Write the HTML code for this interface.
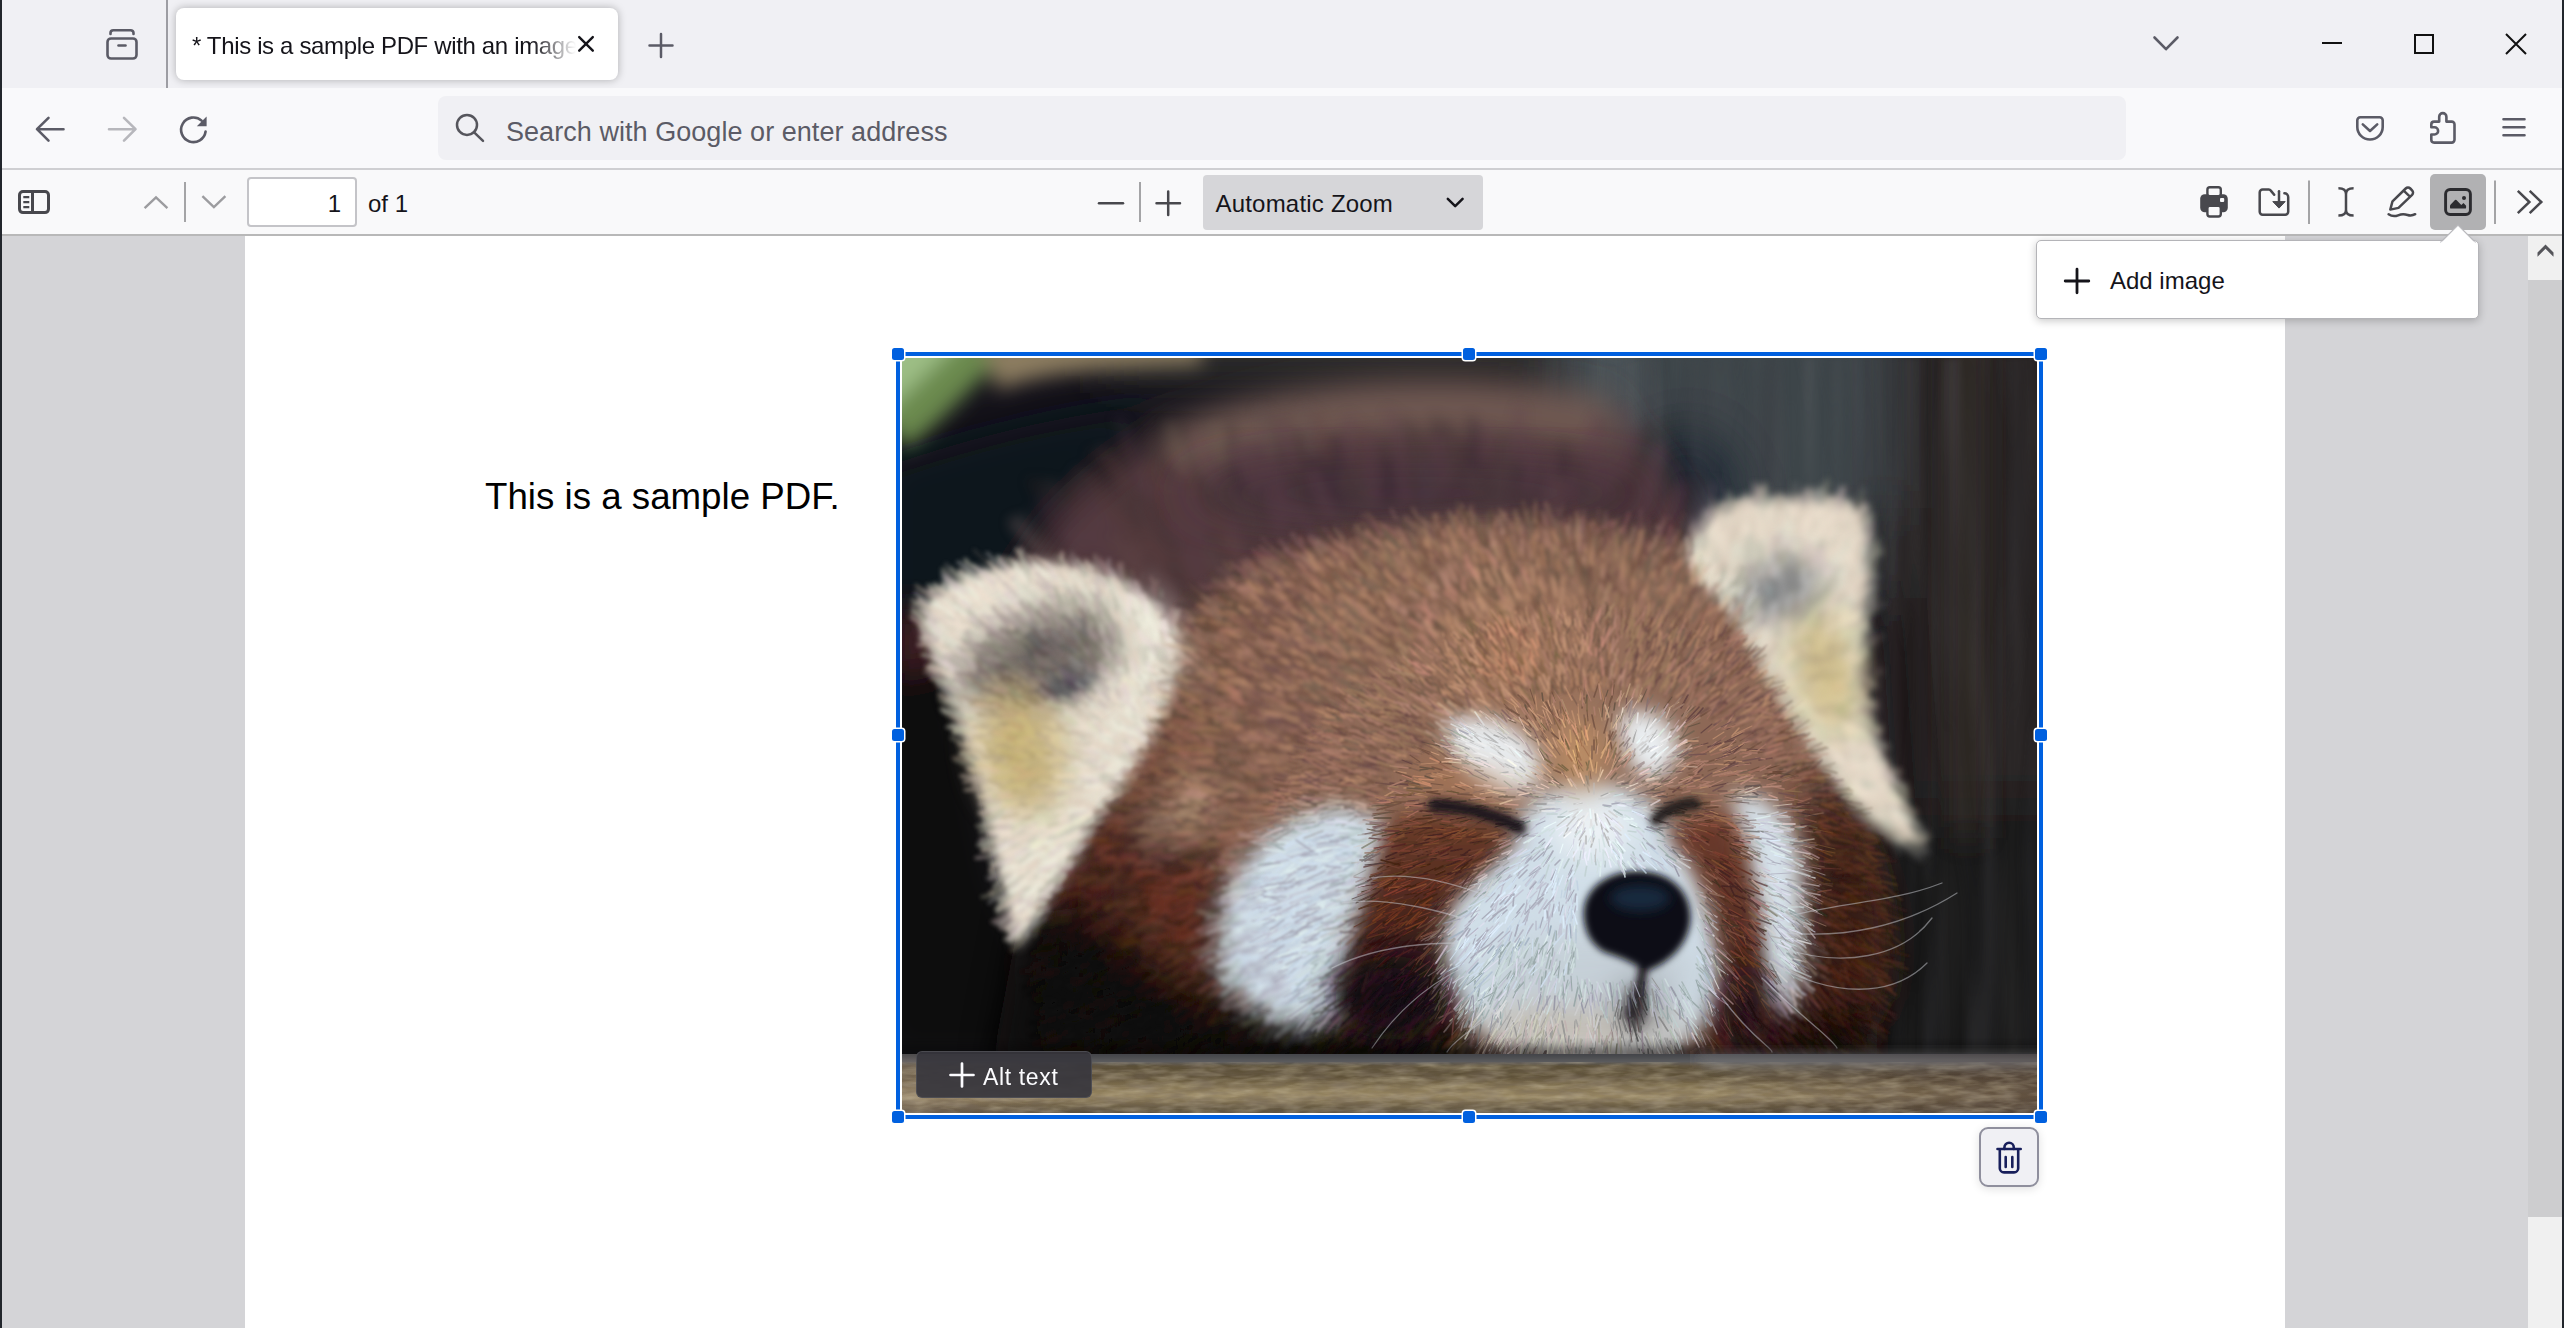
<!DOCTYPE html>
<html lang="en">
<head>
<meta charset="utf-8">
<title>* This is a sample PDF with an image</title>
<style>
*{box-sizing:border-box;margin:0;padding:0}
html,body{width:2564px;height:1328px;overflow:hidden;background:#d4d4d7}
body{font-family:"Liberation Sans",sans-serif;color:#15141a;position:relative}
.abs{position:absolute}
svg{position:absolute;overflow:visible}
.ico{fill:none;stroke:#5b5b66;stroke-width:2.6;stroke-linecap:round;stroke-linejoin:round}
.pico{fill:none;stroke:#4a4a4f;stroke-width:3;stroke-linecap:round;stroke-linejoin:round}
#tabbar{left:0;top:0;width:2564px;height:88px;background:#f0f0f4}
#navbar{left:0;top:88px;width:2564px;height:80px;background:#f9f9fb}
#navsep{left:0;top:168px;width:2564px;height:2px;background:#cfcfd2}
#pdfbar{left:0;top:170px;width:2564px;height:64px;background:#f9f9fa}
#pdfsep{left:0;top:234px;width:2564px;height:2px;background:#b8b8b8}
#viewer{left:0;top:236px;width:2564px;height:1092px;background:#d4d4d7}
#page{left:245px;top:236px;width:2040px;height:1092px;background:#fff}
#edgeL{left:0;top:0;width:2px;height:1328px;background:#22262c}
#edgeR{left:2562px;top:0;width:2px;height:1328px;background:#22262c}
#tab{left:176px;top:8px;width:442px;height:72px;background:#fff;border-radius:8px;box-shadow:0 0 8px rgba(0,0,0,.28)}
#tabtxt{left:192px;top:28px;width:386px;height:36px;font-size:24px;line-height:36px;white-space:nowrap;overflow:hidden;letter-spacing:-0.35px;color:#15141a;
 -webkit-mask-image:linear-gradient(90deg,#000 340px,transparent 384px);mask-image:linear-gradient(90deg,#000 340px,transparent 384px)}
#tabsep{left:166px;top:0;width:2px;height:88px;background:#9d9da3}
#urlbar{left:438px;top:96px;width:1688px;height:64px;background:#f0f0f4;border-radius:8px}
#urltxt{left:506px;top:111.5px;letter-spacing:.05px;font-size:27px;line-height:40px;color:#5b5b66;white-space:nowrap}
#pageno{left:247px;top:177px;width:110px;height:50px;background:#fff;border:2px solid #c4c4c8;border-radius:4px;font-size:24px;line-height:50px;text-align:right;padding-right:14px}
#ofn{left:368px;top:184px;font-size:24px;line-height:40px;white-space:nowrap}
#zoomsel{left:1203px;top:175px;width:280px;height:55px;background:#d6d6d9;border-radius:4px}
#zoomtxt{left:1215.5px;top:184px;letter-spacing:.2px;font-size:24px;line-height:40px;white-space:nowrap}
.vsep{width:2px;background:#b0b0b4}
#imgbtn{left:2430px;top:174px;width:56px;height:56px;background:#b1b1b3;border-radius:5px}
#pdftext{left:485px;top:475px;font-size:36.700px;line-height:44px;color:#000;white-space:nowrap}
#selbox{left:896px;top:352px;width:1147px;height:767px;border:4px solid #0060df;box-shadow:0 0 0 1.500px #fff, inset 0 0 0 2px #fff}
.hd{width:12px;height:12px;background:#0060df;border-radius:2.500px;box-shadow:0 0 0 1.500px #fff}
#altbtn{left:916px;top:1051px;width:176px;height:47px;background:rgba(56,55,61,.93);border-radius:6px;border:1px solid rgba(90,90,96,.6)}
#altbtn span{position:absolute;left:66px;top:6px;font-size:23px;line-height:38px;color:#fbfbfe;white-space:nowrap;letter-spacing:.65px}
#delbtn{left:1979px;top:1127px;width:60px;height:60px;background:#f0f0f4;border:2.500px solid #8f8f9d;border-radius:9px;box-shadow:0 2px 10px rgba(0,0,0,.12)}
#popup{left:2036px;top:240px;width:443px;height:79px;background:#fff;border:1.500px solid #b4b4b8;border-radius:5px;box-shadow:0 2px 8px rgba(0,0,0,.22)}
#poptxt{left:2110px;top:262px;font-size:24px;line-height:38px;white-space:nowrap;color:#15141a}
</style>
</head>
<body>
<div class="abs" id="tabbar"></div>
<div class="abs" id="navbar"></div>
<div class="abs" id="navsep"></div>
<div class="abs" id="pdfbar"></div>
<div class="abs" id="pdfsep"></div>
<div class="abs" id="viewer"></div>
<div class="abs" id="page"></div>

<!-- TAB BAR -->
<div class="abs" id="tabsep"></div>
<div class="abs" id="tab"></div>
<div class="abs" id="tabtxt">* This is a sample PDF with an image</div>

<!-- NAV BAR -->
<div class="abs" id="urlbar"></div>
<div class="abs" id="urltxt">Search with Google or enter address</div>

<!-- PDF TOOLBAR -->
<div class="abs" id="pageno">1</div>
<div class="abs" id="ofn">of 1</div>
<div class="abs" id="zoomsel"></div>
<div class="abs" id="zoomtxt">Automatic Zoom</div>
<div class="abs" id="imgbtn"></div>

<svg id="chromeicons" style="left:0;top:0" width="2564" height="236" viewBox="0 0 2564 236">
<!-- firefox view -->
<g class="ico" stroke-width="3">
<path d="M110.5 34v-1a2.800 2.800 0 0 1 2.800-2.800h17.400a2.800 2.800 0 0 1 2.800 2.800v1"/>
<rect x="107.5" y="38.5" width="29" height="20" rx="3.5"/>
<path d="M118.5 45.5h7"/>
</g>
<!-- tab close -->
<path d="M579.200 37.100l13.600 13.600M592.800 37.100l-13.600 13.600" stroke="#15141a" stroke-width="2.400" fill="none" stroke-linecap="round"/>
<!-- new tab -->
<path d="M649.5 45.5h23M661 34v23" stroke="#5b5b66" stroke-width="2.5" fill="none" stroke-linecap="round"/>
<!-- tabs chevron -->
<path class="ico" d="M2154.5 37.5l11.5 11.7 11.5-11.7" stroke-width="2.5"/>
<!-- window controls -->
<path d="M2322 43h20" stroke="#111" stroke-width="2" fill="none"/>
<rect x="2415" y="35" width="18" height="18" stroke="#111" stroke-width="2" fill="none"/>
<path d="M2506 34l20 20M2526 34l-20 20" stroke="#111" stroke-width="2" fill="none"/>
<!-- back -->
<path class="ico" d="M63.5 129.2H37.5M48.5 117.8L37 129.2l11.5 11.4" stroke-width="2.6"/>
<!-- forward -->
<path class="ico" d="M109 129.2h26M124 117.8l11.500 11.400-11.500 11.400" style="stroke:#b7b7bc" stroke-width="2.600"/>
<!-- reload -->
<path class="ico" d="M205.6 131.5A12.3 12.3 0 1 1 201.6 120.6" stroke-width="2.6"/>
<path d="M206.6 116.4v9.8h-9.8z" fill="#5b5b66"/>
<!-- search -->
<g fill="none" stroke="#55555c" stroke-width="2.5" stroke-linecap="round">
<circle cx="467" cy="124.9" r="10"/>
<path d="M474.4 132.6l8.6 8.3"/>
</g>
<!-- pocket -->
<path class="ico" d="M2360.3 117.2h19.4a3 3 0 0 1 3 3v6.7a12.7 12.7 0 0 1-25.4 0v-6.7a3 3 0 0 1 3-3z" stroke-width="2.5"/>
<path class="ico" d="M2362.8 124.4l7.2 6.6 7.2-6.6" stroke-width="2.5"/>
<!-- extensions -->
<path class="ico" stroke-width="2.5" d="M2439.2 121.6v-4.9a3.6 3.6 0 0 1 7.2 0v4.9h5.3a2.8 2.8 0 0 1 2.8 2.8v15.4a2.8 2.8 0 0 1-2.8 2.8h-17.6a2.800 2.800 0 0 1-2.800-2.800v-5.300h3.200a3.600 3.600 0 0 0 0-7.200h-3.200v-2.900a2.800 2.800 0 0 1 2.800-2.800z"/>
<!-- menu -->
<path class="ico" d="M2503.500 119.200h21M2503.500 127.200h21M2503.500 135.200h21" stroke-width="2.500"/>
<!-- PDF toolbar: sidebar toggle -->
<g fill="none" stroke="#48484d">
<rect x="19.500" y="191.600" width="29" height="21" rx="3.500" stroke-width="3"/>
<path d="M32.500 191.600v21" stroke-width="3"/>
<path d="M23.300 197.200h6M23.300 202.200h6M23.300 207.200h6" stroke-width="2.200"/>
</g>
<!-- prev/next -->
<path d="M144.600 208.200l11.400-10.800 11.400 10.800" fill="none" stroke="#9c9c9f" stroke-width="2.400"/>
<rect x="184" y="182" width="2" height="40" fill="#a4a4a6"/>
<path d="M202.400 196.200l11.500 10.900 11.500-10.900" fill="none" stroke="#9c9c9f" stroke-width="2.400"/>
<!-- zoom out/in -->
<path d="M1099 203.300h24" stroke="#48484d" stroke-width="2.500" fill="none" stroke-linecap="round"/>
<rect x="1139" y="182" width="2" height="40" fill="#a4a4a6"/>
<path d="M1156.500 203.300h23.500M1168.200 191.500v23.500" stroke="#48484d" stroke-width="2.500" fill="none" stroke-linecap="round"/>
<path d="M1447.800 198.800l7.400 7.400 7.400-7.400" stroke="#15141a" stroke-width="2.500" fill="none" stroke-linecap="round" stroke-linejoin="round"/>
<!-- print -->
<g>
<rect x="2200.200" y="194.200" width="27.600" height="18" rx="4.500" fill="#48484d"/>
<rect x="2207.400" y="187.200" width="13.400" height="9" rx="2.500" fill="#f9f9fa" stroke="#48484d" stroke-width="2.400"/>
<rect x="2207.400" y="205.700" width="13.400" height="10.800" rx="2.500" fill="#f9f9fa" stroke="#48484d" stroke-width="2.400"/>
<rect x="2220" y="198.100" width="4.200" height="4" rx="1" fill="#f9f9fa"/>
</g>
<!-- download -->
<g fill="none" stroke="#48484d" stroke-width="2.500" stroke-linecap="round" stroke-linejoin="round">
<path d="M2274.200 194.800l-3.400-4.200a2.500 2.500 0 0 0-2-1h-6.200a2.900 2.900 0 0 0-2.900 2.900v19.300a2.900 2.900 0 0 0 2.900 2.900h22.700a2.900 2.900 0 0 0 2.900-2.900v-14.800a3.800 3.800 0 0 0-3.800-3.800"/>
<path d="M2279 191.200v11"/>
</g>
<path d="M2272.800 201.600h12.400l-6.200 6.500z" fill="#48484d" stroke="#48484d" stroke-width="1" stroke-linejoin="round"/>
<rect x="2308" y="180.500" width="2" height="43.500" fill="#a4a4a6"/>
<!-- text cursor -->
<path d="M2338.400 188.300c4.500 0 7.600 1.600 7.600 5.600v16c0 4-3.100 5.600-7.600 5.600M2353.600 188.300c-4.500 0-7.600 1.600-7.600 5.600M2346 209.900c0 4 3.100 5.600 7.600 5.600" fill="none" stroke="#48484d" stroke-width="2.500"/>
<!-- pen -->
<g fill="none" stroke="#48484d" stroke-width="2.500" stroke-linejoin="round" stroke-linecap="round">
<path d="M2390.300 209.600l2.200-8.300 13.200-12.800a3.300 3.300 0 0 1 4.600 0l1.800 1.800a3.300 3.300 0 0 1 0 4.600l-13.600 13z"/>
<path d="M2404.200 191.200l4.700 4.500"/>
<path d="M2388.600 214.300c3.500 2.400 6.200 2.300 9.500 1 3.400-1.400 6-1.500 9.500-.3 3 1 5.300.5 7.600-.8"/>
</g>
<!-- image btn icon -->
<g>
<rect x="2445.600" y="189.500" width="24.800" height="25" rx="4.500" fill="none" stroke="#2b2b2f" stroke-width="2.900"/>
<circle cx="2464" cy="198" r="2" fill="#2b2b2f"/>
<path d="M2451.200 208.600h13.700a1.200 1.200 0 0 0 1.200-1.200v-1.600l-2.600-2.700-2.200 2-4.900-5a1 1 0 0 0-1.400 0l-4.300 4.500a2.500 2.500 0 0 0-.7 1.700v1.100a1.200 1.200 0 0 0 1.200 1.200z" fill="#2b2b2f"/>
</g>
<rect x="2494" y="180.500" width="2" height="43.500" fill="#a4a4a6"/>
<path d="M2517.800 190.800l11.600 11.200-11.600 11.200M2529.700 190.800l11.600 11.200-11.600 11.200" fill="none" stroke="#48484d" stroke-width="2.500"/>
</svg>

<!--ICONS-END-->
<div class="abs" id="pdftext">This is a sample PDF.</div>
<!--PANDA-START--><svg id="panda" style="left:902px;top:358px;overflow:hidden" width="1135" height="755" viewBox="0 0 1135 755">
<defs>
<filter id="b1" x="-5%" y="-5%" width="110%" height="110%"><feGaussianBlur stdDeviation="0.6"/></filter><filter id="b1b" x="-5%" y="-5%" width="110%" height="110%"><feGaussianBlur stdDeviation="1.2"/></filter><filter id="b2" x="-60%" y="-60%" width="220%" height="220%"><feGaussianBlur stdDeviation="2"/></filter>
<filter id="b3" x="-60%" y="-60%" width="220%" height="220%"><feGaussianBlur stdDeviation="3.500"/></filter>
<filter id="b6" x="-60%" y="-60%" width="220%" height="220%"><feGaussianBlur stdDeviation="6"/></filter>
<filter id="b10" x="-60%" y="-60%" width="220%" height="220%"><feGaussianBlur stdDeviation="10"/></filter>
<filter id="b16" x="-60%" y="-60%" width="220%" height="220%"><feGaussianBlur stdDeviation="16"/></filter>
<filter id="b25" x="-60%" y="-60%" width="220%" height="220%"><feGaussianBlur stdDeviation="25"/></filter>
<radialGradient id="headg" gradientUnits="userSpaceOnUse" cx="610" cy="300" r="420">
<stop offset="0" stop-color="#a87c60"/><stop offset="0.3" stop-color="#8f6b59"/><stop offset="0.65" stop-color="#8b6655"/><stop offset="0.85" stop-color="#735040"/><stop offset="1" stop-color="#5c3a2d"/>
</radialGradient>
<linearGradient id="plankg" x1="0" y1="0" x2="0" y2="1">
<stop offset="0" stop-color="#62646a"/><stop offset="0.13" stop-color="#646466"/><stop offset="0.2" stop-color="#5c5038"/><stop offset="0.38" stop-color="#5e5138"/><stop offset="0.55" stop-color="#847452"/><stop offset="0.7" stop-color="#978662"/><stop offset="0.85" stop-color="#6e6046"/><stop offset="1" stop-color="#544a38"/>
</linearGradient>
<linearGradient id="plankr" x1="0" y1="0" x2="1" y2="0"><stop offset="0" stop-color="#a08a80" stop-opacity=".25"/><stop offset="0.15" stop-color="#a08a80" stop-opacity="0"/><stop offset="0.7" stop-color="#3c2c28" stop-opacity="0"/><stop offset="1" stop-color="#3c2c28" stop-opacity=".6"/></linearGradient>
<filter id="nz" x="0" y="0" width="100%" height="100%"><feTurbulence type="fractalNoise" baseFrequency="0.035 0.16" numOctaves="3" seed="4"/><feColorMatrix values="0 0 0 0 0.64  0 0 0 0 0.56  0 0 0 0 0.40  1.600 0 0 0 -0.550"/></filter>
<filter id="nz2" x="0" y="0" width="100%" height="100%"><feTurbulence type="fractalNoise" baseFrequency="0.035 0.16" numOctaves="3" seed="9"/><feColorMatrix values="0 0 0 0 0.18  0 0 0 0 0.14  0 0 0 0 0.11  1.600 0 0 0 -0.550"/></filter>
<filter id="nzv" x="0" y="0" width="100%" height="100%"><feTurbulence type="fractalNoise" baseFrequency="0.05 0.004" numOctaves="2" seed="3"/><feColorMatrix values="0 0 0 0 0.05  0 0 0 0 0.05  0 0 0 0 0.06  0 0 0 1.800 -0.700"/><feGaussianBlur stdDeviation="3"/></filter>
<filter id="nzw" x="0" y="0" width="100%" height="100%"><feTurbulence type="fractalNoise" baseFrequency="0.05 0.004" numOctaves="2" seed="8"/><feColorMatrix values="0 0 0 0 0.42  0 0 0 0 0.40  0 0 0 0 0.40  0 0 0 1.500 -0.650"/><feGaussianBlur stdDeviation="3"/></filter>
<linearGradient id="tml" gradientUnits="userSpaceOnUse" x1="0" y1="455" x2="0" y2="665"><stop offset="0" stop-color="#6c3e2b"/><stop offset="0.38" stop-color="#532b20"/><stop offset="0.62" stop-color="#3a1f1b"/><stop offset="0.8" stop-color="#241416"/><stop offset="1" stop-color="#150e12"/></linearGradient><linearGradient id="tmr" gradientUnits="userSpaceOnUse" x1="0" y1="455" x2="0" y2="690"><stop offset="0" stop-color="#6e3d2d"/><stop offset="0.45" stop-color="#562d22"/><stop offset="0.75" stop-color="#38201c"/><stop offset="1" stop-color="#1c1012"/></linearGradient>
</defs>
<rect width="1135" height="755" fill="#14121a"/>
<!-- background -->
<g filter="url(#b25)">
<rect x="640" y="-60" width="370" height="300" fill="#3d444a"/>
<rect x="990" y="-60" width="220" height="600" fill="#282422"/>
<path d="M965 150H1000L1030 520H985z" fill="#1b1817"/>
<rect x="940" y="440" width="260" height="300" fill="#191516"/>
<ellipse cx="785" cy="140" rx="62" ry="75" fill="#17232f"/>
<rect x="200" y="-40" width="460" height="58" fill="#33302f"/>
</g>
<g filter="url(#b16)">
<rect x="690" y="-20" width="40" height="150" fill="#4f585d"/>
<rect x="1050" y="-20" width="30" height="500" fill="#302b28"/>
</g>
<rect x="640" y="0" width="495" height="700" filter="url(#nzv)" opacity=".4"/><rect x="640" y="0" width="495" height="700" filter="url(#nzw)" opacity=".16"/>
<g filter="url(#b10)">
<path d="M-30-30H72L-30 82z" fill="#9dbe85"/>
<path d="M5 95L120-20H62L-20 58z" fill="#6a894d"/>
<path d="M95 32C140 14 200 10 300 6L300-20H80z" fill="#8c7d60"/>
</g>
<!-- body hump -->
<g filter="url(#b16)">
<path d="M60 330C100 220 170 130 270 72C370 20 560 5 680 35C750 70 790 150 830 250L300 320z" fill="#4f373b"/>
<path d="M285 88C380 48 540 34 690 62" fill="none" stroke="#715a53" stroke-width="50" stroke-linecap="round"/>
<path d="M-20 110C40 90 130 60 265 45C200 100 120 200 70 310L-20 330z" fill="#10121c"/>
</g>
<g filter="url(#b25)"><ellipse cx="520" cy="135" rx="240" ry="30" fill="#45323a"/></g>
<!-- dark lower-left -->
<g filter="url(#b16)">
<path d="M-20 250L45 255L60 350L95 520L130 600L330 700H-20z" fill="#07070d"/>
<path d="M-10 250L34 252L42 305L-10 318z" fill="#3d1f20"/>
</g>
<!-- head -->
<g filter="url(#b10)">
<path d="M262 292C300 224 400 176 560 163C700 161 800 184 850 242C890 300 900 380 950 450C985 500 990 600 960 700H150C130 620 150 560 180 500C215 430 240 360 262 290z" fill="url(#headg)"/>
</g>
<!-- lower-left fur, shadows -->
<g filter="url(#b16)">
<path d="M135 590C160 520 200 470 262 452C300 470 326 520 326 600C326 650 300 690 300 700H120z" fill="#3f241f"/>
<path d="M120 640C200 600 250 640 330 650C400 665 480 668 570 676V705H100z" fill="#130e11"/><path d="M120 600C150 560 190 520 230 500C230 560 250 620 300 660L140 690z" fill="#2a1714"/>
<path d="M905 420C955 440 992 520 988 600C984 660 962 700 962 700H870C895 620 915 520 905 420z" fill="#341a18"/>
<path d="M830 668C880 660 930 650 975 640V705H810z" fill="#140f11"/>
</g>
<g filter="url(#b16)">
<path d="M118 556L200 548L265 590L330 645L440 672L575 682V705H90z" fill="#100b0d"/>
<path d="M190 450L260 470L335 545L315 640L250 600L195 552z" fill="#4a2a20" opacity=".75"/>
<ellipse cx="285" cy="455" rx="45" ry="28" transform="rotate(-35 285 455)" fill="#a98a74" opacity=".7"/>
</g>
<!-- left ear -->
<g filter="url(#b6)">
<path d="M20 254C34 224 88 204 142 204C212 208 262 238 277 285C280 330 250 400 204 455C172 500 152 548 114 590C100 530 86 450 60 372C44 322 22 292 20 254z" fill="#e6dfd0"/>
</g>
<g filter="url(#b16)">
<ellipse cx="140" cy="305" rx="80" ry="44" transform="rotate(-20 140 305)" fill="#746c66"/>
<ellipse cx="122" cy="395" rx="42" ry="62" transform="rotate(-12 122 395)" fill="#c8b27e"/>
<path d="M238 250C265 262 274 290 268 325" fill="none" stroke="#f4f0e3" stroke-width="20"/>
</g>
<g filter="url(#b6)"><ellipse cx="168" cy="328" rx="26" ry="10" transform="rotate(-15 168 328)" fill="#505056"/><ellipse cx="140" cy="292" rx="16" ry="7" transform="rotate(-25 140 292)" fill="#5b5958"/></g>
<!-- right ear -->
<g filter="url(#b6)">
<path d="M785 200C790 168 814 148 847 143H928C956 144 968 160 966 190C966 250 958 300 962 345C972 395 1006 440 1016 488C985 486 946 446 914 400C886 358 862 318 836 268C815 238 790 225 783 195z" fill="#e5ddcb"/>
</g>
<g filter="url(#b16)">
<ellipse cx="876" cy="234" rx="42" ry="26" transform="rotate(-12 876 234)" fill="#7d8085"/>
<ellipse cx="922" cy="315" rx="28" ry="60" transform="rotate(-12 922 315)" fill="#d2c08c"/>
</g>
<!-- white patches -->
<g filter="url(#b10)">
<path d="M320 568C328 508 370 462 432 448C472 450 498 468 488 508C468 560 452 620 442 660C402 672 350 654 328 624C318 604 318 586 320 568z" fill="#cfdce5"/>
<path d="M545 365C575 350 620 365 640 400C645 425 625 440 600 435C570 425 548 400 545 365z" fill="#e9eef1"/>
<path d="M715 360C735 345 770 355 775 385C775 410 760 425 742 420C725 405 715 385 715 360z" fill="#e9eef1"/>
<path d="M640 438C670 418 720 420 752 450C790 490 812 560 818 615C815 660 790 692 740 696C680 700 610 696 575 668C540 630 530 590 545 550C570 505 610 465 640 438z" fill="#d0dee8"/>
<path d="M828 438C852 428 884 450 895 490C904 540 902 600 888 648C872 655 852 650 848 630C855 570 850 500 828 438z" fill="#d6e1e9"/>
</g>
<g filter="url(#b16)"><ellipse cx="680" cy="668" rx="105" ry="24" fill="#c2baae"/><ellipse cx="690" cy="615" rx="110" ry="40" fill="#c3ccd3" opacity=".8"/><ellipse cx="738" cy="648" rx="26" ry="30" fill="#7c7e85" opacity=".6"/><ellipse cx="690" cy="470" rx="40" ry="30" fill="#eef3f6"/></g>
<!-- dark marks -->
<g filter="url(#b10)">
<path d="M487 462C520 448 570 452 618 472C616 490 580 515 548 545C530 590 532 630 548 660C510 672 455 665 438 640C445 590 465 525 487 462z" fill="url(#tml)"/>
<path d="M764 476C785 460 810 452 826 458C850 510 862 580 864 640C850 690 842 690 836 690C826 650 824 600 818 560C808 520 790 500 764 476z" fill="url(#tmr)"/>
</g>
<g filter="url(#b16)"><ellipse cx="490" cy="640" rx="58" ry="42" fill="#170f13"/><ellipse cx="845" cy="655" rx="24" ry="42" fill="#231214" opacity=".9"/><ellipse cx="560" cy="425" rx="60" ry="14" transform="rotate(12 560 425)" fill="#b47c54" opacity=".7"/></g>
<!-- forehead light -->
<g filter="url(#b16)"><ellipse cx="678" cy="398" rx="26" ry="38" fill="#c7976a" opacity=".85"/></g>
<!-- nose -->
<g filter="url(#b3)">
<path d="M682 562C678 532 705 512 738 513C772 514 792 538 788 566C784 590 765 606 742 614C735 606 720 600 702 594C689 586 684 576 682 562z" fill="#0a0e16"/>
<path d="M741 610C739 630 736 645 728 660" stroke="#1d181b" stroke-width="9" fill="none"/>
</g>
<g filter="url(#b6)"><ellipse cx="738" cy="540" rx="30" ry="13" fill="#1b3149" opacity=".8"/><ellipse cx="733" cy="650" rx="11" ry="20" fill="#2a2428" opacity=".85"/></g>
<g filter="url(#b1)" fill="none" stroke-linecap="round" opacity=".8">
<path stroke="#302010" stroke-width="1.6" d="M482 574l-10 5M501 576l-12 8M830 630l5 8M473 578l-7 7M516 567l-15 11M515 612l-11 6M490 562l-10 3"/>
<path stroke="#c0c0c0" stroke-width="1.6" d="M563 369l-15-10M848 482l10 5M743 394l3-6M711 470l8 7M760 664l3 15M753 687l5 9M648 449l-12 6M894 576l11 7M598 664l-6 16M563 392l-13-9M715 673l2 10M574 660l-5 9M890 547l11 3M586 406l-13-4M770 494l12 5M570 380l-15-8M470 482l-11 1M693 461l2 6M738 392l6-6M895 562l14 5M864 532l18 9M716 673l-3 14M576 378l-14-7M888 613l17 8M755 662l3 19M797 546l8 8M804 562l12 10M706 479l5 12M660 441l-11 2M590 655l-3 10M641 634l1 17M896 581l8 9M680 445l-8 1M628 649l-1 15M603 652l1 17M467 503l-17 2M874 465l12 4M885 553l12 13M893 535l13 12M673 459l-8 9M686 643l-7 16M690 638l-1 17M868 603l10 5M875 459l18 0"/>
<path stroke="#c0c0d0" stroke-width="1.6" d="M624 613l-6 10M601 583l-8 9M651 599l-2 9M565 589l-13 16M587 589l-7 9M877 488l19 3M671 606l-1 10M622 613l-2 13M709 469l8 7M669 619l-1 12M756 505l6 7M650 554l-3 7M601 631l-8 11M654 602l-1 13M750 644l1 14M576 550l-12 9M596 542l-3 11M652 531l-1 12M606 619l-9 11M663 556l1 12M597 646l-5 8M652 548l-5 16M585 570l-4 16M886 525l11 4M602 523l-4 15M576 638l-14 16M645 617l-6 14M600 635l-8 14M564 571l-13 10M648 546l-3 14M750 626l15 12M859 465l10 1M621 532l-9 8M645 542l-8 13M644 525l-7 5M576 602l-12 13M860 485l11 3M659 566l0 11M647 616l-1 12M685 621l0 14M637 465l-8 7M571 561l-8 7M683 470l-5 10M628 522l-4 6M641 524l-6 7M633 523l-5 7M637 620l0 15M669 534l-5 11M631 529l-5 8M621 606l-11 16M599 539l-9 12M767 501l9 9M655 602l-7 14M879 575l13 10"/>
<path stroke="#c09070" stroke-width="1.6" d="M784 358l4-7M678 342l1-9M670 342l-7-13M798 430l10-2M826 393l16-7M673 364l-3-11M492 433l-16 9M808 394l14-9M539 419l-10-1M504 415l-12-2M839 392l18 0M703 390l5-6M787 425l14-5M559 428l-9 1M704 383l1-9M664 362l-6-10M830 378l7-8M663 382l-3-13M836 417l12 0M830 380l12-7M813 406l16 1M540 418l-9-2M618 347l-11-12M818 392l12-5M513 429l-11 1"/>
<path stroke="#909090" stroke-width="1.1" d="M609 659l-7 16M661 666l2 12M896 549l9 4M673 663l-1 19M807 597l10 15M892 605l15 9M625 662l-5 22M626 666l-3 12M661 439l-5-1M654 438l-13-3M842 442l16 1M894 513l14 8M643 667l-2 9M695 656l-3 9M601 680l-6 9M855 493l10 4M885 477l8 4M640 670l-5 21M894 543l12 8M693 683l-2 22M629 657l-1 14M673 692l1 19M889 601l18 10M713 654l-2 13M844 454l9 1M897 558l14 5M753 647l8 13M715 668l1 19M785 665l15 17M889 589l15 12M891 530l18 8M890 566l12 16M754 680l13 18M765 680l4 14M878 463l9 1M784 667l2 13M553 374l-10-4M649 670l-1 10M750 620l8 12M464 512l-12 6M764 683l1 11M804 576l14 8M725 438l13-2M582 659l-11 16M602 678l-3 22M772 678l0 10"/>
<path stroke="#503020" stroke-width="1.6" d="M543 480l-13 2M559 483l-14 5M832 519l10 0M548 507l-11 4M828 629l15 15M908 470l20 1M538 498l-10 6M818 470l17 0M484 512l-16 7M808 466l16 6M505 480l-13 4M584 471l-11 0M530 460l-16 1M512 463l-9 0M819 478l18 1M793 463l15-1M586 482l-14 4M811 502l13 3M526 498l-15 5M527 491l-14 1M826 501l12 4M490 502l-14 9M829 485l17 5M524 570l-10 10M816 508l11 7M800 478l7 4M474 544l-17 7M509 493l-11 4M581 499l-10 5M475 535l-20 9M540 461l-13 4M520 513l-16 7M800 491l9 2M547 506l-9 3M828 486l11 4M810 502l9 5M522 486l-10 3M818 539l13 7M815 476l11 7M786 469l7 1"/>
<path stroke="#a0b0b0" stroke-width="1.6" d="M588 630l-7 11M636 580l-3 8M599 519l-7 8M653 574l-3 12M631 601l-3 8M749 470l6 4M601 638l-9 13M630 599l-4 11M648 595l-4 15M795 610l15 13M759 651l8 14M667 459l-11 0M607 628l-2 10M628 586l-6 14M707 487l6 7M582 535l-8 4M567 643l-11 18M863 526l16 11M765 502l10 7M572 619l-6 8M715 626l3 18M594 629l-8 14M587 652l-9 18M794 606l15 14M728 467l8 3M712 452l8 5M597 608l-4 10M615 608l-6 12M757 642l-1 9M780 624l9 17M800 644l13 11M611 593l-7 10M610 596l-4 12M583 648l-8 17M664 584l-1 8M720 622l6 14M567 618l-9 14M802 597l8 8M705 649l0 11"/>
<path stroke="#807060" stroke-width="1.6" d="M722 426l6-3M711 382l3-5M769 416l7-7M539 571l-13 11M746 345l5-8M740 424l8-4M752 429l9-9M727 419l5-10M768 461l15 3M661 428l-9-6M780 373l3-7M717 389l5-5"/>
<path stroke="#b0c0c0" stroke-width="1.6" d="M708 625l8 17M683 622l-1 8M754 641l6 18M617 599l-5 14M878 600l10 10M667 501l-5 9M576 636l-3 16M704 623l4 14M668 624l-10 15M665 633l-2 15M885 601l9 5M884 614l16 9M779 632l2 9M673 599l-3 11M646 488l-6 4M578 538l-11 13M637 586l-2 13M887 600l16 14M797 616l5 10M603 646l-4 19M796 632l13 15M772 633l6 13M673 600l-6 16M704 640l1 18M643 628l-4 18M731 494l4 13M889 513l12 3M596 653l-2 10M650 488l-5 3M661 626l-6 12M870 583l20 8M716 486l5 9M651 585l-8 11M854 483l8 6M621 637l-4 15M639 612l-5 14M749 638l1 13M604 644l-11 17"/>
<path stroke="#909090" stroke-width="1.6" d="M750 631l3 14M722 374l7-11M699 658l-3 12M893 588l19 12M570 653l-6 16M556 619l-4 15M841 464l12 5M700 678l0 10M567 644l-13 9M715 659l4 13M723 628l1 19M660 663l4 21M742 692l6 19M801 561l8 9M889 529l15 2M658 677l0 16M719 683l0 17M694 694l3 17M734 680l2 14M803 591l6 12M890 578l12 6M643 664l2 20M648 672l-1 9M749 469l12 8M650 666l0 15M650 677l-1 21M785 665l8 18M644 446l-12 0M763 487l12 9M611 663l4 16M653 693l-3 12M763 681l7 18M754 674l1 10M713 655l-2 16M575 650l-6 21M667 678l-1 10"/>
<path stroke="#402010" stroke-width="1.1" d="M526 516l-19 6M838 576l13 9M501 504l-16 5M510 556l-15 6M527 543l-10 11M524 559l-11 4M534 510l-12 5M833 598l7 12M496 515l-20 5M515 535l-12 2M831 538l7 8M527 559l-10 6M833 592l12 10M833 658l8 21M840 577l8 7M528 529l-17 11M503 557l-12 12M499 552l-18 13M489 588l-13 8M517 506l-16 5M517 540l-6 8"/>
<path stroke="#a0b0b0" stroke-width="1.1" d="M598 648l-6 13M672 598l-5 15M580 647l-4 16M761 638l9 14M609 613l-12 13M713 437l9-1M683 624l4 13M712 631l-2 15M795 622l10 14M884 499l19 2M801 607l4 12M592 526l-8 5M606 635l-7 14M613 586l-5 13M703 503l0 6M670 592l0 9M671 588l-3 15M779 651l3 9M777 648l2 10M641 590l-1 15M800 606l7 11M655 617l-2 12M693 497l1 10M619 607l-2 11M635 580l-5 11M798 647l6 17M702 448l6 1M568 640l-6 14M766 655l4 9M756 488l10 9"/>
<path stroke="#606060" stroke-width="1.6" d="M569 530l-12 11M567 663l2 12M739 668l1 16M727 641l1 12M624 464l-12-1M737 691l7 18M577 522l-11 6M691 693l0 16M737 659l1 15M771 687l7 10M606 688l-11 19M727 665l2 19"/>
<path stroke="#807060" stroke-width="1.1" d="M604 363l-5-8M729 413l5-3M831 456l14 6M635 384l-11-7M476 461l-15 1M785 504l15 5M832 461l13 2M616 452l-10 0M726 424l8-6M597 359l-9-5M753 423l15 0M778 370l10-3M565 414l-15-6M866 443l13-1"/>
<path stroke="#a0a0a0" stroke-width="1.6" d="M635 655l-3 19M680 682l-6 17M625 676l-6 19M553 581l-7 7M803 660l6 8M794 536l8 6M757 675l-4 20M596 661l-8 10M609 672l0 19M879 579l18 11M870 537l10 2M893 512l15 6M657 655l-1 12M552 580l-10 12M720 693l3 15M763 680l8 13M751 671l6 18M745 675l1 14M731 384l3-12M623 413l-5-4M574 659l-3 22M644 676l-3 11M674 662l3 10M856 456l15 0M635 453l-7-1M602 381l-10-4M750 414l12-8M888 486l13 1M701 644l2 14M729 441l8 0M648 451l-10 1M567 391l-10-4M706 644l-5 15M848 488l11 3M856 473l15 1M771 681l5 11M884 521l18 4M559 382l-10-7M769 668l12 16M879 583l10 16M584 403l-7-2M772 652l13 14M653 441l-11 0M750 366l3-6M883 472l19-3"/>
<path stroke="#503020" stroke-width="1.1" d="M506 466l-20 3M841 630l9 12M802 499l12 5M834 498l13 1M508 494l-9 0M820 554l11 7M515 484l-18 0M816 513l11 5M802 507l6 7M515 485l-14 3M583 491l-9 4M542 492l-10 7M550 501l-9 2M516 471l-15 3M525 595l-7 12M559 479l-14 4M580 475l-10 5M533 462l-16 6M822 553l9 15M827 578l11 9M527 470l-15 7M817 498l13 12M500 471l-10-1M569 507l-14 9M534 473l-18 4M472 547l-13 3M825 477l16 8M558 518l-16 7M809 510l12 10M548 481l-8 3M840 538l15 9M822 559l11 6M804 465l10-3M804 473l8 3M822 505l13 12M528 460l-16 2M499 502l-9 5M826 498l11 7M816 536l8 8M822 530l9 10M547 535l-11 8"/>
<path stroke="#c0c0c0" stroke-width="1.1" d="M745 379l9-4M675 640l-2 16M760 685l2 11M607 375l-10-6M746 394l5-5M762 682l6 15M702 455l8 7M808 621l5 14M776 679l6 21M896 510l14 4M679 650l1 14M685 652l2 21M688 645l-2 19M892 504l9 5M694 456l4 5M557 618l-6 7M872 603l11 9M606 645l-5 10M566 642l-11 14M877 459l9 0M660 681l-4 18M665 460l-10 8M866 531l16 11M683 681l-2 20M692 436l0-11M568 370l-9-10M677 461l-6 8M582 390l-14-6M752 675l8 17M605 657l-4 14M650 442l-6-3M689 641l-3 11M847 441l10 1M803 638l7 11M680 464l-7 11M647 439l-14-1M813 608l13 9M653 653l-8 16M857 521l18 4M742 675l9 13M625 398l-11-7M578 662l-8 8M605 377l-10-7M783 672l3 15M881 482l16 2M562 639l-5 14M620 649l-2 14M694 491l-1 13M803 644l8 14M574 375l-15-9M691 641l0 20M632 456l-14 4M722 683l0 18M752 380l12-8M698 663l2 18M740 394l13-6M565 379l-11 0M603 502l-9 2M895 594l8 10M696 684l-2 16M615 386l-5-5M845 446l16 3"/>
<path stroke="#c0d0e0" stroke-width="1.6" d="M746 497l9 11M586 590l-8 7M670 551l-1 12M665 528l-3 11M606 542l-8 5M583 586l-10 7M749 490l7 6M675 523l1 9M755 503l11 10M670 519l-5 13M606 570l-3 8M641 561l-5 10M630 521l-5 6M642 517l-6 8M617 567l-6 16M735 505l9 10M609 576l-7 12M669 525l-2 7"/>
<path stroke="#402020" stroke-width="1.1" d="M833 564l5 8M812 668l10 12M510 494l-12 3M588 459l-15-3M564 507l-11 10M574 479l-10 0M550 455l-15-4M543 498l-11 2M825 568l8 9M544 448l-12-5M564 459l-16 3M578 453l-10 2M564 451l-8 0M827 569l7 8M480 523l-11 2M849 591l10 9M827 570l11 11M527 484l-15 3M840 653l15 18M537 494l-12 3M549 448l-12 1M493 500l-9 2M843 631l8 7M542 537l-11 8M590 459l-15 6M570 501l-9 6M550 476l-13 5M580 483l-12 2M487 598l-14 13M520 583l-14 12M907 470l16 4M845 629l6 16M543 497l-10 3M829 553l12 7M831 547l12 5M511 474l-17 3M546 469l-10 3M854 612l6 12M553 513l-8 3M839 560l11 5"/>
<path stroke="#606060" stroke-width="1.1" d="M723 666l3 9M743 648l0 11M902 540l16 6M900 528l17 6M729 661l0 18M765 689l10 13"/>
<path stroke="#907070" stroke-width="1.1" d="M905 519l14 8M904 508l15 3M571 519l-14 7M554 400l-9-5M571 519l-10 4M734 423l11-7M605 364l-4-7M850 539l7 5M817 617l10 9M571 417l-9-8"/>
<path stroke="#e0f0f0" stroke-width="1.6" d="M623 499l-4 6M882 548l10 5M873 496l9 1M575 618l-13 13M870 487l19 7M719 504l4 12M588 629l-9 7M631 480l-9 5M589 586l-12 13M720 504l3 15M854 466l8 1M869 493l13 5M601 589l-3 9M593 592l-3 8M699 504l-1 14M853 461l15-3M593 596l-7 7M739 486l8 9M646 468l-6 5M726 503l3 6M560 579l-6 13M646 577l-4 10M617 577l-5 11M578 546l-6 11M616 586l-3 7M622 579l-3 8M661 501l-4 11"/>
<path stroke="#703020" stroke-width="1.1" d="M512 522l-8 4M481 569l-13 7M500 552l-16 11M524 527l-14 8M511 572l-10 5M495 566l-19 5M497 568l-14 11M516 559l-7 7M502 550l-7 7M507 556l-15 6M531 534l-10 7M508 529l-18 8M503 525l-14 5M527 531l-12 4M535 543l-14 10M500 565l-9 8"/>
<path stroke="#905040" stroke-width="1.6" d="M548 464l-8-1M843 570l9 4M559 523l-10 6M791 483l12 0M809 468l8 1M494 481l-12 0M799 465l16 2"/>
<path stroke="#f0ffff" stroke-width="1.6" d="M680 452l-6 5M708 483l2 8M722 461l9 0M703 465l4 6M688 471l1 11M619 399l-10-10M725 459l6 2M735 385l7-7M688 451l1 10M754 399l12-10M715 484l8 9"/>
<path stroke="#402020" stroke-width="1.6" d="M846 613l14 14M518 491l-7 4M813 509l15 10M824 562l7 7M523 503l-17 8M536 546l-7 8M565 505l-11 5M473 580l-9 7M844 580l11 8M530 470l-19 0M516 599l-9 9M511 579l-8 11M546 496l-17 5M479 580l-11 12M498 493l-14 6M833 525l11 10M575 498l-16-1M526 611l-15 12M832 537l11 4M795 482l11 2M532 477l-9 6M803 502l12 10M827 553l9 14M835 628l10 13M522 607l-9 7M492 592l-20 10M489 577l-15 15M827 526l7 15M844 579l14 8M541 546l-9 6M833 657l7 9M519 584l-7 9M515 600l-16 12M845 656l11 14M847 566l7 8M536 453l-18 0M818 505l12 7M502 593l-9 11M843 652l15 15M835 542l8 12M479 532l-10 8M568 492l-7 5M525 494l-9 4M564 472l-14 4M835 577l11 11M534 606l-5 21M828 525l12 9M560 491l-11 2M540 476l-14 2M820 528l15 1M558 502l-13 6M525 515l-8 3M559 514l-16 3M547 449l-10-1"/>
<path stroke="#907050" stroke-width="1.6" d="M680 382l-1-12M662 413l-8-4M602 451l-8 1M703 391l1-11M677 374l-3-7"/>
<path stroke="#d0e0e0" stroke-width="1.1" d="M697 481l1 13M692 474l-3 13M692 467l-1 13M713 481l3 11M681 623l-2 15M577 641l-14 15M670 487l-4 9M736 451l9-2M668 640l-7 17M883 609l9 11M648 624l-4 17M795 567l6 16M882 481l19 3M887 549l15 0M631 639l-7 13M889 570l11 6M598 605l-6 13M652 470l-5 3M687 621l4 11M665 632l-2 13M683 639l-5 8M652 584l-3 18M710 499l3 7M466 482l-10 1M639 634l-3 11M866 532l16 12M664 592l-2 11M689 478l-3 6M669 596l-6 13M690 468l3 11M785 658l13 15M641 448l-6 0M598 613l-9 17M727 476l12 7M689 495l1 11M660 586l-5 10M569 614l-12 14M695 501l3 8M680 621l-1 19M697 504l-2 11M624 631l-4 19M644 645l-2 10M643 603l-9 10"/>
<path stroke="#908080" stroke-width="1.6" d="M779 500l7 5M633 436l-11 1M806 656l9 20M631 439l-7-2M722 388l6-8M463 520l-9 4M663 692l0 18M705 682l1 21M709 665l2 17M542 608l-7 8M733 413l6-5M632 691l-1 15M687 694l4 21M781 501l8 1M753 354l4-9"/>
<path stroke="#b09080" stroke-width="1.1" d="M672 427l-3-7M861 435l9 0M826 434l12-4M826 440l8 0M825 445l12 0M772 417l8-3M829 433l18-2M824 438l13-4M723 419l9-6M881 453l19 0"/>
<path stroke="#804030" stroke-width="1.6" d="M592 478l-12 2M561 501l-10 1M501 471l-16 11M829 501l10 4M813 494l13 5M547 489l-17 5M791 479l12 4M804 474l8 4M511 487l-15 7M540 478l-10 1M540 489l-9 3M829 593l13 8M535 478l-14 2M503 521l-10 3M548 518l-13 7M843 571l7 10M814 509l10 4M840 561l18 5M831 609l12 17M510 508l-9 2M508 493l-19 0"/>
<path stroke="#ffffff" stroke-width="1.6" d="M695 456l3 8M680 459l-5 10M749 393l12-7"/>
<path stroke="#b0b0b0" stroke-width="1.1" d="M729 670l0 12M602 392l-10-4M679 482l-2 6M743 374l5-14M894 558l10 11M600 652l-5 10M588 518l-13 9M798 551l13 13M626 684l0 10M723 683l0 13M794 551l9 12M794 533l7 2M616 664l-14 16M572 384l-8-4M708 470l5 4M722 435l11-2M598 389l-10-4M683 473l-6 9M704 479l3 6M621 686l0 9M605 381l-12-9M742 360l8-9M807 587l6 15M579 384l-12-11M768 674l4 13M860 530l10 7M620 419l-7-4M747 384l8-12M589 409l-10-4M602 399l-10-9M759 683l2 22M691 685l-5 22M706 638l7 18M601 399l-5-5M676 469l-3 10M596 385l-14-5M734 441l8-1M761 662l3 9M724 680l0 17M679 653l-1 10M730 447l12 0"/>
<path stroke="#906050" stroke-width="1.6" d="M786 462l16 1M837 493l8 0M791 461l9 0M850 562l6 7M817 455l15 4M530 456l-9-2M800 447l12-3M815 460l16 5M804 514l11 7M886 433l13-6M778 469l15 2M896 445l13-5M794 504l8 5M492 474l-21 3M512 457l-10-2"/>
<path stroke="#c0d0e0" stroke-width="1.1" d="M643 496l-7 6M609 568l-2 15M608 567l-6 14M591 534l-8 11M616 531l-8 8M669 538l2 10M594 557l-3 7M618 562l-4 9M569 552l-11 8M743 471l12 7M574 594l-5 10M651 540l-6 7M632 536l-5 8M627 518l-6 5M657 520l-2 7M647 566l-3 7M668 551l-3 11M660 532l-1 8"/>
<path stroke="#b09070" stroke-width="1.1" d="M479 448l-14 2M779 422l12-5M827 433l10-1M860 418l15-4M700 363l-3-13"/>
<path stroke="#c0c0d0" stroke-width="1.1" d="M603 524l-8 7M594 556l-5 6M800 583l9 13M568 585l-5 9M637 513l-5 6M578 552l-17 7M630 608l-2 16M862 513l17 9M804 637l8 13M641 541l-5 7M658 568l-2 9M668 548l-2 7M643 459l-5 3M699 467l3 12M597 564l-9 11M881 506l12 2M465 501l-10 5M673 537l-3 12M762 643l6 6M778 650l6 10M613 623l-8 15M654 551l-9 12M612 542l-11 10M658 567l-1 14M626 545l-7 14M801 586l10 10M730 450l10 1M724 447l11 3M591 568l-8 8M560 560l-12 12M628 497l-11 9M623 623l-2 8M645 565l-6 12M618 599l-6 11M631 517l-8 10M876 491l8 3M875 569l19 4M584 525l-17 2M731 453l8 2M613 507l-13 9M756 631l8 17M865 505l9 2M873 471l16 3M634 603l-7 12M669 568l1 10M593 551l-10 13M617 606l0 13M799 618l7 18M600 548l-5 6M604 506l-11 8M781 631l7 19M623 607l-6 12M653 594l-4 17M692 473l-3 11M643 611l5 13M636 475l-11 3M602 522l-16 7M804 583l5 8M667 525l-1 7M894 564l19 10M710 642l2 10M635 533l-7 7M870 458l15-4"/>
<path stroke="#302010" stroke-width="1.1" d="M524 614l-9 9M488 601l-10 8M823 661l6 9M836 601l8 7M516 606l-12 11M843 601l11 5"/>
<path stroke="#303030" stroke-width="1.1" d="M758 453l11 4M617 465l-9 5M555 656l-11 17"/>
<path stroke="#d0a070" stroke-width="1.1" d="M652 375l-6-11M688 399l1-6M683 380l5-14M677 389l-3-10"/>
<path stroke="#806050" stroke-width="1.6" d="M828 426l14-3M690 401l0-13M625 349l-7-11M653 366l-3-14M518 413l-16-5M567 435l-8 1M694 395l1-8M546 400l-9-7M491 428l-20-1M684 372l-2-15M676 348l-6-10M644 383l-5-5M641 376l-4-10M659 355l-1-11M535 573l-16 6M708 381l0-8M902 473l16 1M712 408l2-13M709 364l1-8M781 456l13 1M903 458l18-3M512 437l-14 0M786 410l13-1M516 407l-12-4M600 481l-11 12M899 446l17 2"/>
<path stroke="#e0e0e0" stroke-width="1.1" d="M713 468l6 5M582 377l-9-4M563 372l-7-6M601 375l-14-4M603 647l-6 9M809 600l7 10M757 388l10-6M683 482l-2 13M701 439l7-4M616 401l-12-9M728 674l1 10M603 646l-7 14M809 614l8 17M731 378l5-11M580 524l-4 7M598 394l-13-8M664 444l-7 1M680 444l-6 2M689 461l-1 9"/>
<path stroke="#b0b0c0" stroke-width="1.6" d="M729 500l8 11M752 651l5 18M661 635l2 20M621 572l-8 12M872 544l13 6M718 624l-2 9M608 517l-7 10M716 629l-3 19M862 474l13 6M580 581l-7 9M674 548l-3 12M637 508l-9 8M639 541l-9 10M665 567l-1 14M687 638l3 19M638 478l-12 0M652 450l-8 2M626 507l-11 9M627 554l-6 11M759 499l12 10M669 519l-1 13M618 514l-8 12M704 640l0 17M870 601l11 8M606 537l-7 5M859 480l17 2M631 566l-8 13M646 526l-6 11"/>
<path stroke="#707060" stroke-width="1.6" d="M547 559l-13 9M887 469l12 3M476 490l-14 9M715 686l-1 10M755 450l6 0M544 595l-10 17"/>
<path stroke="#806050" stroke-width="1.1" d="M550 433l-8 1M658 397l-7-10M647 373l-3-8M641 366l-4-7M683 386l0-14M651 406l-5-3M526 406l-12-2M572 429l-7 0M682 337l1-15M649 370l-7-14M558 530l-13 3M530 390l-8-4M790 394l6-4M820 571l6 12M844 525l8 5M646 381l-6-10M911 541l9 5M645 384l-5-8M653 379l-4-5M540 405l-12-9M796 439l15 1M631 371l-10-11M785 415l16-4M707 346l4-11M811 540l11 7M522 447l-8 2M522 395l-12-6M520 396l-16-2M650 367l-9-10M904 484l10 1M605 450l-9 3M643 374l-4-7M538 414l-14 2M602 479l-9 3M620 361l-11-10M639 384l-6-5M481 507l-10 1M689 421l-1-8"/>
<path stroke="#403030" stroke-width="1.6" d="M820 615l7 14M824 600l13 10M543 630l-12 15M758 464l8 1M545 627l-17 15M820 571l7 9M553 532l-13 12M570 451l-9 4M533 593l-11 5M546 543l-17 6M591 461l-14-5M816 654l10 5"/>
<path stroke="#f0ffff" stroke-width="1.1" d="M711 483l7 8M729 466l7 3M671 455l-11 6M572 377l-10-7M682 465l-3 10M676 486l0 6M654 464l-12 6M661 486l-3 9M714 480l3 5M716 490l5 11M713 497l5 11"/>
<path stroke="#706050" stroke-width="1.6" d="M643 401l-6-9M777 402l9-3M613 439l-11 0M778 381l14-8M760 424l9-2M547 556l-11 14M709 421l5-6M782 440l8-2M784 386l10-5M832 435l11-5M836 430l13 3M656 425l-6-6M605 438l-8 1M762 355l3-7M716 409l9-7"/>
<path stroke="#9090a0" stroke-width="1.6" d="M653 638l-1 14M884 602l14 11M594 653l2 11M690 627l1 15M777 643l1 18M677 637l5 18M798 652l12 15M771 505l6 13M754 632l7 19M745 469l13 3M708 625l2 14M555 611l-8 12M769 629l5 9"/>
<path stroke="#b0b0a0" stroke-width="1.1" d="M674 689l0 20M676 676l-1 10M585 409l-15-2M694 666l-1 14M745 675l4 12M695 660l-4 13M646 439l-10-1M643 677l-7 20M731 401l2-6M671 679l-2 19M630 427l-10 0M637 666l-7 21"/>
<path stroke="#a07060" stroke-width="1.1" d="M779 429l12-4M803 408l8-2M795 414l7-3M805 361l5-7M559 438l-14-3M812 388l12-10M796 423l12 4M838 497l10 8M825 415l11-1M822 398l10-8M806 374l10-8M791 411l6-6M496 441l-16-1M555 436l-16 0M883 439l18 4M811 390l8-5M801 436l15 1M488 448l-20-6"/>
<path stroke="#c0b0b0" stroke-width="1.6" d="M664 678l3 12M894 501l9 4M643 436l-12-4M805 554l10 5M881 467l11 4M677 668l-5 21M723 384l3-6M631 396l-5-4M841 465l12 4M694 672l1 10M624 668l0 18M632 660l-3 10M656 674l2 14M807 558l4 8M605 367l-12-11M583 516l-12 5M692 674l1 10M762 405l12-6M890 481l15 7M570 664l-6 11M798 537l16 7M697 673l6 13M673 436l-9-2M663 663l2 10M743 358l8-8M573 528l-11 6M597 370l-6-8M694 670l-5 15M546 571l-10 8M650 665l-5 19"/>
<path stroke="#808080" stroke-width="1.6" d="M804 643l9 14M768 683l6 17M674 684l0 11M679 688l-4 18M802 563l9 14M548 577l-9 4M800 659l4 10M757 659l9 14M896 569l13 16M597 678l-10 19M626 686l-9 19M626 476l-6 3M707 684l-7 17M758 682l5 17M567 643l-5 8M896 581l21 7M553 560l-12 6M717 646l-1 12M550 565l-11 10M892 596l9 5M864 559l15 8M743 679l8 19M731 672l-4 16M597 507l-13 7M693 684l-1 12"/>
<path stroke="#704030" stroke-width="1.6" d="M915 536l20 9M525 495l-9 0M529 590l-10 11M549 485l-14 4M844 547l12 5M497 510l-19-5M824 540l12 6M583 490l-16 4M506 514l-13 7M827 541l12 7M488 512l-19 5M566 498l-13 3M527 568l-13 14M831 560l6 10M562 478l-10 8M545 495l-10 4M827 582l11 8M503 499l-16 4M556 471l-17 2M812 507l8 11M529 590l-15 12M547 498l-11 2M844 586l13 6M520 492l-10 4M832 539l9 7M580 494l-8 6M570 473l-10 2M531 490l-12 4M808 496l11 4"/>
<path stroke="#90a0a0" stroke-width="1.6" d="M885 595l13 10M633 604l-2 13M596 626l-8 20M872 468l18 0M606 626l-11 14M608 584l-11 15M676 625l5 19M782 636l15 14M651 590l-1 8M801 601l6 12M599 594l-2 12M654 573l0 9M888 555l14 8M584 534l-9 5M598 648l1 19M796 627l10 7M886 527l13 7M868 548l14 6M667 605l-1 11M676 629l-4 19M729 633l6 17M645 584l-6 7M592 627l-9 10M637 591l-6 15M800 597l4 11M622 624l-9 10M887 552l14 7M795 589l8 12M573 622l0 12M583 646l-3 11M765 648l1 13M764 497l10 6M662 612l0 12M578 626l-2 12M565 553l-9 5M662 620l-1 17M601 587l-10 12M644 613l-1 8M567 637l-14 15M614 613l-5 10M673 590l-2 10M640 619l-1 13M619 584l-4 7"/>
<path stroke="#804020" stroke-width="1.1" d="M503 548l-13 4M517 542l-11 14M493 543l-18 10M483 553l-10 5M520 554l-13 12"/>
<path stroke="#604040" stroke-width="1.6" d="M786 361l11-12M825 371l8-4M608 459l-7 0M572 518l-10 8M779 350l7-13M806 534l11 10M789 421l11-10M902 473l16 1M506 427l-18-2M847 521l18 7M857 402l13-2M831 395l14-12M583 449l-16 3M821 399l15-10M791 362l10-12M806 389l13-4M485 482l-18-2M596 491l-12 4M505 426l-13 0M823 384l10-2M494 427l-20-2M479 505l-17 4M879 419l16-10M771 434l7-5M819 413l14-9M786 498l7 4"/>
<path stroke="#301010" stroke-width="1.6" d="M477 583l-16 6M507 582l-7 6M480 581l-16 10M515 584l-9 7M498 580l-7 7M496 577l-20 8M483 578l-12 9"/>
<path stroke="#e0f0f0" stroke-width="1.1" d="M581 614l-9 8M667 575l1 12M715 449l10-1M579 594l-7 8M719 505l5 7M594 596l-12 13M637 476l-11 8M586 633l-5 9M595 590l-5 8M649 501l-9 9M724 463l11 4M740 480l9 6M884 580l11 1M659 507l-3 8M725 504l9 9M881 510l15 4M589 585l-6 9M866 464l14 2M673 564l-1 10M729 463l6 3M708 499l6 8"/>
<path stroke="#e0c0b0" stroke-width="1.6" d="M587 359l-9-6M606 430l-14 0M720 401l8-10M589 428l-7-1"/>
<path stroke="#f0f0f0" stroke-width="1.1" d="M565 384l-9-4M711 455l8 4M565 379l-10-8M581 371l-9-4M572 371l-17-7M581 397l-9-2M568 380l-12-8"/>
<path stroke="#a0a0b0" stroke-width="1.1" d="M593 571l-10 11M753 627l8 11M618 554l-7 8M671 507l-6 13M616 642l2 11M670 512l-5 12M799 555l16 10M871 489l18 9M672 532l-6 11M643 484l-5 5M658 451l-8 0M574 577l-3 9M641 559l-3 11M870 504l9 2M576 549l-7 10M572 562l-9 9M591 551l-11 10M645 534l-11 9M590 575l-11 15M657 544l0 9M743 471l10 3M639 510l-12 8M630 498l-5 5M775 640l7 13M558 561l-15 4M634 490l-5 5M741 480l10 9M652 546l-2 13M567 580l-10 11M574 595l-7 10M731 454l11 3M648 485l-7 13M614 527l-6 12M643 463l-9 4M866 575l10 16M878 537l11 9M661 547l-3 10M802 584l12 9"/>
<path stroke="#c0b0b0" stroke-width="1.1" d="M684 666l6 11M765 399l7-1M746 412l12-1M580 366l-7-5M644 662l-6 15M635 666l0 12M627 678l-8 15M633 411l-7-3M666 434l-6-2M575 524l-10 5M602 409l-11-10M618 665l-3 15M667 438l-10-2M691 660l0 10M902 543l8 4M696 678l-2 21"/>
<path stroke="#403020" stroke-width="1.1" d="M914 526l9 5M855 634l9 20M910 477l15 1M911 488l10 2M496 475l-16 3M585 452l-12 1M536 626l-7 11M566 471l-12 5M828 490l7 6M570 461l-12 3M847 549l13 8M594 480l-11 6M556 456l-8 0M817 548l8 7M820 562l10 8M911 477l12 4M911 511l14 7M829 640l11 12M810 523l7 4M535 626l-12 15M530 457l-9 1M858 642l13 19M841 532l11 6M830 497l10 4M555 469l-17-3M854 605l10 11M532 570l-17 5M817 474l10 0M775 452l8 2"/>
<path stroke="#705040" stroke-width="1.1" d="M838 383l13-8M849 412l8-3M822 406l12-7M496 453l-13-1M541 427l-16-2M793 449l12-3M509 410l-12 0M658 364l-3-12M824 603l8 10M855 420l11 0M648 346l0-11M663 386l-5-10M556 435l-7-2M590 439l-11 1M665 359l-2-10M563 432l-10-4M870 418l10-4M762 439l11-2M806 413l9-3M820 557l9 16M532 578l-12 3M649 354l-6-6M534 563l-11 10M785 440l11-2M813 403l14-6M826 418l9-1M820 390l14-6M530 395l-14-5M653 343l-3-9M500 438l-8 2M518 404l-10-7M856 395l16-3M633 346l-5-15M610 354l-8-8M850 414l8-1M846 396l12-2M852 594l14 10M686 363l-1-11M576 464l-16 2M797 450l13 0M910 525l21 1"/>
<path stroke="#c0d0d0" stroke-width="1.1" d="M647 497l-8 10M653 499l-4 5M652 454l-8-1M772 662l-1 15M601 582l-3 12M880 581l14 15M665 453l-7 4M874 479l19 3M674 563l1 11M599 606l-5 15M585 603l-8 11M882 596l6 7M558 617l-7 14M586 601l-5 10M632 581l-1 12M723 445l10-1M617 508l-2 9M623 580l-4 17M659 444l-5-1M749 474l11 6M641 484l-5 6M699 649l7 16M588 621l-9 7M605 589l-7 12M601 610l-6 19M640 491l-11 7M591 522l-3 9M594 627l-7 12M592 622l-10 17M782 630l4 16M872 546l12 5M771 639l8 13M587 534l-9 10M602 625l-1 9M585 617l-15 13M577 608l-8 8M698 643l1 9M872 475l17 5"/>
<path stroke="#a0a0a0" stroke-width="1.1" d="M712 649l1 17M607 504l-6 4M619 665l-4 11M726 683l1 10M549 615l-4 14M628 451l-14 0M867 536l15 4M658 644l-8 17M576 403l-13-5M578 400l-14 0M586 371l-11-6M879 461l10 1M846 446l10 0M799 640l8 16M891 561l14 6M703 682l-3 14M641 649l-3 9M762 481l11-1M790 670l6 11M727 682l5 19M644 659l-5 10M608 655l-11 17M768 399l9-1M753 680l-2 13M661 650l1 10M737 441l13 0M639 678l3 22M888 600l11 10M578 533l-6 6M699 438l7-3M623 689l-6 10M896 555l16 13M892 581l9 5M633 656l-2 12M596 660l-7 15M722 661l7 20M731 448l8-3"/>
<path stroke="#704030" stroke-width="1.1" d="M522 476l-8 7M808 493l8 6M821 499l15 5M532 482l-14 2M510 502l-11 2M519 506l-11 6M543 512l-9 4M526 575l-9 7M540 489l-7 4M846 580l14 9M825 540l6 7M822 505l11 5M538 499l-12 1M827 563l5 10M520 497l-12-1M919 510l20 1M520 469l-15 3M845 586l12 12M822 553l10 6M533 491l-11 1M555 498l-14 2M553 515l-11 7M535 559l-9 10M814 498l7 4M501 539l-14 5M847 573l11 12M823 513l16 8M515 503l-10 4M538 491l-8 5"/>
<path stroke="#c0d0d0" stroke-width="1.6" d="M716 505l2 6M743 482l6 5M616 595l-3 8M580 622l-7 6M716 627l3 14M650 585l-6 14M670 580l-1 11M716 503l4 10M770 657l6 12M788 664l10 19M888 610l21 9M610 586l-6 11M677 505l-5 11M712 492l4 6M685 506l-2 12M647 507l-4 13M772 674l6 17M736 469l6 5M879 583l16 5M671 584l1 9M655 456l-10 0M612 594l-11 13M624 576l-5 13M795 600l2 9M873 521l9 1M869 578l13 16M878 550l12 10M678 501l-3 7M608 595l-3 14M871 593l7 8M883 500l18 8M870 584l16 10M726 473l8 1M577 628l-7 18M581 542l-12 10M879 483l12 2M640 488l-7 3M729 497l8 9M785 645l1 10M763 629l5 15M668 519l-5 13"/>
<path stroke="#d0a080" stroke-width="1.1" d="M646 367l-5-15M570 430l-12-6M568 429l-9-4M667 366l-4-10M704 357l4-12M710 410l4-13M583 442l-11-4M703 362l1-8M651 357l-11-9M616 356l-4-9M650 366l-6-13M695 381l1-8M537 397l-8-3M695 396l1-10M649 353l-3-11M660 362l-7-5M653 411l-8-5M558 415l-10-1M654 400l-8-10M648 355l-8-13"/>
<path stroke="#605040" stroke-width="1.6" d="M578 441l-11 1M529 430l-16 0M586 449l-9 0M684 345l1-8M811 549l13 12M641 343l-1-8M780 358l9-10M758 438l7-2M626 356l-3-9M542 627l-14 16M591 503l-12 6M520 431l-15-1M609 451l-12 0M898 465l17 5M779 443l13-2M531 421l-8-3M866 417l15-6M491 447l-21 1M800 674l8 7M560 671l-10 21M577 512l-5 8M712 352l1-7M566 670l-14 14M793 502l8 7M526 411l-8 1M602 450l-9-1M532 411l-14-2M844 428l15 0M587 505l-12 11"/>
<path stroke="#707080" stroke-width="1.6" d="M726 640l2 18"/>
<path stroke="#502030" stroke-width="1.6" d="M837 639l12 16"/>
<path stroke="#403020" stroke-width="1.6" d="M542 648l-14 14M540 637l-4 19M825 655l4 20M473 540l-9 3M780 446l7 1M590 461l-7 0M910 474l10-4M821 564l15 4M583 448l-9 0M914 533l15-1M507 470l-13 5M813 522l5 7M476 530l-16 4M848 567l16 6M855 605l13 15M566 515l-9 5M526 612l-10 6M793 448l8-3"/>
<path stroke="#605050" stroke-width="1.6" d="M864 612l11 14M616 687l-8 21M752 461l9 3M540 622l-10 13M613 689l-3 17M571 676l-16 15M796 525l7 5M749 432l10-4M793 678l9 12M615 455l-13-1M843 429l15-2M900 528l11 2M860 621l13 16M897 479l10 2M597 685l-5 22M846 431l10 6M752 438l13 1"/>
<path stroke="#b0b0b0" stroke-width="1.6" d="M672 690l-1 13M740 395l6-6M647 439l-10-2M684 478l0 8M796 550l8 8M753 406l6-7M557 635l-10 10M653 653l-5 13M606 414l-7 1M868 578l14 3M692 480l-3 9M702 469l4 5M877 469l9 3M774 505l9 7M800 555l9 6M892 559l18 13M892 585l12 9M568 648l-11 12M468 476l-12 1M734 443l6-3M703 457l5 10M739 676l0 20M717 687l0 16M617 386l-11-7M666 470l-4 8M859 517l16 3M594 384l-12-9M770 682l2 9M895 530l19 10M749 400l5-5M653 661l4 15M675 678l-1 11M799 558l7 6M707 659l4 14M583 519l-13 8M755 364l8-10M559 378l-8-7M611 496l-7 3M748 648l2 10M862 543l12 4M740 445l7 0M886 575l17 13M609 652l-4 9M634 455l-7 2M866 551l16 10M612 410l-9-4M691 658l3 20M884 554l12 9M693 456l1 6M699 463l1 8M702 475l5 12"/>
<path stroke="#e0d0c0" stroke-width="1.6" d="M595 366l-7-6M722 372l5-6M835 439l17 2M603 370l-6-4M635 428l-7-2M724 398l5-8M723 398l4-8M728 433l12-6"/>
<path stroke="#b08060" stroke-width="1.6" d="M492 444l-9-4M525 439l-17-4M513 446l-9 4M543 422l-13-7"/>
<path stroke="#707070" stroke-width="1.1" d="M765 468l14 4M808 644l3 11M864 606l13 17M747 446l13 0M765 477l14 3M731 664l4 17M854 514l13 3M755 471l6 2M796 668l5 16M890 487l15-3M688 690l6 13M690 690l-3 10M606 498l-6 4M662 689l2 18M752 654l4 16M814 608l5 10M717 664l3 16M806 648l4 10M619 476l-10 7M874 630l8 10M774 683l6 17M898 559l10 3M715 654l2 11"/>
<path stroke="#b0a090" stroke-width="1.1" d="M899 487l11 3M581 418l-14 0M717 374l4-12M596 684l-1 10"/>
<path stroke="#a08080" stroke-width="1.1" d="M905 535l16 9M566 524l-7 4M540 577l-6 10M580 513l-12 12M546 555l-9 10M540 570l-10 8"/>
<path stroke="#e0f0ff" stroke-width="1.6" d="M661 558l1 12M653 522l-8 9M603 535l-13 10M868 483l10-1M741 494l8 5M601 565l-11 11M614 547l-10 13M671 553l4 13M575 584l-11 16M710 492l9 10M646 530l-3 6M654 525l-3 10M592 553l-7 6M618 528l-9 12M656 547l-4 8M672 514l-5 7M567 580l-7 10M643 549l0 13M597 569l-9 10M723 476l5 6M615 534l-6 5M653 533l-6 12M608 553l-5 12M877 555l10 9M613 531l-13 11M730 453l12 5M621 509l-9 7"/>
<path stroke="#d0b0a0" stroke-width="1.6" d="M750 439l11-3M475 461l-11 1M589 429l-16-2M722 402l9-9M640 419l-11-5M782 392l8-2M571 413l-10-4M674 428l-6-7M745 421l11-4"/>
<path stroke="#905030" stroke-width="1.1" d="M560 480l-8 1M574 474l-7 3M499 520l-15 2M564 474l-14 3M498 520l-12 13M558 472l-16 4M544 472l-11-1M504 527l-20 4M490 524l-15 6"/>
<path stroke="#909080" stroke-width="1.6" d="M669 682l1 20M849 494l9 5M554 387l-11-5M542 606l-7 6"/>
<path stroke="#705040" stroke-width="1.6" d="M707 348l3-10M692 392l0-13M787 408l11-5M806 404l12-4M778 423l11-1M659 415l-7-3M702 375l4-14M845 393l14-9M493 444l-10 3M787 417l14 0M629 369l-5-11M847 576l7 7M527 396l-15-8M499 445l-19 6M910 507l12 2M509 419l-15-5M540 412l-10-3M634 362l-7-14M617 357l-14-8M775 468l6 3M570 437l-14-1M860 641l8 8M627 348l-7-10M659 383l-9-8M538 558l-6 7M710 340l2-13M626 346l-10-9M651 357l-7-13M680 350l2-10M693 371l-3-14M799 358l10-6M517 426l-14-1M787 411l14-5M884 433l13 2M822 574l4 9M549 406l-12-2M705 387l6-13M525 450l-14 3M692 339l5-15M710 391l-3-14M492 447l-17 5M767 431l13 1M492 454l-21 2M799 396l7-3"/>
<path stroke="#b0c0c0" stroke-width="1.1" d="M760 626l2 9M688 624l5 19M552 589l-11 8M800 574l3 14M673 591l0 18M616 613l-11 17M616 598l-6 9M679 493l-1 7M797 560l9 10M627 630l-3 12M800 597l8 11M584 647l-5 20M740 484l6 10M581 644l-12 9M631 608l-1 12M716 498l7 8M751 629l6 9M643 595l-3 11M594 624l-3 12M623 618l-1 13M655 601l-7 16M586 525l-7 5M631 611l-4 10M642 614l-1 16M576 541l-8 6M795 569l9 17M676 502l-1 7M564 613l-9 9M725 485l8 6M714 651l-2 12M782 628l9 19M635 592l-7 16M617 611l-3 11M595 518l-10 10M662 619l-2 14M619 620l-5 10M780 627l4 11M675 618l3 19M701 642l2 18M594 519l-15 6M711 624l2 14M770 643l12 10M672 603l-2 12M619 604l-5 7M760 622l3 12M761 629l8 15M719 504l5 5M717 636l2 18M594 634l-6 16"/>
<path stroke="#d0e0f0" stroke-width="1.6" d="M570 591l-12 11M624 564l-8 5M665 606l-3 11M662 549l-4 15M608 521l-10 6M577 606l-5 7M615 519l-8 12M634 606l-7 9M667 568l1 15M586 579l-10 11M795 598l6 8M759 499l6 8M565 598l-11 9M662 575l-10 12M597 571l-6 8M672 558l0 9M610 525l-9 10M575 617l-7 9M670 547l-3 7M628 492l-13 6M648 614l-9 15"/>
<path stroke="#907060" stroke-width="1.6" d="M808 535l14 4M604 443l-7-1M811 547l8 6M596 450l-11 5M628 370l-7-6M482 494l-19 1M892 450l15-5M715 398l4-5M790 435l12-2M709 382l5-9M650 408l-6-12M599 442l-7-2"/>
<path stroke="#908070" stroke-width="1.6" d="M541 570l-12 9M894 468l10 0M686 426l-2-8M601 360l-10-7M769 372l14-4M658 428l-6-5M834 438l14-4M633 427l-8-2M796 678l5 10M723 401l5-7M766 363l7-4"/>
<path stroke="#a09090" stroke-width="1.1" d="M631 401l-8-6M561 400l-11-3M797 670l7 17M564 658l-6 8M605 689l-3 11M764 411l11-8M727 364l8-12M582 679l-9 11M875 461l9 3M622 385l-8-9M566 661l-4 9M861 605l12 15M752 415l6-1M661 439l-13 1"/>
<path stroke="#808080" stroke-width="1.1" d="M579 664l-1 10M626 452l-9 0M847 440l8 0M888 484l14 1M588 674l-7 11M746 623l-4 11M734 674l9 14M566 536l-7 8M894 562l7 6M845 440l15-3M665 688l7 18M871 619l12 12M798 545l11 8M752 455l7 1M729 623l1 18M713 663l2 10M586 517l-12 6M810 598l13 15M720 673l3 15M702 685l2 10M605 500l-8 3M565 652l-11 14"/>
<path stroke="#906050" stroke-width="1.1" d="M801 459l14-1M799 462l13-2M829 472l12 9M828 472l11 3M552 414l-15-9M830 477l9 2M784 469l10 8M829 485l13 5M787 460l11 2M677 384l-6-12M591 493l-10 11M489 484l-15 11M659 366l-8-11M596 476l-8 3M547 540l-10 6M810 534l8 3M491 470l-12 3M680 408l-4-6M584 447l-12 6M797 456l16 1"/>
<path stroke="#d0d0c0" stroke-width="1.1" d="M610 670l-8 16M644 668l-6 12M621 657l-12 13M685 659l3 10M655 678l-5 17M600 680l-8 18M639 674l-5 14M616 674l-1 11M633 408l-9-5M658 659l-6 13M604 676l-7 11M751 678l2 12M696 675l2 11"/>
<path stroke="#604040" stroke-width="1.1" d="M845 391l18 1M517 442l-11 1M827 405l8 1M799 387l7-2M777 454l9 4M812 428l14-3M816 433l9 0M799 375l11-9M825 383l16-8M895 454l11 3M827 623l5 8M835 408l14-3M788 420l10 0M800 451l12 2M540 632l-4 21M817 579l5 9M510 406l-10-4M807 429l16-3M507 424l-9-2M778 465l9 3M551 652l-16 14M771 458l9 0M486 488l-11 4M523 434l-12 2M892 448l17-2"/>
<path stroke="#d0e0e0" stroke-width="1.6" d="M660 615l-3 9M684 627l-2 17M642 594l-2 14M652 608l0 11M701 494l1 12M786 644l8 17M647 471l-12 7M781 642l9 17M575 631l-11 19M663 582l3 10M876 596l17 10M695 624l5 11M879 601l14 11M625 608l-5 9M674 583l-2 9M712 438l9-2M672 606l-2 9M711 484l8 9M871 565l21 5M716 452l13 1M678 473l-5 5M654 604l-5 18M628 587l-10 13M659 629l-2 13M650 642l-5 14M603 602l-8 17M774 641l-1 10M643 591l-4 16M616 589l-3 14M675 591l1 10M886 599l11 8M701 492l7 10M672 600l-3 10M705 626l3 16M700 477l3 13M596 524l-8 10M589 612l-10 8M670 490l-5 7M723 457l5 3M714 456l7 3M734 470l6 2M653 472l-5 6M864 531l10 5M629 624l-8 16M611 605l-15 13M763 621l4 8M637 461l-14 3"/>
<path stroke="#502020" stroke-width="1.6" d="M510 591l-16 8M491 565l-8 6M497 584l-18 9M550 489l-12 7M503 486l-13 3M504 574l-17 12M475 576l-11 2"/>
<path stroke="#805040" stroke-width="1.1" d="M813 511l6 5M579 494l-12 5M583 501l-7 5M818 477l10 2M554 461l-8-1M822 555l14 4M813 513l11 8M579 504l-10 3M801 491l10 3M510 468l-13 1M786 489l15 7M827 477l12 5M552 444l-17-4M492 486l-18 4M562 521l-8 6M833 521l7 8M824 574l10 8M843 544l13 10M849 572l8 5"/>
<path stroke="#906060" stroke-width="1.1" d="M602 486l-10 7M487 479l-11 4M542 552l-16 13"/>
<path stroke="#e0e0f0" stroke-width="1.6" d="M582 565l-12 11M630 530l-5 10M867 473l14 1M735 456l9 4M673 520l-3 9M651 511l-2 12M604 633l-7 9M615 601l-1 17M649 582l-4 16M877 571l14 12M870 484l13 3M807 630l10 11M876 586l11 5M871 533l17 4M637 592l-1 12M735 505l8 5M885 512l10 2M592 618l-3 18M566 573l-5 7M880 583l9 6"/>
<path stroke="#504030" stroke-width="1.6" d="M768 453l7 0M790 445l7 2M909 501l18 4M600 487l-14 5M564 443l-12 1M774 457l15 0M551 539l-15 8M857 606l17 13M780 457l8 2M876 415l20 3M908 502l8 5M540 557l-12 2M489 460l-17 0M857 633l8 9M534 617l-10 15"/>
<path stroke="#707060" stroke-width="1.1" d="M749 355l4-7M858 556l9 7M803 557l9 17M803 557l7 7M765 414l8-1"/>
<path stroke="#805030" stroke-width="1.1" d="M564 478l-13 1M504 472l-11 1M841 577l3 9M914 491l19 4M571 506l-6 6M798 487l5 5M564 509l-14 5M560 468l-18 2M573 471l-13 7M537 485l-16 2"/>
<path stroke="#502020" stroke-width="1.1" d="M518 599l-8 12M822 512l13 8M505 569l-12 8M819 528l9 10M817 515l14 11M479 586l-18 10M491 592l-19 6M483 594l-7 8M509 570l-8 5M832 663l14 15M818 500l15 8"/>
<path stroke="#d0d0d0" stroke-width="1.6" d="M707 453l8 6M680 640l-7 17M676 454l-5 5M633 655l-8 16M860 514l15 10M644 648l-7 14M704 494l3 6M742 452l12 5M672 494l0 9M895 514l18 6M871 610l14 14M606 670l-9 11M596 393l-7-4M775 502l13 8M682 458l-5 4M685 667l6 17M603 407l-13-7M649 659l2 10M878 472l11 0M863 569l10 7M862 534l9 9M739 387l7-5M586 405l-10-4M892 601l12 3M890 525l15 10M865 457l11-3M469 485l-17 4M878 468l13 4M697 441l12-2M697 659l-4 13M795 551l3 9M733 392l8-8M550 606l-11 10M644 662l-1 11M692 660l0 9M871 545l7 7M693 677l-1 12M758 378l9-13"/>
<path stroke="#d0e0f0" stroke-width="1.1" d="M668 556l-4 8M616 509l-14 7M635 611l-6 6M613 567l-7 10M617 568l-4 6M562 605l-18 9M664 607l0 8M631 581l-1 17M581 609l-3 11M613 560l-7 9M627 568l-5 13M656 543l-1 12M666 560l-3 10M655 618l-2 17M575 578l-11 7M582 604l-8 11M578 569l-9 5M619 504l-13 5M615 623l-4 8M582 541l-15 8M581 605l-15 10M611 617l-9 16M559 587l-11 15M597 528l-11 13M577 613l-10 6"/>
<path stroke="#a0a0b0" stroke-width="1.6" d="M878 524l17 6M599 552l-12 11M634 544l-11 12M699 635l-1 8M658 502l-5 5M651 493l-7 12M701 447l8 1M616 567l-3 11M865 483l13 6M803 640l2 11M674 536l-1 8M629 500l-5 5M566 570l-10 12M576 556l-9 8M577 593l-8 7M642 494l-10 9M634 524l-6 7M639 638l-4 15M611 536l-8 10M642 481l-5 4M604 549l-13 9M601 574l-14 13M648 638l-7 14M745 485l8 6M738 497l4 6M689 635l1 9M654 512l-5 10M566 376l-9-4M586 572l-11 11M622 546l-7 9M645 553l1 7M568 571l-4 7M581 580l-7 7M715 633l2 17M710 446l7-1M605 552l-9 8M785 660l6 21M597 537l-8 12M612 536l-1 12M641 540l-5 6M743 460l5 3M652 539l-10 12M881 557l15 12M607 537l-9 9M587 587l-14 9M625 512l-8 8M584 574l-10 17"/>
<path stroke="#605050" stroke-width="1.1" d="M843 497l14 0M735 650l3 8M905 526l19 9M753 450l13 0M862 610l12 4M609 460l-9 2M903 583l20 8M793 681l8 19M727 667l3 17M904 522l10 3M751 436l12-3M468 534l-18 7M878 449l10 0M810 651l7 12M549 549l-8 9M830 457l8-1"/>
<path stroke="#402010" stroke-width="1.6" d="M535 536l-17 8M840 589l10 3M566 505l-7 6M543 513l-9 4M485 588l-13 13M508 528l-19 3M498 507l-19-5M495 521l-13 9M832 654l11 16M488 543l-13 6M538 529l-16 8M528 506l-9 3M832 652l10 19M503 513l-10 5M541 508l-8 4M543 523l-8 3M518 525l-9 4"/>
<path stroke="#f0e0d0" stroke-width="1.6" d="M719 361l2-11M629 431l-13-7"/>
<path stroke="#301020" stroke-width="1.1" d="M517 638l-11 16M523 629l-16 15M529 651l-9 16M512 624l-11 12M526 635l-8 8M521 632l-15 13M510 619l-11 8M500 613l-6 7M839 656l8 7M514 625l-18 9"/>
<path stroke="#a06050" stroke-width="1.1" d="M796 466l10 2M784 470l10 1"/>
<path stroke="#703020" stroke-width="1.6" d="M499 549l-12 10M515 561l-18 5M533 525l-5 7M527 517l-17 3M839 610l10 10M533 533l-8 3M494 527l-11 5M833 575l11 15M496 519l-15 2M523 548l-12 6M503 550l-20 6M528 521l-13 6M502 522l-10 2M480 565l-15 13M483 558l-13 7M492 559l-9 8"/>
<path stroke="#e0d0d0" stroke-width="1.1" d="M627 391l-9-12M877 457l9 1M610 492l-5 5M806 641l4 13M854 514l17 7M898 545l18 9M596 369l-8-9M609 684l-7 11M838 463l8 1"/>
<path stroke="#907050" stroke-width="1.1" d="M664 368l-3-13M881 433l12-1M653 412l-8-6M894 451l17 1M700 395l2-6M882 433l18 1M693 410l1-6M681 413l-4-6M672 418l-3-8M882 419l11-3M709 394l5-10M675 382l-3-11M882 422l17 0M704 398l3-11"/>
<path stroke="#f0f0ff" stroke-width="1.6" d="M697 460l6 10M716 447l7 1M682 495l3 12M684 494l-3 7M707 502l2 7M650 480l-7 10M703 490l4 10M719 496l0 13M675 492l-4 7M688 491l-2 11"/>
<path stroke="#e0b080" stroke-width="1.1" d="M675 415l-4-8M654 399l-6-7M694 415l1-11M660 385l-3-11M679 385l-4-9M678 367l-2-11M676 408l-1-6"/>
<path stroke="#d0c0c0" stroke-width="1.1" d="M720 370l2-13M745 409l8-6M850 442l14-1M654 666l-11 15M813 597l9 9M672 671l-3 19M649 666l-4 9M598 676l-11 17M656 665l-2 10M686 668l1 21M475 490l-14 1M553 552l-6 5M619 381l-10-11M738 436l7 1"/>
<path stroke="#a08060" stroke-width="1.6" d="M776 475l12 8M790 435l15 1M687 421l0-7M782 359l8-8M582 445l-16 3M496 429l-10-1"/>
<path stroke="#905040" stroke-width="1.1" d="M792 474l6 5M849 588l6 9M807 509l6 9M517 465l-17-5M492 485l-20 6M817 470l12 2M568 462l-11 7M520 465l-19 2M821 561l12 9M559 467l-8-1M819 463l11 3"/>
<path stroke="#b0b0a0" stroke-width="1.6" d="M567 397l-9-4M635 662l-2 20M769 687l5 17M596 671l-7 14M741 411l8-2M679 681l-1 10M812 603l7 15M553 385l-14-3"/>
<path stroke="#d0d0d0" stroke-width="1.1" d="M619 653l-11 15M889 502l11 7M579 370l-9-3M591 522l-8 16M621 647l-9 17M640 656l-3 12M585 519l-13 8M750 412l7-1M714 443l7 0M738 367l5-12M673 676l-3 9M892 535l9 4M560 383l-15-3M599 661l-4 11M591 376l-13-10M676 451l-9 3M737 398l7-4M770 667l4 15M601 377l-8-9M777 670l3 11M573 394l-6-5M587 383l-14-7M619 665l-3 10M617 405l-6-2M624 411l-7-7M607 388l-10-7M554 570l-8 7M626 403l-8-8M623 649l-6 14M607 410l-7-3M595 652l-9 17M613 398l-6-8M647 677l0 11M687 648l2 19M700 687l4 18M623 415l-8-4M690 647l2 16M846 463l16 0M889 601l7 10M467 479l-9 3M776 500l14 3M607 384l-10-5M566 387l-14-3M748 371l10-9"/>
<path stroke="#a09090" stroke-width="1.6" d="M466 521l-14-2M563 659l-4 13M630 427l-13-1M735 408l7-4M735 410l7-5M727 359l3-16M771 395l16-4M730 358l3-7M876 461l12 0M898 598l16 13M631 401l-9-8"/>
<path stroke="#a0b0c0" stroke-width="1.1" d="M600 587l-6 6M599 592l-13 14M618 580l-5 10M583 613l-11 14"/>
<path stroke="#a09080" stroke-width="1.6" d="M566 406l-10-6M770 406l8-4M549 377l-12-6M555 395l-17-7M581 413l-8-1M585 681l-4 15"/>
<path stroke="#706050" stroke-width="1.1" d="M644 423l-11-7M652 426l-6-2M629 374l-9-7M482 467l-18-1M614 365l-7-3M705 359l3-11M609 478l-14 6M870 441l19 2M768 360l7-8M744 433l14-1M842 491l16 5M824 437l11-1M538 389l-8-7M813 580l8 18M779 381l7-11M824 444l16-1M781 403l9-5M743 427l10-1M712 409l6-10M599 493l-9 6M816 590l10 6M785 497l10 2M646 399l-4-5M833 417l15-5M784 390l13-4"/>
<path stroke="#b0a090" stroke-width="1.6" d="M626 382l-3-6M594 421l-12-5M898 483l14-2M663 429l-10-1M754 359l7-7M901 497l9 4M687 434l-3-10M749 440l8 2M638 404l-5-3M719 363l4-11"/>
<path stroke="#d09070" stroke-width="1.6" d="M529 428l-17-5M684 379l-1-11M532 422l-15-1M528 426l-10-3M537 404l-9-4"/>
<path stroke="#d0a080" stroke-width="1.6" d="M626 367l-8-6M785 383l11 0M650 394l-10-11M641 369l-2-7M637 361l-10-11M656 359l-5-13M779 413l9-8M617 349l-8-8M636 372l-6-10M655 389l-4-9M658 383l-1-11M704 392l1-13"/>
<path stroke="#908070" stroke-width="1.1" d="M724 406l9-9M658 430l-6-5M581 682l-7 19M590 355l-7-7M585 423l-14-6M718 364l3-9M604 434l-15-2M713 422l4-6M686 426l0-8"/>
<path stroke="#c09070" stroke-width="1.1" d="M833 376l17-8M829 392l12-6M817 417l9-3M818 418l17-5M528 434l-15 2M615 349l-13-8M642 360l-7-4M635 352l-2-16M555 415l-12-3M821 397l10-2M692 381l0-11M822 403l11-1M675 369l-9-10M705 407l6-12M632 355l-3-7M641 372l-6-11M646 380l-8-10M677 360l-1-14M811 415l13-3M536 405l-17 1M834 403l8 1M811 381l11-7M829 393l13-8M551 419l-16-4M682 345l-5-15M661 394l-7-11"/>
<path stroke="#a0a090" stroke-width="1.6" d="M752 451l7 1M640 673l-9 9M710 680l-2 14M560 653l-12 10M619 676l-8 9M697 668l0 16M559 370l-9-4M705 678l-4 17M718 679l1 16"/>
<path stroke="#90a0a0" stroke-width="1.1" d="M651 587l-6 9M794 622l6 18M669 618l1 15M580 615l-15 12M593 634l-17 9M607 509l-13 9M657 608l-5 9M641 588l-4 8M628 601l-6 8M798 617l6 10M649 602l-2 9M618 626l-7 14M777 627l7 10M588 604l-11 12M755 482l8 2M778 645l3 13M609 613l-4 8M666 622l-5 19M658 603l-2 17M582 637l-7 17"/>
<path stroke="#e0c0b0" stroke-width="1.1" d="M638 422l-4-5M737 417l11-2M612 363l-6-3M715 425l7-2M642 415l-7-5M624 373l-7-14M654 428l-5-5M731 350l8-13M764 360l4-10M630 435l-15-1"/>
<path stroke="#603020" stroke-width="1.1" d="M486 556l-11 4M916 496l12 6M837 590l13 12M471 559l-19 10M494 572l-9 4M486 539l-15 7M499 553l-12 0M480 554l-14 6M480 553l-10 5M480 541l-8 6M489 569l-7 9M512 539l-14 5M504 570l-11 6"/>
<path stroke="#604030" stroke-width="1.1" d="M867 416l11-2M597 480l-12 2M581 463l-13 7M557 463l-15 6M865 411l13-4M859 643l10 17M822 465l8 0M795 464l13 0M513 444l-19 0M533 451l-12 2M850 601l9 14M863 416l17-1M917 537l19 7M819 468l14 2M574 511l-12 7M536 433l-12 1M801 516l9 9M598 472l-10 1M826 630l9 11M798 506l14 9M843 569l6 8M789 462l13-4M512 459l-14 6M828 579l5 10M835 490l16 9M803 453l16 5M546 455l-14-1M544 534l-11 13M914 504l21-2"/>
<path stroke="#c0c0b0" stroke-width="1.1" d="M628 658l0 15M635 442l-6 0M680 656l-3 20M637 656l-6 9M769 402l12-9M635 442l-9 5M634 655l-1 11M651 684l-3 18M624 659l-6 17"/>
<path stroke="#302020" stroke-width="1.1" d="M534 595l-10 16M823 622l5 15M604 466l-11 3M535 647l-12 9M829 624l15 12M917 518l21 3M502 615l-9 13M845 649l11 19M617 466l-10 1M842 640l9 14M552 448l-9-1M844 646l8 14M830 617l5 19M848 642l11 14M539 645l-8 6M530 634l-15 15M516 619l-10 9"/>
<path stroke="#b09090" stroke-width="1.1" d="M717 379l7-11M589 506l-12 11M856 552l12 7M608 482l-11 5M864 610l12 9M796 524l14 10"/>
<path stroke="#706060" stroke-width="1.6" d="M834 465l13-1M471 502l-13 0M804 545l9 7M556 656l-14 18M848 512l9 6M805 540l13 12M587 677l-5 15M720 426l6-1M597 498l-6 5M840 480l11 1M478 495l-15 8M575 524l-9 3M765 466l8 3M591 685l-4 12M634 689l-8 18"/>
<path stroke="#201010" stroke-width="1.6" d="M601 462l-7 0M517 638l-14 18M607 466l-13 0M529 618l-4 21M527 623l-7 8M846 644l10 19M509 616l-16 12M840 658l8 18M505 616l-11 10M839 658l8 13M489 609l-11 11M538 655l-14 15M511 635l-18 6"/>
<path stroke="#b08070" stroke-width="1.6" d="M854 400l9 1M663 355l-3-13M869 428l13 3M841 395l14 0M795 430l12-6M781 488l6 7M710 337l1-14M781 429l11-6M681 348l-1-14M630 362l-8-12M865 427l9-2M794 404l12-1M499 439l-10-1M623 356l-7-11M693 357l-1-8M841 399l8-3M628 344l-7-7M784 426l11-11M793 415l9-9M806 444l14-2M494 439l-15 2M756 437l8-1M506 410l-18-2M822 371l9-14M504 422l-16 6M841 385l8-2M785 429l8-1M824 417l16-4M818 436l14-2M783 369l9-6M783 406l15-4M807 391l7-7M820 393l8-3M780 435l8-2M653 344l-3-7M811 418l17-4M783 355l4-7M487 465l-11 3M798 427l11 1M500 436l-14-6"/>
<path stroke="#403030" stroke-width="1.1" d="M856 610l6 12M483 505l-20 2M909 518l12 0M554 450l-14-1M818 633l10 18M618 471l-8 1M857 607l11 13M900 455l15 3M855 603l17 14"/>
<path stroke="#503030" stroke-width="1.1" d="M848 564l14 10M491 472l-12 0M818 665l11 16M558 445l-18-1M548 443l-15 0M546 457l-14-1M536 449l-14-2M850 566l13 11M476 526l-20 3M817 544l12 9M612 465l-9-2M828 635l6 11M819 549l9 7M792 458l9-1M820 563l10 7M815 458l9 1M832 482l10 0"/>
<path stroke="#e0d0d0" stroke-width="1.6" d="M585 517l-8 5M605 682l-7 10M597 368l-13-9M624 425l-10-3M724 375l4-7M749 447l9-5M790 675l7 14M724 378l4-11M564 397l-17-6M565 367l-11-3"/>
<path stroke="#603030" stroke-width="1.6" d="M801 504l11 5M787 478l11 5M497 473l-14 0M816 471l10 4M829 560l12 6M918 503l13 2"/>
<path stroke="#c0a080" stroke-width="1.1" d="M709 371l1-7M767 350l10-6M708 414l6-11M713 392l2-6M718 343l4-8M753 431l7-3"/>
<path stroke="#908080" stroke-width="1.1" d="M905 551l16 6M607 497l-12 3M724 392l2-7M476 465l-14-3M644 439l-12 1M893 490l15 6M719 378l4-12M738 416l11-6M903 510l20 7M587 420l-14-8M846 488l12 9M476 475l-16 1M761 413l8-7M725 354l4-11"/>
<path stroke="#e0e0e0" stroke-width="1.6" d="M597 391l-9-7M600 649l-6 11M626 419l-9-5M739 382l5-6M757 393l7-8M579 388l-7-3M682 465l-1 7M745 382l6-8M715 647l-1 9M560 371l-11-5M689 462l1 6M584 648l-12 16M669 472l-6 4M719 442l12-1M578 402l-12-2M582 367l-9-13M895 582l14 4M804 570l8 8M689 479l1 6M716 464l5 5M604 643l-10 13M612 405l-13-7M763 398l11-8M766 395l9-8M652 445l-6 0M715 466l6 4M762 387l6-13M611 408l-8-5M562 384l-8-2M653 449l-12 0"/>
<path stroke="#a08070" stroke-width="1.1" d="M789 381l8-2M804 527l11 9M904 496l12 6M575 514l-16 8M547 547l-6 6M772 468l10 4"/>
<path stroke="#a07060" stroke-width="1.6" d="M847 414l16-3M881 423l10-3M484 439l-18-2M820 371l17-4M585 502l-12 7M486 442l-9-1M522 439l-17 0M809 397l10-3M604 480l-13 3M833 415l10 3M794 399l14-8M799 395l7-3M818 418l18-2M848 415l15-7M870 419l8-2M506 435l-18-4M891 453l11-1M785 431l12-1M867 414l13-1M789 419l10-2M505 437l-12 2M838 396l11-3"/>
<path stroke="#604030" stroke-width="1.6" d="M804 450l12-1M852 624l6 14M780 480l5 5M829 627l12 13M830 626l9 8M871 414l13-1M546 452l-9 0M835 495l15 7M792 446l16-2M531 563l-14 7M549 440l-8 2M527 590l-13 16M914 522l9 4M569 516l-13 8M912 524l18 4M538 436l-13-2M509 437l-15 0M801 505l7 5"/>
<path stroke="#807070" stroke-width="1.6" d="M744 353l2-13M814 588l10 9M876 450l20 2M892 486l15 0M844 478l15 3M480 468l-10 4M847 498l13 6M548 623l-10 12M770 489l11 3M854 540l9 5M588 679l-6 17M839 470l12 0M846 432l18 3M556 630l-6 14M889 469l16-2M547 608l-8 15M629 436l-13-5"/>
<path stroke="#a08080" stroke-width="1.6" d="M549 389l-11-13M856 555l15 6M815 631l16 15M900 491l17 9"/>
<path stroke="#806060" stroke-width="1.6" d="M840 432l11 0M609 361l-9-9M780 494l13 10M482 465l-14 0M878 446l15 3M803 674l9 17M906 487l9 0"/>
<path stroke="#404040" stroke-width="1.1" d="M739 656l3 10M866 631l13 12M864 634l8 11M740 648l5 9M735 640l0 14M862 632l13 12M736 623l8 17"/>
<path stroke="#c0a090" stroke-width="1.1" d="M777 372l7-10M554 403l-10 1M839 475l14 3M893 469l11-1M731 417l13-6M775 409l9-4M831 459l11 0M747 427l8-3M728 424l6-6"/>
<path stroke="#505050" stroke-width="1.6" d="M541 580l-8 10M644 693l-9 12M741 627l3 9M720 649l-2 12M740 692l7 13M731 660l3 13M746 691l1 12"/>
<path stroke="#101010" stroke-width="1.6" d="M524 636l-8 9M521 624l-9 8M511 632l-10 13"/>
<path stroke="#f0d0c0" stroke-width="1.1" d="M647 430l-8-4M642 431l-7-2M642 402l-6-11M714 371l1-14"/>
<path stroke="#302020" stroke-width="1.6" d="M537 653l-9 11M526 621l-10 8M502 612l-7 10M520 638l-10 12M839 652l15 15M773 454l9 1M526 623l-11 10M527 647l-13 18M852 616l8 9M514 610l-14 12M583 457l-7 1M523 635l-13 18M824 646l1 17M823 644l11 19"/>
<path stroke="#c09080" stroke-width="1.1" d="M765 428l7 0M615 360l-7-6M847 423l11 1M558 414l-17-3M714 412l5-5"/>
<path stroke="#f0d0b0" stroke-width="1.1" d="M629 378l-8-7M603 437l-13-3"/>
<path stroke="#404030" stroke-width="1.6" d="M765 456l15-1"/>
<path stroke="#704020" stroke-width="1.6" d="M544 526l-6 6M505 563l-8 7M490 519l-14 5M839 600l5 7M845 602l15 8M915 491l15 7M842 598l10 11"/>
<path stroke="#b09070" stroke-width="1.6" d="M643 371l-8-11M831 424l14-2M541 394l-12-7M736 342l4-12M666 356l-6-14M602 445l-14 0"/>
<path stroke="#807070" stroke-width="1.1" d="M749 452l12 1M807 566l5 7M837 463l17-1M552 397l-11-8M606 684l0 13M839 464l8 3M898 510l10 0M548 389l-10-4M626 439l-10-3"/>
<path stroke="#d0d0e0" stroke-width="1.6" d="M856 462l12 0M714 475l7 10M682 485l-2 6M655 621l-8 15M714 479l6 8M805 606l7 13M716 503l6 13M872 527l11 6M629 629l-4 11M662 624l1 11M585 530l-11 10M735 472l6 6M659 451l-6 3M876 553l16 11M621 491l-12 8M803 595l6 11M696 625l-2 17M619 495l-13 6"/>
<path stroke="#202020" stroke-width="1.1" d="M536 444l-9 1M763 453l7 2"/>
<path stroke="#e0b090" stroke-width="1.6" d="M665 419l-5-4M550 403l-10 1M677 419l-5-12"/>
<path stroke="#605040" stroke-width="1.1" d="M485 474l-15 4M791 450l10 1M518 427l-14-5M700 359l1-13M488 454l-18 4M781 359l13-11M846 522l11 9M564 527l-7 7M822 438l9 2M776 443l14-1M804 536l12 11M786 369l12-4M484 475l-19-4M762 350l8-11M572 519l-8 13M701 347l5-15M861 420l18 4M889 459l16-1M739 344l6-13M537 388l-17-4M850 544l8 5M538 581l-8 7M803 673l15 17M567 670l-5 10"/>
<path stroke="#f0c080" stroke-width="1.1" d="M675 405l-4-13M677 394l-3-12"/>
<path stroke="#d0a070" stroke-width="1.6" d="M685 387l-5-14M665 392l-9-10M669 384l-1-12"/>
<path stroke="#b08070" stroke-width="1.1" d="M800 423l9 1M814 372l9-5M647 368l-4-9M827 388l7-7M813 402l13-4M806 429l15-7M865 421l8-4M855 393l9-7M832 396l7-4M792 390l9-3M881 443l11-1M813 414l13-6M791 414l12-8M830 408l18-2M828 413l13 6M835 413l10-1M808 447l11 1M858 413l11-6M793 410l10-7M788 406l9-1M803 426l9-3M689 343l-5-12M660 344l-8-12M799 407l17-1M790 363l8-7M652 348l-1-8M632 351l-7-9M702 350l2-11M838 420l15-3M593 444l-13 2"/>
<path stroke="#504030" stroke-width="1.1" d="M536 588l-9 7M779 462l12 4M822 607l9 8M792 446l16 0M565 455l-14-2M890 450l18 1M544 642l-11 19M817 567l19 2M819 568l4 9M557 453l-16 4"/>
<path stroke="#805030" stroke-width="1.6" d="M502 478l-14 4M500 471l-16 0M581 491l-7 5M583 479l-13 2M502 476l-10 6M828 497l16 4M534 479l-12 0M529 468l-18 1M810 502l14 9M563 470l-14 10"/>
<path stroke="#b0a0a0" stroke-width="1.6" d="M767 382l9-12M903 534l15 3M901 525l16 3M613 682l0 20M741 414l6-4M727 363l4-6M709 674l-7 14M721 381l4-10M756 417l14-3M902 566l11 14M730 401l3-10M854 514l9 5M630 396l-6-11"/>
<path stroke="#b0b0c0" stroke-width="1.1" d="M569 595l-11 13M553 569l-8 6M576 570l-13 11M883 609l9 9M634 563l0 9M628 475l-10 2M879 503l11 5M648 543l-5 8M593 535l-9 9M744 502l8 7M638 493l-9 9M626 557l-3 10M879 531l11 4M701 625l6 17M652 522l-2 10M691 636l2 14M666 529l-2 12M610 574l-3 9M580 582l-6 15M639 529l-4 13M767 629l4 16M625 542l-2 14M749 500l12 7M879 478l16 3M876 567l16 11M693 632l4 16M550 620l-4 12M590 586l-10 13M713 444l11 2M803 605l8 7M763 487l9 6M869 516l20-1M608 573l-12 11M611 535l-5 9M647 501l-6 8M628 547l-3 16M732 624l6 15M863 499l9 5M627 500l-4 6M638 509l-7 11M610 518l-7 4M873 585l10 13M647 559l-1 16M655 638l3 12M643 517l-5 8M875 563l13 12"/>
<path stroke="#e0b090" stroke-width="1.1" d="M649 415l-9-9M591 434l-13 2"/>
<path stroke="#705050" stroke-width="1.1" d="M808 389l11-7M724 349l1-13M775 469l16 1M819 369l12-6M494 439l-14 2M485 465l-13 5M815 401l16-6M774 414l7-1M775 472l14 6M821 396l15-8M799 422l11-7M783 426l8-3M781 366l12-9M484 444l-10-3"/>
<path stroke="#905030" stroke-width="1.6" d="M489 521l-11 6M497 529l-10 1M524 526l-17 6"/>
<path stroke="#704040" stroke-width="1.6" d="M549 454l-12 0M847 577l11 7M552 657l-2 23M548 650l-8 15"/>
<path stroke="#504040" stroke-width="1.1" d="M820 607l6 12M643 693l-6 14M545 550l-13 4M853 578l13 14M819 615l7 13M468 538l-14 7M734 654l3 20M556 532l-12 13M608 455l-15 2M596 498l-11 4"/>
<path stroke="#d0c0c0" stroke-width="1.6" d="M861 441l15 1M630 664l-2 15M647 664l-2 9M656 665l-7 20M619 685l-17 14M608 493l-8 3M685 675l-2 14M603 673l-8 13M768 379l8-11M893 493l15 3M660 687l6 21"/>
<path stroke="#809090" stroke-width="1.6" d="M628 463l-13 5"/>
<path stroke="#b08060" stroke-width="1.1" d="M808 453l8 3M541 431l-11 1M490 442l-17-3M702 343l-4-15M520 424l-8-4"/>
<path stroke="#d0c0b0" stroke-width="1.1" d="M675 431l-4-5M836 439l14-3M858 556l14 5M871 448l19-2M644 434l-10 0"/>
<path stroke="#503030" stroke-width="1.6" d="M846 537l11 14M831 491l16 8M846 541l12 7M604 475l-7 3M821 654l4 12M564 515l-13 8M478 524l-8 3M480 515l-16 9M568 516l-8 12M590 494l-11 7M523 445l-15 3M899 467l18-2M545 541l-18 6M843 531l18 6M574 509l-11 3M833 483l15 1M849 620l14 15M895 446l21 1"/>
<path stroke="#e0b080" stroke-width="1.6" d="M663 369l-3-7M691 413l-3-13M673 405l-7-12M699 400l3-7M651 390l-6-9M700 395l8-12M680 388l-2-6"/>
<path stroke="#a08060" stroke-width="1.1" d="M777 475l8 2M837 418l9-2M778 429l8-2M843 421l13-1"/>
<path stroke="#b0c0d0" stroke-width="1.1" d="M653 572l1 10M604 592l-6 12M565 621l-11 16M582 621l-7 13M674 571l0 14M611 590l-2 14M580 624l-14 15M573 549l-10 11M583 634l-5 14M628 496l-9 4"/>
<path stroke="#605030" stroke-width="1.1" d="M557 435l-12-2"/>
<path stroke="#805040" stroke-width="1.6" d="M825 572l18 8M793 478l14 9M564 467l-11 1M903 461l11 3M916 534l13-2M784 477l7 11M815 519l12 8M530 574l-8 4M559 522l-15 11M795 496l7 8M848 562l6 9M816 547l9 7M507 461l-14 2M841 525l16 9M849 574l15 8"/>
<path stroke="#c0a090" stroke-width="1.6" d="M715 395l2-13M596 499l-12 5M618 441l-7 1M779 408l16 1M728 415l7-5M829 432l13-1M850 522l11 10M781 395l8-8M835 472l12 2M734 430l12-5M839 434l15-1M746 429l10-5M716 420l7-4M728 426l4-5"/>
<path stroke="#804030" stroke-width="1.1" d="M827 551l13 7M559 477l-12 4M490 519l-19 9M509 522l-10 4M835 563l11 8M822 505l8 4M580 494l-8 4M831 517l8 2M529 554l-13 5M576 480l-11 4M516 503l-18 6M564 502l-12 9M839 569l14 15M508 525l-14 7M526 489l-14 3M818 533l15 10M472 553l-16 7M551 520l-16 6M827 504l10 9M523 505l-9 3M533 522l-14 10M847 597l11 7M547 500l-9 1M811 494l7 4M547 523l-12 7M536 495l-9 2M526 559l-11 11M477 540l-9 4M537 482l-11 4M833 583l10 18"/>
<path stroke="#201010" stroke-width="1.1" d="M515 612l-15 9M513 614l-8 18M537 641l-16 9M837 637l7 17M514 616l-15 2M846 639l6 11M508 622l-6 10M521 635l-12 20M846 645l7 11M490 600l-9 6"/>
<path stroke="#906060" stroke-width="1.6" d="M848 549l15 12"/>
<path stroke="#906040" stroke-width="1.6" d="M596 479l-16 0M508 459l-10 0M595 474l-13 3M812 462l15 2"/>
<path stroke="#c0c0b0" stroke-width="1.6" d="M604 683l-6 10M574 661l-11 20M708 434l5-1M677 441l-10-2M620 686l-2 12M647 655l-7 19M602 375l-9-13M768 384l9-6M706 684l3 22M726 371l7-14"/>
<path stroke="#f0f0f0" stroke-width="1.6" d="M586 399l-10-4M613 392l-10-6M755 400l6-6M686 455l-6 11M691 452l1 10M759 384l10-6M653 453l-13 0M735 365l1-10M745 372l9-11M599 400l-11-5M561 381l-6-10M611 404l-9-4M584 388l-8-4M577 391l-13-5"/>
<path stroke="#202010" stroke-width="1.1" d="M543 648l-4 12M577 451l-10 0M575 451l-7-1M490 605l-16 12M775 449l10 3M534 620l-4 11M530 611l-14 8"/>
<path stroke="#805050" stroke-width="1.1" d="M475 528l-11 7M551 537l-6 8M523 450l-17 3"/>
<path stroke="#d0c0b0" stroke-width="1.6" d="M605 370l-14-10M745 423l12-3M777 388l8-6M844 439l17 3M551 381l-9-3"/>
<path stroke="#b07060" stroke-width="1.1" d="M516 453l-11 6M783 461l13 2"/>
<path stroke="#90a0b0" stroke-width="1.6" d="M592 588l-6 7M576 605l-9 10M649 568l-2 9"/>
<path stroke="#c09080" stroke-width="1.6" d="M631 367l-5-5M861 429l18-1M834 422l11-4M708 417l6-7M839 426l12-7M650 398l-10-6M777 425l13-6M699 341l-2-15M583 440l-14 1M722 409l7-12M730 339l3-8"/>
<path stroke="#705050" stroke-width="1.6" d="M824 410l8-3M877 435l16 3M858 611l9 8M812 367l7-5M484 443l-16 3M484 467l-13 2M773 480l13 0M535 580l-13 11M892 459l9 2M602 456l-15 2M822 603l10 13M551 653l-14 7M811 433l10-5M821 412l15-7M787 397l17-1M841 403l17-3"/>
<path stroke="#806070" stroke-width="1.1" d="M547 628l-8 13"/>
<path stroke="#301010" stroke-width="1.1" d="M496 584l-17 11M516 601l-9 17M517 582l-6 9M485 580l-13 11"/>
<path stroke="#806040" stroke-width="1.6" d="M523 435l-18-3M676 399l-2-11M521 430l-14-4M511 435l-9 3M847 554l11 8"/>
<path stroke="#603020" stroke-width="1.6" d="M483 575l-18 5M558 471l-8 1M519 552l-5 8M491 541l-10 3M835 626l6 18M478 559l-14 11M480 568l-8 6M487 548l-14 10M499 569l-13 3M834 509l16 8M484 542l-6 7M838 588l14 16M838 620l14 10M505 558l-14 11"/>
<path stroke="#a08070" stroke-width="1.6" d="M613 455l-15 1M771 349l9-11M605 482l-8 1M780 361l4-8M786 367l12-7M799 517l11 9M781 360l10-12M584 507l-12 5M769 429l11-3M772 352l10-6M839 495l8 3M552 541l-8 4M825 426l11-1"/>
<path stroke="#d0d0c0" stroke-width="1.6" d="M675 670l-2 18M647 680l-2 19M594 671l-8 14M606 417l-8-2M658 655l-2 10M621 421l-9-9M624 427l-13-6M661 677l2 22M635 657l-4 14M611 675l-4 10M636 667l-5 18M660 679l-4 12"/>
<path stroke="#707070" stroke-width="1.6" d="M841 439l14 0M719 654l5 19M717 642l-4 16M471 496l-11 7M757 470l10 0M544 594l-11 12M842 473l19 1M807 633l9 8M771 492l7 8M465 524l-11 4M812 597l3 10M628 685l-9 21M869 606l10 19M579 667l-4 21"/>
<path stroke="#706060" stroke-width="1.1" d="M834 444l13 1M736 436l13-4M584 682l-12 16M830 439l17-1M775 398l15-5M776 401l10-6M563 652l-6 18M480 472l-17 4M808 553l9 12M713 365l4-7M478 496l-16 3M563 661l-13 16M609 480l-8 2M540 609l-14 9M542 575l-19 8M764 465l8 0"/>
<path stroke="#b0a0a0" stroke-width="1.1" d="M672 685l-4 15M602 372l-7-10M840 464l18 2M765 400l10-4M621 682l-8 8M609 680l-10 21M617 380l-6-5M672 692l4 22M761 407l8-3M714 673l4 16M604 681l-1 21M723 393l7-7M600 675l-6 8"/>
<path stroke="#d0b0a0" stroke-width="1.1" d="M646 424l-10-5M722 350l9-11M774 408l7-6M639 399l-6-6M550 392l-17-7M646 424l-11-7M641 416l-8-5"/>
<path stroke="#706040" stroke-width="1.6" d="M666 412l-6-5M667 391l-4-10M649 405l-6-4"/>
<path stroke="#9090a0" stroke-width="1.1" d="M570 638l-4 17M645 638l0 9M753 633l5 8M871 567l13 16M803 609l8 12M686 641l-3 9M639 634l-2 11M731 628l1 15M571 637l1 21M591 656l-3 18M767 492l8 5M603 511l-8 9M732 445l12-2"/>
<path stroke="#703030" stroke-width="1.1" d="M831 619l15 15M831 615l7 8M561 500l-17 3"/>
<path stroke="#d0d0e0" stroke-width="1.1" d="M857 469l8-3M748 390l7-2M857 470l18 5M638 635l-7 12M890 581l11 6M615 634l-7 17M569 375l-11-11M768 633l7 17M682 490l-1 11M871 526l9 8M620 479l-6 5M709 486l8 11M866 560l16 3M729 496l11 8M681 464l-6 8M672 481l-1 7M675 464l-8 9M777 632l10 16M800 623l14 13M573 648l-4 21M738 486l5 8M637 615l-7 13M689 636l0 11M874 532l11 6M562 618l-11 7M587 525l-6 6M710 460l6 5"/>
<path stroke="#704020" stroke-width="1.1" d="M474 564l-12 6M833 571l8 4M545 517l-17 6M487 519l-16 4M504 543l-8 9M525 507l-11 2M486 543l-16 6M559 505l-15 4"/>
<path stroke="#a07070" stroke-width="1.6" d="M849 540l16 12M850 541l17 8"/>
<path stroke="#d0a090" stroke-width="1.1" d="M762 427l9-3M767 424l8-5"/>
<path stroke="#706040" stroke-width="1.1" d="M665 413l-9-7M685 353l0-13M645 372l-6-7M686 410l-2-6"/>
<path stroke="#e0f0ff" stroke-width="1.1" d="M734 502l6 7M584 574l-5 7M603 534l-11 11M580 582l-9 13M675 538l0 14M612 538l-10 11M600 556l-7 9M744 502l11 10M597 567l-11 11M655 510l-5 14M870 518l15 6M655 517l-5 13M872 497l19 5M661 517l-4 10M564 580l-3 10M576 548l-6 6"/>
<path stroke="#f0f0ff" stroke-width="1.1" d="M701 456l10 8M661 474l-4 4M648 484l-4 5M671 487l-6 11M711 472l4 6M665 466l-11 6M707 482l3 13M711 462l9 8"/>
<path stroke="#907070" stroke-width="1.6" d="M860 605l13 15M468 532l-12 5M745 348l3-6M821 606l15 15M863 615l7 7"/>
<path stroke="#f0d0b0" stroke-width="1.6" d="M696 423l5-11M670 428l-4-7"/>
<path stroke="#303040" stroke-width="1.6" d="M742 624l-1 14"/>
<path stroke="#d0b090" stroke-width="1.6" d="M601 436l-15-4M643 416l-8-8M566 415l-8-3M707 359l-4-12"/>
<path stroke="#e0d0c0" stroke-width="1.1" d="M571 405l-12-5M843 435l15-6"/>
<path stroke="#e0e0f0" stroke-width="1.1" d="M667 587l-1 8M614 530l-11 12M619 586l-3 11M882 598l12 15M639 506l-8 5M766 502l13 9M867 525l18 1M666 517l-3 9M577 555l-8 11M887 571l13 5M745 492l3 6M868 469l13 4M664 548l-1 11M656 529l-4 13M625 491l-8 6M610 535l-14 7M596 602l-14 12M879 598l14 11M858 474l11 6M661 585l-4 11"/>
<path stroke="#808090" stroke-width="1.6" d="M803 637l13 16M891 602l11 7M730 634l4 11"/>
<path stroke="#a0a090" stroke-width="1.1" d="M654 668l-4 12M610 429l-8-6M637 680l-4 9M630 679l-4 14M642 672l-3 18"/>
<path stroke="#506060" stroke-width="1.1" d="M745 636l2 14"/>
<path stroke="#e0c0a0" stroke-width="1.6" d="M637 387l-2-6M610 442l-12 4"/>
<path stroke="#f0d0d0" stroke-width="1.6" d="M775 389l9-7M738 416l9-5"/>
<path stroke="#604020" stroke-width="1.6" d="M516 513l-17 6M500 514l-18 5M915 517l13 6"/>
<path stroke="#f0e0d0" stroke-width="1.1" d="M724 430l12-5M719 429l13-2"/>
<path stroke="#808070" stroke-width="1.6" d="M636 439l-11-4M860 547l15 11M748 420l11-9M474 482l-14 8"/>
<path stroke="#806060" stroke-width="1.1" d="M779 397l7-4M744 436l7-1M535 574l-16 9M903 487l17 5M821 590l12 13M829 457l17 1M760 424l8-6M636 380l-5-10"/>
<path stroke="#504040" stroke-width="1.6" d="M906 577l16 15M542 569l-10 14M907 580l13 10M906 580l16 10M644 693l-2 19M762 445l9-1M855 561l14 5M573 676l-5 10M814 650l3 10M737 640l4 11M859 609l5 8"/>
<path stroke="#c0b090" stroke-width="1.1" d="M713 368l2-9"/>
<path stroke="#e0c0c0" stroke-width="1.6" d="M775 373l8-9"/>
<path stroke="#c0a080" stroke-width="1.6" d="M635 372l-9-10M618 364l-6-4M736 344l4-6M724 339l4-13M715 343l4-7"/>
<path stroke="#d0c0a0" stroke-width="1.1" d="M720 398l7-7"/>
<path stroke="#201020" stroke-width="1.1" d="M491 611l-8 10"/>
<path stroke="#d0b0b0" stroke-width="1.1" d="M831 456l9 1M552 389l-13-1M628 429l-7-1"/>
<path stroke="#806040" stroke-width="1.1" d="M684 367l-1-7M552 419l-11 2M505 437l-18 0M665 361l-5-12M695 387l-1-8M658 372l-6-12M677 411l-3-12"/>
<path stroke="#705060" stroke-width="1.6" d="M547 635l-10 8"/>
<path stroke="#a09080" stroke-width="1.1" d="M687 428l-1-10M683 428l-3-6M631 431l-11-1M578 410l-15-8M540 587l-7 8M584 682l-6 9"/>
<path stroke="#f0b080" stroke-width="1.1" d="M664 389l-4-6"/>
<path stroke="#e0c0c0" stroke-width="1.1" d="M846 494l9 5M774 401l8 0"/>
<path stroke="#c0a0a0" stroke-width="1.6" d="M760 356l6-10M814 580l7 6M815 591l15 13"/>
<path stroke="#a07050" stroke-width="1.1" d="M687 398l-6-10M511 453l-12 1M797 455l15 5"/>
<path stroke="#e0e0d0" stroke-width="1.1" d="M573 401l-14-11M607 376l-11-9M627 417l-10-2M630 415l-7-5"/>
<path stroke="#708080" stroke-width="1.1" d="M746 638l0 16"/>
<path stroke="#e0a080" stroke-width="1.6" d="M675 376l-5-9"/>
<path stroke="#c0b0c0" stroke-width="1.1" d="M895 534l7 6"/>
<path stroke="#101010" stroke-width="1.1" d="M504 619l-12 14M493 606l-10 8M500 616l-8 8M527 633l-5 9M495 616l-9 6M518 640l-6 14M512 619l-12 8"/>
<path stroke="#909080" stroke-width="1.1" d="M568 406l-8-1M668 692l-5 12"/>
<path stroke="#704040" stroke-width="1.1" d="M547 537l-12 15M848 586l10 5M802 456l9-1M820 660l11 18M532 605l-10 14M548 458l-18 3"/>
<path stroke="#d09070" stroke-width="1.1" d="M566 428l-13-2M522 419l-11-1M662 364l-1-7"/>
<path stroke="#d0a090" stroke-width="1.6" d="M867 437l8 3M717 403l11-8M616 447l-13-1M717 348l2-15"/>
<path stroke="#c0b0a0" stroke-width="1.1" d="M837 434l14-5M639 412l-8-4M590 678l-9 17M627 386l-10-13"/>
<path stroke="#e0b0a0" stroke-width="1.1" d="M703 421l7-9"/>
<path stroke="#f0d0c0" stroke-width="1.6" d="M627 435l-10 2M777 387l8-3M744 422l8-2"/>
<path stroke="#301020" stroke-width="1.6" d="M517 640l-6 10M506 617l-19 6M524 630l-11 18M841 653l14 11M526 631l-5 8M508 613l-10 18M530 642l-11 9"/>
<path stroke="#904030" stroke-width="1.1" d="M504 531l-10 4"/>
<path stroke="#808090" stroke-width="1.1" d="M754 636l2 16M551 608l-15 13"/>
<path stroke="#e0a080" stroke-width="1.1" d="M706 399l1-8M668 388l-6-12M668 365l-4-11M665 397l-2-9M675 377l-2-12M663 389l-1-9M703 405l4-12"/>
<path stroke="#ffffff" stroke-width="1.1" d="M669 474l-7 6M749 384l8-7"/>
<path stroke="#907060" stroke-width="1.1" d="M907 561l17 7M648 420l-6-4M876 423l18-6M601 487l-6 5M607 356l-9-13M583 435l-11-2M664 420l-5-9M901 487l12 2M582 432l-11 3M901 473l10 1M809 540l10 8"/>
<path stroke="#808070" stroke-width="1.1" d="M714 428l13 0M749 419l10-3"/>
<path stroke="#e0e0d0" stroke-width="1.6" d="M610 420l-10-4M563 395l-14 0M562 390l-9-3"/>
<path stroke="#303030" stroke-width="1.6" d="M740 638l5 14"/>
<path stroke="#b0c0d0" stroke-width="1.6" d="M598 588l-7 15M802 615l9 17M621 584l-5 8M590 614l-13 14"/>
<path stroke="#606050" stroke-width="1.1" d="M609 487l-9 5M816 596l13 8"/>
<path stroke="#804020" stroke-width="1.6" d="M517 554l-13 13M529 547l-11 0M495 557l-11 9M522 563l-18 8M480 556l-9 7M530 540l-10 7"/>
<path stroke="#a07050" stroke-width="1.6" d="M812 458l16 3M818 461l16 7M670 403l-4-6M680 388l-2-7M679 402l-4-10"/>
<path stroke="#705030" stroke-width="1.1" d="M911 471l20 4M913 486l20 5"/>
<path stroke="#401020" stroke-width="1.1" d="M495 594l-13 10M512 598l-10 12"/>
<path stroke="#c0b0c0" stroke-width="1.6" d="M561 640l-9 11"/>
<path stroke="#c0b0a0" stroke-width="1.6" d="M590 363l-9-8M641 437l-10 0M635 423l-11-6"/>
<path stroke="#908090" stroke-width="1.6" d="M803 571l7 5M740 673l1 21"/>
<path stroke="#202010" stroke-width="1.6" d="M538 630l-5 15"/>
<path stroke="#fffff0" stroke-width="1.6" d="M614 408l-8-6"/>
<path stroke="#f0b080" stroke-width="1.6" d="M686 382l-2-10"/>
<path stroke="#a0b0a0" stroke-width="1.6" d="M564 380l-12-6"/>
<path stroke="#706070" stroke-width="1.6" d="M548 616l-16 14"/>
<path stroke="#603040" stroke-width="1.6" d="M547 647l-5 11"/>
<path stroke="#e0d0b0" stroke-width="1.1" d="M559 405l-12-1"/>
<path stroke="#d0b090" stroke-width="1.1" d="M697 421l2-12M651 421l-6-5"/>
<path stroke="#606050" stroke-width="1.6" d="M780 688l5 11"/>
<path stroke="#708080" stroke-width="1.6" d="M553 613l-11 15"/>
<path stroke="#d0c0d0" stroke-width="1.6" d="M545 588l-11 17"/>
<path stroke="#b07060" stroke-width="1.6" d="M520 448l-17-1M826 465l11 7"/>
<path stroke="#809090" stroke-width="1.1" d="M710 638l1 15M572 653l-10 16M755 473l8 6"/>
<path stroke="#b0a0b0" stroke-width="1.1" d="M868 623l8 14"/>
<path stroke="#603030" stroke-width="1.1" d="M490 488l-18 2M528 603l-15 11"/>
<path stroke="#403040" stroke-width="1.1" d="M819 638l13 17M726 660l3 14"/>
<path stroke="#505040" stroke-width="1.1" d="M619 467l-13 5M628 694l-1 13M623 691l-6 19"/>
<path stroke="#b09090" stroke-width="1.6" d="M609 485l-11 5"/>
<path stroke="#505050" stroke-width="1.1" d="M553 638l-12 11M729 641l7 19M750 692l5 20"/>
<path stroke="#504050" stroke-width="1.1" d="M546 621l-11 13"/>
<path stroke="#c0a0a0" stroke-width="1.1" d="M772 369l5-7M614 431l-10 1"/>
<path stroke="#401010" stroke-width="1.1" d="M487 599l-10 10"/>
<path stroke="#908060" stroke-width="1.6" d="M643 396l-5-6"/>
<path stroke="#504050" stroke-width="1.6" d="M546 625l-6 7"/>
<path stroke="#c0b090" stroke-width="1.6" d="M653 427l-6-1"/>
<path stroke="#604050" stroke-width="1.6" d="M822 625l12 15"/>
<path stroke="#d0c0d0" stroke-width="1.1" d="M463 527l-11 3M856 508l12 5"/>
<path stroke="#f0e0e0" stroke-width="1.6" d="M593 410l-14-7M585 409l-13-6M881 466l12 0M581 406l-14-4"/>
<path stroke="#303020" stroke-width="1.6" d="M564 673l-15 14M912 550l12 8"/>
<path stroke="#b09080" stroke-width="1.6" d="M840 480l17-1"/>
<path stroke="#b0c0b0" stroke-width="1.6" d="M768 672l6 12"/>
<path stroke="#904030" stroke-width="1.6" d="M495 532l-13 6"/>
<path stroke="#90a0b0" stroke-width="1.1" d="M668 566l1 14"/>
<path stroke="#906040" stroke-width="1.1" d="M534 461l-8 2M794 471l11 3"/>
<path stroke="#403040" stroke-width="1.6" d="M862 619l14 15"/>
<path stroke="#807050" stroke-width="1.6" d="M711 400l3-10M685 412l2-9"/>
<path stroke="#ffd0b0" stroke-width="1.6" d="M682 425l-4-10"/>
<path stroke="#c08070" stroke-width="1.1" d="M516 445l-12 0M510 421l-10-4"/>
<path stroke="#505040" stroke-width="1.6" d="M543 632l-10 20"/>
<path stroke="#f0e0e0" stroke-width="1.1" d="M612 417l-13-1"/>
<path stroke="#a06050" stroke-width="1.6" d="M831 486l11 1"/>
<path stroke="#404040" stroke-width="1.6" d="M730 663l6 20"/>
<path stroke="#303040" stroke-width="1.1" d="M728 640l2 10"/>
<path stroke="#a0b0c0" stroke-width="1.6" d="M627 580l-4 7M561 573l-14 8"/>
<path stroke="#908090" stroke-width="1.1" d="M627 459l-6 2"/>
<path stroke="#c08070" stroke-width="1.6" d="M488 444l-19 1"/>
<path stroke="#201020" stroke-width="1.6" d="M517 618l-7 12"/>
<path stroke="#907080" stroke-width="1.1" d="M815 640l11 7M552 634l-6 13"/>
<path stroke="#ffe0d0" stroke-width="1.1" d="M559 402l-16-2"/>
<path stroke="#e0f0e0" stroke-width="1.6" d="M757 377l5-6"/>
<path stroke="#604020" stroke-width="1.1" d="M830 599l13 1"/>
<path stroke="#a0b0a0" stroke-width="1.1" d="M757 673l3 13"/>
<path stroke="#303020" stroke-width="1.1" d="M911 549l14 9"/>
<path stroke="#a08090" stroke-width="1.1" d="M548 619l-8 8"/>
<path stroke="#e0c0a0" stroke-width="1.1" d="M711 370l7-12"/>
<path stroke="#e0b0a0" stroke-width="1.6" d="M751 426l7 0"/>
<path stroke="#b0a0b0" stroke-width="1.6" d="M803 564l6 10"/>
<path stroke="#b08080" stroke-width="1.6" d="M838 482l10 3"/>
<path stroke="#f0c0b0" stroke-width="1.1" d="M657 426l-7-4"/>
</g>
<g filter="url(#b1b)" fill="none" stroke-linecap="round" opacity=".8">
<path stroke="#604040" stroke-width="1.6" d="M476 375l-18-1M423 380l-11-1M436 359l-13-4M733 300l5-10M480 407l-19 0M486 355l-16-9M889 380l14-4M760 301l7-17M844 350l9-4M741 285l4-11M862 388l12-14M463 413l-15 1M417 377l-13-10M510 404l-16 0M469 383l-18-7M484 404l-16-5M412 437l-17-1M484 344l-13-5M444 376l-21-1M526 384l-18-3M451 416l-14-5M757 273l8-16M516 398l-19-5M742 309l10-15M844 378l10-5M470 326l-21-1M772 300l3-18M816 344l8-5M800 685l4 18M479 407l-17-3M847 379l8-3M765 281l5-10M476 435l-14-4M451 425l-13-3M807 323l6-7M439 358l-18-13M429 416l-11 2M744 275l6-9M867 360l9 1M488 386l-12-5M823 287l4-9M448 381l-16-12M420 394l-15-1M778 313l9-16M753 306l7-8M472 438l-12 1M807 345l8-6M763 304l9-16M501 337l-14-7M818 361l14-4M744 299l2-17M426 362l-19-3M780 272l4-10M488 398l-11-4M816 356l9-11M423 382l-22-7M751 325l8-6M785 693l1 22M835 337l12-8M719 316l1-8M834 317l14-14M862 393l10-3M878 660l13 11M497 377l-18-8M489 353l-9-3M497 320l-9-14M842 375l19-5M412 387l-17-3M520 379l-17-4M416 421l-18 7M515 361l-16-7M719 277l7-11M470 377l-10 2M815 347l16-8M814 328l7-5M489 401l-19-2M806 325l9-5M481 413l-19-6M506 355l-12-12M749 281l5-12M795 327l14-10M790 281l11-16M791 330l6-6M501 314l-10-10M451 395l-18-12M520 389l-16-5M726 319l9-13M867 343l8-8M735 300l2-11M770 326l9-10M763 338l8-16M747 275l3-16M793 294l13-6M522 386l-10-7M936 443l11-4M736 285l9-17M389 425l-17-4M466 364l-13-6M509 367l-19-5M817 297l11-16M751 331l8-16M724 294l8-11M800 328l7-5M447 426l-14-4M437 367l-18-2M487 387l-10-12M467 337l-8-6M382 437l-11 2M478 333l-14-1M728 275l6-15M506 359l-14-8M469 379l-13 0M802 285l11-6M737 277l-2-10M824 361l14-12M472 382l-16-9M745 286l13-11M784 309l11-13M857 356l15-10M840 343l12-11M407 404l-21-9M775 307l11-5M938 443l22 3M748 284l7-8M812 694l4 12M430 402l-19 2M520 367l-10-4M768 316l8-17M717 332l4-15M744 296l10-14M505 363l-8-7M781 287l8-13M406 437l-16-2M524 375l-10-7M779 339l11-13M386 431l-13 1M392 434l-21 0M489 321l-19-3M505 392l-14-4M816 279l7-5M850 344l14-6M459 361l-15-7M841 302l14-14M757 291l5-12M745 296l7-14M808 303l5-11M797 356l10-6M380 439l-16-1M463 407l-14-3M820 278l5-11M492 378l-19-3M513 390l-14-7M817 350l12-11M405 401l-17-1M884 408l10-3M865 361l20 0M733 308l1-17M442 355l-16-9M790 309l3-9"/>
<path stroke="#401010" stroke-width="1.6" d="M953 656l11 4M823 687l16 18M539 668l-12 12M938 660l15 17M536 669l-4 12"/>
<path stroke="#c09070" stroke-width="1.6" d="M403 424l-14 1M671 323l-1-14M539 349l-9-6M818 343l7-6M625 314l-3-11M449 382l-11-2M454 359l-12-3M728 315l1-11M592 285l-7-15M552 305l-12-3M813 282l3-15M597 345l-3-7M807 335l6-6M689 330l-2-9M636 286l-3-8M560 310l-9-18M767 297l2-15M521 322l-6-6M701 288l1-17M577 280l-13-10M672 283l-5-15M677 274l1-11M843 319l9-13M444 400l-20-7M620 324l-11-12M486 408l-9-2M734 324l5-9M488 355l-10-1M550 336l-8-3M856 352l11-8M656 289l-3-15M837 345l7-6M565 337l-14-10M467 423l-13-5M851 320l14-8M477 340l-16-3M482 379l-16-6M533 316l-13-5M881 371l9 2M826 321l10-14M829 314l12-7M601 305l-8-9M598 308l-13-10M628 305l-3-10M699 326l-3-11M545 309l-17-11M425 414l-22-1M434 363l-11-5M518 393l-16-2M620 338l-4-10M741 295l1-13M854 323l11-9M660 284l-9-14M618 300l-3-10M780 334l7-9M579 299l-12-13M559 326l-4-19M754 275l6-18M755 288l4-14M593 321l-10-6M558 283l-6-16M627 290l-9-14M770 317l12-9M765 282l6-9M631 304l-5-10M846 353l9-7M686 333l-3-9M562 302l-16-12M460 338l-16-1M558 286l-9-10M842 315l10-6M520 323l-8-9M668 321l-1-13M734 292l7-18M552 300l-19-8M762 329l4-7M428 378l-22 2M567 323l-19 1M752 307l6-6M572 284l-6-19M656 329l-5-14M485 359l-19-2M611 308l-8-13M557 301l-11-6M670 268l-3-9M436 368l-16-4M767 304l5-12M560 297l-7-15M786 314l12-12M600 314l-6-6M839 357l7-5M472 350l-8-6M545 318l-7-5M666 301l-7-9M455 400l-14-10M403 399l-13 0M769 268l11-14M402 417l-16 3M419 371l-10-6M692 332l-1-15M827 303l6-8M388 436l-15-1M621 326l-8-15M504 353l-16-6M463 430l-19-10M793 303l5-8M674 319l-1-12M821 336l16-11M823 320l5-8M601 300l-11-10M414 429l-14-2M567 310l-7-7M443 360l-18-10M794 289l3-8M774 339l8-6M786 329l1-11M519 302l-12-14M799 278l7-10M571 316l-11-9M628 293l-5-18M572 335l-10-11M809 341l12-9M480 363l-13-5M746 263l1-18M481 351l-15-5M777 326l8-11M415 419l-12-1M831 369l15-9M814 364l7-3M479 420l-12-4M685 284l1-9M736 280l0-10M600 321l-9-5M682 294l0-15M794 277l8-13M666 312l-5-13M480 321l-13-12M384 444l-16 2M553 340l-14-5M775 284l2-10M738 294l0-11M853 363l14-13M802 306l6-11M400 435l-14-2M625 340l-6-15M681 291l-6-13M450 422l-11 3M684 260l3-10M849 340l9-8M441 400l-10-3M694 326l-5-13M488 385l-18-4M555 305l-9-12M695 274l1-10M630 317l-5-13M461 359l-19-3M813 339l9-8M385 447l-11-5M550 307l-10-9M725 273l3-9M844 343l11-7M443 358l-12-6M760 294l4-8M872 367l14-7M835 369l8-6M797 313l10-9M764 315l4-10M823 330l11-12M644 273l-5-17M692 323l2-11M614 268l-7-17M657 327l-4-7M630 294l-4-14M530 352l-10-8M757 279l1-13M494 345l-18-8M860 359l14 1M670 280l-1-10M504 399l-19-7M484 382l-18-4M753 308l8-13M859 342l15-5M524 326l-8-5M547 338l-9-6M812 300l11-9M609 294l-10-17M433 360l-21-9M828 368l4-7M449 342l-14-12M545 317l-15-11M583 289l-8-11M739 314l6-11M433 426l-14-2M504 397l-14 2M861 348l7-13M612 345l-4-9M786 288l9-14M825 318l4-11M587 273l-17-10M454 383l-9 0M663 336l-2-7M736 312l2-12M613 322l-7-8M441 382l-20 3M747 270l7-7M466 395l-11-12M745 313l9-14M687 295l-2-8M460 423l-18-2M647 258l1-12M751 263l6-14M799 301l8-9M647 273l1-14M615 332l-12-7M587 309l-12-13M749 293l4-12M839 367l12-14M623 342l-4-11M389 444l-21-5M706 329l0-13M770 328l6-15M735 325l3-9"/>
<path stroke="#302020" stroke-width="1.6" d="M452 636l-14 11M477 614l-13 12M489 613l-7 9M887 692l12 12M575 687l-8 10M867 688l10 23M460 656l-11 10M452 616l-19 15M493 662l-18 9M903 629l13 10M459 618l-20 9M460 611l-16 9M852 664l8 11M474 607l-11 9M866 649l15 13M934 441l16 3M442 624l-18 4M897 691l18 16M976 647l13 8M457 655l-18 14M839 670l7 17M455 656l-14 20M461 581l-8 8M460 618l-15 13M913 593l10 3M929 439l17-3M456 594l-12 8M877 658l12 12M460 584l-15 14M528 659l-8 9M911 690l18 17M479 616l-9 6M551 686l-17 15M459 649l-10 6"/>
<path stroke="#605040" stroke-width="1.6" d="M877 352l13-9M544 345l-8-15M560 676l-3 14M531 332l-11-16M527 338l-13-4M535 322l-11-5M522 354l-14-5M553 337l-10-11M700 283l6-13M453 439l-15-4M871 385l18-3M682 277l1-10M569 335l-7-10M662 312l-1-12M675 264l1-9M558 283l-6-8M682 281l3-11M708 262l-2-14M563 324l-10-10M547 314l-10-11M514 324l-12-4M679 327l-3-14M786 693l4 11M704 259l1-12M902 394l17-3M880 364l16-7M681 288l1-17M703 261l1-17M688 263l3-14M378 445l-15-2M710 266l3-9M663 269l-4-9M530 334l-9-4M686 266l-1-16M522 334l-14-11M398 447l-24 1M703 280l0-9M371 457l-14 0M422 436l-15-2M530 380l-11-7M697 267l4-15M656 336l-8-14M691 284l3-13M896 382l12-7M674 298l4-11M374 444l-13 2M699 317l3-8M696 297l10-12M523 329l-6-8M560 329l-6-7M661 335l-3-13M686 314l4-8M844 295l10-15M696 299l2-17M539 329l-10-4M463 443l-14 0M665 275l6-11M884 364l13-6M873 406l16-1M455 439l-20 0M509 309l-15-5M702 280l5-15M537 323l-7-6M697 284l-1-18M848 310l13-8M696 317l0-8M867 653l11 13M672 265l3-18M545 305l-16-10M545 302l-8-13"/>
<path stroke="#d0d0e0" stroke-width="1.6" d="M890 623l8 9M410 658l-13 18M411 467l-18 3M888 626l7 12M423 647l-13 9M426 628l-12 7M455 525l-15 4M435 585l-9 6M460 499l-14-2M436 584l-19 11"/>
<path stroke="#e0f0f0" stroke-width="1.6" d="M389 578l-15 15M416 555l-9 6M420 547l-13 10M418 591l-21 9M399 590l-13 4M408 544l-17 12M405 620l-13 10M372 531l-18-6M407 582l-18 17M380 503l-11 1M402 547l-12 3M369 540l-24 8M386 597l-19 3M384 507l-15 0M442 537l-13 2M391 550l-22 10M417 494l-20 12M449 472l-22 3M418 600l-10 8M424 509l-19 1M405 571l-10 6M423 545l-18 11M385 494l-24-3M417 492l-18 8M368 540l-15 4M380 517l-22 6M431 547l-23 6M411 552l-22 8M435 547l-23 2M388 595l-22 5M414 584l-18 11M419 581l-16 11M395 521l-17 4M376 507l-18 5M384 527l-22 5M437 549l-13 2M380 557l-18 12M400 636l-16 7M450 510l-12 3M419 522l-19 6M416 570l-23 9M391 485l-17-1M382 571l-22 3M403 498l-14 3M437 504l-23-2M383 525l-19 9M384 598l-21 8M412 566l-20 0M422 552l-23 2M392 506l-12 10M421 569l-20 13M401 508l-15 5M380 580l-19 15M417 561l-20-2M434 484l-19 10M375 561l-16 3M369 536l-21 2M391 604l-11 7M376 521l-18 14M395 591l-12 8M399 632l-14 11M441 494l-19 6M386 543l-12 9M378 590l-23 3M394 512l-10 3M422 482l-17 4M425 541l-10 6M396 631l-14 6M412 549l-15 5M398 592l-8 9M406 543l-18 9M437 488l-22 4"/>
<path stroke="#706050" stroke-width="1.6" d="M755 264l5-13M806 320l6-12M463 372l-13-3M793 320l5-8M436 383l-10-1M423 444l-12 2M784 301l5-8M917 410l16-5M436 362l-15-1M793 300l8-7M452 440l-19 5M894 371l13-9M789 293l5-12M416 448l-16 1M459 333l-12-4M447 391l-9-4M440 363l-12-9M854 322l7-7M795 322l12-11M455 392l-11-2M869 336l11-5M436 429l-14-4M462 345l-16-11M764 289l2-18M804 321l8-10M803 325l13-12M463 332l-8-9M772 332l10-12M853 304l11-7M767 335l7-12M801 334l12-9M388 454l-14-4M410 438l-10 0M466 350l-14-2M457 432l-10-3M854 325l18-6M917 410l18 5M417 448l-19-6M474 374l-15 0M774 278l5-8M551 346l-11-6M470 337l-11-5M779 283l5-19M431 374l-14-5M886 373l5-12M784 309l12-11M504 372l-14 3M442 431l-16 3M469 382l-15 0M470 362l-20-9M786 348l9-8M430 377l-21-11M786 330l7-10M563 351l-7-5M457 349l-13-12M464 436l-20-6M457 386l-15-5M463 427l-11 0M801 340l6-6"/>
<path stroke="#201010" stroke-width="1.6" d="M840 677l8 15M478 686l-9 8M495 690l-6 12M849 658l19 12M494 690l-15 9M511 650l-10 11M452 686l-11 11M477 649l-16 9M511 675l-17 14M442 690l-10 8M925 650l15 11M983 533l14 2M461 623l-16 17M930 686l11 14M455 680l-11 19M843 685l19 13M847 671l5 13M478 626l-21 9M949 669l12 13M952 646l12 11M485 675l-11 10M494 636l-9 14M942 643l12 9M533 678l-4 10M446 690l-15 12M870 687l7 10M984 618l11 10M860 690l6 9M449 641l-21 12M466 629l-19 14M540 668l-12 14M464 637l-16 16M473 648l-18 11M853 682l7 10M831 666l7 18M473 673l-9 18M447 684l-21 7M862 666l12 19M472 626l-16 18M493 685l-8 12M485 687l-18 7M919 680l9 9M518 667l-7 15M453 647l-4 11M921 685l12 11M434 685l-13 11M515 680l-12 14M958 638l19 17M933 674l11 8M532 691l-3 17M956 663l11 10M481 654l-13 9M874 677l11 13M500 689l-12 12M456 683l-18 16M463 644l-9 7M882 668l15 18M477 647l-13 8M448 689l-11 22M447 676l-17 13M458 619l-16 12M486 665l-12 11M920 691l10 18M864 678l11 12M465 660l-14 15M926 684l10 11M462 639l-9 17M519 661l-8 6M476 591l-10 7M922 640l18 10M525 657l-5 10M951 672l13 13M496 629l-8 11M929 664l11 4M436 687l-14 11M507 642l-8 11M876 686l11 23M921 650l8 7M957 666l9 6M860 685l12 14M493 684l-9 9M925 674l10 23M443 684l-16 13M964 663l9 7M925 690l13 8M474 629l-9 12M512 648l-17 12M487 691l-13 12M541 667l-8 10M457 655l-13 13M466 674l-10 16M482 642l-17 18M507 688l-11 15M483 667l-16 14M477 688l-23 8M486 605l-11 15M479 638l-7 8M502 686l-19 12M453 644l-6 9M837 667l9 11M908 649l15 9M525 673l-11 7M461 680l-11 7M440 687l-15 7M552 676l-10 11M520 647l-13 15M889 676l15 15M550 687l-15 16M486 648l-11 12M522 680l-6 8M877 669l10 14M499 662l-15 13M486 656l-14 8M464 643l-10 7M521 672l-5 14M504 659l-10 12M497 621l-7 7M526 689l-8 10M937 637l17 15M511 669l-19 14M527 654l-9 15M857 654l5 19M485 655l-8 6"/>
<path stroke="#705040" stroke-width="1.6" d="M558 313l-6-10M708 330l5-8M444 406l-17 0M560 348l-10-5M466 382l-20-9M652 285l-2-16M769 281l5-17M561 347l-11-10M484 397l-16-10M586 323l-5-9M462 373l-12-5M458 398l-20-3M481 370l-17-6M687 262l-1-18M584 297l-8-17M753 321l6-13M794 322l7-7M468 354l-11-1M637 331l-10-13M598 339l-4-9M614 337l-9-14M873 374l18-9M558 347l-14-10M672 327l-2-16M468 398l-20 1M613 316l-7-11M576 315l-7-12M421 412l-14-1M705 308l3-14M794 271l9-18M785 269l2-9M703 324l1-15M582 291l-6-8M826 321l12-16M610 294l-5-15M656 322l-2-13M599 347l-13-12M808 329l6-8M496 376l-11-1M766 345l7-16M705 319l1-13M387 443l-15-3M894 395l11-5M818 313l8-17M627 267l-5-8M830 314l12-7M609 277l-6-11M443 418l-16-4M819 312l6-12M809 335l12-4M739 269l6-7M530 329l-9-13M534 348l-7-5M575 285l-7-18M446 384l-18 2M779 294l11-14M561 283l-9-6M519 360l-10-4M768 276l8-9M462 572l-18 15M609 265l-11-11M849 308l8-8M495 393l-15-4M476 359l-10-6M515 397l-18-10M476 419l-15-5M449 376l-20-9M902 636l5 12M789 692l4 11M867 394l13 0M705 267l0-20M679 334l-5-8M517 319l-11-10M422 425l-20-5M442 377l-17 1M746 328l3-9M723 267l5-16M513 305l-15-12M685 287l-2-15M450 348l-17-12M902 439l18-2M648 311l-3-17M610 309l-7-8M773 327l9-10M471 342l-16-4M572 341l-6-6M512 306l-7-10M512 308l-6-13M790 319l10-10M484 431l-19-8M610 279l-2-10M748 268l7-14M411 426l-17-3M717 267l4-19M582 310l0-14M462 380l-21-2M636 321l-4-10M499 329l-9-4M530 315l-6-7M478 358l-19-8M472 430l-20 0M587 280l-8-9M626 332l-15-8M676 319l-1-11M787 280l7-5M594 291l-8-14M781 271l6-15M471 392l-12-1M455 417l-17 0M619 288l-5-12M610 274l-8-6M826 326l16-8M657 280l-1-10M791 338l9-15M651 336l-1-9M739 318l6-13M417 411l-17 2M809 361l10-7M767 304l6-6M659 260l-1-14M728 324l5-12M464 341l-14-8M588 298l-11-13M817 301l6-11M734 287l-3-17M835 361l7-4M826 300l11-15M570 338l-5-7M651 338l-2-10M688 330l-2-11M648 268l1-9M775 311l5-15M694 256l-9-18M735 269l4-14M715 278l2-13M640 261l-4-17M400 441l-24-1M916 422l13 0M824 319l7-7M546 289l-4-14M715 280l3-12M887 417l11-2M611 319l-3-8M664 302l-3-9M878 364l13-15M627 285l-9-17M741 270l8-16M527 344l-11-7M438 356l-15-3M644 282l-3-12M814 304l6-12M844 319l11-10M505 320l-16-9M635 332l-2-13M815 327l9-8M866 362l14-5M809 287l11-8M816 340l5-9M728 286l4-18M445 370l-14 0M513 333l-15-5M901 401l11 2M398 417l-17-5M620 343l-13-10M854 380l12-4M472 424l-15-7M448 340l-11-4M525 372l-7-4M482 426l-12-3M493 371l-16-6M566 327l-9-9M752 316l7-14M470 345l-14-8M668 311l-4-16M532 376l-9-6M694 292l2-16M698 323l2-13M386 440l-23-2M528 315l-4-8M570 300l-7-9M558 671l-11 16M912 443l21 1M443 433l-17 2M618 317l-2-11M604 311l-7-9M602 306l-4-12M574 302l-7-7M913 436l17 4M731 298l-2-16M408 398l-14-4M489 357l-20-1M792 327l7-11M703 290l-2-12M820 283l12-17M473 418l-14-6M541 329l-9-10M819 355l13-9M532 371l-8-6M796 348l12-10M669 335l4-7M849 387l9-4M738 271l5-13M782 346l9-8M492 368l-16-4M674 309l-4-13M776 298l10-15M585 275l-3-11M497 313l-12-16M780 311l2-11M470 423l-13 6M747 278l1-15M618 265l-5-9M472 365l-12-2M602 291l-9-18M660 324l-1-8M760 304l3-11M677 305l-2-15M909 445l13 10M837 288l8-8M422 436l-15-4M810 281l4-16M683 278l-3-16M400 409l-10 2M428 407l-15-4M463 569l-17 16M623 276l-2-18M731 328l1-9M466 353l-14-3M508 354l-11-8M889 396l15-4M485 421l-10-3M390 427l-17 2M497 327l-8-9M833 369l9-3M712 292l2-15M396 406l-10-3M590 320l-6-9M477 392l-14-5M456 411l-21 2M500 363l-16-14M742 309l7-16M656 330l-6-10M648 336l-8-13M468 438l-10-2M415 387l-21-9M621 317l-4-7M876 364l10-1M865 375l17-6M812 345l6-7M446 429l-20-1M390 430l-24-7M833 364l8-7M491 411l-17-6M396 428l-24-2M586 295l-12-10M570 308l-6-7M664 336l-1-13"/>
<path stroke="#707070" stroke-width="1.6" d="M443 604l-9 6M437 642l-13 20M873 632l15 17M894 617l14 8M446 577l-11 9M443 607l-12 11M454 550l-11 4M459 541l-11 4M448 577l-12 10"/>
<path stroke="#202020" stroke-width="1.6" d="M444 643l-22 12"/>
<path stroke="#e0a080" stroke-width="1.6" d="M615 310l-6-9M633 311l-6-14M622 283l-4-8M615 277l-9-15M613 278l-4-8M581 312l-11-11M618 271l-5-18M585 306l-12-13M597 278l-9-13M611 276l-9-17M588 282l-2-17M624 288l-7-15M635 290l-5-9M595 286l-6-8M637 316l-7-11M602 281l-8-17M602 288l-5-8M607 325l-8-12"/>
<path stroke="#b08070" stroke-width="1.6" d="M581 272l-7-15M458 350l-12-6M465 348l-18-4M532 377l-13-6M814 326l7-17M477 367l-15-10M450 363l-11-8M481 418l-14-2M827 284l19-7M723 261l-1-11M514 349l-16-11M570 339l-9-10M457 395l-22-2M667 302l0-11M869 372l16-8M473 340l-14-4M532 359l-17-8M558 315l-4-13M597 336l-6-9M784 320l2-9M559 292l-13-8M849 319l16-12M476 405l-16-7M543 299l-9-9M775 311l14-10M523 319l-11-10M684 324l-3-8M850 372l11-12M792 318l7-8M445 350l-19-9M776 275l6-7M800 305l14-12M423 423l-20-9M675 271l-1-9M460 414l-13-1M474 415l-20-3M737 277l2-12M631 330l-11-10M435 392l-10-1M534 342l-15-12M450 380l-17-1M440 387l-9-3M544 337l-18 0M698 272l-4-13M818 323l6-6M534 302l-14-9M863 394l18-4M794 347l11-10M470 385l-19-7M785 348l7-14M564 330l-9-4M768 313l6-11M384 447l-13 0M758 287l2-10M576 295l-7-8M491 404l-15-5M795 345l8-9M497 374l-15-4M763 337l7-12M394 434l-16-3M481 326l-13-7M502 304l-7-6M825 343l11-8M725 329l3-11M440 432l-15 4M625 329l-4-8M457 373l-10 0M725 279l1-10M664 315l-7-12M570 337l-7-7M756 271l9-17M788 350l5-8M870 349l13-2M723 304l5-15M518 329l-7-5M483 324l-16-12M746 334l3-9M863 339l11-8M719 280l3-14M862 397l11-4M429 431l-16 0M648 307l-7-14M539 301l-12-8M572 293l-9-12M633 329l-1-7M854 352l18 5M732 269l10-15M637 274l-6-17M580 334l-10-14M873 402l19-6M574 328l-7-12M758 283l8-7M798 308l7-7M496 401l-17-9M892 395l19-6M436 399l-15-6M881 412l16-2M825 302l9-11M759 283l1-9M496 381l-18-7M657 273l2-17M598 340l-8-4M428 419l-22 2M433 407l-18-9M465 328l-18-10M846 333l11-5M582 339l-12-9M571 321l-6-10M741 311l8-12M458 344l-13-6M701 284l2-14M655 316l-13-10M467 354l-11-6M730 338l4-11M745 340l2-17M475 342l-17-14M438 384l-16-6M765 315l8-14M439 396l-19-5M842 348l15-3M371 456l-22 0M777 324l5-8M473 386l-8-6M677 311l0-13M716 283l-2-18M665 309l-1-10M880 360l11-5M660 262l2-14M812 313l7-7M436 423l-20 0M816 311l5-7M417 383l-13 0M805 284l6-17M785 336l8-16M429 379l-20-5M696 263l-3-10M800 301l6-14M517 397l-17-4M664 292l-5-14M732 259l0-17M505 409l-12-2M541 339l-8-4M543 313l-9-9M466 430l-20-3M680 270l-1-13M717 272l0-14M679 288l2-12M806 356l8-9M482 394l-9-1M387 442l-25 2M744 325l5-14M498 339l-16-12M523 344l-10-4M787 302l9-13M818 342l7-6M460 354l-16-13M438 412l-19-5M377 449l-13 3M741 263l3-15M417 429l-19 1M608 336l-8-7M470 447l-17 2M670 300l-2-10M516 387l-7-8M431 394l-20 1M414 426l-17-2M664 314l0-14M473 438l-19-7M845 358l14-9M482 342l-11-2M503 355l-8-6M722 319l3-16M739 334l-2-17M445 400l-21-6M413 384l-18-9M735 339l3-7M865 373l12 1M415 425l-17-7M460 436l-16 6M629 326l-5-6M567 313l-7-12M687 301l0-9M843 382l15 1M778 274l6-13M705 291l1-15M390 426l-18-2M823 327l9-4M824 284l17-7M636 278l-8-18M713 268l1-19M657 270l-5-16M504 335l-20-7M446 419l-12-3M834 367l18-7M556 306l-6-7M608 343l-9-13M799 327l8-10M465 369l-13-13M448 394l-10-2M855 382l18-5M563 294l-10-10M808 348l9-6M481 366l-16-4M880 377l12-4M421 374l-20 5M503 323l-16-12M532 332l-9-7M539 308l-8-3M478 426l-11 3M753 264l5-13M830 288l10-10M674 262l-1-10M465 379l-9-5M668 325l-5-14M863 387l11-5M540 306l-10-8M686 279l-6-11M501 330l-5-11M447 438l-10 1M846 341l13-8"/>
<path stroke="#b0b0c0" stroke-width="1.6" d="M436 523l-21 3M431 613l-13 6M419 590l-17 10M408 524l-21 1M414 546l-10 5M393 513l-16 16M431 589l-20 13M412 493l-11 2M447 477l-19 6M371 561l-21 2M379 549l-21 5M390 548l-17 10M451 496l-17 3M432 521l-10 3M372 547l-14 6M390 532l-20 2M417 641l-11 15M410 651l-15 19M400 496l-15 5M367 546l-11 5M445 512l-21 4M384 585l-18 12M437 508l-10 6M413 576l-11 5M393 610l-17 4M372 569l-12 5M379 530l-12 2M436 521l-17 6M427 627l-15 19M361 520l-15-2M413 494l-24 5M397 545l-19 12M382 586l-15 4M389 524l-12 2M381 579l-20 8M411 505l-14 6M402 608l-13 6M391 596l-13 9M364 545l-14 7M427 479l-20 6M407 557l-14 9M389 501l-18 4M368 494l-25 3M372 587l-21 2M381 542l-16 8M421 539l-16 6M439 508l-16 0M405 544l-11 5M415 559l-10 3M413 637l-16 3M450 558l-18 6M444 573l-13 6M391 544l-19 8M437 487l-22 2M419 550l-9 6M367 574l-19 10M422 478l-10 3M379 525l-15 2M383 547l-19 2M416 522l-19 5M426 566l-13 6M376 595l-10 6M441 565l-16 3M886 625l18 12M412 521l-16 6M368 515l-20 3M408 510l-23 7M430 492l-10 3M383 548l-20 12M394 611l-21 13"/>
<path stroke="#d0b0a0" stroke-width="1.6" d="M883 355l7-6M408 447l-12-1M883 357l11-2M464 447l-13-4M463 448l-18-7M905 390l12-2"/>
<path stroke="#301010" stroke-width="1.6" d="M921 671l10 22M957 582l14 10M503 681l-15 13M934 668l14 16M938 621l13 9M936 546l10 3M950 626l8 8M950 587l15 12M918 627l16 15M982 599l11 2M931 604l11 11M944 524l15 0M938 498l12 3M928 610l13 10M935 609l14 11M917 683l18 14M958 574l11 5M890 680l15 17M935 662l12 9M918 628l10 16M930 561l13 7M944 670l7 12M917 621l14 12M932 574l11 8M949 594l11 5M924 587l12 5M961 550l21 7M933 611l17 4M935 621l14 4M916 630l12 8M965 604l16 9M499 678l-16 14M940 662l11 9M945 571l10 1M937 684l11 13M921 675l10 10M902 670l11 14M953 540l10 6M931 515l20 3M953 572l17 11M943 613l16 7M461 685l-6 9M861 657l9 11M921 665l13 18M913 687l14 18M894 659l7 11M933 555l10 8M974 623l17 8M952 532l12 5M892 670l14 8M921 672l9 7M906 668l15 19M937 524l18 0M919 603l15 12M928 547l16 8M943 628l11 7M946 603l13 5M934 534l10 7M956 592l11 6M963 639l14 7M923 601l9 9M926 592l10 6M943 625l12 6M937 571l15 7M902 674l13 14M939 539l19-3M930 517l12 3M920 605l12 9M959 567l9 8M955 568l13 8M976 601l16 7M939 527l12 2M869 684l23 7M966 525l17 4M928 630l10 9M961 632l15 20M943 513l13 9"/>
<path stroke="#302010" stroke-width="1.6" d="M958 517l16-1M972 529l16 8M503 673l-9 8M930 505l22 3M489 609l-9 8M807 685l4 9M537 677l-4 14M945 469l16-1M960 507l14 1M942 496l11 2M460 670l-23 10M923 688l15 11M961 509l16 6M953 673l7 10M510 671l-4 13M955 670l10 20M902 687l9 15M925 558l11-2M913 609l15 14M463 668l-13 15M946 478l12 5M436 679l-7 8M909 633l11 7M513 674l-13 13M573 690l-12 20M492 670l-9 16M905 690l8 22M881 663l17 16M463 668l-10 11M544 677l-13 9M962 633l15 10M943 653l17 15M481 607l-9 9M554 670l-3 10M960 487l20-2M921 582l18 1M472 679l-22 9M836 678l9 18M535 683l-5 14M965 626l19 11M906 678l11 9M458 665l-18 18M511 671l-10 9M974 640l10 14M970 618l16 7M949 466l19 1M847 685l7 11M961 487l17 6M933 657l9 6M958 522l16 4M923 658l20 11M860 678l5 14M953 504l13 5M925 507l11 3M917 580l12 10M894 667l9 5M925 506l9 3M555 693l-6 12M839 683l13 14M960 511l14-3M977 546l17 4M920 523l18 4M849 677l15 16M522 666l-14 16M940 487l18-3M900 680l10 14M458 665l-12 7M919 579l10 7M935 470l10-4M961 538l13 4M929 472l11 4M467 575l-11 8M537 678l-8 14M924 540l10 7M859 683l13 18M949 493l11 0M913 690l12 15M962 660l14 16M912 660l8 21M815 683l3 10M960 473l22 7M934 473l17 0M877 685l5 24M456 662l-14 11M893 663l17 12M939 476l17 3M950 469l14-1M464 605l-20 7M527 668l-9 15M917 572l18 7M932 461l10 2M956 517l21 7M942 473l19 7M932 500l11 1M476 601l-8 7M915 586l18 11M970 536l23 1M971 598l20 8M919 476l18-1M984 550l18 10M910 680l12 13M914 683l14 13M875 690l7 9"/>
<path stroke="#c0c0d0" stroke-width="1.6" d="M381 520l-20 3M391 472l-25 0M436 461l-12-7M445 544l-22 7M432 466l-15 0M401 564l-11 4M884 636l15 12M433 473l-22 4M389 532l-11 5M406 532l-18 6M414 551l-20 6M391 618l-10 3M373 547l-19 0M379 567l-17 15M360 521l-17 1M392 587l-15 4M437 531l-12 4M373 520l-19-1M460 497l-13 2M409 538l-22 8M435 606l-17 7M415 622l-8 8M454 470l-12 1M367 558l-11 5M459 520l-19 8M428 608l-16 15M414 620l-17 15M410 588l-10 2M379 580l-12 7M386 598l-10 7M419 528l-12 4M361 530l-11 1M410 591l-10 4M390 538l-13 13M400 572l-21 10M454 532l-20 6M383 569l-18 8M452 521l-13 5M420 514l-22-4M423 484l-11 2M378 592l-13 7M447 489l-13-3M431 516l-14 3M421 559l-10 3M387 498l-13 5M369 575l-19-1M404 538l-23 5M403 557l-21 11M387 592l-24 9M429 474l-9 5M438 542l-15 7M387 552l-22 7M413 558l-22 3M372 588l-14 8M385 526l-11 9M409 489l-13 2M441 554l-20 13M450 475l-20 0M451 501l-17 1M378 519l-14 1M392 596l-21 6M437 501l-17 6"/>
<path stroke="#603030" stroke-width="1.6" d="M953 484l19 6M914 569l17 14M943 467l18 1M463 585l-12 19M964 513l21 2M929 459l21 2M925 461l12 0"/>
<path stroke="#503020" stroke-width="1.6" d="M962 564l12 16M947 494l22 7M940 629l8 7M984 573l17 14M960 539l14 8M980 514l13 6M930 471l12 3M966 630l19 9M974 527l15 6M951 501l11 1M958 605l10 3M888 663l6 11M971 604l18 5M966 513l12 2M959 500l16 5M928 635l17 15M934 470l19 7M938 496l17 3M913 630l8 9M955 490l22 4M466 587l-15 3M964 541l18 11M977 639l11 8M959 526l21 5M941 510l9 4M970 620l20 3M958 608l11-1M916 599l12 6M960 534l18 4M942 472l10 1M969 537l16 17M956 563l10 6M961 574l22 12M924 575l13 9M965 502l21 0M937 495l19-1M934 527l13 3M926 560l18 6M929 500l17 6M954 469l20 8M927 586l9 8M983 564l12 6M980 556l22 6M923 566l13 4M932 549l10 5M960 546l9 6M968 576l23 3M923 564l21 6M935 500l13 5M954 507l17 3M963 608l16 10M950 632l10 7M917 593l11 8M924 604l11 9M932 560l18 9M935 505l11-2M921 620l22 6M975 618l15 15M919 585l17 7M969 589l17 7M916 586l13 19M971 606l21 3M973 550l12 4M927 473l7 6M928 562l21 9M931 504l19 12M908 648l16 15M962 556l15 5M951 474l14-5M972 570l19 5M944 464l13-1M983 604l23 7M557 680l-12 19M934 629l19 16M929 545l16 2M929 470l15-2M974 578l17 10M981 528l19 14M929 551l17 7M918 584l9 13M969 638l9 9M972 624l21 3"/>
<path stroke="#d09080" stroke-width="1.6" d="M683 330l0-10M687 292l3-14M520 306l-13-17M526 317l-14-13M528 317l-14-4M698 303l0-12M518 310l-17-11M690 297l-9-16M530 312l-15-8M535 322l-11-11M522 293l-10-8M686 271l1-10M701 317l-1-17M693 265l6-15M694 298l0-8M701 287l7-17M689 277l3-14M700 289l0-10"/>
<path stroke="#402010" stroke-width="1.6" d="M925 651l18 16M917 635l16 17M952 604l8 7M976 617l17 11M954 653l11 3M937 551l11 2M941 640l5 18M946 544l12 1M946 617l23 9M948 536l11 4M931 654l21 12M952 622l13 8M986 581l11 14M952 636l13 8M984 592l23 6M944 597l19 12M929 555l19 4M938 614l15 13M927 563l18 9M950 518l23 4M959 601l17 9M929 631l17 12M930 570l11 15M930 573l9 14M932 593l14 4M965 648l4 13M856 674l19 16M957 540l22 8M939 588l14 11M934 624l18 17M924 641l15 11M477 600l-14 4M859 685l12 18M470 588l-9 7M931 650l8 12M981 584l20 7M945 625l13 8M963 621l12 6M917 646l11 8M884 671l11 18M947 546l16 2M931 561l10 5M943 592l10 17M980 568l18 3M470 589l-9 5M947 523l12 2M878 672l9 12M934 565l10 6M944 606l15 6M902 661l5 10M959 577l12 3M919 659l15 7M925 638l16 18M932 596l14 6M918 609l10 5M966 661l21 14M922 606l20 4M932 593l18 14M925 644l20 14M960 634l10 7M940 457l17-4M953 529l21 3M959 589l13 10M937 584l17 15M938 508l13 1M962 571l21 8M952 568l20 12M928 568l21 2M941 536l21 11M955 532l11 3M920 656l9 7M959 542l11 5M917 640l20 13M949 626l9 8M959 601l21 8M913 654l16 12M941 578l14 13M969 654l20 9M939 652l8 13M958 630l13 12"/>
<path stroke="#90a0a0" stroke-width="1.6" d="M454 495l-16 0M460 471l-14-1M460 484l-22-5M423 592l-16 5M413 650l-16 11M413 651l-10 10M382 492l-17-9M370 505l-14 2M417 467l-21 6M460 499l-11-3M399 474l-15 0M443 524l-15 3M413 660l-15 19M435 575l-17 11M452 505l-13 1M428 603l-16 4"/>
<path stroke="#706040" stroke-width="1.6" d="M632 336l-2-10M653 299l3-14M630 342l-11-12M651 274l-5-17M568 313l-15-5M572 318l-13-8M566 281l-12-11M654 306l0-11M642 268l-5-17M560 298l-4-11M653 319l-3-16M658 300l-5-7M563 307l-12-15M637 333l-5-13M568 309l-6-8M571 277l-7-8M573 322l-7-9"/>
<path stroke="#d0a080" stroke-width="1.6" d="M580 336l-11-12M573 294l-2-9M622 269l-4-11M564 328l-11-11M558 281l-7-7M664 294l-2-16M569 280l-7-9M658 323l-3-15M627 266l-3-17M651 314l-2-9M675 327l1-8M667 269l-5-15M579 315l-6-17M662 315l-1-8M574 326l-11-16M680 286l1-9M564 334l-17-6M599 266l-10-14M625 329l-5-11M662 289l0-15M575 294l-7-8M683 318l-3-11M584 345l-6-10M674 275l-1-14M562 329l-10-3M679 298l3-13M624 267l-6-16M660 265l-3-8M647 337l-5-7M603 350l-9-10M646 334l1-15M685 294l0-16M608 336l-9-9M678 268l-3-15M643 330l-6-11M660 262l-5-12M636 260l-6-12M561 316l-9-14M603 338l-3-7M663 333l0-14M669 272l-2-13M659 316l-1-10M677 300l-4-14M561 336l-7-6M655 261l0-9M533 313l-14-10M546 293l-5-19M586 273l-7-9M659 293l-7-15M579 312l-10-12M607 338l-9-14M569 304l-7-15M637 276l-7-18M647 330l-6-14M664 267l-1-12M556 280l-6-12M672 298l-1-8"/>
<path stroke="#c0d0e0" stroke-width="1.6" d="M384 598l-14 8M380 584l-10 3M376 585l-23 4M399 566l-23 6M448 484l-21-3M392 526l-15 3M425 575l-16 6M414 644l-12 10M421 486l-19 1M415 570l-25 0M417 566l-22 7M424 481l-23 2M398 560l-18 15M413 487l-11 0M391 556l-17 9M396 585l-18 7M417 538l-16 14M406 511l-11 4M421 521l-21 4M421 538l-20 5M432 486l-13 0M444 490l-10 2M368 514l-16 11M397 602l-9 7M452 496l-16 2M404 567l-16 11M383 517l-11 6M381 521l-17 4M407 537l-16 3M425 517l-14 4M396 620l-22 11M400 550l-20 6M374 564l-18 8M393 580l-22 5M410 498l-17 1M410 572l-16 12M416 565l-9 5M389 599l-24 6M422 614l-11 9M379 549l-19 0M395 604l-13 17M435 501l-19 9M396 491l-12 4M420 563l-12 6M411 503l-12 5M449 495l-18-4M393 527l-11 2M412 638l-23 7M419 574l-11 7M421 481l-17 1M367 521l-23 3M433 537l-13 5M388 581l-16 9M397 609l-10 9M379 566l-15 7M426 480l-10-3M390 583l-11 6M408 513l-12 5M396 561l-20 8M384 593l-17 7M387 582l-14 12M384 585l-17 6M424 551l-15 7M419 534l-14 8M372 580l-24 5M430 478l-12 0M448 491l-16 7M435 518l-10 4M424 537l-18 9M412 494l-14-2M366 525l-11 0"/>
<path stroke="#101010" stroke-width="1.6" d="M523 647l-11 7M449 692l-11 13M469 657l-7 8M463 629l-20 12M502 661l-8 20M524 651l-5 9M523 683l-12 9M503 692l-7 14M470 679l-9 14M485 608l-13 4M485 642l-10 11M509 657l-9 11M459 684l-12 13M495 680l-12 21M509 662l-9 11M558 693l-8 22M490 636l-17 5M470 642l-22 7M466 614l-7 9M557 692l-9 12M513 692l-16 18M504 631l-17 10M462 621l-6 12M506 651l-13 8M484 624l-15 12M512 641l-13 19M483 641l-10 9M468 630l-14 9M518 665l-21 11M507 639l-6 12M501 639l-16 14M461 652l-10 7M485 637l-12 9M537 687l-6 16M467 631l-17 15M500 656l-13 17M498 644l-6 11M470 629l-19 10M505 661l-16 11M458 650l-18 17M511 645l-6 12M467 630l-17 10M479 638l-8 14M548 688l-9 10M472 672l-8 12M467 618l-16 7M482 641l-10 9M474 661l-18 17M510 658l-4 10M496 654l-9 5"/>
<path stroke="#603020" stroke-width="1.6" d="M946 563l11 8M963 568l15 6M911 627l8 10M948 473l20 3M918 462l15-2M933 471l15 5M921 475l15 3M974 554l13 3M921 624l7 8M930 611l12 19M937 507l21 5M860 655l5 10M977 625l17 12M941 548l13 5M926 566l20 2M920 559l10 8M971 615l17 5M976 622l14 9M959 590l21 7M930 549l15 10M940 580l16 10M921 608l19 13M815 683l8 16M915 627l14 19M945 586l15 5M965 579l17 16M928 558l14 0M932 498l17 3M932 587l11 3M942 606l5 18M922 534l11 4M930 585l18 15M966 525l19 4M923 501l19 5M927 546l18 5M936 595l12 13M979 601l22 5M938 612l11 5M969 542l19 3M813 677l11 16M957 509l15 9M961 586l17 9M934 471l19-4M950 604l18 14M967 520l11 5M946 511l12 5M964 571l25 2M923 535l22 6M930 612l16 9M964 482l13 0M935 479l20 8M975 611l10 6M917 580l19 7M934 476l18 4M924 562l20 13M934 515l14-2M944 535l18 1M954 602l10 9M954 484l18 8M555 674l-14 16M920 550l11 7M924 621l17 17M951 508l16-3M924 564l13 7M940 580l10 12M960 568l11 3M932 587l14 9M924 624l10 9M913 635l12 15M939 525l19 11M964 519l14 1M944 503l19 11M947 549l13 3M977 557l11 6M946 584l11 8M926 537l18 2M924 580l7 8M948 586l9 6M934 471l19-5"/>
<path stroke="#d0e0f0" stroke-width="1.6" d="M400 627l-11 2M411 618l-8 9M361 526l-12 3M401 481l-19 10M424 563l-20 13M436 474l-21 1M375 553l-20-1M370 545l-18 3M407 476l-22 10M399 626l-9 5M386 573l-16 7M415 485l-11-1M405 497l-16 5M386 505l-12 8M408 615l-13 8M419 494l-23 5M421 511l-14 5M408 554l-12 6M379 496l-14 5M425 619l-13 17M446 507l-19 0M375 516l-25 2M397 593l-15 10M373 554l-19 10M402 548l-18 15M404 536l-23 9M405 562l-22 2M399 506l-20-9M371 562l-17 6M370 533l-14 6M419 514l-14 2M402 546l-14 7M385 500l-22 3M436 555l-10 4M425 583l-17 10M396 561l-24 6M368 540l-18-2M404 604l-18 18M367 528l-12 1M378 517l-11 2M387 546l-20 4M410 589l-22 6M410 527l-13 5M448 482l-10 0M395 526l-10 2M401 477l-18 12M413 506l-11 0M400 579l-21 7M426 571l-11 7M412 622l-8 6M410 523l-13 2M410 596l-17 12M397 606l-10 6M392 532l-16 4M379 566l-13 1M422 477l-21-1M419 505l-16 0M388 548l-22 4M455 487l-20 9M408 591l-10 11M399 547l-13 11M415 506l-17 8M405 623l-15 11"/>
<path stroke="#503030" stroke-width="1.6" d="M857 652l15 12M913 426l20 1M837 691l13 11M839 694l10 15M900 424l16-4M909 412l11-10M824 692l12 18"/>
<path stroke="#a0b0b0" stroke-width="1.6" d="M404 647l-14 8M440 544l-11-2M454 517l-17 1M422 598l-13 8M422 602l-12 9M448 557l-22 8M439 561l-12 4M461 473l-20 8M465 481l-15 5M453 513l-12 9M382 486l-25 1M410 649l-14 10M426 604l-17 11M418 632l-22 9M443 465l-9 2M422 620l-12 8"/>
<path stroke="#706060" stroke-width="1.6" d="M562 356l-8-3M467 450l-11 3M886 649l14 12M782 689l7 20M874 650l9 9M448 448l-13-1M448 600l-16 18M867 642l13 16M851 299l14-12M852 299l11-10M457 560l-18 13M890 639l15 16M463 451l-22-1M464 454l-19 2M386 459l-19-6"/>
<path stroke="#806050" stroke-width="1.6" d="M460 437l-16-3M708 308l-4-17M534 320l-14-11M588 330l-4-7M538 368l-14-8M541 331l-11-9M553 292l-6-6M477 446l-20-4M505 331l-13-11M490 426l-13 0M548 342l-18-9M696 311l2-17M657 285l-1-12M542 310l-6-7M717 337l0-13M841 300l17-10M430 433l-22-1M864 333l19-6M566 319l-7-9M495 412l-17 1M740 320l11-10M707 327l0-15M623 331l-7-10M928 433l16 2M531 387l-7-5M907 411l8-7M487 400l-18-10M728 314l6-10M654 326l-3-15M510 301l-18-8M649 258l-9-16M691 315l-4-7M579 282l-6-15M473 338l-11-10M530 336l-11-8M668 291l-5-14M897 426l9 2M538 322l-12-2M519 349l-12-3M531 332l-15-6M641 287l-9-15M670 333l-4-11M904 432l18 0M524 307l-11-9M668 321l-2-8M728 289l7-14M525 352l-14-9M733 296l7-16M672 307l-3-11M498 313l-12-8M680 311l0-11M460 440l-19 1M639 313l-8-12M638 340l-2-7M537 309l-5-9M546 317l-13-12M670 265l1-18M705 307l-1-12M528 376l-15-8M710 294l-1-18M707 290l3-17M520 306l-15-11M618 265l-4-9M663 336l-2-7M509 330l-15-13M502 306l-8-7M545 322l-9-9M695 284l2-13M674 296l-3-9M602 349l-10-9M506 307l-18-6M500 312l-8-9M570 338l-10-5M699 258l1-11M679 321l0-9M706 318l1-11M559 309l-4-19M670 280l-2-12M737 320l1-11M691 317l5-14M508 384l-10 1M904 428l10 3M642 315l-4-10M666 272l-9-15M633 337l0-14M741 303l10-12M538 292l-12-18M745 295l5-14M563 340l-14-6M686 270l1-8M677 278l-6-12M551 310l-13-16M489 419l-19-2M537 334l-20-3M653 302l-3-8M742 295l0-17M628 336l-3-8M902 432l11 0M655 293l-3-9M570 321l-9-10M564 347l-7-7M524 388l-14-4M606 347l-10-14M734 290l0-12M645 276l-2-11M861 332l11-8M407 441l-20 2M641 291l-7-13M659 290l-4-19M589 332l-13-11M542 299l-6-10M750 283l7-13M695 272l-3-10M848 305l15-15M581 280l-11-10M554 296l-12-17M474 444l-15-5M663 326l-3-12M525 330l-11-5M748 336l4-11M906 430l15-3M408 444l-12-2M580 274l-9-8"/>
<path stroke="#a08060" stroke-width="1.6" d="M505 395l-9-2M721 335l1-9M506 325l-11-17M464 349l-17-4M768 281l3-9M770 284l5-15M736 288l8-13M475 360l-11-4M484 338l-9-10M503 367l-14 3M727 269l5-19M716 331l0-9M496 351l-16-2M735 276l3-8M774 307l3-8M764 309l6-14M763 326l6-11M751 329l1-11M503 390l-7-7M758 334l4-7M904 403l12-2M742 328l5-9M777 289l6-10M725 289l9-11M730 279l3-19M491 361l-13-11M731 268l-1-18M760 265l6-19M504 313l-11-8M770 266l11-16M770 330l4-8M729 291l3-13M506 371l-9-5M726 305l6-13M511 337l-7-6M463 434l-17-4M505 353l-16-7M876 407l13-2M454 337l-14-6M733 277l3-10M758 314l8-16M720 309l8-15M490 367l-12-5M754 270l3-10M724 280l5-16M763 332l4-8M730 280l-1-19M762 326l4-8M747 282l7-13M477 348l-19-7M480 345l-12-5M483 317l-10-8M744 327l7-9M508 381l-13-8M501 315l-16-9M905 396l19-7M897 394l14-3M760 314l5-8M495 410l-20-6M740 305l6-12M747 327l6-13M877 402l12-2M501 357l-16-2M481 340l-9-14M738 334l4-8M505 344l-9-5M760 297l-1-18M468 327l-15-1M733 334l4-8M461 336l-15-5M720 276l2-16M476 350l-19-5M743 267l3-14M471 344l-13-9M494 328l-16-8M497 389l-9-5M516 389l-16-5M720 322l2-7M759 330l8-14"/>
<path stroke="#908080" stroke-width="1.6" d="M431 449l-11 1M456 570l-9 7M366 482l-11 1M899 623l12 12"/>
<path stroke="#a08070" stroke-width="1.6" d="M470 446l-17-5M431 437l-13-2M452 438l-9 0M463 442l-21 2M370 465l-24-1M904 397l17-5M394 448l-13-4M918 410l11-1"/>
<path stroke="#201000" stroke-width="1.6" d="M953 664l8 22M913 667l9 12M930 667l13 10M917 671l6 9M943 669l15 19M896 673l9 16M920 658l12 9M874 684l11 17M954 661l15 3M947 655l8 7M923 654l10 21M907 658l17 14M878 679l10 21M921 657l18 16M935 651l18 17M472 691l-18 16M544 683l-12 18M909 669l3 14M931 665l7 14"/>
<path stroke="#806040" stroke-width="1.6" d="M593 331l-8-6M635 320l-3-7M609 317l-3-8M616 316l-5-8M586 293l-8-18M641 315l-3-7M598 294l-6-7M645 318l-6-16M603 345l-6-16M615 274l-12-16M915 418l11-2M592 333l-12-14M620 306l-5-7M622 306l-7-12M597 319l0-11M607 268l-6-10M585 301l-10-12M605 325l-10-9M638 318l-7-10M595 271l-8-7M580 310l-18-8M599 268l-11-15M591 277l-5-8M606 293l-5-13M918 423l18 3M648 291l-1-11"/>
<path stroke="#b0c0c0" stroke-width="1.6" d="M433 577l-11 5M422 459l-16 2M415 622l-15 13M408 637l-10 23M417 655l-15 17M412 640l-17 17M446 555l-17 12M404 466l-16-2M362 502l-21 11M445 569l-12 3M393 472l-19 8M415 639l-9 16M410 469l-21-3M420 616l-15 12M429 610l-22 13M410 620l-16 7M424 607l-15 9M435 568l-18 5"/>
<path stroke="#a0a0a0" stroke-width="1.6" d="M886 639l12 16M453 533l-10 2M381 479l-11-2M398 466l-24 3M457 457l-17 11M453 455l-10 1M377 477l-22 2M444 457l-20 0M421 473l-19 7M457 531l-23 2M448 457l-15 1M393 467l-15 1"/>
<path stroke="#c0a090" stroke-width="1.6" d="M558 355l-12-11M871 339l16-10M544 363l-17-7M416 443l-23 0M473 449l-15 4M437 439l-10-2M537 381l-13-8M414 442l-13-4"/>
<path stroke="#807070" stroke-width="1.6" d="M471 457l-18 1M898 626l10 8M466 454l-17 1M898 623l14 9"/>
<path stroke="#504030" stroke-width="1.6" d="M894 413l14-1M565 687l-9 19M906 410l8-10M895 401l17-6M463 557l-10 9M933 435l15-4M907 433l19-5M914 429l21-2M877 410l9 0M891 407l19-2M880 404l12-2M446 656l-11 11M919 422l13-1M934 433l13-3M883 417l11-7M887 397l9-1M895 414l14-6M906 438l19 5M564 684l-5 11"/>
<path stroke="#c0b0a0" stroke-width="1.6" d="M438 444l-22 4M456 556l-15 7M555 362l-10-6M448 444l-22-2M469 455l-15-4"/>
<path stroke="#708080" stroke-width="1.6" d="M426 622l-9 9M426 618l-8 6"/>
<path stroke="#c0d0d0" stroke-width="1.6" d="M457 473l-19 5M422 598l-13 5M447 560l-11 2M420 599l-8 19M432 463l-13 4M362 515l-23 3M460 475l-12 2M422 597l-23-3M418 622l-12 15M408 473l-17 3M459 474l-20-5M462 485l-16-1M436 555l-19 14"/>
<path stroke="#806060" stroke-width="1.6" d="M571 678l-2 10M374 463l-22 10M904 610l19 9M420 442l-16-2"/>
<path stroke="#c08070" stroke-width="1.6" d="M865 396l10-4M382 440l-10-6M866 390l14-5"/>
<path stroke="#d0e0e0" stroke-width="1.6" d="M445 547l-21 3M392 481l-18-3M362 503l-16 7M408 646l-20 15M412 608l-17 12M457 495l-12 8M424 600l-9 9M432 588l-14 9M425 603l-14 11M401 647l-17 10M452 529l-15 0M455 513l-11 0"/>
<path stroke="#c09080" stroke-width="1.6" d="M541 355l-14-14M507 347l-15-3M541 353l-17-9M887 369l12-5M712 319l3-9M907 398l19-2M508 356l-12-12M438 431l-22-3M716 326l2-8M876 360l9-6M711 308l5-17M720 328l2-15M499 313l-10-5M516 357l-13-11M731 339l1-7M708 296l4-15M716 325l7-13M697 261l4-15M710 294l5-12M712 266l2-8M701 256l2-9M708 321l2-15M707 277l6-9M397 445l-10-5M521 342l-13-6M529 347l-10-9"/>
<path stroke="#402020" stroke-width="1.6" d="M537 664l-12 14M847 661l9 20M474 594l-12 7M973 504l21-1M841 672l11 10M459 604l-16 14M852 673l12 12M877 671l12 12M869 653l8 10M447 671l-10 12M850 688l6 10M914 440l15-1M971 631l11 7M871 677l13 19M846 665l8 11M977 648l17 9M862 670l14 14M866 663l8 10M969 593l10-1M904 650l10 12M885 662l14 9M832 691l5 16M873 672l6 16M916 439l11-3M852 670l12 15M870 690l14 11M462 601l-14 17M841 687l11 13M459 603l-16 13M861 664l11 8M857 650l6 8M827 688l6 22M909 649l13 14M856 649l13 7M964 666l18 7M854 654l8 10M960 533l15 6M825 682l3 20M977 646l17 15M902 653l12 20M466 615l-6 19M826 685l4 10M843 672l6 8M873 666l7 9M822 691l7 9M913 632l18 15M985 546l19 7M909 606l9 5M918 447l20-7M849 669l14 20M966 600l13 7M908 651l14 19M861 673l9 21M971 553l11 9M950 504l11 2M937 690l8 11M970 492l19 8M964 631l9 6M856 648l7 13M454 621l-13 9M892 664l17 18M968 580l17 5"/>
<path stroke="#704030" stroke-width="1.6" d="M927 447l10 5M922 439l17-3M939 466l15 5M915 473l15 6M920 468l16 3M919 541l17 8M912 604l14 6M921 486l20 3M907 634l12 18M942 462l9 5M950 466l16 1"/>
<path stroke="#a07050" stroke-width="1.6" d="M901 419l21 2"/>
<path stroke="#604030" stroke-width="1.6" d="M920 436l12 5M908 415l20 2M947 454l9 2M889 420l8-6M875 398l10-1M876 376l16-10M373 448l-17-1M896 654l8 8M948 454l12 0M876 384l19-6M920 441l9-5M911 613l16 9M876 376l19-2M805 685l8 10M895 429l17 0M910 605l17 10M962 478l13 2"/>
<path stroke="#805030" stroke-width="1.6" d="M914 473l13 13M920 446l21 1M944 455l20 2M919 447l12 3M915 464l11-1"/>
<path stroke="#202010" stroke-width="1.6" d="M520 664l-9 14M504 673l-8 8M983 570l9 12M930 692l10 7M490 674l-19 11M457 673l-8 17M443 678l-10 12M979 635l13 5M496 675l-10 12M437 681l-17 11M467 676l-14 10M464 677l-9 11M985 604l21 13M528 658l-13 16M441 672l-15 18M851 692l15 10"/>
<path stroke="#604020" stroke-width="1.6" d="M961 520l17 5M928 480l22 4M924 495l16 2M926 494l20-2M958 478l16 3M978 523l17 4M935 456l14 4M911 467l11 0M962 487l14-3M954 474l18 4M958 510l22-3M954 498l18 13M556 676l-13 16"/>
<path stroke="#b0c0d0" stroke-width="1.6" d="M427 616l-14 7M402 633l-16 14M428 605l-9 5M420 630l-18 10M411 644l-10 12"/>
<path stroke="#101000" stroke-width="1.6" d="M916 681l9 11M949 669l16 10M911 685l7 16M932 678l8 9M938 686l13 6M901 678l21 12M929 683l15 10M466 688l-6 17M945 686l14 7M544 679l-7 14M890 675l16 16M452 693l-11 16M926 675l17 17M906 683l9 9M522 691l-12 10M464 690l-14 20M460 693l-15 12M455 688l-12 10M461 692l-10 6M928 675l11 14M544 690l-5 10M450 694l-10 15M458 690l-13 10M447 692l-16 15M465 689l-15 6M931 684l10 11M451 685l-20 15M498 692l-9 14"/>
<path stroke="#301020" stroke-width="1.6" d="M467 646l-7 9M469 666l-12 11M459 618l-12 14M487 649l-8 7M521 658l-11 8M480 613l-10 5M500 633l-12 4M472 619l-12 17M481 630l-7 9M468 657l-8 10M472 640l-10 13M451 672l-10 8M462 653l-8 20M476 619l-9 9M484 660l-13 14M490 618l-16 8M466 646l-14 15M843 664l8 21M518 658l-13 17M487 612l-17 9M506 649l-7 11M464 679l-11 8M469 632l-7 11M847 657l5 14M499 652l-19 14M860 690l9 15M486 637l-10 9M506 667l-14 10M514 659l-10 13M465 663l-20 15M509 666l-9 16M451 640l-15 7"/>
<path stroke="#502010" stroke-width="1.6" d="M946 610l15 9M947 626l10 7M942 495l13 1M951 587l12 7M930 609l9 16M943 537l18 11M942 535l12 5M942 579l17 5M945 616l22 9M939 606l12 7M949 561l20 10M945 589l19 8M951 605l12 14M931 619l18 6M951 600l18 10M932 634l11 6"/>
<path stroke="#a0a0b0" stroke-width="1.6" d="M378 505l-17 2M391 572l-19 12M406 567l-16 11M418 618l-14 9M373 562l-12 5M420 561l-15 4M431 477l-12 2M410 556l-20 3M431 649l-14 9M398 635l-14 11M377 542l-21-6M411 494l-17-12M439 510l-15-2M414 510l-10 4M382 562l-14 10M398 631l-16 8M365 533l-14 7M446 480l-10 3M419 559l-21 12M436 484l-21 2M410 568l-22 7M414 641l-14 9M423 513l-17 8M400 599l-16 8M382 524l-24 5M432 461l-15 4M442 520l-12 5M416 496l-15 2M417 549l-23 6M396 576l-15 5M401 523l-18 8M415 508l-20 3M441 482l-13 1M425 654l-15 19M417 575l-14 10M396 595l-17 4M415 553l-22 11M442 525l-18 6M405 522l-11 2M411 493l-12 5M391 529l-16 1M403 648l-21 14M379 549l-11 4M393 521l-12 5M415 581l-15 3M363 532l-24 7M382 587l-20 13M384 539l-22 0M431 564l-12 1M429 556l-17 6M424 523l-18 8M438 536l-18 5M436 534l-18 5"/>
<path stroke="#808090" stroke-width="1.6" d="M431 640l-17 8"/>
<path stroke="#705050" stroke-width="1.6" d="M424 409l-23-6M419 424l-16-8M906 602l9 10M840 380l15 3M817 325l7-8M568 349l-5-16M450 605l-11 5M434 426l-19-6M408 420l-11 2M818 343l7-10M413 441l-15 4M872 356l12-5M419 379l-10-5M809 357l9-14M842 340l9-7M827 367l10-6M821 310l15-8M418 429l-16-6M825 333l8-16M386 445l-19-2M837 350l9-6M429 413l-18 1M425 386l-10-2M868 339l16-5M843 311l13-8M841 361l11-7M856 348l6-6M850 382l15-9M907 595l8 12M853 341l18-9M438 402l-18-6M826 312l12-13M473 410l-17-2M834 361l8-4M416 423l-13 0M413 384l-18-2M824 296l13-13M838 316l10-4M461 565l-16 10M413 392l-22-4M827 305l8-10M448 606l-13 9M811 353l8-1M539 354l-9-7M826 295l17-2"/>
<path stroke="#e0c0a0" stroke-width="1.6" d="M551 356l-15-11M842 287l18-9M895 375l16-8M858 314l10-10"/>
<path stroke="#403030" stroke-width="1.6" d="M906 599l12 18M906 600l14 2M452 611l-14 6M926 693l9 14M780 691l7 14M900 692l9 9M907 588l15 11M595 692l-3 15M575 683l-6 17M903 437l16 6M882 653l9 8M853 692l18 17M911 433l15 0M449 648l-17 15M923 425l18-3M930 436l20 0M907 614l19 9M452 610l-16 10M904 621l12 5M450 624l-18 13M949 457l20-2M906 610l8 9M794 687l7 13"/>
<path stroke="#c0b0c0" stroke-width="1.6" d="M879 627l12 4"/>
<path stroke="#605050" stroke-width="1.6" d="M394 452l-20-4M902 592l17 13M601 692l-3 15M473 451l-16-1M897 609l14 11M414 446l-19-6M900 602l10 11M904 588l14 17M902 604l12 4M456 559l-20 10M438 660l-11 9M909 588l17 8"/>
<path stroke="#d09070" stroke-width="1.6" d="M634 308l-5-10M628 298l1-9M609 305l-6-9M622 324l-8-14M637 288l-3-14M600 309l-7-9M632 299l-5-7M636 298l-7-17M605 275l-8-17M596 297l-6-7M606 304l-6-5M590 318l-15-6M625 312l-3-16M618 283l-7-9M602 312l-1-17M622 321l-2-11M608 274l-3-15M589 310l-11-12M615 317l-9-15M597 315l-4-8"/>
<path stroke="#704020" stroke-width="1.6" d="M811 683l1 14M919 457l17 8M920 544l11 6M964 494l18 3M923 503l10 1M965 496l10 7"/>
<path stroke="#807060" stroke-width="1.6" d="M903 592l10 12M936 434l14-2M400 455l-13 4M865 327l17-4M474 451l-21-3M536 370l-10-5M451 447l-14 3M558 357l-12-11M538 381l-8-6M907 391l13-6"/>
<path stroke="#907060" stroke-width="1.6" d="M565 347l-14-10M575 348l-8-7M880 416l15-7M901 396l15 0M904 407l11-1M934 434l17-1M891 389l17-6M553 350l-9-11M885 406l17-5M594 350l-5-8M889 393l13 2"/>
<path stroke="#c0a080" stroke-width="1.6" d="M734 339l2-12M554 349l-8-6"/>
<path stroke="#e0d0c0" stroke-width="1.6" d="M546 374l-12-10"/>
<path stroke="#b09070" stroke-width="1.6" d="M716 305l-4-10M512 319l-10-6M507 317l-20-4M513 319l-12-11M703 261l9-15M522 353l-11-6M508 307l-10-15M708 259l0-10M890 377l16-8M528 377l-14-6M541 357l-9-3M728 337l2-7M710 318l0-10"/>
<path stroke="#502020" stroke-width="1.6" d="M922 511l12 0M476 588l-9 7M824 678l4 11M934 642l4 13M967 525l19 14M823 685l6 10M817 674l13 14M822 679l4 16M932 642l13 8M819 682l5 9M934 489l16 0M825 681l14 18M825 675l4 19M957 634l13 10M475 589l-17 10M940 639l22 7M969 542l9 9M926 532l10 4M954 636l9 5M958 505l16 5"/>
<path stroke="#503010" stroke-width="1.6" d="M944 528l21 1M955 601l18 11M939 543l20 0M944 534l14 10M956 577l15 17M954 585l19 8M948 541l8 7M956 604l11 6M948 543l11 4M953 568l16 1M934 555l9 6M953 623l10 7"/>
<path stroke="#a07060" stroke-width="1.6" d="M809 280l8-18M850 356l16-6M794 299l9-9M442 369l-20-7M894 418l17-4M456 397l-14 2M868 384l15-4M376 448l-20 4M397 420l-13 4M410 387l-13-6M832 324l10-10M431 387l-21-11M877 407l12-2M789 334l8-15M848 385l14-10M890 423l12-3M793 323l16-10M412 396l-16 0M892 385l21-4M787 313l8-8M469 419l-11-2M813 357l10-10M872 373l16-5M824 328l10-10M779 324l4-7M827 313l14-13M450 399l-20-2M437 381l-8-6M886 403l20-5M371 456l-24 2M379 438l-20 1M480 431l-10 0M900 401l13 1M839 374l8-3M376 444l-15-8M827 300l14-16M855 369l15-4M816 363l14-8M437 379l-22-3M886 395l18-8M820 292l12-10M824 285l16-13M871 397l12-3M421 405l-19-7M862 367l15-11M878 366l10-3M795 348l3-9M864 387l15-10M887 383l18-5M437 379l-16-3M426 391l-18-5M427 398l-14 0M455 428l-15-2M854 388l8 2M398 431l-12-1M836 326l9-5M381 440l-13-7M907 403l12-4M424 371l-15 0M848 354l15-5M815 295l12-8M797 277l5-17M880 401l19-5M831 290l11-9M849 369l11-9M373 454l-10-2M793 350l6-15M804 346l11-9M825 308l9-9M482 441l-15 0M442 409l-14-1M438 378l-14-3M825 330l8-6M827 353l16-8M840 316l12-8M422 413l-19-13M839 380l11-3M864 400l14-4M793 339l15-11M808 312l7-6M448 412l-17-8M893 401l17-7"/>
<path stroke="#e0e0f0" stroke-width="1.6" d="M453 466l-19-4M445 465l-22-1M406 473l-10 0M436 565l-12 5"/>
<path stroke="#c0c0c0" stroke-width="1.6" d="M558 369l-8-6M396 467l-12 2M440 570l-21 9M446 572l-21-2M429 454l-13 4M449 570l-21 7M458 513l-9 6M388 471l-21 11"/>
<path stroke="#605030" stroke-width="1.6" d="M561 676l-5 20"/>
<path stroke="#505050" stroke-width="1.6" d="M440 658l-6 16M442 601l-15 9M436 611l-11 7M441 651l-16 15M889 647l10 12M425 659l-18 13M434 643l-19 17M871 634l10 7"/>
<path stroke="#808080" stroke-width="1.6" d="M405 457l-13 4M426 661l-12 17M423 648l-20 12M419 665l-4 9M425 451l-13 0M371 481l-17-6M386 468l-14-1M387 471l-17 4M424 633l-17 12M889 616l9 6"/>
<path stroke="#a0b0c0" stroke-width="1.6" d="M402 629l-15 13M406 617l-16 19M415 597l-13 10M451 507l-9 5"/>
<path stroke="#c0b0b0" stroke-width="1.6" d="M894 616l18 16M471 460l-14 5M364 487l-18-3M371 481l-25 3"/>
<path stroke="#401020" stroke-width="1.6" d="M866 677l9 7M532 671l-6 12M870 671l15 13"/>
<path stroke="#804030" stroke-width="1.6" d="M917 465l12 4"/>
<path stroke="#403020" stroke-width="1.6" d="M901 650l7 11M463 562l-8 8M429 678l-13 8M561 685l-4 16M567 693l-7 16M538 659l-14 17M450 661l-17 17M936 445l9-1M573 693l-5 17M571 691l-1 19M899 654l7 8M905 447l17 1M557 684l-10 19M939 692l11 6M942 446l11 4M560 686l-8 18M948 455l22-5M985 583l8 8M448 665l-13 8"/>
<path stroke="#d0d0d0" stroke-width="1.6" d="M416 463l-16 1M454 534l-19 8M446 576l-17 7M418 459l-11 5M446 576l-14 6M417 459l-21 1"/>
<path stroke="#704040" stroke-width="1.6" d="M916 561l12 6M909 602l15 10M908 449l19 4M908 454l13-2M905 637l11 12M912 583l10 5"/>
<path stroke="#906050" stroke-width="1.6" d="M626 275l-4-8M595 311l-11-9M623 282l-8-14M617 293l1-18M902 414l17-2M591 278l-4-8M607 307l-5-17M619 318l-10-7M600 287l-5-17M596 317l-7-8M611 329l-5-7M897 437l9-1M900 441l10-1M589 284l-7-6M605 278l-6-8M596 283l-2-16M627 301l1-10M614 303l-6-9"/>
<path stroke="#d0c0c0" stroke-width="1.6" d="M558 365l-19-2M457 457l-10-5M889 631l5 17M888 631l12 9M570 362l-10-5M562 365l-8-5"/>
<path stroke="#a09090" stroke-width="1.6" d="M455 571l-12 5M459 555l-9 5M415 454l-10 3M451 578l-13 5M898 610l11 13M885 645l6 9M556 364l-11-11M458 553l-13 5"/>
<path stroke="#504040" stroke-width="1.6" d="M455 574l-17 0M595 690l-6 15M452 595l-11 15M442 630l-11 3M874 651l19 14M462 556l-19 7"/>
<path stroke="#b09080" stroke-width="1.6" d="M403 444l-21 2M440 439l-10-2M382 458l-24 4M370 468l-18 6M392 451l-20 1"/>
<path stroke="#100010" stroke-width="1.6" d="M499 689l-7 10M499 684l-3 11M521 679l-14 19M486 688l-10 13"/>
<path stroke="#909090" stroke-width="1.6" d="M422 629l-11 6M455 454l-12 2M396 465l-12-3M413 464l-16 2M381 474l-19-4M426 662l-13 8M433 457l-14 4M437 451l-19 6M375 477l-21-4M376 477l-24-3M392 471l-22 13M449 544l-10 2M454 528l-9 6M890 615l10 4M441 569l-20 3"/>
<path stroke="#b08060" stroke-width="1.6" d="M676 327l0-16M669 329l1-9M702 329l1-11M510 315l-13-5M707 301l1-16M689 328l1-13M512 313l-12-10M714 316l1-11M698 330l-3-14M873 382l13-3"/>
<path stroke="#606060" stroke-width="1.6" d="M428 648l-10 10M874 636l11 10M429 665l-11 4M436 612l-19 9M440 608l-17 9M414 659l-7 10"/>
<path stroke="#605060" stroke-width="1.6" d="M446 605l-16 7M430 652l-17 14M871 637l13 19"/>
<path stroke="#302030" stroke-width="1.6" d="M444 613l-15 9"/>
<path stroke="#908070" stroke-width="1.6" d="M581 684l-8 16M902 602l12 15M394 458l-13 2"/>
<path stroke="#606050" stroke-width="1.6" d="M908 394l18-4"/>
<path stroke="#f0e0d0" stroke-width="1.6" d="M441 449l-16 2"/>
<path stroke="#606070" stroke-width="1.6" d="M431 627l-9 7M430 651l-13 11M436 615l-16 13M428 618l-11 11"/>
<path stroke="#706070" stroke-width="1.6" d="M428 657l-6 13M878 633l13 15M441 611l-19 13"/>
<path stroke="#707060" stroke-width="1.6" d="M403 457l-14-8"/>
<path stroke="#b0b0b0" stroke-width="1.6" d="M890 626l11 11M380 477l-21 3M375 484l-23 2M445 456l-22 0M443 456l-20 3M444 557l-10 4M406 461l-15 1M408 461l-11 5M453 554l-18 5M439 455l-22 5M406 462l-17-4M445 567l-9 4"/>
<path stroke="#805050" stroke-width="1.6" d="M920 430l12 0"/>
<path stroke="#201020" stroke-width="1.6" d="M447 646l-19 17M475 667l-11 11M511 644l-16 7M498 651l-14 17"/>
<path stroke="#809090" stroke-width="1.6" d="M432 597l-9 9M416 655l-11 8"/>
<path stroke="#402030" stroke-width="1.6" d="M454 657l-9 9"/>
<path stroke="#805040" stroke-width="1.6" d="M908 418l11-3M902 422l13-6M898 441l13-4M915 438l22-2"/>
<path stroke="#907050" stroke-width="1.6" d="M889 411l10-4M894 404l9-2M916 420l12-2"/>
<path stroke="#c0c0b0" stroke-width="1.6" d="M411 455l-21 9"/>
<path stroke="#403040" stroke-width="1.6" d="M436 657l-10 12M445 608l-10 10"/>
<path stroke="#e0b090" stroke-width="1.6" d="M588 348l-12-7"/>
<path stroke="#b0a0a0" stroke-width="1.6" d="M883 645l10 10"/>
<path stroke="#807080" stroke-width="1.6" d="M877 648l10 13M434 623l-12 5M877 638l12 11"/>
<path stroke="#a090a0" stroke-width="1.6" d="M444 589l-19 8M431 620l-21 8M429 655l-13 16"/>
<path stroke="#404030" stroke-width="1.6" d="M423 673l-23 8M903 600l20 7M448 614l-16 10"/>
<path stroke="#707080" stroke-width="1.6" d="M424 643l-14 9"/>
<path stroke="#f0e0e0" stroke-width="1.6" d="M440 450l-13 0"/>
<path stroke="#a09080" stroke-width="1.6" d="M566 357l-14-2"/>
<path stroke="#d0c0b0" stroke-width="1.6" d="M392 461l-12 1"/>
<path stroke="#d0a090" stroke-width="1.6" d="M851 307l11-6M576 350l-8-8M547 357l-13-5"/>
<path stroke="#9090a0" stroke-width="1.6" d="M413 639l-15 5M440 603l-10 4"/>
<path stroke="#d0c0d0" stroke-width="1.6" d="M878 637l12 18"/>
<path stroke="#e0d0d0" stroke-width="1.6" d="M412 454l-15 1M380 470l-19 8"/>
<path stroke="#705060" stroke-width="1.6" d="M438 659l-14 16"/>
<path stroke="#504020" stroke-width="1.6" d="M559 682l-12 15M982 537l9 6"/>
<path stroke="#e0c0b0" stroke-width="1.6" d="M464 450l-10-1"/>
<path stroke="#404040" stroke-width="1.6" d="M438 634l-15 5M426 665l-9 10M435 650l-24 6"/>
<path stroke="#303020" stroke-width="1.6" d="M441 640l-19 11M433 673l-22 11"/>
<path stroke="#303030" stroke-width="1.6" d="M437 642l-10 6"/>
<path stroke="#603040" stroke-width="1.6" d="M877 663l14 12"/>
<path stroke="#804020" stroke-width="1.6" d="M918 469l15 8"/>
<path stroke="#d0b090" stroke-width="1.6" d="M883 360l19-7M864 329l12-12"/>
<path stroke="#808070" stroke-width="1.6" d="M439 450l-17 1"/>
<path stroke="#e0b0a0" stroke-width="1.6" d="M548 357l-6-5"/>
<path stroke="#505060" stroke-width="1.6" d="M434 634l-14 12"/>
<path stroke="#c0a0a0" stroke-width="1.6" d="M421 448l-10 5"/>
<path stroke="#c0b090" stroke-width="1.6" d="M885 356l16-14"/>
<path stroke="#f0e0c0" stroke-width="1.6" d="M579 358l-10-6"/>
<path stroke="#b08080" stroke-width="1.6" d="M420 441l-21-1"/>
<path stroke="#b0a090" stroke-width="1.6" d="M547 375l-8-4"/>
<path stroke="#b09090" stroke-width="1.6" d="M365 474l-16 0"/>
<path stroke="#908090" stroke-width="1.6" d="M874 641l11 15"/>
</g>
<g filter="url(#b2)" fill="none" stroke-linecap="round" opacity=".8">
<path stroke="#b08070" stroke-width="2.2" d="M608 254l-1-9M370 360l-12 1M305 466l-20-5M537 201l-5-10M534 258l-11-9M327 245l-18-6M329 355l-13-1M657 232l1-9M623 219l-5-18M711 222l4-11M773 213l5-14M575 255l-4-11M714 236l-1-13M402 290l-17-13M714 203l-1-13M347 225l-19-14M553 256l-6-11M369 382l-20 0M817 259l10-10M302 277l-16-10M616 205l-5-11M454 234l-11-8M564 180l-6-14M441 295l-22-8M407 269l-19-14M319 465l-16-3M761 201l5-22M498 251l-11-11M741 240l0-10M601 218l-6-8M719 223l2-20M422 289l-20-15M603 183l-1-10M403 351l-20-12M532 191l-7-16M370 429l-11 0M475 224l-9-8M570 179l-2-14M328 260l-16-11M486 187l-14-14M364 249l-15-18M829 272l10-18M588 190l-11-11M290 475l-20 0M806 251l3-19M458 206l-11-10M513 221l-9-15M482 193l-9-14M635 180l-2-20M453 204l-13-15M566 211l-2-11M346 294l-14-10M597 219l-10-18M679 181l-1-16M683 251l1-19M473 205l-11-11M387 378l-21 2M465 259l-15-15M582 223l-14-16M558 216l-5-10M780 239l7-14M423 286l-22-8M320 302l-17-5M414 220l-19-16M320 316l-13-4M327 357l-19-10M544 185l-15-9M733 200l5-10M497 245l-8-9M748 234l7-7M607 192l-6-10M351 359l-19-3M666 205l-1-12M393 251l-13-11M721 237l2-19M521 232l-8-7M467 222l-19-10M513 201l-11-9M414 241l-16-13M419 362l-17-2M456 185l-6-13M415 247l-18-12M380 330l-18-7M469 227l-13-10M446 299l-13-12M459 235l-10-12M725 236l2-12M554 233l-10-18M391 290l-17-8M319 283l-19-11M735 223l5-14M382 358l-20-1M330 443l-12 1M755 194l1-23M572 186l-10-19M422 310l-12-5M316 422l-17-3M417 362l-12-3M594 180l-4-16M672 189l6-17M473 242l-9-9M415 321l-14 0M362 244l-18-17M327 341l-18 2M303 293l-11-4M646 192l-4-12M565 251l-2-9M352 297l-23-3M546 199l-6-15M478 299l-3-11M291 273l-15-5M671 226l-2-9M798 244l5-13M534 199l-3-10M402 272l-21-6M262 446l-17-9M385 231l-13-7M504 184l-8-12M633 260l-6-14M398 352l-18-5M647 186l-2-12M419 274l-17-14M520 284l-7-6M415 365l-22 7M360 381l-16-4M424 199l-15-13M690 206l0-21M565 218l-9-19M359 317l-13-4M359 408l-20 2M600 232l-3-20M782 225l5-14M419 297l-14-12M343 431l-10-4M385 215l-18-6M379 405l-20-3M423 314l-21-12M408 248l-18-10M759 241l9-17M437 320l-8-8M400 348l-19-5M448 258l-12-17M369 329l-13-8M316 323l-12 0M542 218l-10-13M644 222l0-18M349 232l-10-4M381 389l-17-2M349 407l-10-3M702 181l12-18M305 423l-15-2M480 234l-6-9M703 242l-4-19M529 260l-8-13M656 188l-4-13M429 318l-12-6M640 243l-3-10M457 268l-8-8M461 212l-11-15M506 226l-5-10M714 188l4-16M351 233l-24-7M347 293l-8-7M458 322l-10-6M344 239l-8-7M336 437l-15 1M297 342l-23 7M829 279l9-6M788 260l12-17M636 215l-6-15M439 332l-16-3M753 259l13-7M454 210l-14-12M347 442l-19 0M437 248l-7-8M312 451l-17 0M364 337l-10-3M606 256l-5-18M461 232l-18-16M403 261l-8-9M398 261l-9-6M438 236l-9-6M643 233l-4-12M474 305l-10-10M340 382l-11-1M312 452l-22-5M415 329l-12-8M359 372l-17-3M320 459l-13 0M442 194l-14-17M563 269l-11-12M472 189l-8-16M361 230l-7-9M543 238l-11-17M562 259l-5-11M639 184l-1-17M363 319l-13-9M483 292l-19-6M362 362l-21-10M408 308l-13-14M286 472l-14 3M324 328l-10-10M682 191l-1-20M307 318l-14-9M595 186l-2-24M792 247l5-16M369 262l-15-12M676 189l1-13M405 230l-8-8M655 224l-6-16M584 261l-3-16M343 349l-25-2M420 269l-13-15M357 351l-22-9M442 257l-9-7M340 232l-15-11M458 305l-12-6M756 234l-2-15M417 330l-18-18M348 476l-20 6M540 219l-9-17M567 197l-10-11M650 217l-6-19M500 207l-7-8M502 275l-10-16M325 305l-15-4M642 176l-1-13M538 188l-4-16M394 339l-17-8M342 434l-14 3M414 327l-13-7M510 260l-9-9M550 182l-4-14M378 236l-12-4M350 345l-22-5M439 271l-10-2M748 257l3-12M461 311l-14-3M315 439l-12 1M552 186l-16-16M317 322l-19-9M792 252l3-13M378 300l-10-4M538 256l-7-9M319 303l-12-1M551 264l-7-11M326 347l-14-6M458 208l-12-5M575 194l-10-16M687 178l4-14M413 366l-12 1M540 178l-6-22M805 255l7-19M440 300l-12-7M412 318l-13-3M297 334l-8-10M578 172l-6-17M475 262l-13-7M581 195l-2-13M338 310l-11-6M446 261l-13-5M427 209l-20-14M364 349l-16-5M502 251l-10-10M352 392l-20-2M601 243l-5-15M344 321l-23 0M338 248l-13-18M392 340l-24-3M320 263l-17-10M448 203l-8-17M299 459l-12 2M445 205l-9-8M618 227l-2-13M451 246l-21-13M568 187l-13-18M321 361l-14-4M540 219l-5-11M751 209l4-10M651 257l-2-18M373 414l-12-4M625 194l-4-16M365 307l-13-5M414 212l-10-8M329 322l-19-9M748 203l4-10M408 286l-16-6M477 187l-10-11M730 204l1-12M515 201l-8-9M395 394l-13-4M457 198l-11-8M263 468l-21 0M374 231l-7-15M373 290l-8-9M314 442l-14 1M424 329l-12-2M621 220l-5-17M286 338l-16-9M533 201l-9-11M348 381l-16-1M454 248l-9-12M514 198l-8-13M344 294l-21-10M384 317l-15-1M416 281l-17-9M575 185l-7-16M367 267l-10-13M294 419l-11 0M460 276l-10-8M483 225l-8-23M617 241l0-21M612 172l-10-17M529 272l-16-14M325 407l-15-1M406 235l-8-8M442 209l-12-14M405 237l-20-15M740 250l-1-16M365 288l-10-6M549 197l-14-20M746 241l4-9M352 238l-20-11M370 338l-23-6M365 460l-16-2M465 310l-9-9M406 207l-9-11M333 351l-12-5M591 188l-2-18M556 197l-5-10M492 181l-12-4M761 199l6-10M678 208l3-19M542 173l-8-7M335 437l-14 0M455 213l-9-9M613 193l-2-15M341 356l-14-6M653 195l-6-10M445 240l-13-15M432 251l-22-9M426 293l-20-9M495 275l-15-16M463 254l-17-13M697 224l1-21M457 256l-16-10M332 298l-19-2M382 318l-11-3M746 194l8-16M368 253l-17-7M358 354l-22 4M620 180l-1-10M422 250l-11-12M649 254l-1-18M499 194l-14-18M367 414l-13 1M755 216l5-10M760 217l5-15M411 312l-14-8M287 423l-20-1M330 314l-20-9M398 347l-21-10M371 346l-13-3"/>
<path stroke="#a07060" stroke-width="2.2" d="M341 344l-15-1M386 243l-12-13M390 219l-17-13M442 255l-9-5M345 363l-17-6M380 302l-16-18M341 373l-20-9M274 358l-16-6M321 459l-18 1M344 349l-17-1M689 178l0-12M428 256l-13-7M311 289l-23-8M377 277l-16-12M284 401l-18 1M427 211l-10-6M311 423l-12-1M331 317l-20 0M273 420l-11 1M381 357l-14-4M288 329l-14-8M686 178l-4-15M290 357l-13-5M790 267l14-10M363 317l-21-10M437 280l-10-14M328 313l-21-10M345 371l-21 0M374 298l-19-6M352 286l-20-9M412 309l-18-7M344 347l-11-5M311 260l-10-13M297 381l-21 1M427 254l-10-15M327 339l-19-2M365 450l-12-5M342 293l-11-3M345 266l-21-4M300 296l-13-3M442 196l-10-9M353 438l-14-1M401 378l-14-7M415 281l-14-8M433 324l-11-8M325 434l-12-5M392 319l-11-7M369 438l-24 1M400 379l-13-7M403 297l-18-10M416 232l-3-10M279 374l-10-1M316 356l-14-3M283 368l-11-6M766 221l13-15M399 253l-23-10M334 347l-20-1M413 349l-20-7M664 178l3-11M384 248l-8-8M370 256l-19-11M384 348l-21-13M338 264l-10-5M332 319l-24-5M428 317l-15-10M331 279l-16-7M652 174l8-13M362 253l-13-9M372 224l-16-12M743 201l3-21M323 356l-23-6M521 181l-8-17M321 345l-13-2M294 371l-15-7M562 178l-6-13M367 229l-18-17M409 349l-13-4M417 235l-9-16M308 275l-11-1M319 274l-19-11M331 266l-22-9M395 249l-7-8M423 339l-13-6M418 321l-16-6M294 477l-16 1M770 236l6-15M300 282l-18-16M384 279l-19-13M411 221l-10-11M328 475l-23 4M333 329l-13-6M419 337l-21-12M364 377l-12 0M283 353l-19-4M398 248l-10-6M399 345l-11-5M340 393l-12-7M563 167l-8-15M252 399l-17-4M425 308l-14-10M332 341l-13-1M273 368l-24-4M292 329l-9-4M359 321l-20-13M322 335l-20-7M365 432l-15-2M403 235l-12-9M779 229l5-9M365 381l-18-6M308 481l-20 2M354 266l-23-8M420 231l-8-11M323 383l-23-6M290 403l-11-7M352 311l-16-6M278 409l-12-1M472 183l-9-17M386 269l-13-7M776 218l2-14M368 409l-14-10M406 207l-15-15M426 290l-19-16M432 305l-11-8M318 270l-14 0M385 345l-12-2M422 283l-14-6M808 264l10-12M448 203l-16-17M305 404l-16 0M669 181l-4-19M375 218l-19-16M422 266l-17-8M309 324l-17-3M414 321l-20-6M313 403l-11-1M341 461l-19 5M429 273l-11-7M261 434l-14 3M778 233l1-22M798 260l13-11M411 360l-16-6M414 317l-14-17M317 477l-18-5M769 198l4-20M326 480l-24 3M328 502l-20-4M436 274l-9-7M327 379l-15-7M371 225l-23-8M384 213l-14-14M359 356l-11 0M330 483l-19-1M293 370l-12-5M325 436l-10 0M399 238l-12-10M277 422l-14-5M364 248l-17-12M384 386l-17-3M347 329l-16-15M327 356l-11-11M671 181l-11-17M300 476l-21 0M321 448l-18-8M362 358l-18-10M352 462l-19 4M409 247l-15-16M346 448l-16-2M421 329l-17-12M381 387l-21-5M375 416l-24-4M327 442l-15 4M314 407l-25-2M270 374l-22-5M770 222l2-15M374 282l-13-6M337 495l-15 5M331 397l-17 2M452 221l-19-9M304 373l-17-7M390 342l-19-10M430 224l-10-14M300 380l-19-4M313 421l-17 0M423 278l-19-9M718 190l3-21M350 357l-11-2M318 297l-19-9M273 380l-12-10M608 180l-14-17M422 351l-20 1M423 230l-19-16M314 479l-23-3M494 179l-17-14M317 385l-20 0M548 183l-14-12M281 409l-18 4M437 197l-19-14M392 324l-17-10M776 246l3-9M381 216l-10-9M346 377l-19-8M491 188l-8-18M252 443l-14 4M329 312l-13-2M364 313l-12-4M433 338l-23-6M318 480l-25 5M391 401l-11-1M330 281l-11-3M338 265l-10-4M428 314l-12-9M286 407l-14 0M373 207l-14-9M708 185l-4-19M337 490l-21 6M463 201l-14-17M351 470l-16 1M316 302l-14-11M282 431l-21 2M666 176l-1-12M319 386l-16 2M446 204l-8-9M392 218l-17-17M564 168l-4-21M370 424l-22 2M354 318l-20-11M284 351l-12-5M441 185l-9-13M346 302l-20-5M396 374l-19-6M338 337l-23-8M333 331l-21-2M696 178l-3-16M287 337l-11-4M332 273l-11-5M427 245l-18-8M371 451l-23-6M367 345l-17-8M310 380l-13-1M430 237l-12-7M817 269l3-19M313 333l-17-5M306 336l-11-11M321 473l-14-4M395 250l-12-1M293 413l-19-3M676 180l0-19M320 477l-11-1M373 313l-12-3M730 195l1-11M368 284l-11-5M259 437l-11-1M406 216l-18-12M373 256l-17-14M349 266l-9-6M383 254l-19-15M272 380l-25 0M329 362l-15-7"/>
<path stroke="#c0d0e0" stroke-width="2.2" d="M388 648l-5 10M352 591l-17 13M360 524l-20 6M390 636l-18 13M353 601l-21 7M344 567l-13 3M359 571l-23-4M365 566l-24 2M351 601l-18 11M355 544l-22 10M356 552l-16 9M358 554l-21 7M347 598l-18 6M364 612l-21 8"/>
<path stroke="#604030" stroke-width="2.2" d="M323 268l-18-10M254 417l-17-4M340 238l-23-7M240 498l-17 3M330 358l-20-6M304 587l-18 3M270 372l-20-11M325 323l-15-3M322 294l-17-9M348 394l-13-1M346 420l-18-4M263 421l-20 4M317 392l-17-4M271 441l-21-3M349 417l-16-2M295 537l-11 3M255 469l-23 4M335 250l-19-12M228 464l-14 2M280 395l-21-6M326 258l-14-11M328 472l-17 5M272 384l-20 10M329 441l-24-2M275 397l-12-5M331 337l-16-3M259 484l-13 8M329 371l-11-3M283 380l-11-4M321 267l-13-6M333 265l-16-7M301 390l-18 6M282 364l-18 1M267 504l-20 3M256 411l-16-6M275 360l-10-4M326 475l-22 8M315 485l-16 3M343 418l-21-10M324 273l-19-8M184 502l-18-2M289 378l-15-12M336 425l-19-3M358 427l-21-6M332 247l-15-9M268 422l-22 6M334 316l-20-5M329 306l-19-13M426 200l-13-12M241 490l-20 3M291 396l-24-2M319 496l-18 2M271 404l-16 0M227 456l-13 0M307 604l-16 18M334 380l-14-3M237 419l-14 5M234 490l-11-1M276 418l-19-3M324 488l-22 2M271 378l-15 2M345 418l-20-2M245 414l-14-4M225 465l-14-2M301 489l-10 2M321 310l-16-11M243 494l-21 2M327 442l-12 5M269 408l-21-4M362 432l-24 3M225 452l-24-5M337 255l-16-15M300 374l-13 0M269 411l-15-15M312 465l-20 5M232 488l-13-2M221 457l-22-4"/>
<path stroke="#604040" stroke-width="2.2" d="M775 264l0-11M465 197l-11-10M407 254l-16-13M474 253l-11-16M354 385l-24-3M414 368l-15-8M440 305l-16-13M469 277l-16-12M412 233l-14-14M375 269l-17-4M761 193l9-20M539 179l-16-15M388 341l-16-9M367 421l-15-3M449 312l-13-4M413 328l-17-10M407 357l-21-1M697 225l1-20M333 401l-16-2M391 336l-24-2M305 430l-20 12M459 310l-13-12M679 170l-2-20M530 178l-4-10M308 343l-24-4M361 452l-12-4M372 281l-14-3M488 225l-11-4M711 234l4-18M521 169l-13-13M522 232l-14-19M403 372l-11-4M319 406l-12-1M405 191l-12-7M386 198l-10-16M421 309l-16-4M322 437l-13 5M537 222l-7-8M741 222l2-15M316 554l-23 6M363 361l-20-13M399 353l-7-10M455 326l-13-7M469 256l-9-8M827 275l8-13M282 422l-11 0M700 192l6-20M575 163l-5-18M633 163l-2-15M409 248l-18-9M280 388l-20-9M384 420l-11-3M775 192l4-13M713 224l3-13M414 303l-20-14M337 330l-19-4M423 329l-17-12M587 187l-7-16M442 297l-15-9M348 349l-13 0M315 448l-17 4M425 299l-17-9M328 233l-12-2M709 173l0-17M334 393l-25 1M436 318l-17-10M674 200l-1-15M380 307l-16-17M317 276l-18-2M785 224l13-18M745 198l-2-20M357 221l-17-13M811 253l6-13M308 453l-25 2M353 272l-10-6M591 180l-8-20M648 164l0-12M424 347l-21-2M745 181l1-21M676 193l-5-13M489 216l-18-12M407 244l-12-6M385 386l-13-4M519 231l-9-12M491 277l-16-7M372 431l-19-2M355 373l-14-5M402 378l-22-4M459 236l-10-9M607 165l-3-17M540 181l-9-23M756 230l6-10M729 233l7-15M470 208l-11-7M756 231l1-21M404 382l-21 3M396 194l-19-6M774 212l1-20M478 252l-11-7M329 400l-12 0M456 277l-9-10M471 320l-9-10M741 198l5-18M724 255l4-18M572 181l-9-9M315 429l-11-6M361 341l-12-7M639 195l0-18M356 352l-16-13M500 296l-13-11M395 349l-11-6M445 224l-12-10M722 209l3-9M317 335l-18-3M326 413l-16 2M677 201l-3-21M418 344l-10-4M363 232l-19-16M297 462l-24 2M378 307l-9-7M705 222l3-16M589 191l-5-10M355 354l-16 1M681 206l-2-20M350 281l-23 0M395 367l-20-3M360 395l-14-7M384 330l-14-12M485 203l-5-12M400 214l-13-15M315 328l-19-4M540 207l-13-18M598 185l-1-20M745 217l2-21M417 272l-21-13M323 637l-16 4M705 184l-9-20M713 232l-7-18M364 421l-12-3M614 176l1-10M461 237l-16-18M726 211l3-9M321 525l-13 0M497 257l-16-9M390 301l-16-10M381 303l-20-3M278 459l-19 6M455 184l-14-17M382 362l-22 4M750 218l7-18M384 263l-21-14M361 334l-19-16M455 205l-9-7M289 479l-12 3M682 185l-1-12M411 297l-10-10M297 250l-14-3M635 177l-2-12M387 319l-13-6M356 455l-19-1M372 279l-21-7M777 197l2-12M347 320l-15-1M475 307l-14-17M472 296l-8-13M448 198l-22-13M458 200l-8-14M342 455l-18 2M321 339l-18-6M330 495l-18 4M420 300l-14-14M511 193l-7-17M373 316l-15-4M535 208l-6-15M458 303l-14-11M426 242l-16-11M342 250l-15-14M317 343l-23-5M735 180l5-22M474 192l-12-14M661 192l1-22M443 306l-12-5M360 324l-11-6M362 215l-11-11M310 398l-20-8M293 315l-15-3M787 239l7-9M775 178l7-23M793 236l8-8M482 265l-14-17M542 169l-15-13M764 209l7-14M272 501l-21 0M505 224l-17-12M436 322l-21 0M293 273l-8-10M479 231l-15-15M375 393l-22-2M760 191l6-16M360 315l-21 4M621 188l-2-10M402 238l-17-8M336 227l-16-18M308 359l-14-1M278 346l-12-11M462 204l-7-8M701 207l-1-13M500 195l-11-12M475 221l-9-15M500 276l-8-11M317 468l-12-5M554 201l-6-8M412 285l-21-9M300 332l-12-6M625 186l-2-13M353 268l-16-11M349 483l-15 1M438 346l-14-3M399 372l-20-12M322 249l-18-14M403 313l-16-9M686 219l1-12M374 312l-12-1M455 212l-8-13M672 212l2-16M438 258l-17-9M367 302l-13-8M313 334l-13-6M434 214l-9-5M506 258l-9-11M379 408l-25-1M377 250l-18-13M395 393l-17-6M396 326l-10-4M382 226l-22-8M465 321l-11-5M420 264l-11-17M454 298l-15-14M475 174l-18-12M700 239l5-18M356 442l-20-3M293 273l-17-10M397 284l-12-6M432 275l-11-7M404 267l-17-14M232 428l-14-1M454 233l-12-18M538 185l-10-17M687 226l3-16M379 226l-13-15M398 382l-9-5M788 257l2-16M433 286l-12-11M427 333l-15-10M747 202l5-20M362 250l-14-13M738 213l0-12M460 283l-18-16M496 254l-5-10M413 340l-16-6M347 446l-17-3M712 202l1-13M398 255l-7-8M303 365l-16 1M495 194l-8-19M385 202l-11-3M621 192l-7-14M730 237l0-14M310 348l-14-8M275 403l-15 4"/>
<path stroke="#a08060" stroke-width="2.2" d="M452 274l-16-7M330 358l-12 0M469 287l-13-11M713 247l3-13M302 471l-24 3M364 460l-12-2M765 243l6-10M471 222l-12-14M495 215l-11-17M537 192l-7-16M289 407l-14-2M680 215l0-16M320 314l-21-6M559 204l-15-17M309 321l-13-6M365 221l-17-16M485 236l-15-11M456 254l-16-15M538 193l-5-10M522 219l-6-12M454 300l-11-7M538 218l-5-10M462 239l-17-17M475 225l-17-13M725 219l2-20M748 234l3-20M521 240l-19-12M711 227l0-12M467 212l-5-10M729 248l1-12M474 247l-10-9M500 302l-15-13M267 453l-14 5M616 172l-3-20M470 218l-16-18M499 264l-9-12M493 286l-17-7M316 417l-25 0M577 196l-20-13M488 201l-7-8M757 225l8-17M582 182l-12-19M688 208l-5-15M469 186l-15-19M699 219l-1-11M330 434l-21 5M593 184l-6-16M732 219l2-17M488 246l-16-15M536 214l-18-16M454 283l-9-9M714 185l0-10M748 256l1-10M329 354l-19-2M499 296l-12-5M334 474l-21 2M309 433l-19-2M514 255l-8-18M560 200l-7-17M680 214l3-15M291 433l-18 2M464 213l-12-18M491 214l-10-18M485 297l-12-9M448 307l-11-3M476 263l-11-11M465 216l-8-10M480 228l-10-17M712 202l3-20M340 423l-21 7M447 275l-14-11M329 371l-17-8M499 212l-9-12M466 281l-15-18M268 368l-22-10M708 215l8-19M290 470l-22 1M581 173l-15-18M518 204l-11-12M523 216l-8-15M655 202l-4-22M505 198l-7-9M677 211l-5-18M500 266l-9-14M530 188l-9-18M496 234l-5-11M361 220l-20-13M746 240l2-10M303 477l-17 2M348 477l-16 8M499 302l-18-13M698 238l-2-18M725 255l3-18M815 261l7-6M656 195l-6-13M480 229l-12-10M488 281l-9-6M279 425l-15 2M666 186l-1-10M676 194l-1-13M449 255l-13-3M488 228l-21-13M607 195l-4-15M353 434l-13 0M508 213l-7-11M465 248l-9-10M450 299l-11-13M324 318l-15-9M520 238l-9-13M732 224l0-20M718 211l4-13M459 312l-15-1M465 267l-12-3M320 289l-11-6M457 322l-15-10M677 209l0-17M537 192l-2-13"/>
<path stroke="#101000" stroke-width="2.2" d="M216 683l-16 10M315 672l-18 7M280 667l-18 10M158 673l-21 7M205 618l-21 10M202 657l-20 12M257 667l-13 8M371 688l-6 17M325 673l-12 20M423 690l-9 9M229 626l-21-3M207 687l-20-7M324 674l-14 8M159 581l-22 12M317 660l-18 13M252 686l-23 4M263 630l-16 19M189 622l-9 6M380 692l-14 9M226 680l-10 9M259 685l-15 9M278 650l-11 2M138 624l-17 6M165 656l-13 3M213 624l-17 2M365 693l-13 9M250 648l-13 6M184 689l-8 7M205 605l-21 1M290 692l-14 8M433 691l-13 20M206 614l-10 3M296 681l-16 10M178 636l-15-2M293 659l-9 7M306 680l-20 7M213 641l-16 8M295 662l-13 5M156 687l-19 12M167 644l-9 5M320 687l-12 8M156 635l-20 6M206 619l-10 4M181 687l-18 8M430 693l-12 14M230 671l-19 16M212 647l-12 4M195 681l-8 6M227 632l-20 13M210 626l-20 9M200 610l-19 11M216 651l-14 12M175 664l-19 4M222 673l-10 9M255 671l-21 2M225 686l-11 6M346 689l-11 10M248 650l-19 6M166 644l-14 5M175 642l-12 6M372 692l-17 9M299 660l-12 17M167 693l-22 7M164 674l-13 3M374 693l-8 7M195 613l-18-1M142 616l-12 0M312 665l-13 1M317 692l-13 10M302 677l-15 17M248 629l-14 9M162 595l-12 6M253 634l-19 10M187 651l-12 5M248 692l-10 9M355 682l-10 10M155 606l-21 1M365 681l-10 8M305 662l-19 16M239 685l-12 4M182 579l-16 8M231 661l-11 4M175 574l-13 4M229 674l-21 12M260 668l-19 7M239 688l-13 3M188 583l-14 5M272 648l-16 9M195 574l-12 6M339 693l-13 5M257 646l-21 10M315 654l-20 6M186 620l-16 13M207 604l-13 3M182 584l-13-1M207 627l-22 8M179 573l-21 3M344 672l-10 22M349 690l-16 17M418 687l-9 14M338 687l-19 10M179 689l-16 6M145 637l-13 8M235 669l-16 12M191 693l-10 4M217 662l-11 5M285 679l-17 10M233 632l-9 5M187 683l-25 2M403 684l-18 16M161 572l-16 2M217 603l-21 7M377 690l-14 18M147 662l-19 3M324 675l-21 3M373 691l-15 9M226 615l-18 8M281 691l-16 7M147 586l-18 9M212 687l-9 7M335 692l-9 11M349 689l-8 8M162 589l-15 4M262 629l-9 6M160 686l-18 5M147 669l-19 10M407 688l-12 9M306 689l-19 13M186 628l-21 13M270 672l-21 10M202 629l-17 6M198 645l-19 5M185 693l-12 4M200 664l-14 8M158 617l-17 13M391 682l-20 12M154 673l-12 14M399 686l-9 7M240 638l-20 6M172 602l-6 10M221 688l-15 8M177 680l-21 4M263 687l-17 7M162 629l-15 2M163 669l-9 7M245 671l-8 7M153 632l-19 1M335 676l-14 3M151 569l-23 5M323 667l-20 9M177 691l-11 8M226 688l-14 5M423 685l-10 11M225 629l-20 14M378 688l-10 10M259 687l-17 10M180 582l-9 5M420 685l-8 10M155 648l-16 5M260 677l-15 11M356 693l-11 10M182 692l-15 5M256 688l-12 9M197 641l-23 6M269 642l-15 9M176 621l-17 6M290 662l-14 5M174 679l-12 6M270 685l-12 7M213 661l-17 3M217 692l-19 2M167 617l-11 4M210 597l-19 4M149 590l-14 7M270 663l-17 15M198 588l-18 4"/>
<path stroke="#403020" stroke-width="2.2" d="M964 689l10 5M306 579l-23 4M295 497l-25-2M313 534l-17 6M291 498l-10 4M224 452l-19-2M310 547l-20 11M298 503l-17 0M317 499l-15 0M228 444l-14-3M317 531l-18 8M216 452l-14 1M236 444l-14 2M253 488l-12 1M232 452l-22-6M229 458l-25-2M321 641l-22 12M299 496l-18 3M229 456l-23 6M302 494l-14 6M273 505l-10 5M970 667l14 14M329 651l-10 13M311 501l-24 5M260 490l-21 4M312 551l-20 11M202 473l-18-4M276 494l-23-1M279 505l-14 3M315 522l-10 3"/>
<path stroke="#806050" stroke-width="2.2" d="M687 239l1-13M689 227l0-13M648 206l-6-19M261 429l-22 1M498 302l-9-6M670 213l3-16M273 408l-18 3M519 233l-9-9M573 226l-5-14M501 226l-14-12M599 209l-8-16M473 176l-13-10M253 453l-14-1M249 487l-13-2M576 211l-6-14M576 249l-7-20M479 303l-8-7M647 209l-1-20M570 202l-5-9M300 493l-19 1M655 242l-3-15M758 178l5-16M247 467l-16-1M731 246l4-12M820 254l13-13M692 229l-1-15M577 255l-4-15M550 263l-15-13M598 162l-1-12M728 238l7-20M657 222l1-14M294 456l-15 0M481 305l-4-10M520 262l-15-12M336 224l-16-11M487 252l-20-10M567 269l-3-21M484 290l-6-12M616 248l-8-11M472 305l-18-2M388 202l-19-11M589 256l-10-19M524 260l-6-9M727 248l-2-13M782 222l3-15M704 175l0-17M547 222l-12-17M595 165l-6-14M626 234l-1-9M524 285l-21-7M336 224l-14-20M649 230l-6-21M541 231l-6-10M726 231l4-13M273 403l-21 0M548 186l2-16M524 270l-16-13M385 201l-12-9M617 247l0-16M260 479l-24 3M636 198l-3-12M544 258l-9-18M261 493l-16 0M275 482l-22-4M723 227l9-5M666 201l-3-10M609 217l1-22M263 390l-20 5M503 254l-8-7M487 301l-9-4M691 240l-2-14M614 236l-4-13M710 223l2-12M805 245l5-8M546 210l-7-16M559 230l-3-11M292 310l-18-12M527 192l-10-8M256 421l-18 1M662 189l-3-19M378 206l-16-7M536 214l-19-14M287 485l-22 7M487 263l-11-4M272 393l-20-9M592 235l-1-13M702 242l0-19M638 203l-1-19M675 218l-3-10M622 251l-2-10M277 396l-12 3M677 169l-3-13M584 257l-12-16M256 485l-11-2M620 183l-9-15M627 201l-6-13M290 443l-18 2M668 256l1-13M669 230l0-14M366 206l-13-7M664 230l-2-18M503 287l-6-8M573 218l-12-14M615 218l-2-17M616 188l-3-10M493 285l-10-11M634 205l-1-22M634 164l-1-22M667 227l2-17M304 457l-15 0M702 256l0-13M724 223l-1-9M774 192l3-20M542 243l-3-15M573 204l-14-18M685 202l1-13M519 266l-12-15M350 209l-7-7M540 239l-13-15M671 245l1-11M548 188l-8-8M528 212l-6-9M251 489l-15 2M472 315l-14-14M263 480l-22 4M303 239l-16-11M637 215l-8-11M710 217l3-16M540 238l-7-18M512 264l-7-6M497 228l-15-13M682 239l-2-13M512 243l-9-14M536 230l-15-15M536 258l-15-14M547 189l-1-12M526 263l-15-13M257 422l-18-3M654 252l-2-13M626 194l-3-15M579 234l-10-15M587 192l1-11M510 205l-11-21M625 163l-4-20M538 280l-11-17M696 197l0-14M519 212l-12-17M349 216l-9-5M713 225l0-10M482 173l-17-18M694 200l0-13M536 215l-8-10M631 253l-3-12M241 466l-19 0M527 254l-15-12M725 256l4-20M692 208l-5-13M520 234l-8-10M647 224l1-10M486 234l-18-13M654 187l-5-8M513 248l-8-10M675 213l-2-21M537 188l-5-21M564 207l-14-11M633 203l-2-12M515 285l-8-9M716 174l-2-10M736 178l4-12M278 400l-13-1M531 280l-18-12M568 265l-9-11M563 165l-3-19M614 210l-8-14M729 222l4-13M321 483l-14 2M295 455l-17 6M571 271l-14-9M579 183l-5-17M558 186l-12-14"/>
<path stroke="#c09070" stroke-width="2.2" d="M746 243l1-9M459 241l-8-8M362 294l-12-8M772 245l7-19M406 286l-10-7M691 206l-7-14M773 211l11-17M345 245l-21 1M814 275l8-17M444 237l-16-17M514 221l-11-6M362 239l-16-16M470 204l-8-16M585 243l-6-10M465 304l-15-10M482 260l-12-16M558 274l-9-14M470 250l-17-15M387 382l-23-7M463 239l-16-7M399 275l-14-2M585 234l-5-12M418 260l-18-10M784 263l8-17M388 241l-11-4M364 316l-16-11M629 246l-5-9M444 212l-11-16M390 281l-18-15M363 252l-19-10M689 200l1-19M470 256l-15-11M295 427l-18-4M735 195l4-22M405 289l-19-10M446 300l-18-14M413 264l-9-6M347 255l-14-10M602 260l-4-17M640 252l-3-13M670 249l-6-10M721 219l1-17M580 214l-9-16M449 244l-15-14M340 294l-14-10M661 255l-8-12M546 193l-5-9M410 332l-20-5M577 239l-8-11M394 351l-12-3M389 339l-17-5M773 254l10-16M750 221l2-14M433 296l-18-16M351 281l-19-11M386 304l-24-2M490 244l-17-5M486 273l-12-10M436 215l-12-15M433 264l-21-13M742 238l5-12M472 263l-12-8M626 216l-4-9M369 394l-19-2M407 240l-12-11M474 286l-10-6M529 191l-5-10M449 216l-15-18M753 237l4-8M394 269l-20-8M776 230l1-10M554 261l-12-14M490 307l-11-7M680 246l-1-20M349 311l-15-15M462 300l-13-9M677 254l-6-17M534 246l-6-10M757 247l4-20M531 200l-9-16M418 359l-10-3M579 238l-6-10M304 464l-21 5M720 250l1-11M428 356l-13-5M380 413l-12-5M497 227l-20-14M450 264l-13-9M495 192l-16-11M445 288l-24-5M735 257l0-10M558 272l-14-13M358 322l-6-9M384 411l-10-3M556 179l-4-17M344 325l-11-6M376 228l-15-13M381 398l-13-1M364 375l-16-1M468 248l-17-11M581 224l-7-15M593 216l-5-14M763 225l5-9M376 288l-10-6M614 239l-3-13M610 248l-8-10M405 366l-21-8M604 256l0-13M480 189l-17-6M412 310l-16-5M379 357l-16-3M528 266l-3-10M658 186l-10-15M279 463l-19-10M428 329l-17-9M469 285l-10-15M422 218l-15-17M583 221l-5-22M356 257l-9-6M602 221l1-15M805 257l12-9M636 179l-3-22M554 189l-8-21M701 208l-1-13M524 277l-7-6M391 392l-14-5M408 324l-20-1M399 259l-17-9M375 404l-20 0M485 238l-15-13M774 241l8-19M414 293l-19-12M553 244l-7-11M569 181l-8-20M495 247l-11-7M368 227l-19-12M353 359l-15-5M551 272l-6-11M358 390l-17-8M342 322l-17 0M394 314l-17-17M475 217l-13-20M385 266l-12-6M351 366l-14-3M430 255l-19-10M615 242l-1-17M345 282l-20-9M464 233l-11-14M636 210l0-10M320 434l-23 0M421 326l-17-2M488 206l-13-8M445 280l-13-14M758 207l4-20M642 232l-9-11M544 270l-7-10M407 251l-9-6M388 220l-9-7M780 242l3-10M390 389l-16-1M391 332l-20-7M652 225l0-9M425 207l-8-7M455 323l-11-3M363 397l-15-9M739 226l1-15M418 212l-15-20M428 275l-19-9M451 285l-7-11M559 179l-6-21M491 223l-8-11M358 236l-14-13M409 302l-19-10M416 309l-21-9M472 285l-20-11M480 279l-9-7M467 218l-10-9M400 304l-12-14M453 265l-10-5M374 295l-25-2M471 209l-9-13M577 244l1-17M307 430l-24-4M641 234l-5-15M386 228l-12-11M370 332l-9-6M727 242l6-20M724 197l0-12M577 220l-5-9M475 302l-10-7M482 250l-7-11M402 261l-12-9M581 248l-3-12M419 252l-6-16M470 196l-17-8M472 244l-12-9M403 268l-17-4M442 267l-16-6M549 267l-3-12M366 250l-18-13M801 251l8-11M423 344l-15-7M434 321l-15-11M351 328l-17-3M416 270l-10-9M388 275l-20-6M655 244l-2-15M728 239l2-18M519 225l-14-15M458 278l-10-6M501 200l-3-17M361 232l-8-7M766 251l5-15M449 229l-15-12M370 360l-13 1M428 238l-8-20M660 231l2-12M481 253l-17-9M429 241l-18-17M385 324l-20-10M653 238l-1-18M401 283l-14-6M423 266l-16-3M469 324l-15-7M449 261l-11-9"/>
<path stroke="#202010" stroke-width="2.2" d="M370 676l-11 10M162 560l-22 10M955 693l11 6M275 630l-16 7M322 654l-10 3M377 675l-12 6M356 674l-16 15M342 663l-12 7M330 658l-22 12M170 571l-14-11M422 685l-13 14M399 681l-11 8M426 682l-21 5M160 571l-13-2M260 623l-12 3M172 569l-19 5M337 659l-22 12M218 588l-19 11M154 567l-12 1M355 667l-8 10M361 670l-4 13M247 613l-22 12M362 676l-22 10M225 593l-23 9M352 665l-22 11M364 675l-15 8"/>
<path stroke="#201010" stroke-width="2.2" d="M162 613l-24 4M373 684l-18 15M144 654l-11 1M180 622l-12 5M282 627l-11 3M252 681l-12 7M159 577l-10 3M216 639l-18 13M207 590l-16 3M333 679l-10 4M401 690l-15 13M242 633l-22 8M305 671l-13 3M238 675l-14 14M204 640l-18 5M153 575l-21-4M183 622l-11 5M173 551l-20 10M183 692l-9 7M356 676l-7 11M307 662l-13 12M235 647l-10 4M247 620l-4 11M154 660l-14 9M197 683l-15 11M197 624l-13 8M160 655l-12 5M330 658l-7 13M200 583l-14 6M265 628l-16 4M214 614l-15 8M156 584l-20 2M223 634l-17 6M335 686l-18 7M179 646l-11 2M225 619l-22 1M273 642l-12 4M175 670l-14 6M251 635l-16 5M245 598l-22 6M348 675l-22 9M312 661l-12 13M254 654l-13 11M200 643l-22 10M344 674l-11 10M153 581l-11 2M165 569l-15 3M247 644l-18 6M204 675l-11 5M314 655l-19 11M256 624l-14 11M239 670l-17 6M253 651l-17 6M232 604l-20 9M264 681l-11 9M287 693l-8 10M216 590l-17 7M210 664l-20 4M158 614l-13 4M162 678l-17 5M175 581l-14 2M207 571l-20 9M215 593l-17 7M382 682l-8 8M407 685l-12 8M220 660l-17 3M235 668l-17 13M195 657l-24 2M189 633l-17 9M259 666l-20 8M309 663l-10 17M243 632l-19 3M360 674l-10 9M212 665l-17 4M362 669l-14 10M178 588l-11 4M175 579l-10 1M294 649l-13 11M201 603l-21 3M329 658l-14 12M153 595l-18 4M185 574l-17 1M153 679l-13 7M203 651l-22 11M197 561l-21 0M215 651l-12 4M354 678l-21 14M301 649l-19 6M341 677l-11 7M264 692l-17 2M339 675l-11 6M338 690l-12 7M276 613l-12 3M238 616l-23 9M236 623l-10 4M288 689l-10 7M145 600l-20 15M149 602l-20 6M211 645l-21 4M379 692l-7 8M224 600l-12 15M385 674l-13 7M303 648l-17 2M261 678l-12 12M180 601l-12 1M301 628l-24 2M308 686l-18 9M186 572l-15 4M964 673l15 16M258 608l-15 11M229 612l-22 12M405 688l-9 7M164 657l-11 5M153 604l-14 2M221 692l-11 5M153 595l-23 2M241 593l-22 11M314 654l-17 8M247 651l-9 7M187 601l-20 2M253 642l-10 6M176 619l-16 4M169 692l-17 6M166 610l-20 3M241 686l-23 9M200 677l-22 4M268 632l-17 5M191 615l-14 8M183 566l-18 6M183 577l-23 4M334 653l-25 4M314 637l-20 9M163 668l-20 10M203 650l-15 9M316 664l-15 7M268 669l-13 7M188 606l-20 1M343 662l-20 15M304 663l-18 13M231 584l-18 8M278 648l-8 12M195 587l-16-1M191 575l-18 4M325 670l-12 5M155 573l-11 1M275 660l-11 1M155 682l-24 4M201 656l-14 8M154 572l-16 4M431 688l-4 11M176 568l-16 11M152 571l-11 5M203 629l-11-3M408 688l-17 18M284 655l-14 13M171 645l-14 2M291 657l-18 9M209 568l-13 1M182 582l-11 3M366 673l-16 10M210 572l-14 0M145 636l-14 4M320 668l-10 8M267 633l-15 5M314 640l-19 9M316 692l-18 9M260 673l-18 12M192 602l-17 11M306 660l-14 7M191 576l-12 2M203 579l-20 6M176 578l-12-2M358 675l-10 13M184 561l-17 7M170 642l-13 14M181 638l-20 13M241 663l-25 5M182 561l-16 3M223 605l-11-2M164 570l-21 10M166 588l-15 2M189 572l-11 1M315 665l-18 10M197 658l-19 6M154 659l-16 6M255 643l-13 7M200 589l-20 11M154 603l-10 3M292 655l-13 6M193 668l-13-2M138 609l-20 5M331 652l-15 9M349 667l-21 13M247 616l-19 5M418 694l-23 10M296 662l-11 5M151 603l-19 2M149 619l-17-1M274 660l-12 5M954 689l22 12M312 687l-11 3M137 620l-10 4M321 654l-16 8M365 687l-8 10M248 603l-17 8M285 622l-13 6M250 686l-12 9M351 662l-15 4M171 579l-12 0M181 665l-19 12M259 693l-23 2M166 675l-21 14M202 652l-15 7M310 662l-14 1M273 637l-16 5M166 564l-15 1M240 619l-14 6M405 688l-10 12M158 603l-17 2M332 660l-13 7M155 594l-16 1M153 609l-20 6M187 578l-19 9M162 629l-15-4M341 693l-11 7M165 540l-21 3M286 667l-23 6M346 685l-14 14M166 618l-19 4M191 639l-14 4M242 616l-17 10M197 574l-15 7"/>
<path stroke="#101010" stroke-width="2.2" d="M170 638l-19 4M220 614l-13 5M211 650l-19 8M300 687l-15 12M193 628l-12 3M191 618l-16 12M178 578l-16 0M184 661l-13 7M260 665l-14 11M262 676l-14 5M199 656l-16 7M155 661l-16 18M148 668l-10 7M264 676l-13 2M289 659l-19 15M388 686l-7 9M185 600l-12 1M280 676l-12 6M141 628l-16 9M305 666l-9 9M180 593l-19 7M177 648l-15 6M175 679l-15 10M159 665l-20 2M284 673l-20 10M271 643l-14 9M181 635l-21 6M261 648l-11 8M239 662l-22 12M252 673l-14 6M215 694l-24 6M181 592l-17 8M224 667l-14 4M159 661l-22 9M212 623l-13 8M323 667l-20 9M253 630l-18 4M168 680l-23 10M214 612l-11 4M262 672l-17 8M263 649l-12 14M335 658l-15 7M215 622l-13 6M241 637l-13 0M191 604l-23 3M192 641l-10 1M184 616l-14 0M149 620l-21 1M177 621l-15 3M287 673l-18 5M222 618l-25 0M281 654l-21 5M178 670l-10 6M329 667l-14 8M316 678l-10 11M308 670l-11 9M236 685l-21 10M288 653l-11 7M197 592l-14 10M160 682l-20 9M239 678l-19 3M163 655l-19 6M214 675l-10 6M154 648l-10 3M186 671l-21 14M168 643l-12 4M159 567l-19 7M236 634l-20 6M186 597l-22 11M163 637l-19 8M186 598l-17 13M188 635l-17 8M154 664l-20 6M235 681l-18 10M347 687l-18 6M202 605l-16 9M212 672l-13 13M154 636l-13 7M250 645l-19-2M187 627l-15 11M210 653l-16 13M290 678l-13 10M169 685l-12 6M259 682l-18 11M203 604l-17 0M176 630l-19 5M226 670l-14 11M192 662l-13 6M181 589l-14 6M226 621l-13 8M194 643l-24 6M165 610l-18 1M209 604l-18 4M257 649l-15 10M262 647l-23 8M223 650l-10 6M284 662l-14 5M223 627l-23 10M214 674l-10 9M279 658l-14 4M277 665l-19 3M169 636l-18 3M176 635l-17 8M212 603l-17 7M170 617l-11 3M276 654l-14 9M194 636l-13 2M186 631l-19 8M234 621l-17 3M168 669l-12 4M240 666l-12 6M201 642l-8 7M155 596l-19 3M392 687l-12 9M225 629l-23 5M164 669l-13-1M154 621l-10 2M166 629l-16 7M183 662l-13 6M168 609l-15 9M233 632l-9 8M163 652l-10 4M195 678l-16 0M279 649l-21 7M229 662l-10 6M178 640l-18 5M165 642l-20 8M190 583l-11 5M204 664l-20 4M235 650l-12 6M197 675l-13 3M332 688l-23 4M154 604l-14-2M355 670l-16 12M201 664l-11 3M258 658l-10 4M278 690l-16 14M177 636l-17 2M177 611l-16 7M154 638l-17 6M181 641l-11 6M210 628l-20 1M246 662l-21 3M248 667l-20 7M209 685l-12 8M399 690l-13 12M263 685l-15 13M206 682l-24 7M178 601l-20 10M232 648l-12 8M150 627l-10 8M267 659l-19 9M170 680l-16 10M209 655l-13 9M162 618l-15 3M153 658l-18-2M244 626l-14 2M216 616l-13 7M236 645l-16 6M236 675l-21 7M213 638l-15 8M232 661l-10 5M214 605l-21 9M298 657l-16 12M277 672l-13 7M194 586l-20 4M188 668l-17 5M192 669l-16-2M167 631l-17 7M200 650l-11 7M278 663l-10 14M167 666l-12 11M168 666l-16 5M178 672l-8 9M163 645l-17 11M235 671l-11 8M217 690l-14 14M150 638l-13 0M190 675l-17 7M225 679l-12 3M207 668l-13 4M256 677l-11 9M157 670l-20 4M174 688l-10 8M245 672l-11 5M159 638l-12-1M177 660l-10 2M234 645l-9 5M183 654l-24 9M178 600l-17 2M179 665l-13 2M220 666l-8 7M165 625l-20 10M149 644l-11 7M192 595l-16-2M368 686l-8 11M169 619l-23 9M230 637l-18 3M256 661l-12 7M318 688l-14 8M196 678l-16 8M216 645l-22 12M207 655l-10 2M203 599l-19 12M266 647l-13 8M154 603l-10 5M238 624l-13 7M374 684l-7 10M163 638l-16 14M268 666l-11 4M250 630l-25 2M385 675l-17 19M175 670l-15 10M253 669l-21 3M160 664l-19 3M260 657l-17 10M170 656l-21 13M275 678l-18 8M169 662l-23 3M246 655l-13 8M258 642l-18 8M171 566l-22 5M228 629l-24 6M240 660l-10 8M296 655l-10 6M180 677l-19 6M309 658l-10 6M318 660l-12 13M155 578l-16 2M230 616l-17-2"/>
<path stroke="#504040" stroke-width="2.2" d="M317 555l-14 1M321 229l-20-9M527 167l-6-14M332 636l-5 9M660 164l-1-11M229 429l-11-1M438 184l-9-9M314 589l-11 5M325 521l-12-3M753 180l6-11M323 632l-16 9M766 185l8-21M745 179l-2-16M759 188l0-13M320 614l-16 7M327 626l-9 6M329 631l-12 9M516 178l-18-18M313 594l-18 0M337 217l-15-4M346 654l-14 8"/>
<path stroke="#705050" stroke-width="2.2" d="M385 384l-20-14M381 362l-17-3M399 266l-17-13M435 182l-14-12M437 203l-10-9M314 235l-18-8M360 203l-9-12M475 171l-15-15M390 290l-13-9M383 246l-23-8M396 288l-13-16M365 205l-11-6M311 595l-12 9M376 195l-16-15M533 181l-14-17M661 166l0-19M379 365l-13-4M361 347l-24-4M410 361l-20-7M400 343l-17-4M402 329l-22-9M755 175l8-17M314 611l-13 0M370 259l-11-3M403 230l-17-12M368 299l-19-13M393 370l-21 0M777 182l8-9M341 490l-16 1M397 336l-17-3M370 379l-14-5M360 260l-10-6M395 393l-23 2M399 188l-8-8M377 318l-10-9M401 356l-17-17M331 219l-16-9M366 266l-7-15M366 259l-22-10M302 423l-15 1M385 417l-14-2M402 265l-16-13M738 171l1-20M365 249l-9-11M373 362l-16 0M373 337l-19-3M413 218l-17-19M202 467l-22 3M467 193l-18-6M379 253l-21-13M639 178l-4-20M408 287l-20-5M673 181l-10-20M367 229l-18-16M375 307l-13-10M646 163l-4-18M789 225l9-13M310 229l-21 0M386 300l-20-3M363 366l-13-2M764 177l3-18M371 318l-9-12M415 358l-10-3M476 189l-15-15M622 176l2-13M356 314l-14-9M304 232l-10-7M383 223l-15-9M410 368l-12-5M696 165l1-14M392 310l-15 0M398 311l-22-5M291 268l-12-8M310 232l-11-5M315 547l-19 0M372 228l-17-9M285 288l-13-7M376 310l-15-2M371 228l-12-10M368 231l-19-12M367 349l-17-9M357 294l-15-12M389 237l-14-17M291 310l-19-3M404 303l-9-6M372 231l-11-7M660 166l-4-15M378 367l-21-1M408 276l-16-15"/>
<path stroke="#f0e0d0" stroke-width="2.2" d="M279 310l-15-13M255 342l-15 1M822 225l11-20M809 212l10-18M816 222l6-21M799 196l11-16M822 229l12-17M808 211l11-8"/>
<path stroke="#e0f0f0" stroke-width="2.2" d="M358 537l-11 2M368 627l-11 3M337 581l-18 6M361 608l-17 3M339 599l-13 4M359 534l-16 7M340 575l-15 4M338 590l-21 7M342 590l-16 9M344 560l-24 4M347 557l-16 4M360 566l-23 6M343 568l-10 4"/>
<path stroke="#c09080" stroke-width="2.2" d="M536 239l-10-10M305 438l-18-8M566 207l-3-10M284 442l-23 6M675 205l1-12M607 197l-5-17M358 475l-12 5M547 229l-4-17M523 262l-15-14M296 300l-22-13M519 239l-12-5M280 459l-21-2M275 342l-14-2M554 225l-7-18M595 205l-10-20M620 195l0-13M519 253l-11-7M705 243l-2-10M541 231l-6-15M672 210l-3-15M679 215l4-16M699 230l2-19M804 245l5-9M607 194l-7-21M312 441l-18-4M309 441l-24-4M668 200l2-12M295 305l-24-2M294 293l-10-2M628 198l-3-13M297 431l-17 5M536 230l-17-13M546 229l-8-15M597 199l-5-16M522 266l-7-9M290 291l-18-4M495 307l-11-4M302 436l-18 0M673 206l-10-14M608 193l-9-20M285 271l-12 0M508 257l-8-8M532 244l-4-20M677 204l0-20M504 256l-20-13M590 189l-1-18"/>
<path stroke="#603020" stroke-width="2.2" d="M225 553l-13 3M267 530l-22 4M274 579l-23 1M276 538l-18 1M269 525l-14 3M211 543l-21 2M290 578l-10 3M262 585l-23 2M291 588l-16 2M253 532l-15 5M240 536l-24 4M246 539l-11 4M217 476l-23 1M253 562l-21 8M192 517l-17 5M270 572l-21 10M268 596l-13 5M274 593l-17 12M209 486l-17 2M202 507l-14-2M213 516l-8 7M198 525l-13 4M231 538l-16 12M302 594l-14 8M207 528l-21 2M246 510l-17 3M268 533l-15 2M296 589l-12 7M182 530l-15 5M279 587l-10 5M239 515l-18 4M186 515l-23 8M279 547l-24-1M264 581l-15 9M248 508l-10-2M264 564l-18-3M242 564l-18 9M273 561l-16 9M177 537l-14 2M241 554l-20 2M280 514l-12-4M252 558l-20 3M211 498l-11 1M200 549l-18 3M297 581l-23 8M178 526l-14 4M247 548l-19-6M226 556l-11 1M234 500l-11 4M282 608l-16 12M241 569l-9 6M202 517l-16 5M182 534l-12 1M296 559l-18 1M249 558l-22 2M233 502l-18 2M258 532l-13 5M184 515l-20 8M250 532l-18 11M197 535l-11 3M282 580l-19 9M301 550l-16 4M283 599l-14 9M285 598l-12 6M239 571l-22 12M255 576l-24 6M291 525l-17 1M233 500l-12 3M198 508l-17 8M275 523l-14 5M211 500l-16 10M202 544l-10 2M200 529l-17 4M227 505l-19-6M296 608l-13 11M285 589l-20-3M276 596l-12 3M246 553l-17 8M299 595l-16 5M255 516l-14 2M279 516l-17 4M225 508l-15 0M279 570l-12 6M257 593l-10 3M223 506l-9 5M275 597l-19 7M194 540l-14-1M282 518l-11 4M301 514l-13 7M265 527l-18 2M274 544l-24 1M216 525l-16 3M226 497l-16 0M281 531l-10 2M240 550l-10-1M263 531l-19 14M207 472l-17-4M246 544l-11 4M220 482l-18 2M292 602l-10 7M295 539l-19 4M304 515l-15 3M234 516l-17 3M271 591l-19 5M306 622l-16 5M204 485l-12 2M269 582l-16 12M299 522l-17-3M255 557l-14 7M237 568l-11 4"/>
<path stroke="#704030" stroke-width="2.2" d="M292 519l-21 12M217 502l-22-7M184 512l-11 0M217 520l-19 4M297 510l-12-3M236 517l-14 1M259 514l-24-3M283 591l-15 1M254 539l-24-3M275 583l-19 8M237 548l-19-1M216 465l-20 4M288 523l-13 1M252 522l-15 4M241 495l-12 4M195 517l-22 2M285 532l-13 0M302 555l-20 12M246 567l-22 4M270 504l-14 5M261 562l-13 7M300 573l-12 7M213 520l-19 1M262 564l-11 5M225 506l-12 1M254 509l-18 3M225 465l-20 2M225 483l-14-1M264 567l-24-6M219 514l-13 5M236 544l-10 3M230 464l-10-1M205 475l-13-3M294 592l-22 9M254 579l-18 5M298 508l-9 6M213 482l-11 2"/>
<path stroke="#505050" stroke-width="2.2" d="M380 662l-20 5M410 671l-5 15M333 630l-10 8M384 667l-16 8M375 665l-11 18M394 670l-10 18M409 670l-9 11"/>
<path stroke="#d0c0c0" stroke-width="2.2" d="M265 330l-23-9M838 244l13-13"/>
<path stroke="#504030" stroke-width="2.2" d="M279 365l-17-2M284 361l-15-8M304 274l-13-10M269 408l-25-4M287 414l-12 1M250 422l-22 1M288 480l-25 0M340 461l-24 2M259 436l-18 0M333 415l-21-13M264 490l-19 1M303 383l-12-11M745 181l-3-11M731 188l-2-13M776 188l4-14M316 370l-11-13M728 178l2-10M773 202l6-15M337 406l-11 2M409 194l-11-12M347 216l-21-9M273 414l-22-5M256 446l-19 4M291 419l-24 0M316 273l-14-7M591 173l-2-21M576 168l-8-13M318 246l-21-9M258 444l-11 0M296 361l-14-3M298 352l-21-11M351 439l-24 4M556 169l-7-13M305 264l-10-5M308 259l-15 1M242 455l-14 1M318 415l-24-4M426 184l-12-16M319 227l-10-12M702 174l-2-20M324 480l-23-1M251 419l-18 5M326 390l-14-5M481 182l-13-10M311 293l-15-5M268 470l-13-4M698 175l-7-19M326 398l-11 0M395 202l-14-12M316 348l-17-2M483 181l-4-9M247 447l-25 2M333 232l-12-6M645 163l3-15M485 177l-13-16M300 245l-20-11M297 348l-16-2M452 177l-8-11M682 169l0-19M295 263l-16-2M356 218l-19-4M303 392l-23-10M240 449l-21 1M535 172l-5-14M304 242l-14-8M343 482l-23 8M311 337l-21-8M318 395l-15-4M680 174l2-12M270 493l-14 3M324 491l-21-1M263 458l-16 3M464 180l-7-11M310 317l-13-12M329 401l-15-2M295 392l-13-4M265 414l-21 0M752 188l-2-11M765 181l6-12M636 167l-3-24M551 174l-5-18M273 473l-21 0M313 275l-15-6M253 441l-16 1M634 170l-6-14M269 362l-23 1M333 478l-25 5M708 180l1-16M301 269l-10-5M276 351l-23-1M699 178l1-13M315 245l-14-8M760 193l10-20M331 467l-14 4M756 190l7-9M265 480l-16 11M319 536l-11 3M625 168l-6-18M338 474l-23 5M569 169l-7-17M265 492l-21 1M318 367l-11-1"/>
<path stroke="#d0d0c0" stroke-width="2.2" d="M262 311l-16-4M821 225l10-20M818 239l8-11M817 222l9-7M257 316l-16 0M257 321l-13-20M336 524l-15 9M831 240l4-13M266 318l-22 3M832 231l6-12M833 239l6-8M836 236l10-16M824 243l3-9"/>
<path stroke="#703030" stroke-width="2.2" d="M295 540l-19 3M182 519l-15-3M294 612l-15 14M295 529l-17 11"/>
<path stroke="#806060" stroke-width="2.2" d="M351 208l-8-8M345 492l-12 3M386 191l-8-9M406 186l-14-11M827 263l14-15M417 187l-11-6M757 185l3-20M400 192l-11-17M702 168l2-14M289 292l-22-6M316 554l-18 15M313 591l-16 0M768 189l5-17M681 172l1-19M498 169l-9-18M333 517l-18 0M423 187l-15-10"/>
<path stroke="#705040" stroke-width="2.2" d="M302 384l-18 4M684 242l1-11M441 340l-16-8M582 266l-10-13M742 218l-1-20M453 221l-10-14M772 255l3-15M656 245l-4-10M416 363l-10-6M528 225l0-11M359 261l-13-5M403 388l-18-10M330 371l-12-2M338 423l-17-3M774 265l7-9M335 401l-10-4M729 236l-1-15M382 306l-19-7M336 252l-15-6M314 357l-10-6M425 199l-11-9M308 355l-12-4M356 246l-18-2M594 233l-5-20M771 227l8-17M314 465l-17 6M232 463l-22 0M686 185l2-17M289 495l-14 2M436 193l-6-9M381 410l-23-1M332 375l-14-11M425 240l-13-8M759 197l-1-15M297 390l-21-6M406 237l-13-9M817 258l13-15M697 228l0-17M573 258l-10-18M249 499l-23 5M327 394l-21-1M594 182l-5-14M335 408l-21-8M605 174l-8-22M339 255l-15-9M542 186l-7-18M347 397l-18-6M336 390l-11-3M410 233l-12-8M589 194l-4-10M756 246l3-13M390 409l-22-4M589 212l-6-8M584 185l-4-15M330 371l-10-1M717 250l4-16M410 377l-13-2M357 430l-11-3M394 210l-10-11M317 273l-21-6M761 245l2-10M566 261l-12-14M379 286l-19-6M667 178l1-13M347 357l-12-8M269 455l-22-6M449 239l-15-9M312 303l-21-10M247 485l-21 3M548 252l-15-12M236 434l-11 1M395 348l-20-10M782 219l7-17M367 220l-17-16M748 245l6-12M651 184l-6-23M638 176l-3-13M387 274l-20-11M529 201l-16-15M779 225l5-10M344 441l-16 5M235 477l-17-7M523 219l-5-19M310 347l-11-1M347 275l-17-11M370 316l-19-7M758 214l8-20M639 204l0-12M359 368l-23 6M585 235l-6-20M411 249l-10-4M325 323l-12-11M390 271l-15-4M307 468l-22-8M301 321l-18-4M399 221l-17-18M416 272l-13-10M719 238l-10-17M411 250l-19-5M405 336l-20-1M499 270l-11-13M606 231l-9-19M829 273l8-10M735 207l5-15M313 469l-22 10M560 183l-7-14M492 291l-14-10M357 455l-24-3M476 243l-11-9M447 285l-10-7M564 265l-10-17M642 197l-4-11M355 344l-18-6M375 370l-21-5M378 393l-11-7M401 352l-17-6M381 309l-11-6M763 206l8-20M535 272l-11-17M294 284l-18-6M337 418l-21 5M799 254l5-8M753 194l10-18M241 438l-20-2M462 286l-16-5M360 463l-21 7M317 248l-14-12M432 339l-10-12M298 445l-16 4M349 408l-14 0M624 221l-5-21M672 204l-1-21M441 261l-15-11M338 423l-16-7M608 209l-2-14M465 310l-19-7M390 267l-23-11M368 308l-17-15M504 274l-17-9M495 297l-9-19M435 221l-13-7M468 305l-10-7M604 187l0-11M465 218l-11-13M545 239l-9-20M738 225l6-8M533 270l-10-17M649 247l-2-16M437 246l-18-17M599 220l-4-9M404 224l-10-3M529 217l-7-10M466 207l-7-13M318 248l-21-11M361 372l-19-11M659 190l-3-17M393 208l-8-8M412 272l-12-19M520 286l-12-11M680 251l-2-14M335 297l-12-4M380 397l-19-3M238 458l-12 0M323 375l-21-2M567 233l-3-11M416 350l-18-11M423 340l-13-9M344 321l-15-13M454 212l-17-15M332 316l-17-8M374 345l-16-2M494 230l-17-18M302 355l-23-5M373 395l-13-2M518 212l-8-13M442 215l-20-9M360 301l-8-12M315 376l-12-2M657 230l-4-19M502 292l-10-6M725 246l3-9M488 235l-15-19M334 234l-16-15M379 414l-13 1M368 297l-15-4M515 258l-10-19M608 237l-6-21M645 225l-5-18M825 274l11-8M396 350l-11-4M630 237l-2-17M438 234l-14-16M343 266l-12-8M748 195l9-17M625 202l-2-23M336 236l-22-5M537 181l-6-19M393 379l-15-2M521 276l-16-11M506 246l-11-10M668 194l-6-22M461 215l-14-14M569 261l-10-11M486 180l-10-9M371 352l-22-5M348 304l-20-3M568 185l-4-18M488 225l-12-14M299 345l-19-15M344 344l-23 0M644 206l-7-13M368 272l-15-11M415 232l-9-6M689 180l-2-15M216 459l-19 4M413 255l-15-13M461 228l-15-6M604 198l-2-22M408 308l-21-12M382 328l-20-12M314 436l-18 9M373 329l-17-9M301 455l-22 2M499 272l-17-13M335 319l-21 1M374 416l-18-1M246 488l-12 0M681 227l-4-18M305 363l-17-3M354 363l-15 1M405 383l-14 1M433 214l-9-7M244 425l-17 0M297 409l-10-2M361 392l-12-1M285 339l-24-6M488 290l-16-11M397 226l-14-5M336 244l-18-13M395 322l-19-16M385 300l-12-8M327 377l-15 2M687 179l-5-22M420 310l-13-7M263 469l-19 0M756 220l4-19M526 210l-4-16M272 430l-14 1M347 348l-22 2M554 274l-5-19M399 250l-14-9M272 500l-17 9M510 288l-15-6M634 227l1-13M399 395l-16-1M533 246l-14-18M817 263l10-18M580 212l-4-18M356 323l-16-10M544 202l-15-15M588 206l-6-10M404 200l-17-14M395 375l-15 3M458 307l-13-3M319 328l-23-1M685 203l4-19M421 321l-19-13M460 321l-15-15M376 247l-22-12M560 246l-18-14M300 487l-18 4M342 292l-13-11M616 232l-5-17M421 318l-12-1M629 260l-3-9M473 242l-7-14M442 303l-22-8M524 264l-10-17M349 251l-18-8M418 259l-14-13M779 264l2-18M376 266l-22-12M728 219l3-19M441 220l-12-9M340 284l-19-10M520 176l-10-9M335 308l-24-2M803 248l11-11M459 245l-15-17M287 456l-15-2M620 252l-11-8M494 293l-14-8M344 402l-18-3M343 348l-19-6M673 196l1-21M499 189l-15-19M538 202l-14-12M359 369l-22-6M701 204l-8-14M358 252l-16-7M335 293l-19-9M613 254l-5-13M599 183l-5-13M317 276l-21-12M681 217l-4-15M434 237l-13-18M521 238l-10-21M811 271l8-15M355 359l-19-4M356 230l-12-11M733 243l9-17M357 439l-14 5M277 417l-20 7M691 223l-4-17M228 466l-11 2M486 252l-10-14M473 201l-11-9M451 283l-14-16M361 392l-12 3M628 219l-1-12M352 282l-11-2M676 207l-3-13M702 231l2-16M725 204l1-18M372 334l-24-4M381 290l-17-13M565 205l-4-10M330 250l-14-8M406 303l-12-5M747 234l2-10M511 265l-5-12M578 179l-5-11M733 210l6-22M311 366l-14-5M270 432l-21 4M545 276l-16-12M540 173l-5-18M352 249l-15-14M244 462l-14 2M320 457l-12 2M440 301l-14 0M373 230l-20-6M327 307l-20-12M362 388l-12 2M394 382l-13 3M428 345l-10-3M350 453l-15 3M280 450l-18-2M435 235l-7-19M401 350l-20-15M702 179l-11-18M399 248l-18-14M306 442l-13 0M360 385l-23 0M341 270l-12-4M423 206l-13-12M563 232l-9-20M470 256l-11-16M422 318l-21-7M569 191l-9-10M321 516l-21 6M359 292l-17-7M683 214l-8-21M667 199l-4-16M419 221l-14-9M358 305l-10-2M425 224l-9-11M492 283l-19-12M524 199l-7-12M322 344l-11-1M767 259l5-9M342 319l-13-6M349 353l-19-15M692 248l-1-13M475 252l-19-15M785 251l3-12M382 425l-24 3M409 339l-16-15M824 276l8-11M388 273l-18-9M312 359l-19-3M482 254l-19-11M368 223l-22-12M581 188l-9-14M672 197l-2-11M351 311l-11-4M592 248l-13-11M394 224l-12-10M372 225l-15-10M334 312l-19-13M420 252l-12-13M456 194l-5-13M698 196l-2-20M472 306l-20-2M326 301l-10-2M626 197l-3-16M340 291l-14-6M319 358l-16-3M347 259l-21-10M759 212l3-15M624 261l-10-12M351 362l-12 3M588 185l-2-10M702 228l-4-9M393 245l-10-13M465 216l-18-16M313 283l-13-7M363 420l-14-3M634 249l-4-12M447 305l-21-7M333 370l-12 0M359 348l-23 3M362 271l-11-7M391 298l-15-5M805 251l1-14M633 196l-4-9M635 254l-7-10M732 214l-2-18M233 471l-23 4M362 222l-10-12M812 269l10-14M558 236l-9-13M309 357l-11-2M636 252l-2-10M355 281l-21-7M755 255l5-13M367 449l-24 6M316 526l-14 6M480 217l-15-19M376 388l-13 6M311 275l-20-1M229 462l-14-1M400 266l-11-9M487 252l-8-16M493 212l-20-14M427 200l-8-15M466 224l-6-10M527 200l-10-22M382 251l-17-18M689 186l0-10M642 171l-9-21M373 230l-8-7"/>
<path stroke="#605040" stroke-width="2.2" d="M594 200l-12-16M323 237l-13-7M340 491l-17 10M363 424l-11-2M344 405l-17-2M610 236l-10-17M324 264l-12-6M617 203l-13-17M324 341l-11-7M540 229l-5-17M288 328l-20-6M680 228l1-21M607 239l-12-17M752 198l-1-12M596 242l-13-9M417 202l-7-9M677 172l4-14M258 468l-15-3M527 246l-14-14M338 256l-13-8M595 219l-3-10M544 271l-15-12M632 207l-1-16M348 392l-18-2M281 357l-11 0M348 484l-12 4M340 338l-12 1M600 218l-6-12M302 450l-11-6M565 239l-12-14M719 189l1-13M368 430l-17 2M752 198l7-18M582 233l-4-10M794 229l3-17M335 248l-15-11M342 254l-24-6M613 244l-3-10M624 228l-8-16M710 177l8-17M344 223l-10-5M638 247l0-11M311 420l-13 4M556 251l-9-10M294 258l-15-15M262 463l-25 0M506 172l-5-9M257 440l-14-6M563 219l-6-14M569 231l-11-11M336 248l-19-16M366 222l-18-6M367 445l-14 1M601 222l-5-19M698 178l3-15M654 223l-4-12M300 323l-21-5M657 228l-2-15M533 271l-16-10M332 370l-23-2M692 238l3-10M520 271l-13-17M717 187l-1-15M367 462l-20-1M287 334l-15-7M336 270l-19-7M345 365l-21 0M323 262l-10-8M228 428l-18-4M336 385l-24-1M288 321l-13-2M573 233l-2-17M583 232l-4-16M646 205l-2-14M343 359l-10-5M344 366l-10-8M627 168l0-19M602 228l-8-16M370 431l-10 3M288 462l-13 5M509 275l-9-6M308 412l-22-3M327 305l-20-8M267 478l-14 8M758 200l2-10M778 201l5-14M476 189l-17-11M364 417l-24 6M606 224l-3-11M653 209l1-14M594 227l-1-17M328 258l-14-12M619 217l-3-9M328 456l-19 2M330 264l-18-11M613 194l-6-21M613 219l0-13M336 507l-24 6M366 217l-18-5M554 259l-9-12M512 291l-9-6M824 260l8-6M331 433l-16 4M369 226l-11-8M293 469l-19 2M639 234l-14-17M686 229l-4-20M283 269l-17-9M336 311l-24-4M521 178l-8-13M669 211l0-17M593 214l-5-8M336 328l-12-4M514 260l-7-6M390 210l-17-15M670 218l-10-15M347 436l-19-5M671 213l4-22M297 451l-23-5M648 212l-2-19M541 272l-10-9M264 451l-13-6M389 216l-18-11M505 278l-5-14M357 415l-20 2M389 209l-17-7M598 241l-14-16M562 167l-7-23M634 243l4-9M276 413l-20-6M685 234l0-21M311 469l-14 2M308 444l-20-1M265 366l-14-4M608 201l-4-16M328 276l-14-14M478 189l-16-5M474 180l-12-14M343 406l-22-6M300 307l-18-14M691 255l1-13M773 196l13-14M588 197l-10-18M531 285l-12-18M337 434l-21-4M343 338l-17-2M302 441l-22 9M327 336l-20-8M391 211l-9-7M331 417l-22-3M594 223l-13-15M340 276l-22-12M583 218l-8-12M648 216l-2-10M582 239l-10-17M264 361l-12 2"/>
<path stroke="#d09080" stroke-width="2.2" d="M628 224l-8-13M576 218l-11-11M527 287l-9-11M596 210l-11-18M562 232l-1-13M522 271l-14-9M554 237l-9-9M572 218l-9-20M528 262l-6-21M534 261l-18-14M533 279l-7-7M578 224l-10-16M554 243l-11-9M530 267l-8-6"/>
<path stroke="#503030" stroke-width="2.2" d="M223 443l-12 0M241 463l-11 5M257 397l-18-6M258 415l-13-2M272 495l-23 4M321 636l-18 5M265 415l-19-5M666 165l-4-17M257 410l-19 3M761 176l10-14M671 165l2-23M403 195l-13-11M231 467l-22 3M253 420l-24-3M432 181l-4-10M265 490l-11-4M769 179l4-14M248 407l-10 1M242 475l-20 7M446 182l-3-10M246 464l-10 1M235 448l-12 0M324 233l-20 0M271 413l-15 1M270 393l-23 0M236 453l-17 3M273 374l-19 4M268 380l-19-5M316 497l-14 2M412 189l-14-15M249 464l-20 3M408 187l-11-11M641 167l-7-20M327 489l-20 4M212 457l-21-6"/>
<path stroke="#707060" stroke-width="2.2" d="M351 493l-23 1M325 549l-17 6M787 203l5-17M347 505l-16 1"/>
<path stroke="#b08060" stroke-width="2.2" d="M313 395l-17 0M597 202l-4-14M315 358l-18-4M338 371l-17-3M338 369l-14-5M311 391l-15-2M527 236l-20-13M316 371l-19-2M304 362l-15-5M357 418l-13-4M370 438l-23 1M657 212l-2-9M299 345l-21-12M505 292l-11-12M335 338l-19-9M613 201l-8-20M347 459l-20-6M642 208l-3-21M333 316l-12-2M512 279l-17-8M334 256l-18-1M330 268l-21-5M314 255l-18-8M332 327l-15-4M330 314l-12-3M310 404l-16-2M332 278l-10-5M301 364l-12 0M370 449l-24 0M584 202l-12-16M275 423l-15 1M279 419l-11 3M331 331l-23-11M341 472l-18 5M304 261l-18 2M632 199l0-22"/>
<path stroke="#404040" stroke-width="2.2" d="M359 658l-19 9M405 669l-16 11M361 657l-15 6M328 633l-12 5M784 183l-3-19M407 674l-14 9M396 668l-14 8M353 650l-16 16M389 663l-13 8"/>
<path stroke="#402020" stroke-width="2.2" d="M164 553l-18 8M207 568l-16 6M244 508l-19 2M177 552l-14 6M256 507l-23 2M182 538l-22 5M249 605l-12 0M264 620l-10 3M272 505l-15 6M159 548l-23 2M170 553l-10 4M233 481l-22 3M166 554l-16-1M279 505l-21 1M303 563l-13 2M241 509l-13 5M275 625l-19 16M304 584l-19 9M237 494l-24 2M162 544l-24-3M972 664l9 7M237 504l-17 4M209 469l-23 2M289 505l-20 7M165 553l-15 5M303 587l-20 9M311 510l-13 5M242 509l-18 5M233 572l-23 9M243 497l-23-6M306 515l-8 8M226 451l-24-8M238 497l-23 3M237 483l-15 5M290 628l-11 3M204 468l-16 0M254 608l-24 2M249 608l-9 7M244 497l-9 5M284 499l-11 3M229 587l-22 3M194 491l-22 8M213 476l-23 1M258 592l-17 7"/>
<path stroke="#907060" stroke-width="2.2" d="M490 181l-10-13M341 419l-15-8M315 257l-15-20M332 478l-22-3M464 179l-9-8M356 225l-11-6M572 165l-4-16M676 173l-1-19M256 472l-20-1M321 464l-14 3M376 207l-18-11M308 467l-14-3M265 474l-23-3M338 401l-20-1M293 263l-10-10M626 166l-2-13M740 185l2-15M319 262l-11-10M358 214l-14-6M520 168l-9-18M441 181l-9-11M360 219l-12-9M313 279l-16-5M315 323l-10-11M367 218l-18-11M513 170l-10-11M345 218l-17-14M257 456l-15-1M254 470l-17 4M304 478l-13-1M333 424l-20-2M526 174l-5-12M289 486l-19 6M313 337l-21-7M319 259l-20-9M776 194l5-16M606 164l-7-11M317 251l-15-16M325 230l-14-3M332 230l-21-8M228 433l-13-1M533 173l-13-12M519 178l-3-14M257 460l-14 4M208 456l-13-2M297 333l-15-5M298 479l-19 7M535 170l-3-14M316 342l-16-1M262 432l-20-1M621 171l-6-13M360 459l-14 6M329 453l-16 2M750 192l7-16M375 213l-15-10M632 164l2-19M646 173l-6-19M307 314l-15-9M359 456l-21 0M667 176l2-16M652 167l-8-23M602 163l-4-12M312 286l-9-6M359 445l-11 4M307 283l-25-5M335 392l-20 1M319 276l-13 2M778 195l11-16M312 328l-14-4M282 424l-21 1M757 195l6-14M321 247l-19-6"/>
<path stroke="#302010" stroke-width="2.2" d="M211 577l-14 7M282 588l-11 11M191 517l-15-1M247 551l-22 3M188 527l-11 3M299 640l-17 9M240 546l-17 7M242 550l-10 3M305 621l-20 12M304 614l-18 6M211 510l-16 9M323 648l-12 9M277 596l-17 11M340 661l-10 11M226 542l-18 4M198 508l-16 8M232 513l-14 7M254 545l-12 3M162 545l-12 0M265 619l-15 7M304 617l-22 2M253 572l-23 3M220 581l-23 6M274 622l-14 8M234 592l-12 7M303 621l-17 8M328 653l-19 12M199 511l-19 14M198 514l-10 4M252 523l-19 8M951 683l12 9M289 639l-18 16M291 588l-25 2M298 641l-16 6M250 539l-13 5M197 514l-18 2M966 685l17 18M207 580l-12 2M247 605l-17 6M203 563l-24-4M158 552l-10 6M290 596l-12 7M210 579l-11-3M233 556l-14 4M276 579l-21 5M172 561l-23 5M251 612l-18 0M284 598l-15 6M245 606l-13 8M165 565l-18-3M247 561l-15 6M239 538l-22 1M188 511l-14 4M327 651l-17 16M201 519l-21 0M248 549l-18 3M167 557l-21 1M258 618l-18 6M280 630l-11 6M311 627l-20 14M262 618l-8 10M286 582l-23 8M295 635l-13 0M169 563l-16 0M224 595l-19 8M295 589l-19 7M169 559l-12 0M204 566l-16 14M296 617l-21 5M198 564l-14 2M277 585l-24 7"/>
<path stroke="#402010" stroke-width="2.2" d="M297 581l-12 7M231 597l-11-1M264 548l-13 10M186 554l-10 7M297 632l-16 6M290 556l-23 7M310 633l-9 5M236 513l-21 6M230 581l-16 5M282 529l-22-2M288 513l-16 5M206 568l-11 2M288 543l-16 2M269 563l-19 8M257 551l-22 7M299 570l-11 3M204 567l-24 6M262 532l-21 1M251 601l-9 7M191 494l-11 1M172 545l-10 5M286 544l-20 0M261 598l-13 4M191 551l-11 1M283 562l-20 12M279 541l-20 6M287 561l-11 7M224 577l-10 4M282 546l-23-1M243 513l-11 10M257 524l-23 2M302 644l-9 16M264 542l-12 1M303 541l-24 1M302 540l-12 1M310 637l-11 7M282 574l-21 12M308 524l-12-3M264 522l-18 3M290 528l-11 0M254 589l-16 2M193 560l-11 0M254 517l-12 1M262 530l-25 6M281 619l-23 10M266 512l-22 8M250 548l-17 4M240 583l-23 5M261 554l-9 6M300 515l-23-2M321 648l-15 18M287 574l-13 5M257 536l-12 3M286 630l-22 10M201 484l-18-2M288 570l-11 0M193 543l-15 0M288 534l-18 9M213 484l-16 0M269 609l-14 4M223 581l-13 3M191 548l-22 7"/>
<path stroke="#503020" stroke-width="2.2" d="M291 622l-13 7M252 590l-14-1M254 588l-15-1M252 561l-16 1M201 535l-17 7M304 617l-9 7M272 584l-12 5M195 519l-14 3M260 574l-11-3M236 528l-24 0M290 589l-11 5M240 546l-20 5M235 438l-18-6M213 558l-18 10M302 607l-21 9M302 493l-22 2M253 574l-10 1M249 557l-10 3M247 440l-10-4M294 592l-24 8M280 595l-17 6M223 547l-15-1M201 552l-19 2M302 613l-15 4M232 527l-19 3M229 539l-12 8M244 570l-21 3M247 569l-20 3M208 553l-20-3M294 592l-22 12M230 544l-11-1M228 518l-14 3M246 565l-24 7M242 489l-17 6M231 583l-10 3M274 605l-21 6M167 538l-20 9M267 609l-20 13M188 513l-22 7M253 591l-13 12M245 565l-13 4M260 567l-22 2M218 528l-16-3M253 591l-7 8M223 555l-19 6M294 618l-22 11M167 535l-15 3M216 564l-17 4M258 397l-21-4M212 518l-18 7M257 570l-14 0M214 519l-16 2M190 532l-18 6M181 524l-19 1M287 621l-14 9M275 615l-19 11M193 515l-16 6M244 571l-19 4M239 571l-14-2"/>
<path stroke="#c0c0d0" stroke-width="2.2" d="M357 624l-21 8M351 579l-22 10M346 530l-15 5M339 585l-12 3M382 623l-19 14M391 637l-15 15M362 608l-21 11M340 588l-15 8M346 529l-10 2M346 614l-22 9M349 603l-10 12M388 626l-14 4M383 627l-19 16M343 625l-22 2M396 652l-11 5M368 582l-22 10M345 544l-22 10M376 634l-16 9M360 616l-21 9M346 551l-25 1M355 530l-12 9"/>
<path stroke="#b09080" stroke-width="2.2" d="M823 263l15-9M341 495l-20 3M349 486l-12 4M347 486l-12 3M287 313l-11-8M207 454l-12 0M269 351l-20 4M331 513l-24-5M340 499l-12 0M806 241l12-16M280 322l-9-5"/>
<path stroke="#804030" stroke-width="2.2" d="M253 513l-19 4M266 550l-17 5M234 501l-14 0M303 523l-23-3M219 502l-14 2M263 517l-19-3M292 540l-20 7M243 505l-11 3M294 517l-21 5M207 488l-12 3M282 518l-11 7M273 531l-21 0M293 553l-23 8M308 537l-19 8M303 534l-23-2M248 506l-17-4M266 538l-16-2M288 547l-22 9M300 568l-19 14M293 548l-14 12M276 524l-19 8M270 536l-21 4M213 499l-15 3M266 552l-19 12M295 515l-20 4M288 520l-17 2M285 572l-22-4M211 488l-18 9M246 516l-14-4M276 538l-22 5M225 471l-14 3M277 519l-23 4M270 543l-21 10M202 482l-25 2"/>
<path stroke="#a08070" stroke-width="2.2" d="M602 175l-6-16M226 434l-11-3M282 459l-17 1M345 486l-22 5M273 470l-16-2M781 201l7-15M751 189l5-21M776 197l6-12M666 178l0-10M366 466l-13-2M355 218l-13-6M366 468l-18 3M292 294l-24-4M420 195l-12-13M728 185l5-16M286 444l-18 0M281 266l-11-3M553 173l-6-20M408 204l-8-6M680 178l-4-11M425 193l-11-11M270 461l-21 4M292 263l-21-6M260 376l-16-5"/>
<path stroke="#806040" stroke-width="2.2" d="M236 453l-24-5M242 425l-23 6M327 505l-23 9M264 408l-18 5M244 437l-24 5M316 487l-19-5M257 397l-11-8"/>
<path stroke="#606060" stroke-width="2.2" d="M360 646l-20 10M337 635l-15 7M326 618l-11 5M321 608l-16 5M320 553l-15 5M333 629l-12 3M370 661l-6 9M353 654l-21 8"/>
<path stroke="#303030" stroke-width="2.2" d="M351 655l-12 5M349 659l-20 1M411 670l-13 15M402 675l-13 7M374 668l-20 13M332 642l-19 11"/>
<path stroke="#704020" stroke-width="2.2" d="M295 535l-19-3M206 480l-16 1M219 486l-12 2M204 483l-19-2M291 532l-19 6M275 592l-22 2M285 600l-12 5M291 529l-22 10M192 520l-17 7"/>
<path stroke="#706050" stroke-width="2.2" d="M414 269l-20-12M500 191l-12-14M749 214l8-14M495 190l-15-16M455 293l-19-9M291 280l-15-1M775 221l10-18M789 265l4-11M438 322l-13-6M429 280l-17-17M763 228l8-14M751 241l4-16M280 318l-15-10M270 343l-18-6M786 251l9-16M746 211l3-18M420 286l-19-13M767 223l0-11M659 182l-5-20M780 232l5-15M781 226l12-12M436 349l-16-12M420 329l-12-7M580 179l-6-21M799 251l13-15M295 287l-13-2M792 263l2-14M432 252l-14-7M424 268l-12-13M363 475l-13 3M429 309l-23-6M786 228l9-15M491 213l-7-13M480 232l-20-12M414 280l-10-13M772 235l6-15M753 258l4-20M261 375l-14-3M420 341l-19-15M741 223l6-14M474 232l-14-7M477 202l-16-10M743 212l1-10M467 231l-9-12M445 249l-12-5M417 260l-19-14M417 329l-14-4M432 263l-10-13M463 225l-17-13M465 310l-13-10M736 221l3-11M747 210l3-9M586 179l0-24M296 311l-16-1M437 236l-17-14M455 256l-12-10M766 256l6-8M424 333l-23-5M492 205l-10-21M628 180l1-17M448 327l-10-3M428 287l-12-9M464 316l-22-8M461 330l-20-8M297 467l-13-5M474 211l-12-15M693 191l0-12M452 315l-16-6M438 295l-12-10M446 230l-10-10M420 345l-24-5M830 265l7-18M313 580l-15 12M415 255l-17-18M455 236l-12-7M515 192l-7-15M472 254l-8-7M281 459l-24-1M281 322l-22-10M755 249l8-10M798 244l4-20M728 201l4-12M461 263l-15-9M425 303l-22-7M441 226l-9-11M776 251l7-18M464 277l-12-5M296 292l-14-4M747 239l4-19M483 226l-4-14M446 294l-10-21M458 273l-16-16M497 189l-15-17"/>
<path stroke="#b0c0c0" stroke-width="2.2" d="M372 639l-16 6M331 599l-21 7M345 530l-17 6M335 562l-19 3M337 615l-15 4M388 646l-9 5M345 621l-11 6"/>
<path stroke="#b0b0a0" stroke-width="2.2" d="M848 257l11-16M821 241l9-17M821 218l4-12M832 248l6-10M819 244l10-8M831 227l14-17M841 246l11-9M264 298l-19-9M819 217l4-16"/>
<path stroke="#909090" stroke-width="2.2" d="M356 506l-20 0M334 608l-20 8M339 533l-21 7M327 572l-7 11M330 583l-20-2M331 563l-10 3M350 510l-16 6M391 660l-11 6M332 630l-11 6M349 503l-13 0M338 528l-20 7M360 652l-18 2M409 664l-20 14"/>
<path stroke="#a0a0b0" stroke-width="2.2" d="M353 605l-18 11M355 589l-24 5M341 534l-18 5M357 527l-14 3M329 600l-11 9M325 589l-11 6M362 636l-17 15M345 592l-17 7M374 600l-20 15M336 538l-20 9M359 503l-15 7M356 611l-11 4M378 615l-11 13M364 602l-16 5M371 615l-22 5M364 569l-23 3M368 626l-14 14M359 608l-23 2M353 537l-15 13M351 593l-13 3M388 633l-14 7M376 625l-17 13M381 615l-12 6"/>
<path stroke="#b09070" stroke-width="2.2" d="M294 447l-12-2M674 181l2-20M506 291l-11-4M306 445l-12 0M287 324l-13-7M789 227l9-10M506 299l-9-15M298 424l-20-10M299 460l-10 0M670 215l-1-16M234 421l-10-4M534 231l-15-14M700 246l8-19M509 279l-11-9M595 198l-3-11"/>
<path stroke="#502010" stroke-width="2.2" d="M177 530l-24 7M224 571l-14 2"/>
<path stroke="#301010" stroke-width="2.2" d="M275 610l-16 4M197 568l-15-1M318 650l-15 8M189 558l-15 5M283 645l-9 10M173 531l-21 11M171 537l-21-1M296 643l-11 7M287 617l-13 8M271 600l-12 9M268 630l-23 10M314 643l-11 9M187 561l-20 0M292 607l-10 3M211 546l-17 1M223 602l-16 12M208 544l-16 9M178 538l-20 7M256 621l-21 12M287 640l-17 6M242 577l-10 7M205 531l-12 8M262 624l-17 3M240 579l-16 2M188 533l-21 0M294 622l-11 10M195 577l-17 16M187 566l-12 1M190 565l-19 4M243 614l-16 0M217 558l-18 9M233 569l-21 10M241 613l-20 12M195 534l-19-4M289 619l-15 5M256 624l-13 6M212 551l-17 1M296 648l-17 16M214 594l-17 6M238 609l-22 6M219 602l-14 5M184 565l-18 8M260 591l-21 12M199 534l-15 8M219 567l-13 13"/>
<path stroke="#a08080" stroke-width="2.2" d="M342 497l-12-1M317 566l-22 7M808 235l6-9M325 528l-11 5"/>
<path stroke="#a09090" stroke-width="2.2" d="M321 600l-20 1M847 275l16-13M340 504l-14 1M328 625l-14 1M317 589l-20 11M277 291l-9-5"/>
<path stroke="#d0a080" stroke-width="2.2" d="M561 274l-8-9M612 248l-9-19M605 262l-2-14M583 234l-10-16M658 251l3-20M599 227l-8-18M612 258l-3-9M581 253l-6-12M536 278l-13-14M789 224l4-17M632 227l-3-19M565 257l-5-15M620 241l-6-7M592 227l-8-15M556 269l-4-11M589 257l-10-17M654 239l-3-19M606 226l-5-15M629 234l-8-16M579 260l-13-16M612 227l-12-17"/>
<path stroke="#703020" stroke-width="2.2" d="M260 541l-15 3M273 537l-10 8M277 540l-22 7M268 541l-21 6M285 570l-19 11M296 588l-10 4M292 548l-17 3M284 576l-14 3M268 548l-10 6M244 516l-18 9M294 571l-21 11M291 548l-22 8M264 524l-20 8M269 550l-21-2M293 537l-12 2M259 539l-16-3M289 539l-23 5M298 562l-23 10M285 578l-12 5M206 529l-16 3M292 560l-24 0M257 527l-19 2M279 552l-13 2M268 573l-13 10M259 557l-21 9"/>
<path stroke="#d0e0f0" stroke-width="2.2" d="M390 637l-19 11M365 572l-14 7M369 627l-19 10M358 625l-22 7M349 617l-21 12M346 542l-19 11M339 595l-10 7M359 598l-16 3M346 595l-15 9M347 575l-13 3M365 623l-11 4M369 592l-16 10M368 621l-20 11M356 552l-15 8"/>
<path stroke="#403030" stroke-width="2.2" d="M307 238l-18-13M208 459l-15 2M323 633l-14 3M437 181l-9-15M388 196l-16-9M502 170l-10-8M724 170l5-11M401 189l-7-14M307 589l-9 5M309 572l-11 4M711 173l-1-18M297 237l-10-8M288 251l-14-4M323 628l-7 11M754 176l-3-19M520 168l-15-18M658 163l10-21M453 179l-5-9M322 518l-20 7M314 613l-12 13M250 476l-19 3M303 236l-11-12M257 493l-18 3M339 218l-9-5M778 182l9-12M293 247l-17-2M372 197l-13-7M764 177l2-16M390 671l-19 11M314 618l-13 9"/>
<path stroke="#906050" stroke-width="2.2" d="M333 487l-19 1M281 479l-25-2M288 381l-12-5M269 410l-24-3M299 388l-23-1M245 415l-24-3M251 439l-16-2M286 381l-12 4M281 408l-14-5M281 367l-19-5M287 375l-21 2M291 364l-19-2M266 435l-24-5M259 397l-21-1M240 457l-17 2M295 409l-18-2M266 406l-16-4M247 422l-15 1M257 408l-25 1M248 436l-16-10M285 397l-14-7M250 412l-24 4M358 217l-10-15M301 386l-16-10M286 366l-17-2M286 373l-23-2M276 417l-21-1M259 391l-21-5M297 485l-23 0M245 439l-20 6M288 395l-11-2M262 396l-16 0M337 478l-19 2"/>
<path stroke="#b0b0b0" stroke-width="2.2" d="M847 247l12-14M353 643l-11 9M341 527l-10 3M337 538l-8 6"/>
<path stroke="#907050" stroke-width="2.2" d="M300 353l-17-7M285 415l-18-11M302 340l-21-6M318 373l-15-2M309 372l-21 1M337 466l-18 2M280 370l-13-1M309 393l-23-1M255 477l-24-6M281 391l-22-8M314 379l-17-4M303 361l-18-16M313 487l-13 2"/>
<path stroke="#908070" stroke-width="2.2" d="M224 433l-17-5M275 328l-20-4M837 267l9-5"/>
<path stroke="#706040" stroke-width="2.2" d="M573 270l-17-9M610 257l-8-4M573 273l-6-13M602 257l-8-9"/>
<path stroke="#d0d0e0" stroke-width="2.2" d="M351 517l-20 1M363 639l-18 13M336 614l-15 9M355 506l-16 4M336 602l-21 6M347 522l-18 0"/>
<path stroke="#302020" stroke-width="2.2" d="M398 678l-12 5M336 658l-13 7M966 678l12 7M271 504l-19-1M321 634l-18 6M356 665l-19 4M961 690l15 4M256 503l-8 8"/>
<path stroke="#100000" stroke-width="2.2" d="M212 688l-11 8M175 689l-19-2M298 689l-13 9"/>
<path stroke="#a07050" stroke-width="2.2" d="M277 392l-11 0M297 388l-21 3M260 415l-11-4"/>
<path stroke="#fff0e0" stroke-width="2.2" d="M263 321l-17-12"/>
<path stroke="#b0b0c0" stroke-width="2.2" d="M377 616l-17 8M381 629l-10 4M383 652l-17 13M404 658l-8 7M347 576l-17 4M356 637l-15 9M357 575l-12 4M346 576l-23 5M406 656l-23 7M383 618l-10 6M357 593l-18 3M345 613l-15 9M326 589l-10 5M380 654l-16 6M361 545l-12-4M380 628l-12 5M352 577l-23 8M365 594l-9 10M331 561l-13 3M351 581l-17 2M339 585l-12 3M347 634l-9 7M343 562l-21 9M358 545l-16 6M343 565l-23 6M365 629l-8 8M336 551l-12 2M388 641l-10 7M384 652l-16 9"/>
<path stroke="#706060" stroke-width="2.2" d="M786 191l-1-13M323 625l-12 3M318 590l-18 2M326 629l-17 10M283 301l-11 0M279 268l-22-10M358 489l-24-3M782 182l10-17M349 500l-18 9M275 324l-24-5"/>
<path stroke="#705030" stroke-width="2.2" d="M311 535l-16 2"/>
<path stroke="#807060" stroke-width="2.2" d="M813 244l9-14M811 246l2-11M782 199l2-14M285 291l-20-6M282 273l-16-10M256 379l-16-4M836 270l15-11M315 601l-22 9M314 590l-23 5"/>
<path stroke="#c0b0b0" stroke-width="2.2" d="M339 514l-13-1M339 518l-16 2M347 509l-21 1M849 273l11-7"/>
<path stroke="#a0b0b0" stroke-width="2.2" d="M338 608l-17 4M338 560l-12 7M337 601l-16 12M335 557l-12 4M338 620l-16 17M357 518l-20 8M366 642l-17 18"/>
<path stroke="#909080" stroke-width="2.2" d="M834 250l5-10M844 235l15-14M273 277l-14-3M826 246l9-9M263 346l-18-3M841 261l4-9M838 243l7-10M834 227l7-19M840 247l7-9M833 252l7-7"/>
<path stroke="#502020" stroke-width="2.2" d="M169 534l-11 4M203 561l-21 13M167 539l-15 8M297 608l-18 4M198 546l-12 5M197 516l-17-4M209 534l-22 7M180 529l-20-2M255 585l-13 7M220 558l-14 5M207 535l-24 1M195 529l-21 4M211 568l-19 9"/>
<path stroke="#a09080" stroke-width="2.2" d="M810 238l4-13M278 292l-15-5M796 219l6-14M343 499l-9 5M847 287l10-14M265 339l-17-15M318 560l-22-7M275 317l-11-2"/>
<path stroke="#704040" stroke-width="2.2" d="M303 503l-10 1M217 457l-14-1M306 599l-15 10M276 498l-23-2M307 599l-11 3M219 457l-25-1M254 500l-18 6M273 498l-12 2"/>
<path stroke="#a0a090" stroke-width="2.2" d="M833 230l6-15M834 263l10-8M272 296l-21-8M826 225l11-18M818 225l5-13"/>
<path stroke="#201000" stroke-width="2.2" d="M230 595l-24 6M179 688l-13 5M295 640l-13 3M251 614l-10 6M218 593l-14 6M273 628l-12 2M156 694l-11 9M167 690l-15 7M246 613l-22 11M306 642l-19 6M252 691l-8 8M283 637l-18 5"/>
<path stroke="#707070" stroke-width="2.2" d="M401 668l-9 7M326 610l-19 5M351 642l-15 7M328 542l-17 3M341 637l-7 12M322 584l-17 5M415 667l-21 5M400 658l-17 15"/>
<path stroke="#505040" stroke-width="2.2" d="M362 662l-13 14M330 519l-19 3"/>
<path stroke="#c0c0c0" stroke-width="2.2" d="M368 646l-11 5M376 651l-15 15M328 568l-23 8M844 250l11-15M837 240l6-9M347 512l-11-2"/>
<path stroke="#805050" stroke-width="2.2" d="M262 488l-14-2M361 201l-10-8M366 199l-12-5M296 486l-19 2M326 228l-19-1M247 451l-16 2M262 487l-23 2M328 504l-17 0"/>
<path stroke="#c0a080" stroke-width="2.2" d="M830 269l11-17M300 442l-21-2M292 293l-10-4M294 457l-22 0M298 451l-20 3M791 223l2-16M267 358l-15-3"/>
<path stroke="#d0d0d0" stroke-width="2.2" d="M846 244l9-18M325 559l-9 7M340 535l-15 6M343 528l-14-3M338 537l-11 4M340 531l-18-1M345 525l-16 10"/>
<path stroke="#404030" stroke-width="2.2" d="M393 674l-13 8M351 659l-9 8M316 551l-17 16M420 675l-11 9"/>
<path stroke="#d0e0e0" stroke-width="2.2" d="M337 559l-17 12M344 533l-22 3M376 650l-14 11M389 644l-14 8M339 605l-24 4M394 646l-19 12M337 609l-19 13M358 635l-17 10"/>
<path stroke="#503010" stroke-width="2.2" d="M233 579l-10 5M178 535l-21 2M239 583l-13 1M250 593l-10 3M235 585l-16 5"/>
<path stroke="#202020" stroke-width="2.2" d="M391 676l-7 15M362 664l-16 17"/>
<path stroke="#603030" stroke-width="2.2" d="M183 511l-22 2M186 507l-21 8M171 528l-16 0M302 588l-11 3M263 510l-11 2"/>
<path stroke="#c0b090" stroke-width="2.2" d="M263 356l-14-7"/>
<path stroke="#b0a0a0" stroke-width="2.2" d="M320 568l-21 9M268 299l-14 1M338 514l-20 7M340 634l-12 8M260 322l-12-4"/>
<path stroke="#d0c0b0" stroke-width="2.2" d="M788 202l-3-22M801 197l3-18M814 218l9-19M277 291l-23-5"/>
<path stroke="#805030" stroke-width="2.2" d="M218 469l-14 0M300 507l-20-4M306 515l-11 4"/>
<path stroke="#90a0a0" stroke-width="2.2" d="M335 564l-21 3M349 525l-20 7M354 627l-20 5M335 584l-16 7M348 618l-13 10M341 615l-21 13M339 620l-14 6M334 616l-20 3M348 540l-10 2M391 653l-16 6"/>
<path stroke="#a07070" stroke-width="2.2" d="M346 486l-14 0M395 200l-13-9M679 173l2-14"/>
<path stroke="#a0a0a0" stroke-width="2.2" d="M332 627l-13 10M361 496l-11 7M332 560l-24 6M323 558l-18 2M327 594l-22 10M359 492l-21 1M352 646l-13 8M353 501l-13 5M352 636l-14 11M388 657l-13 10M340 584l-13 6"/>
<path stroke="#907070" stroke-width="2.2" d="M286 261l-24-5M785 200l6-10M313 583l-11 8"/>
<path stroke="#809090" stroke-width="2.2" d="M396 664l-21 13M360 643l-13 7"/>
<path stroke="#605050" stroke-width="2.2" d="M324 622l-17 15M350 652l-18 2M343 497l-19 8M374 665l-16 8M324 535l-20 9M328 637l-10 5M327 528l-13 0M328 532l-15 4M318 603l-17 9M320 548l-18 4M328 536l-20 3"/>
<path stroke="#807070" stroke-width="2.2" d="M336 639l-13 6M349 646l-17 4M328 541l-15 1M350 647l-10 4M333 523l-13-1M332 637l-14 12M339 515l-19 6"/>
<path stroke="#905040" stroke-width="2.2" d="M312 519l-11 7M309 511l-17 2M311 515l-23 2M222 464l-17-2"/>
<path stroke="#e0e0c0" stroke-width="2.2" d="M794 200l18-14"/>
<path stroke="#c0c0b0" stroke-width="2.2" d="M261 301l-20-13M844 252l10-13M272 304l-11-3M827 242l13-16M271 314l-18-16M846 255l15-16M271 286l-11-5M820 220l2-13M798 213l1-15"/>
<path stroke="#c0b0a0" stroke-width="2.2" d="M799 216l10-10M266 318l-24-4M262 330l-17-3M826 252l5-12"/>
<path stroke="#e0e0e0" stroke-width="2.2" d="M334 533l-15 7"/>
<path stroke="#404050" stroke-width="2.2" d="M402 665l-13 19"/>
<path stroke="#c0d0d0" stroke-width="2.2" d="M335 618l-14 7M387 649l-15 10M392 651l-19 13M329 578l-9 5"/>
<path stroke="#908080" stroke-width="2.2" d="M325 567l-21 1M322 541l-11 2M345 641l-23 10M837 264l4-14M831 255l4-15"/>
<path stroke="#c08070" stroke-width="2.2" d="M338 273l-19-1M341 346l-12-9M339 339l-11-9M337 335l-11-5"/>
<path stroke="#805040" stroke-width="2.2" d="M254 401l-23-4M319 630l-11 10M245 437l-16 0M260 492l-17 4M253 406l-24-3M314 623l-17 11M235 433l-17 10M257 505l-22 1M304 576l-19 8M240 421l-13 5M229 459l-16 0"/>
<path stroke="#906060" stroke-width="2.2" d="M721 174l6-19M710 179l1-14M645 167l-1-11M345 219l-10-11M696 173l14-10M711 175l-2-11M404 197l-7-18M494 176l-12-9M415 187l-8-7M377 203l-19-14M352 211l-14-8M348 214l-17-6M765 186l4-18M481 178l-10-16"/>
<path stroke="#d0c0a0" stroke-width="2.2" d="M795 219l2-15"/>
<path stroke="#e0e0d0" stroke-width="2.2" d="M825 238l10-9M822 232l10-17M272 286l-10-6M793 193l6-17"/>
<path stroke="#505060" stroke-width="2.2" d="M410 670l-12 12"/>
<path stroke="#808080" stroke-width="2.2" d="M389 663l-15 17M343 630l-11 4M848 251l6-8M322 590l-22 8M365 654l-11 7M407 665l-16 10"/>
<path stroke="#303020" stroke-width="2.2" d="M420 678l-12 2M364 661l-22 8M367 669l-10 14M391 676l-12 12M325 637l-17 11"/>
<path stroke="#e0d0c0" stroke-width="2.2" d="M281 300l-11-2M257 356l-23-8M271 313l-22-8M275 272l-10-9M271 297l-10-10M848 283l8-6M812 212l16-15"/>
<path stroke="#f0d0c0" stroke-width="2.2" d="M788 209l4-10"/>
<path stroke="#c0a090" stroke-width="2.2" d="M289 303l-14-7M273 337l-23-5M281 278l-24 1M267 355l-20-7"/>
<path stroke="#d0b0a0" stroke-width="2.2" d="M828 260l12-14M848 285l12-15"/>
<path stroke="#606070" stroke-width="2.2" d="M362 645l-7 9"/>
<path stroke="#f0f0e0" stroke-width="2.2" d="M270 285l-21-10M262 320l-25-1"/>
<path stroke="#606050" stroke-width="2.2" d="M327 532l-21 4M362 660l-21 6M353 489l-22 7"/>
<path stroke="#b0a090" stroke-width="2.2" d="M280 301l-9-6M279 309l-14-5M272 328l-13-5M838 270l8-7M278 303l-20 1"/>
<path stroke="#604020" stroke-width="2.2" d="M218 544l-15 5M215 545l-11 6"/>
<path stroke="#b0c0d0" stroke-width="2.2" d="M395 642l-15 6"/>
<path stroke="#9090a0" stroke-width="2.2" d="M390 651l-24 6M333 596l-12 5"/>
<path stroke="#f0e0e0" stroke-width="2.2" d="M270 293l-18-7"/>
<path stroke="#403010" stroke-width="2.2" d="M312 637l-11 8M277 617l-14 4"/>
<path stroke="#e0e0f0" stroke-width="2.2" d="M343 542l-23 2"/>
<path stroke="#e0c0a0" stroke-width="2.2" d="M819 252l7-14"/>
<path stroke="#b07060" stroke-width="2.2" d="M300 396l-23-1M331 474l-16 5"/>
<path stroke="#d0a090" stroke-width="2.2" d="M793 225l11-14"/>
<path stroke="#c09090" stroke-width="2.2" d="M336 507l-19-3"/>
<path stroke="#d0b0b0" stroke-width="2.2" d="M361 480l-24-4"/>
<path stroke="#f0e0c0" stroke-width="2.2" d="M268 339l-22-3"/>
<path stroke="#e0d0b0" stroke-width="2.2" d="M799 225l2-19"/>
<path stroke="#804040" stroke-width="2.2" d="M236 496l-16 2"/>
<path stroke="#d0b090" stroke-width="2.2" d="M287 291l-23-6"/>
</g>
<g filter="url(#b2)" fill="none" stroke-linecap="round" stroke-width="3" opacity=".7">
<path stroke="#d0d0c0" d="M172 457l-9-1M243 267l3-14M77 251l-11-12M218 326l-7-8M29 257l-19-3M225 321l-13-11M63 350l-15-11M156 468l-7 2M219 339l-10-7M151 248l-10-9M95 463l-13 2M164 469l-7 3M252 301l-4-16M173 484l-9 3M138 250l-5-15M60 280l-11-7M262 292l-3-13M164 224l-6-9M108 490l-11 2M173 487l-7 3M178 357l-16-5M223 315l-5-11M245 313l-3-14M117 472l-9 6M166 233l-1-18M187 424l-8-3M32 269l-14-17M65 271l-11-6M61 297l-12-11M109 511l-8 5M189 419l-12 0M69 257l-9-6M129 248l-11-8M188 234l-4-13M226 326l-7-9M229 402l-14-4M70 249l-13-13M225 411l-8-2M84 245l-19-9M231 311l-2-7M81 262l-9-12M193 388l-7-3M183 420l-8-3M123 484l-16 7M155 229l-4-12M105 218l-9-20M223 329l-4-8M119 557l-11 14M123 469l-19 4M173 492l-9 3M239 319l-6-9M175 366l-10-6M87 269l-14-16M144 481l-13 9M196 360l-5-11M51 265l-14-12M251 248l-1-15M104 236l-15-17M146 236l-12-19M174 486l-8 7M195 388l-12-4M61 274l-14-15M155 218l-11-14M84 218l-13-11M96 482l-20 5M54 285l-12-9M176 460l-17 3M176 377l-11-7M223 415l-15 0M201 244l-4-12M221 272l0-19M101 252l-16-7M169 471l-10 4M220 299l-2-8M56 328l-21-4M178 369l-12-5M229 406l-11-6M186 448l-7 2M185 231l-11-15M100 486l-10 7M144 476l-16 9M182 345l-9-7M182 224l-4-10M169 245l-5-12M195 357l-8-4M149 530l-6 9M132 239l-9-11M169 234l-5-9M192 388l-11-8M51 326l-16-6M129 262l-10-10M223 295l-9-10M163 502l-7 10M145 467l-14 0M226 296l-4-16M188 234l-7-9M249 326l-5-7M112 544l-17 10M186 471l-5 5M53 293l-11-11M57 267l-13-10M137 229l-15-16M113 475l-19 6M37 255l-22-9M51 239l-19-13M220 349l-6-6M207 340l-11-10M211 235l-3-12M184 471l-13 10M125 234l-16-16M238 253l-4-8M232 304l-5-9M172 227l-9-13M181 483l-10 4M195 222l-12-16M82 244l-20-6M51 277l-10-13M177 464l-12 10M55 297l-8-8M214 327l-8-11M134 243l-15-9M74 219l-17-3M181 362l-14-3M224 418l-15-1"/>
<path stroke="#d0c0b0" d="M165 371l-12-6M131 254l-8-11M194 221l-17-13M29 274l-20-15M70 321l-18-5M272 268l5-16M56 296l-21-11M182 376l-10-3M105 260l-15-13M77 378l-10-1M167 372l-7-4M125 475l-7 6M181 241l-8-7M187 341l-10-6M160 473l-6 6M113 538l-15 13M247 369l-5-6M142 488l-8 9M78 353l-18-3M152 465l-17 8M95 442l-17 4M182 443l-15-1M262 288l-2-18M74 226l-11-16M65 290l-15-15M66 300l-22-3M184 342l-9-2M78 420l-19-2M191 251l-8-16M105 465l-11 4M153 460l-11 1M185 261l-7-12M119 573l-7 8M125 480l-15 2M167 431l-11 4M201 236l-5-20M218 284l-7-11M208 320l-9-8M183 443l-7 2M144 262l-6-12M73 253l-16-16M217 430l-8-1M168 367l-11-5M174 444l-13 1M148 212l-15-14M99 466l-20 2M187 387l-13-2M174 243l-13-13M194 255l-8-13M156 449l-8 3M152 212l-14-11M181 379l-8-6M140 460l-9 0M119 557l-19 6M172 427l-9 0M215 347l-6-8M190 378l-15-2M185 225l-15-14M188 362l-13-11M200 365l-7-9M40 285l-24 2M59 349l-11-4M182 426l-10 1M186 397l-13-5M185 382l-12-8M222 306l-4-8M219 294l-6-8M111 272l-8-14M99 499l-8 9M69 297l-15-6M190 422l-10-3M117 475l-8 3M164 222l-10-10M71 282l-8-5M235 396l-6-4M255 255l-1-8M100 502l-12 10M190 449l-13 4M251 375l-3-9M190 225l-1-10M94 273l-12-10M133 464l-12 8M122 235l-7-11M244 372l-5-4M173 408l-10 2M96 450l-19 5M244 390l-11-5M221 424l-13 5M235 299l-2-8M213 313l-11-12M94 441l-18-4M93 275l-15-9M116 253l-11-8M232 402l-7-3M228 400l-13-5M222 272l-7-9M57 264l-11-5M111 479l-17 5M210 319l-6-16M84 272l-15-6M233 237l-5-7M168 435l-13 2M43 321l-19-12"/>
<path stroke="#c0b0a0" d="M166 377l-14-10M151 345l-6-9M54 348l-12-3M217 436l-11 3M148 251l-7-10M74 343l-15-10M80 299l-10-4M178 400l-14-2M168 360l-16-4M119 209l-10-8M178 352l-8-5M139 261l-10-8M56 345l-19-8M161 265l-11-17M178 258l-9-14M180 426l-13 2M141 543l-10 7M81 367l-15-8M223 423l-8 2M160 436l-15 3M64 374l-15-5M65 365l-8-4M192 470l-14 6M240 400l-9-1M134 210l-6-12M177 358l-17-2M123 209l-9-18M73 300l-11-4M108 527l-20 8M98 443l-17 2M196 257l-7-18M121 575l-10 2M75 344l-8-6M176 375l-8-1M186 347l-7-5M76 410l-11 1M182 404l-11 1M60 350l-11-5M172 433l-14 6M83 424l-12 3M196 215l-3-17M168 505l-12 9M162 447l-17 5M168 506l-9 7M74 371l-16-4M93 274l-15-16M128 463l-17 6M185 216l0-12M83 431l-20 1M255 250l-4-12M74 380l-10 3M81 421l-19 3M70 370l-15-3M134 457l-15 4M212 438l-9 3M85 438l-9-1"/>
<path stroke="#c0c0b0" d="M196 329l-10-11M127 530l-15 6M126 214l-8-22M57 231l-15-9M178 453l-12 8M76 304l-10-5M205 321l-12-12M42 300l-14-12M141 248l-7-8M61 253l-13-17M152 511l-11 9M130 494l-14 12M253 364l-5-9M137 251l-18-12M154 505l-12 7M211 423l-12 1M159 471l-17 5M58 315l-16-13M30 272l-17-17M101 277l-6-9M187 226l-10-15M243 325l-7-12M226 398l-6-2M46 288l-21-10M169 356l-14-10M59 355l-11-1M59 345l-18-2M71 258l-11-11M144 492l-9 0M196 426l-9-3M133 465l-10 6M157 506l-10 10M80 287l-17-8M148 537l-9 8M87 243l-9-9M67 351l-11-6M246 334l-8-10M113 250l-3-11M53 250l-17-14M205 417l-6 0M71 274l-10-5M73 333l-11-7M121 555l-17 9M105 483l-8 4M79 220l-11-13M216 229l-2-13M177 451l-7 2M222 331l-5-9M203 273l-5-8M215 391l-10-6M253 261l-6-12M237 269l-6-17M143 538l-10 5M132 219l-12-18M109 516l-11 5M218 250l-6-8M60 250l-8-6M94 224l-13-11M59 357l-20-6M114 476l-14-2M183 477l-9 9M74 236l-9-9M49 233l-7-7M63 233l-7-16M147 489l-15 2M146 240l-10-13M187 335l-12-10M52 327l-19-11M128 224l-8-19M130 530l-12 9M65 373l-15-6M243 307l-6-10M62 369l-17 0M271 276l-2-16M135 518l-13 5M80 220l-16-18M64 224l-15-14M156 455l-8 7M143 253l-10-11M139 482l-10 8M224 304l-7-15M212 419l-14 1M213 242l-4-9M168 259l-4-9M194 383l-15-4M181 431l-10-2M223 283l-3-8M198 362l-10-6M102 455l-10 4M127 536l-11 4M215 386l-12-9M238 379l-7-12M80 239l-13-13M212 322l-9-7M171 239l-9-10M230 273l-3-12M251 309l-2-7M121 493l-9 5M198 385l-6-3M210 347l-8-5M177 469l-11 6M74 240l-12-15M78 281l-15-10M122 474l-15 1M241 338l-5-9M64 267l-22-8M177 482l-7 5M115 486l-16 8M108 245l-11-7M64 375l-12 0M243 304l-7-5M61 347l-14-2M211 380l-11-2M190 461l-11 4M201 399l-11-3M150 262l-8-9M68 279l-18-12M245 300l-6-16M210 312l-7-9M133 477l-16 3M135 487l-16 6M251 353l-7-9M218 287l-7-12M147 530l-9 6M160 237l-3-11M71 249l-15-10M138 503l-8 6M105 478l-12 5M239 367l-8-5M123 570l-8 6M217 395l-7-2M173 424l-12-2M195 410l-14-7M124 511l-12 9M148 480l-12 6M159 487l-10 7M240 302l-4-12M135 481l-17 4M108 484l-11 7M102 227l-8-13M97 459l-15 1M207 249l-2-10M114 518l-7 7M109 478l-17 6M225 384l-14-4M170 468l-10 7M238 330l-5-9M110 557l-12 11M209 287l-11-8M210 427l-13-1M107 537l-13 14M162 515l-7 6M203 442l-8 7M187 255l-3-12M123 516l-16 13M209 228l1-13M37 270l-21-13M41 239l-15-12M234 364l-4-8M73 231l-12-10M145 235l-6-16M144 534l-14 12M131 511l-12 6M165 474l-15 6M118 559l-12 14M101 513l-9 3M247 342l-3-15M36 264l-19-9M195 257l-8-15M59 258l-15-16M110 539l-11 5M103 512l-10 7M202 391l-14-6M176 244l-6-8M107 497l-10 6M212 274l-5-12M224 371l-11-7M102 503l-14 2M254 334l-2-9M117 575l-9 9M241 327l-5-10"/>
<path stroke="#908080" d="M138 307l-6-7M210 217l-4-11M149 259l-11-14M145 307l-13-8M176 279l-14-14M174 275l-7-12M109 278l-4-11M203 454l-11 5M98 287l-12-11M161 291l-7-8M181 282l-8-14M143 267l-15-15M171 335l-9-8M254 248l-5-14M181 296l-5-15M128 281l-13-11M188 476l-11 12M271 265l2-11M105 308l-8-6M157 345l-12-8M128 263l-16-8M146 328l-10-8M203 452l-7 1M73 331l-10-4M109 553l-19 11M110 296l-19-8M104 316l-11-6M193 471l-12 1M142 276l-18-10M159 316l-8-5M162 275l-7-13M96 314l-9-9M170 300l-7-12M171 311l-14-9M76 327l-17-1M203 315l-13-9M105 296l-19-7M143 262l-7-10M126 282l-12-12M45 322l-22-8M190 475l-4 7M152 261l-11-11M74 327l-10-5M178 494l-12 6M184 278l-9-7M142 324l-13-8M144 329l-9-2"/>
<path stroke="#706060" d="M183 299l-9-10M154 282l-11-10M251 239l-3-10M121 287l-16-10M205 214l-2-10M159 277l-16-6M168 294l-8-7M194 302l-5-6M136 278l-16-10M223 218l-3-13M183 314l-5-6M92 319l-10-12M259 244l1-12M186 285l-8-14M99 307l-12-10M175 294l-10-12M133 309l-8-6M125 281l-13-8M107 310l-13-16M223 218l-4-11M105 291l-14-7M139 294l-10-6M112 312l-15-7M173 286l-5-12M135 316l-15-1M199 461l-6 5M90 313l-14-5M179 277l-9-6M144 318l-18-1M107 317l-14-9M141 327l-18-4M106 312l-11-8M190 300l-11-12M103 311l-14-9M139 276l-9-8M94 322l-18-10M162 272l-5-18M186 289l-10-14"/>
<path stroke="#908070" d="M222 221l-5-15M134 346l-17-4M246 395l-9-3M78 334l-19-2M138 327l-10-6M239 235l-4-11M87 347l-12-6M106 317l-15-2M73 405l-13-4M225 426l-8 2M229 224l1-10M198 464l-8 4M67 389l-10-2"/>
<path stroke="#b0b090" d="M163 407l-14 1M144 448l-11 2M93 435l-10-7M159 352l-12-5M72 376l-10-2M80 410l-20-5"/>
<path stroke="#d0c0c0" d="M225 416l-12 1M226 280l-6-10M80 269l-13-9M234 352l-6-5M119 523l-11 9M110 223l-4-13M226 338l-11-9M207 397l-8-3M233 327l-6-9M203 311l-1-8M215 226l-8-18M122 267l-17-12M29 277l-11-8M145 504l-7 4M92 271l-7-6M76 239l-19-13M238 235l-7-16M178 463l-14 1M68 289l-15-10M35 257l-19-13M140 249l-6-7M102 253l-4-13M105 513l-17 8M116 234l-5-16M119 542l-11 4M55 264l-22-3M196 403l-10-1M127 544l-10 11M39 240l-23-10M93 233l-10-20M261 253l-6-17M109 224l-14-3M231 381l-8-3M48 313l-21-5M218 318l-10-12M144 511l-11 3M250 335l-7-13M215 380l-8-4M81 235l-11-7M112 518l-8 5M205 408l-11 3M131 545l-13 5M221 242l-1-19M179 213l-10-12M201 376l-8-10M232 372l-7-3M139 506l-16 5M117 497l-13 5M185 454l-13 2M67 246l-16-8M187 451l-7 0M187 472l-11 5M134 503l-14 5M122 534l-8 5M75 220l-12-12M129 538l-11 7M199 425l-12 1M42 261l-19-8M209 300l-9-14M64 300l-11-9"/>
<path stroke="#f0e0d0" d="M103 237l-8-11M102 221l-15-17M116 499l-12 3M227 333l-7-10M168 493l-8 6M209 376l-11-8M87 243l-12-19M79 248l-16-11M145 226l-12-15M237 353l-7-10M70 269l-20-4M63 242l-14-8M189 417l-12 0M133 507l-13 5M186 371l-12-10M82 259l-11-11M133 219l-7-19M225 249l-5-16M88 245l-11-13M186 414l-7-5M63 271l-15-18M204 388l-6-3M232 364l-7-7M129 521l-11 3M167 456l-8 5M42 257l-20-9M148 520l-12 4M197 390l-12 0M54 256l-13-15M211 408l-7-2M202 427l-10-1M193 353l-9-3M240 381l-3-6M166 462l-15 5M236 331l-4-6M80 238l-11-10M219 234l-4-14M186 447l-12 4M200 359l-9-7M122 506l-10 4M156 499l-14 13M100 472l-13 0M179 229l-7-11M145 469l-16-2M150 500l-9 8M108 513l-10 2M205 430l-9-2M176 477l-10 4M60 273l-17-13M140 232l-4-20M114 473l-11 6M158 483l-9 8M241 287l-4-10M117 222l-6-8M232 324l-5-8M161 453l-7 1M138 491l-9 0M102 474l-16 1M63 250l-7-7M110 230l-11-12M233 315l-4-10M111 462l-18 3M201 368l-7-5M140 506l-10 6M169 226l-9-14M213 338l-6-14M117 547l-8 9M110 469l-13 1M187 456l-7 2M231 338l-7-2M141 470l-10 3M236 386l-9-5M73 231l-15-19M67 248l-15-12M147 474l-10 8M216 345l-7-7M122 498l-15 2M118 493l-16 5M193 450l-6 3M57 277l-12-1M228 360l-11-10M184 417l-9-4M225 328l-2-8M201 390l-11-3M223 335l-5-8M37 257l-21-10M219 237l-3-18M195 383l-10-2M237 325l-4-9M92 232l-13-15M109 217l-8-13M208 345l-13-7M152 487l-15 8M141 230l-6-8M123 514l-11 4M243 372l-3-6M125 478l-13 6M249 360l-3-8M59 268l-11-5M33 252l-16-11M62 232l-19-12M257 260l-3-12M234 394l-6-4M108 474l-14 0M251 357l-7-8M215 343l-6-14M90 242l-8-5M75 235l-13-11M94 222l-10-7M253 354l-7-8M126 555l-16 5M140 468l-14 3M233 338l-5-9M45 245l-17-13M190 432l-12 2M233 372l-8-7M137 502l-14 8M110 243l-13-19M34 255l-9-7M155 216l-13-12M159 470l-16 1M197 431l-13 1M78 247l-14-13M122 223l-10-12M115 473l-16 5M64 259l-10-3M117 235l-12-14M203 233l-9-18M224 376l-6-5M43 242l-19-6M191 237l-9-10M223 332l-4-6M214 382l-11-7M186 408l-12-4M88 255l-16-16M128 478l-10 5M189 458l-12 6M85 245l-14-10M41 285l-19-6M163 469l-14 5M134 514l-9 7M159 234l-4-11M152 491l-13 0M187 230l-2-9M255 334l-4-10M223 325l1-11M184 370l-10 0M119 470l-13 2"/>
<path stroke="#e0e0d0" d="M175 363l-14-1M128 241l-14-17M163 500l-9 5M248 318l-2-14M227 317l-11-7M208 401l-11-4M130 520l-12 12M206 404l-9-3M221 378l-8-9M192 349l-9-9M116 225l-2-20M125 562l-10 5M241 307l-6-13M153 508l-4 8M232 274l-6-9M191 242l-11-10M203 339l-6-8M212 374l-10-8M125 237l-14-14M119 499l-14 10M114 248l-13-7M230 282l-4-7M246 261l-6-11M234 334l-4-6M88 261l-7-10M65 231l-13-10M251 281l-3-12M132 533l-11 3M122 565l-8 11M121 241l-7-8M143 506l-6 5M230 280l-6-8M157 491l-10 7M206 398l-13-6M144 493l-16 6M84 266l-12-14M175 359l-12-4M106 248l-10-13M38 275l-11-4M241 268l0-15M145 501l-9 8M36 278l-9-6M84 261l-9-5M73 238l-14-6M115 250l-9-10M243 351l-3-7M122 247l-4-18M124 247l-12-10M54 251l-14-13M153 236l-16-6M187 234l-10-13M228 275l-8-17M254 263l-6-13M70 236l-8-9M241 329l-4-8M145 534l-11 6M182 408l-11-2M212 229l-9-18M197 223l-9-17M234 363l-10-6M223 252l-5-11M37 281l-19-1M237 358l-8-4M174 229l-6-13M142 508l-9 6M57 286l-20-9M252 320l-7-8M227 286l-3-8M121 525l-17 10M156 512l-12 13M38 254l-8-7M236 337l-4-6M56 292l-6-10M190 351l-11-3M37 270l-14-5M118 498l-18 8M222 363l-2-8M176 229l-4-17M49 237l-8-10M241 385l-8-10M235 371l-9-3M232 338l-2-9M93 255l-13-11M120 242l-9-7M215 333l-12-7M179 425l-8 2M186 218l-11-17M242 290l-1-17M121 562l-12 6M204 341l-9-9M204 337l-9-10M235 293l-4-7M131 554l-15 12M147 498l-15 4M221 334l-11-10"/>
<path stroke="#d0c0a0" d="M80 364l-16-1M163 367l-13-4M162 409l-11-2M153 380l-8-4M145 348l-13-7M105 437l-18-1M158 394l-15-5M151 440l-12 2M153 443l-14 0M157 397l-17-1M78 349l-7-6M152 440l-17 1M157 426l-16 1M161 397l-17 3M86 358l-8-4M81 380l-15-5M163 376l-10-3M167 413l-16 0M124 451l-15 0M78 397l-17 0M154 366l-9-3M80 404l-17-3M143 453l-14-1M75 386l-10-1M78 371l-10-3M101 436l-9 4M77 393l-18 1M89 381l-10-4M155 358l-9-5"/>
<path stroke="#b0b0a0" d="M34 285l-9-6M43 236l-9-6M199 247l-2-14M78 270l-18-9M155 517l-11 9M176 340l-11-10M68 335l-12-3M42 301l-22-4M62 358l-16-6M217 298l-6-5M75 345l-10-6M197 246l-6-9M103 502l-14 3M207 224l-6-17M223 232l-5-9M58 362l-17-8M151 260l-15-12M31 277l-13-9M124 261l-6-7M72 219l-9-18M46 312l-17-6M93 484l-12 4M82 266l-15-13M203 338l-11-12M94 459l-13 7M206 263l-10-15M184 240l-12-12M194 244l-10-18M77 304l-10-5M57 306l-13-6M101 520l-9 9M217 302l-2-17M203 336l-12-8M185 349l-8-6M63 339l-18-12M139 554l-18 9M60 333l-14-9M226 234l-2-12M73 223l-10-13M271 268l2-15M184 217l-10-13M148 532l-13 11M216 287l-4-7M198 342l-13-6M186 264l-4-9M199 277l-3-8M129 266l-13-15M104 512l-15 3M28 253l-18-11M46 308l-14-7M52 323l-16-1M146 534l-9 9M111 535l-15 7M76 290l-16-9M50 230l-7-10M213 310l-14-7M225 315l-2-16M122 569l-6 10M212 267l-8-12M151 527l-14 6M192 338l-14-8M188 465l-13 5M170 243l-4-12M70 360l-21-2M48 330l-19-10M75 334l-9-3M171 345l-12-7M33 245l-8-7M259 253l0-18M29 253l-16-7M120 268l-13-10M212 315l-6-13M215 258l-2-18"/>
<path stroke="#606050" d="M182 296l-4-8M110 310l-10-3M143 315l-7-14M146 296l-13-8M182 284l-6-10M119 304l-8-7M137 316l-15-11M171 310l-12-8M136 301l-7-6M167 293l-8-7M124 578l-14 15M180 304l-13-11M139 307l-10-8M154 307l-11-12M171 316l-16-10"/>
<path stroke="#c0c090" d="M109 443l-18-5M152 433l-13 2M157 381l-8-2"/>
<path stroke="#b0a0a0" d="M115 267l-8-17M95 498l-21 2M207 218l0-17M132 255l-8-6M200 256l-5-6M158 255l-10-18M139 269l-10-13M115 261l-11-14M215 430l-14-4M189 342l-12-9M183 245l-9-11M174 248l-7-16M178 342l-7-5M134 266l-17-8M228 233l1-12M270 272l-2-8M74 289l-10-16M158 245l-14-15M128 275l-16-13M190 258l-10-11M169 509l-9 6M178 488l-9 6M197 256l-3-20M261 254l-4-17M87 300l-10-4M87 301l-8-7M57 332l-13-3M68 309l-7-8M217 305l-4-9M204 316l-5-7M56 228l-12-13M41 238l-21-4M74 295l-19-6M88 300l-19-8M180 487l-5 7M58 308l-12-6M79 305l-14-1"/>
<path stroke="#707060" d="M134 291l-17-8M125 278l-11-8M194 309l-12-13M99 295l-17-11M91 315l-15-14M196 303l-9-7M113 285l-7-11M230 228l-7-13M98 314l-20-6M119 278l-13-6M194 279l-8-11M195 289l-14-11M256 243l2-12M90 297l-10-10M99 320l-15-12M189 319l-10-6M93 304l-15-11M99 321l-20-2"/>
<path stroke="#e0d0c0" d="M182 223l-11-14M47 315l-14-6M179 442l-8 1M134 475l-16 8M131 507l-9 1M199 388l-12-7M115 490l-17 4M199 398l-7-3M112 502l-7 8M218 396l-14-4M221 339l-4-8M43 291l-11-5M220 383l-10-5M213 405l-11-1M197 343l-9-7M173 363l-9-3M231 273l-2-11M107 510l-17 7M241 282l-8-12M240 386l-7-6M178 232l-7-11M235 305l-5-10M109 222l-8-11M212 352l-10-6M114 496l-16 10M140 505l-12 6M197 400l-8-5M163 464l-10 3M95 449l-16 7M222 376l-6-6M126 558l-15 14M186 442l-11 7M74 372l-11-2M176 433l-10 2M45 254l-7-10M56 238l-10-3M192 445l-8 2M114 557l-10 15M150 509l-8 6M236 300l-3-10M251 312l0-14M191 355l-11-8M228 282l-2-15M219 268l-3-14M148 231l-6-11M116 478l-10 2M62 288l-11-11M220 236l-9-15M154 243l-6-16M171 416l-9-5M237 306l-3-9M167 238l-11-8M229 289l-5-16M245 340l-4-10M86 265l-8-6M137 500l-7 3M116 563l-7 11M194 396l-10 0M188 431l-12 4M182 451l-8 2M248 374l-5-11M211 416l-11-4M189 448l-7 2M52 274l-15-14M229 302l-4-6M185 363l-8-3M40 290l-17-13M173 358l-11-10M148 489l-9 3M196 412l-10 0M158 500l-7 7M176 410l-8 1M166 216l-6-14M48 316l-21-6M175 428l-10-2M224 380l-6-4M167 218l-8-14M130 477l-13 12M51 243l-16-14M220 388l-6-2M234 393l-9-2M205 361l-6-8M177 440l-14 6M252 331l-4-11M218 392l-14-6M222 267l-12-14M187 232l-2-10M135 503l-16 7M128 521l-12 13M212 427l-12-1M203 389l-8-1M163 233l-13-10M228 366l-10-8M207 372l-10-6M183 429l-10-1M69 268l-15-13M191 219l-7-17M221 394l-7-3M112 454l-9 1M160 216l0-22M219 372l-9-6M110 485l-11 11M117 460l-15 1M132 469l-10 2M208 240l-7-10M117 537l-12 10M46 256l-10-9M36 258l-15-16M125 475l-10 5M121 252l-10-4M143 235l-15-15M115 504l-9 3M239 353l-3-12M104 478l-17 10M44 256l-12-5M100 490l-20 3"/>
<path stroke="#b0a090" d="M94 328l-19-7M85 348l-10-9M270 260l1-10M64 365l-16-7M72 387l-14 0M75 402l-11-1M60 344l-9-8M73 345l-19-9M78 318l-12-6M241 396l-12-4M163 519l-7 6M65 387l-10-4M237 401l-8-4M160 389l-12 1M78 320l-17-8M84 310l-18-6M86 306l-6-6M85 351l-16-6M92 459l-13-3M85 330l-21-1"/>
<path stroke="#e0e0c0" d="M177 414l-9-5M145 465l-10 4M166 372l-12-4M148 461l-18 0M152 486l-12 11M139 459l-16 6M165 438l-10 3M195 372l-9-7M119 466l-13 3M166 431l-9 0M149 462l-12 5M151 453l-13 3M173 363l-9-6"/>
<path stroke="#c0b0b0" d="M205 313l-4-8M113 562l-14 9M141 550l-16 13M219 288l-1-8M227 413l-7-1M147 538l-12 6M166 259l-5-12M74 319l-12-6M55 303l-10-4M36 280l-17-6M149 262l-11-6M219 307l-3-9M95 478l-17 4M125 267l-8-7M102 487l-9 7M142 231l-7-8M204 349l-6-5M116 239l-13-14M217 339l-3-8M221 425l-13-1M270 267l-5-11M72 309l-13-16M206 287l-7-15M166 507l-8 4M56 303l-14-6M198 240l-4-18M84 269l-13-11M58 311l-12-5M248 369l-7-8M59 309l-18-7M148 230l-14-16M233 237l-5-13M96 274l-11-14M207 343l-5-9M153 232l-7-7M118 564l-12 17M36 283l-15 0M207 331l-13-11M200 313l-4-7M116 567l-8 5M111 469l-15 1M203 228l-12-16M208 279l0-13M130 210l-5-12M105 214l-6-14M110 557l-16 9M155 241l-14-13M60 304l-12-8M104 536l-10 4M94 260l-14-2M233 397l-6-3M255 253l-2-18M32 264l-14-10"/>
<path stroke="#a09080" d="M124 317l-13-6M152 349l-10-8M135 331l-7-7M101 321l-9-3M89 320l-13-2M111 320l-8-5M99 325l-15-10M137 330l-8-6M224 422l-12 8M194 215l-1-18M152 352l-16-2M79 346l-19-8M149 354l-14-11M75 347l-11-8M100 323l-10-5M69 319l-12 0M204 451l-12 4"/>
<path stroke="#c0c0a0" d="M156 465l-10 4M116 457l-16 2M102 451l-17 9M78 364l-10-1M167 377l-15-2M160 350l-15-6"/>
<path stroke="#d0b090" d="M96 410l-19-2M115 435l-13 3M137 343l-14 2M146 355l-8-6"/>
<path stroke="#b09080" d="M230 424l-7 1M235 417l-12-1M220 435l-8 2M232 419l-10-3M241 406l-7 0M246 396l-5-3"/>
<path stroke="#909080" d="M218 433l-6 0M139 259l-13-13M182 310l-4-15M102 292l-16-14M212 299l-6-9M199 264l-4-9M135 278l-6-7M128 276l-5-12M122 269l-8-10M105 321l-18-8M94 492l-9 7M137 278l-6-7M174 275l-7-15M178 263l-6-11M190 263l-4-12M205 308l-9-13M186 297l-5-7M93 480l-10 1M155 259l-9-13M114 285l-16-13M128 281l-10-8M125 320l-19-7M183 274l-11-13M102 296l-9-6M162 260l-15-9M59 224l-19-13M98 301l-9-6M105 305l-19-9M75 330l-13-10M79 334l-14-8"/>
<path stroke="#808060" d="M123 339l-14-5M99 329l-9-2"/>
<path stroke="#504040" d="M155 539l-5 7M257 237l-5-13M232 222l-7-13"/>
<path stroke="#b09070" d="M113 381l-17 5M127 407l-18-4M108 353l-17-10M133 384l-10-2M120 412l-17-7M121 399l-15 0M111 378l-14-2M112 352l-15-4"/>
<path stroke="#f0f0e0" d="M210 385l-8-3M219 404l-7-2M236 251l-4-12M229 358l-5-6M252 267l-5-10M129 502l-10 6M58 237l-15-11M195 421l-12-3M114 518l-9 7M50 258l-18-16M265 282l-2-10M41 250l-11-5M106 488l-14 7M250 298l-2-11M134 531l-11 9M254 280l-4-14M219 409l-10-3M235 376l-8-3M164 492l-14 11M252 300l0-9M215 367l-6-4M123 546l-8 6M237 351l-7-7M62 240l-11-8M246 267l-3-13M231 341l-8-7M150 484l-9 1M59 239l-10-20M150 517l-12 1M184 452l-17 1M236 323l-5-7M250 306l-2-15M63 256l-10-8M150 502l-11 5M76 241l-8-11M80 227l-18-10M220 373l-8-6M248 263l-3-18M244 269l0-17M142 494l-14 7M214 414l-10-2M139 524l-13 11M245 319l-2-9M246 325l-8-11M156 499l-11 9M144 218l-12-13M124 222l-12-17M68 245l-14-11M241 269l-6-10M155 504l-8 5M228 352l-5-14M242 369l-5-5M144 484l-17 9M114 507l-14 5M227 374l-8-6M125 523l-15 12M199 427l-16 2M156 490l-8 0M240 331l0-8M210 379l-11-2"/>
<path stroke="#a0a090" d="M171 348l-4-16M158 519l-5 12M203 289l-7-8M94 276l-18-13M202 286l-4-9M190 470l-7 5M171 497l-6 6M92 487l-12 3M193 335l-6-8M156 521l-9 5M172 250l-2-11M189 272l-4-9M75 290l-10-8M128 257l-11-12M167 271l-14-13M84 309l-11-9M174 347l-14-5M211 268l-7-17M167 248l-4-12M74 400l-16-4M142 545l-4 8M197 458l-11 4M72 292l-11-10M217 285l-1-19M167 268l-4-15M93 470l-15 4M61 226l-10-14M91 470l-16-2M159 253l-5-19M138 551l-9 12M208 263l-8-17M118 279l-13-2M205 258l-5-13M77 294l-18-3M221 288l-5-6M144 272l-11-16M162 248l-9-19M65 304l-13-7M115 573l-12 9M62 310l-14-9M177 251l-5-12M57 339l-10-5"/>
<path stroke="#b0a070" d="M139 377l-10-3M138 406l-9 3M120 433l-9-1M127 411l-8 3M134 397l-9-1M141 405l-16-8M128 379l-9-6M126 383l-14-6M150 396l-13-1M111 390l-9-3M122 423l-8 2M116 379l-8-3M124 381l-7-6M107 420l-9-1M114 397l-15 0M99 372l-12-5M148 422l-10 1M134 422l-18 1M105 365l-11 0M103 398l-18 1M111 422l-18-2M119 401l-13-6M107 401l-10-3M129 431l-11 1M109 407l-13 1M135 425l-11 2M116 424l-17 3M139 421l-12 2M99 371l-10-6M137 393l-15 0M102 398l-16-5M109 394l-18-8"/>
<path stroke="#e0d0d0" d="M117 248l-15-13M238 241l-4-17M111 484l-14 4M51 312l-8-8M253 296l-7-14M236 316l-6-14M120 569l-14 12M109 501l-13 6M227 341l-8-11M230 392l-8-5M64 234l-19-12M38 275l-13-15M196 422l-16-2M45 308l-14-10M153 221l-6-14M125 492l-12 5M227 339l-5-12M150 527l-10 11M215 323l-13-7M243 382l-8-12M117 250l-12-17M54 232l-11-15M229 347l-10-7M196 396l-11-4M201 338l-8-9M155 506l-16 6M159 488l-11 9M91 224l-16-14M68 250l-8-7"/>
<path stroke="#d0c090" d="M128 343l-17-10M136 352l-16-4M148 392l-13-5M147 424l-14 4M105 374l-9-6M104 406l-18 4M116 440l-17-2M104 413l-17-4M133 381l-8-2M144 423l-13 4M116 429l-16 3M148 405l-11-2M103 403l-12 0M116 346l-18-8M108 413l-17 4M104 340l-21 2M124 346l-9-5M142 380l-12-2M102 376l-11-2M104 410l-13-1M129 344l-12-10M137 431l-19 0M100 367l-20-2M101 383l-13-13M145 368l-15-7M94 385l-14-4M101 383l-13 1M104 402l-14-1M129 444l-16 3M143 435l-13 1M143 391l-15 0M117 429l-14 0M143 398l-8-1M91 388l-19-7M90 387l-13-1M138 378l-12-1M152 420l-15 3M107 427l-18-6M99 364l-10-2M142 383l-17-1M107 422l-11-4M148 425l-9-1"/>
<path stroke="#a09070" d="M112 345l-19-7M99 359l-16-11M109 367l-12-1M95 357l-19-1M132 331l-9-4M126 358l-10-5M124 347l-14-3"/>
<path stroke="#c0b080" d="M138 406l-16 3M107 358l-12-3M142 388l-10-3M131 357l-18-8M120 365l-9-4M153 417l-8-6M109 347l-14-6M105 384l-11-2M141 382l-14-5M149 410l-12-3M115 431l-13-2M129 423l-12-1M103 408l-14-2M116 341l-10-11M147 361l-8-5M122 349l-19-5M116 361l-12-13M93 382l-16 5M117 425l-12 2M142 382l-14-1M146 361l-13-6M139 392l-14 0M111 408l-16-1M133 435l-14 3M107 383l-16-5M137 371l-7-4M104 395l-18-6M109 430l-9 0M99 394l-10 4M102 390l-10-5M131 421l-8-2M137 364l-18-3M134 407l-12-1M154 420l-14-1M96 400l-14-1M138 403l-14-1M131 345l-13-11M139 361l-10-2M117 434l-12 5M139 426l-13 5M137 406l-15-5M124 428l-18-5M144 388l-8-5"/>
<path stroke="#808070" d="M72 409l-19-7M136 267l-7-7M103 530l-10 3M85 326l-11-6M56 351l-19-9M132 285l-9-7M65 387l-16-7M116 313l-15-11M138 306l-10-14M100 291l-16-6M149 304l-12-8M180 290l-6-16M154 306l-16-9M101 535l-21 4M199 301l-10-11M159 319l-11-11M110 208l-7-9M188 262l-9-11M124 292l-13-9M196 274l-5-16M177 306l-6-16M24 260l-15-12M161 207l-6-9M104 530l-12 3M180 300l-7-8M127 308l-10-6M30 242l-16-15M154 268l-6-10M154 310l-6-8M135 285l-19-4M200 284l-7-4M117 295l-20-5M144 309l-6-8M148 306l-14-8M168 261l-7-4M81 305l-9-5M139 317l-7-6M210 286l-6-17"/>
<path stroke="#e0d0b0" d="M92 434l-14 6M162 418l-10 0M165 378l-13 0M78 376l-15-1M120 452l-8 6M81 387l-9-3M88 412l-19-1M94 429l-12 0M163 390l-17-2M161 376l-8-2M171 428l-16 0M129 453l-16 9M161 383l-16-3M80 389l-17-2M122 454l-10 0M166 418l-15 3M78 378l-9-3M162 427l-17 5M79 370l-8-6M80 370l-11-4M165 386l-7-2"/>
<path stroke="#707070" d="M174 270l-11-11M149 332l-17 1M78 321l-11-6M193 320l-12-6M86 307l-11-11M167 340l-13-12M180 321l-10-7M184 278l-11-16M166 318l-11-7M179 320l-11-13M142 293l-13-15M151 328l-7-8M147 297l-11-10M132 565l-11 13M178 271l-15-11M155 336l-10-6M148 298l-13-13M181 319l-8-7M157 323l-10-7M156 330l-7-4"/>
<path stroke="#808080" d="M50 338l-14-11M210 286l-5-6M174 294l-9-5M137 562l-13 15M184 268l-10-10M177 281l-13-9M104 533l-17 12M135 560l-6 8M165 337l-7-5M179 316l-8-10M196 320l-9-9M115 269l-16-12M168 337l-11-10M160 284l-9-11M142 278l-14-13M186 324l-10-9"/>
<path stroke="#b0a080" d="M105 331l-15-12M146 428l-13 0M96 354l-12-8M121 336l-11-13M86 350l-18-4M94 400l-13-2M98 427l-12-5M150 380l-15-5M95 358l-12-2M124 325l-13-7M103 329l-21-2M92 339l-12-3M85 369l-14 0M91 374l-14 5M101 400l-11-2M101 402l-8 2M124 447l-8-2M154 414l-7-3M99 338l-18-8"/>
<path stroke="#705050" d="M252 391l-6-8M220 217l-7-12M244 405l-7-3"/>
<path stroke="#807060" d="M123 321l-16-9M81 329l-9-5M88 320l-12-17M109 326l-15-12M253 240l0-17M101 339l-14-7M146 339l-17-7M129 335l-11-7M92 332l-12-1M83 332l-15-13M111 328l-9-5M69 399l-18 1M144 342l-17-4"/>
<path stroke="#e0c0a0" d="M150 381l-11-1M110 439l-13 0M95 413l-9-3M93 347l-19-1"/>
<path stroke="#c0b090" d="M156 403l-9 0M115 456l-15 4M126 343l-13-6M150 354l-17-2M159 391l-16-5M135 457l-12 5M142 345l-9-6M159 424l-10-3M151 350l-8 0M143 355l-12-3M155 388l-13-8M155 375l-15-7M82 377l-10 1M80 416l-12-3M146 363l-17-5M148 362l-16-2M89 346l-18-8M166 375l-11-9M92 371l-10-6M81 395l-9-4M125 439l-14 4M148 378l-14 0M148 429l-18 0M160 373l-13-7M164 396l-11-7M142 357l-15-10M150 434l-10 2"/>
<path stroke="#d0b080" d="M124 414l-10-4M131 416l-17 5M125 359l-7-4M115 373l-14-3M108 379l-16-5M129 378l-16 7"/>
<path stroke="#706050" d="M224 220l-3-9M117 323l-19-1M110 320l-10-3"/>
<path stroke="#d0c080" d="M121 362l-7-4M140 396l-11-5M126 398l-11-1M128 374l-11-5M125 407l-17-1M106 411l-12-3M109 395l-13-3M134 380l-13-5M125 385l-12-4M119 385l-11 1M123 426l-17 3M131 375l-10-14M111 381l-9-2M104 383l-11-1M124 426l-11 1M115 417l-19 3M121 379l-15-11"/>
<path stroke="#a08080" d="M219 219l0-14M201 213l-3-13"/>
<path stroke="#505050" d="M136 290l-12-11M153 335l-14-7M175 322l-8-4M169 334l-5-6M75 214l-12-8M133 299l-10-11M150 333l-15-1M158 325l-5-7M173 323l-8-4M171 315l-11-8"/>
<path stroke="#a09090" d="M158 269l-8-14M114 268l-16-10M152 341l-13-9M221 224l-3-14M130 261l-11-19M81 291l-19-6M177 269l-5-7M152 258l-12-14M194 281l-11-9M96 304l-9-4M65 328l-13-7M102 277l-15-6M96 276l-17-12M163 513l-9 4M187 312l-7-6M105 267l-14-17M212 284l-1-18M210 283l-7-5M96 278l-12-6M243 241l-6-14M198 213l-5-12M195 280l-14-13M122 265l-8-9M189 298l-5-6M114 268l-10-9M158 526l-6 6M63 324l-10-10M82 292l-8-7M146 549l-4 13M174 343l-15-8M195 279l-10-9M146 261l-6-15"/>
<path stroke="#f0f0d0" d="M137 482l-8 6M167 468l-13 8M175 463l-11 6M185 458l-11 7M144 482l-12 7M231 325l-11-5"/>
<path stroke="#f0e0e0" d="M253 347l-10-8M265 278l-4-16M249 313l-4-9M263 271l0-10M244 285l-7-11M245 255l-4-18M267 284l-7-15M226 254l2-17"/>
<path stroke="#c0a0a0" d="M272 266l-2-14"/>
<path stroke="#807070" d="M185 266l-8-15M266 255l-3-9M196 311l-8-16M158 283l-17-10M156 312l-11-11M200 283l-8-13M162 299l-12-15M141 309l-9-18M171 209l-2-11M129 205l-10-16M154 282l-11-11M254 242l-5-12M217 221l-4-10M130 306l-18-10M93 297l-17-11M146 295l-7-10M158 531l-9 5M86 317l-12-12M183 333l-13-5M115 284l-16-14M88 307l-16-15M107 285l-18-10M169 274l-4-15M184 268l-1-12M109 561l-11 9M170 310l-9-6M77 317l-20-2M129 306l-9-6M147 265l-11-11M203 216l-8-13M144 306l-11-8M194 314l-12-12M152 297l-13-15M177 208l-7-14M127 306l-16-10"/>
<path stroke="#505040" d="M139 562l-6 16M146 554l-7 9M141 561l-9 11"/>
<path stroke="#a0a0a0" d="M27 246l-14-11M73 216l-17-12"/>
<path stroke="#d0d0b0" d="M152 452l-15 5M122 463l-12 10M174 366l-8-8M168 385l-15-9M158 456l-13 7M72 358l-9 0M95 447l-10 1M172 413l-10-2M162 447l-16 7M74 405l-10-7M176 398l-9-5M169 365l-12-7M68 371l-17 2M148 459l-16-2"/>
<path stroke="#605050" d="M132 311l-9-6M171 311l-8-4M153 336l-14-11M181 318l-8-4M143 299l-12-8M143 287l-12-16M243 233l-3-17M155 312l-18-2M149 336l-7-5M147 296l-10-4M261 244l-6-8"/>
<path stroke="#908060" d="M114 330l-10-7M126 332l-15-4M137 344l-17-4M100 336l-9-4M92 345l-20-2M123 350l-13-11M102 340l-9-7M102 342l-7-5M112 337l-13-7M135 341l-15-6M130 345l-14-8"/>
<path stroke="#c0a080" d="M114 357l-14 0"/>
<path stroke="#606060" d="M55 223l-11-17M102 536l-12 4M171 294l-8-6M161 331l-10-9M173 314l-7-6M97 515l-12 5M137 282l-9-8M54 223l-10-8M153 318l-9-8M185 278l-5-17M139 287l-13-11M161 310l-11-7M184 312l-6-12M161 292l-14-13M163 337l-11-4M133 310l-7-5M169 339l-14-6M128 301l-12-1M163 334l-15-5"/>
<path stroke="#e0d0a0" d="M158 383l-8-4M159 401l-11 2M116 444l-15 4M85 375l-10-4M153 369l-6-4M158 390l-9-7M89 408l-16-3M157 414l-9-1M157 424l-8 1M158 378l-17-4"/>
<path stroke="#909090" d="M185 331l-10-7M190 325l-5-7M102 211l-17-16M45 232l-5-17M180 308l-12-8"/>
<path stroke="#c0b070" d="M115 387l-13-14M123 376l-14 0M116 399l-16-6M120 400l-12 4"/>
<path stroke="#a08070" d="M234 418l-13 0"/>
<path stroke="#605060" d="M177 331l-14-8"/>
<path stroke="#b09090" d="M206 216l-6-12"/>
<path stroke="#909070" d="M119 340l-9-5M120 340l-13-11"/>
<path stroke="#c0a070" d="M113 381l-9-1M121 370l-13-5"/>
<path stroke="#907060" d="M253 383l-6-8"/>
<path stroke="#806060" d="M253 236l3-13"/>
<path stroke="#c0a090" d="M104 333l-12-2"/>
<path stroke="#706070" d="M174 320l-15-9M173 324l-13-8"/>
<path stroke="#404040" d="M88 208l-16-16"/>
<path stroke="#504050" d="M172 328l-6-5"/>
<path stroke="#403030" d="M148 553l-8 8"/>
<path stroke="#a09060" d="M127 349l-14-3"/>
<path stroke="#f0e0c0" d="M172 418l-17 0"/>
<path stroke="#907070" d="M254 237l-5-18"/>
</g>
<g filter="url(#b3)" fill="none" stroke-linecap="round" stroke-width="4" opacity=".7">
<path stroke="#d0d0c0" d="M840 157l-6-13M884 188l7-17M848 182l-3-15M949 408l12 8M952 222l7-7M937 218l8-12M834 178l-2-14M957 254l13-12M947 407l13 5M902 193l11-14M957 212l4-11M973 408l10 13M931 198l6-7M853 278l2-11M880 175l1-13M967 427l12 7M865 175l-1-15M947 166l8-7M819 200l1-13M925 198l14-6M856 270l1-8M975 430l8 12M876 184l3-8M875 157l6-16M908 148l6-14M921 230l10-7M879 197l6-16M953 164l5-15M910 158l7-12M900 172l2-15M934 158l12-16M960 204l6-9M799 187l-6-9M948 161l7-7M861 185l8-16M937 240l9-7M971 451l7 4M848 208l-3-11M882 154l-1-15M976 451l11 9M919 222l12-10M844 166l2-12M803 195l-2-10M812 203l2-9M861 154l0-13M954 171l11-12M946 197l11-13M975 446l8 6M911 185l7-12M933 207l7-12M911 204l5-9M935 404l8 10M817 192l-6-13M868 162l2-17M931 222l6-6M957 195l11-10M961 447l7 11M948 235l14-10M856 272l2-10M824 161l-3-14M875 283l2-6M844 201l-10-13M921 228l5-16M891 183l3-11M871 154l0-14M823 209l-4-6M974 422l9 8M932 248l7-6M807 193l-5-16M830 176l0-14M941 231l9-10M977 432l13 12M840 154l4-17M948 199l11-14M947 225l13-11M863 182l9-13M821 163l-3-9M862 190l2-9M919 181l9-13M869 157l1-12M930 161l10-13M893 187l6-12M873 190l1-13M881 170l1-12M950 233l8-9M958 398l6 4M936 209l9-12M951 216l7-15M985 457l9 6"/>
<path stroke="#b0b0b0" d="M896 231l1-15M882 240l7-12M864 230l-1-17M903 226l5-10M863 240l2-11M897 214l9-13M863 227l-1-13M880 249l5-7M915 224l6-16M881 213l2-8M877 217l0-12M859 226l1-10M883 237l-1-11M872 227l3-11M874 207l-5-16M856 226l-1-9M849 232l2-12M895 225l7-9M857 231l2-10M878 221l1-10M881 216l9-10M883 244l7-15M877 210l3-9M900 222l6-16M862 228l-1-14M862 223l-4-12"/>
<path stroke="#e0d0a0" d="M925 359l12 7M937 301l14-5M939 333l12 2M911 346l14 0M902 309l10-6M941 329l8-1M939 334l15-1M918 342l11-2M938 314l10-10M904 312l9-6M911 328l11-1M938 301l10-11M938 349l13-2M899 283l5-5M931 341l14 1M916 267l7-10M935 354l6 2M917 335l12-3M917 270l6-10M912 291l9-7M926 351l11-1M935 334l10-4M912 300l7-8"/>
<path stroke="#d0c0b0" d="M836 175l1-16M892 154l2-13M915 201l9-11M962 396l12 11M879 274l6-7M874 165l6-17M897 176l5-14M967 458l8 6M952 181l5-9M908 165l0-13M934 382l9 4M947 377l10 10M943 413l10 6M939 382l11 2M929 180l3-19M878 276l6-12M929 223l6-9M858 300l3-6M988 468l16 11M958 363l8 1M944 210l14-13M867 180l0-8M832 182l1-11M958 376l6 6M928 150l5-10M911 154l6-19M869 300l4-11M906 253l4-11M860 195l0-15M945 212l7-8M940 400l10 13M903 175l10-10M974 445l6 9M943 276l8-10M915 190l0-16M960 400l8 1M873 301l6-11M842 202l0-12M821 171l-5-10M905 365l5 8M801 177l0-10M942 160l3-9M938 169l7-11M953 375l14 4M949 172l6-18M947 386l8 5M882 153l-1-8M942 402l6 5M931 227l6-12M851 287l-1-7M997 476l10 8M881 154l-1-13M958 380l8 3M883 192l3-9M896 364l7 6M877 157l-1-13M950 202l5-13M889 275l9-12M922 253l8-13M959 360l9 4M960 429l6 6M940 221l3-10M935 181l11-10M953 385l12 3M955 165l10-18M928 399l9 12M819 161l-1-11M950 170l4-13M937 371l9 0M920 204l13-11M980 453l8 10M867 314l7-6M948 364l10-1M961 436l8 3M929 385l10 10M918 380l7 3M856 148l3-19M945 422l11 8M979 418l11 6M944 214l8-10M854 159l4-19M925 159l0-14M847 154l6-17M820 174l-5-18M933 421l7 6M918 240l6-6M856 178l0-14M988 464l8 11M895 340l9 3M875 315l11-4M946 232l9-11M815 166l-3-14M795 184l-5-14M992 466l11 16M902 193l4-8M858 151l-5-17M959 317l10-2M908 386l6 6M917 188l7-16M930 152l8-15M818 209l-2-15M838 165l-2-19M928 160l9-12M830 183l-8-15M939 419l8 10M833 163l-4-11M932 260l4-8M853 175l-4-18M957 383l12 4M892 165l9-15M954 272l7-8M960 235l14-7M919 191l5-14M865 149l-4-17M818 196l-10-14M977 441l13 8M982 432l8 5M937 410l10 4M993 459l14 10M824 205l-6-12M949 222l8-14M973 411l10 6"/>
<path stroke="#c0c0b0" d="M863 205l-3-17M899 230l4-12M937 244l6-8M802 181l-1-12M886 164l2-11M894 207l5-7M901 241l6-6M921 205l2-16M861 209l1-13M911 161l0-16M917 388l10 7M912 222l4-8M931 179l4-11M858 197l-7-15M916 200l4-18M851 261l5-10M958 216l6-7M928 158l4-10M856 270l-1-11M864 303l4-9M946 216l2-10M855 287l1-9M984 449l13 15M947 399l7 3M973 451l18 5M861 210l2-9M923 183l7-9M985 468l14 14M957 425l10 8M922 188l5-13M943 233l5-9M821 195l4-10M953 408l12 11M959 167l5-20M941 426l3 8M856 259l-1-8M945 246l5-6M844 202l2-10M815 205l-1-18M838 226l4-12M968 454l5 7M903 249l7-14M960 211l12-11M841 202l-3-16M872 279l5-12M935 238l5-9M940 425l9 3M812 203l-9-13M973 450l16 7M954 166l12-13M943 199l6-8M922 234l1-12M848 193l3-16M959 422l14 4M859 192l-2-10M855 268l-1-11M984 460l7 6M849 207l1-14M957 392l7 1M890 157l-1-18M798 178l-6-12M945 400l13 4M916 169l4-10M913 241l8-9M969 404l9 10M956 219l10-9M971 386l11 2M874 284l5-10M855 259l-4-11M855 155l8-18M810 188l-8-10M962 426l12 10M815 165l-5-15M883 207l4-9M961 421l10 12M882 192l1-13M975 407l12 9M913 150l7-14M846 162l-4-17M896 250l11-8M970 416l9 6M853 255l5-12M859 218l0-13M800 190l-6-9M802 194l-1-9M933 233l3-11M873 164l1-16M873 160l4-11M920 147l-1-16M898 172l1-12M933 158l13-14M856 171l2-10M870 312l8-10M833 213l4-11M813 167l-7-16M950 187l8-10M975 402l9 4M851 270l5-7M905 176l7-12M844 192l0-9M844 222l0-8M836 203l-5-15M930 185l12-14M858 161l0-14M986 453l13 5M883 157l0-13M966 406l8 3M955 411l11 8M905 174l9-17M921 243l9-8M880 198l3-12M939 188l9-11M847 182l-2-15M1001 469l17 10M935 196l4-13M886 187l3-12M958 257l10-5M944 170l6-17M860 203l-5-17M816 181l-1-16M846 212l0-9M962 202l5-8M958 240l9-10M948 250l6-5M925 150l3-10M952 393l10 3M950 175l6-8M844 177l1-11M916 213l2-9"/>
<path stroke="#909090" d="M873 214l3-14M894 213l3-10M881 215l4-11M970 383l11 6M895 246l9-9M906 144l15-14M847 233l0-15M962 199l8-4M865 222l-1-14M906 220l4-15M849 219l1-12M864 253l0-8M872 260l3-14M887 214l5-15"/>
<path stroke="#b0b0a0" d="M885 204l2-10M805 168l-5-12M927 225l10-14M925 403l11 8M892 208l4-9M853 264l3-7M958 284l11-3M895 202l6-13M1006 481l8 12M964 227l8-13M859 214l-1-14M958 273l9-2M915 243l6-7M959 444l12 12M876 265l2-15M865 147l-2-20M853 274l4-12M864 306l4-12M887 241l10-12M964 236l11-7M1001 455l16 12M899 210l5-11M975 408l8 4M921 231l10-10M914 227l5-14M877 189l3-10M985 468l10 8M912 198l10-15M906 209l3-7M958 203l6-7M839 225l-1-12M857 270l1-12M912 150l7-19M963 170l7-13M961 244l7-5M880 278l1-7M998 442l12 13M876 208l4-16M857 276l1-8M993 446l10 7M971 383l15 6M924 150l1-9M890 219l2-9M912 207l4-13M883 340l12 3M922 212l11-10M990 424l14 4M984 466l15 7M961 182l5-7M866 260l0-9M910 196l0-12M986 430l5 6M832 152l-6-17M853 259l1-15M999 480l12 14M989 469l8 14"/>
<path stroke="#c0b0b0" d="M899 183l3-16M878 181l0-18M826 155l-1-10M989 447l16 3M953 162l9-15M844 155l-2-10M855 146l-2-19M892 210l9-14M937 148l5-18M921 212l-1-14M849 221l-1-16M902 147l1-15M957 228l7-16M955 162l9-9M906 201l4-13M969 403l15 9M825 206l3-13M940 225l6-12M885 194l2-13M912 206l8-15M935 208l5-9M859 222l0-15"/>
<path stroke="#f0e0d0" d="M931 176l1-15M889 160l3-16M959 430l8 6M953 422l9 13M948 409l7 3M913 159l5-17M962 418l14 7M952 167l9-15M863 287l1-14M887 153l2-13M936 393l13 7M918 174l1-20M825 188l-4-17M850 155l-2-12M992 456l9 8M936 387l7 3M931 388l14 2M950 230l8-13M902 166l2-9M976 426l7 6M935 162l12-15M925 167l3-10M815 170l1-11M936 193l6-16M936 189l2-13M922 153l5-13M963 388l10 6M950 406l9 7M954 187l7-7M894 156l0-12M966 407l10-1M966 402l15 7M901 167l5-9M865 163l1-10M879 299l9-3M845 176l0-9M944 231l15-5M939 159l9-11M986 441l12 6M932 399l7 5M870 286l4-8M919 180l10-11M895 157l1-9M856 160l0-10M931 395l6 8M954 414l6 5M909 157l2-13M947 199l9-14M962 432l9 13M925 183l8-13M885 172l-5-18M951 427l12 12M904 180l-1-19M843 158l3-15M870 159l1-10M955 193l6-14M902 172l4-7M940 238l6-6M942 408l7 6M890 176l-1-15M951 186l4-8M903 177l4-16M824 191l-1-13M876 298l1-7M969 404l11 6M970 432l16 9M877 172l4-10M972 414l8 12M950 404l8 1M941 392l9 3M947 160l16-11M927 198l6-8M815 172l-1-18M837 163l-4-12M969 432l11 11M969 412l16 5M989 457l10 5M909 167l3-9M981 428l6 9M967 444l10 15M941 171l3-19M857 168l0-8M934 397l8 7M813 177l-1-13M972 405l8 8M841 178l0-9M940 181l10-13M943 200l11-12M961 392l16 4M950 238l10-11M931 208l3-18M810 200l-7-6M936 202l7-5M930 180l3-8M947 209l5-10M845 164l1-17M808 195l4-14M934 391l7 2M944 179l13-12M957 373l7 2M937 205l8-8M830 200l-2-9M912 182l8-16M870 300l2-7M931 390l15 2M951 170l8-19M858 179l-1-9M818 196l2-8M909 183l11-15M899 178l7-9M875 301l9-11M820 192l-4-16M867 173l-2-12M950 386l9 10M928 162l8-13M942 379l12 8"/>
<path stroke="#d0c0a0" d="M903 287l11-5M927 277l10-4M915 375l9 4M958 324l14-1M947 320l14-6M931 265l9-7M948 345l15-1M952 332l11 4M904 346l10 0M939 305l9-4M932 360l8 2M953 313l7-2M925 272l9-9M915 356l14-2M959 333l9-3M948 372l14 2M909 341l9-2M936 289l8 0M946 356l14 0M947 327l12-1M912 351l11 2M906 274l6-8M903 331l11-4M924 369l7 5M908 351l6 2M885 355l5 6M942 303l9-10M889 290l5-12M892 287l4-7M905 351l9 6M927 262l8-5M897 301l9-8M928 357l15 2"/>
<path stroke="#e0e0c0" d="M954 260l3-7M883 314l7-3M989 438l8 4M946 272l16-4M879 318l4-4M876 291l2-8M932 374l6 5M898 349l11 2M875 293l2-11M892 349l12 7M943 269l9-9M878 324l7-6M943 424l11 11M914 371l12 6M877 307l5-6M878 303l1-6M882 327l5-3M921 375l11 3M944 372l14 4M907 371l8 3M953 373l16 5M928 247l7-9"/>
<path stroke="#e0e0d0" d="M939 230l3-16M840 199l-3-12M910 195l5-15M891 181l-1-15M858 281l-1-12M836 156l-3-9M904 185l3-9M838 155l3-11M957 212l7-16M936 217l7-6M825 208l-1-15M868 189l0-8M832 200l1-10M879 191l7-12M934 205l9-14M930 206l4-7M839 190l2-12M994 454l13 10M873 180l3-10M957 200l7-14M955 250l12-6M862 185l2-13M864 282l3-6M830 209l1-13M883 184l2-18M826 212l-1-9M933 243l5-9"/>
<path stroke="#c0b0a0" d="M957 362l9 1M888 350l12 6M875 151l2-14M914 392l11 6M953 440l11 8M936 265l8-7M883 350l8 0M895 311l10-9M945 269l13-5M932 245l12-10M947 270l16-6M955 366l10 4M860 313l0-9M872 292l4-8M923 380l13 7M931 241l5-6M966 368l7 3M989 425l8 5M920 390l6 5M874 319l8-9M1002 479l8 7M927 381l6 6M953 249l7-7M797 176l-4-10M954 295l10-5M958 290l9-4M879 298l5-4M956 199l2-15M939 152l3-8M940 377l7 0M895 342l8 0M924 373l6 3M888 263l8-12M895 358l12 6M964 445l11 6M823 212l-1-11M871 296l5-10M873 189l1-11M893 361l13 5M964 367l14 7M956 442l7 15M836 155l-3-11M959 340l15 5M951 255l12-12M957 233l12-12M851 287l-1-7M870 290l4-13M942 360l9 1M921 402l9 12M984 413l14 1M955 237l6-10M1002 476l15 5M935 390l12 7"/>
<path stroke="#808070" d="M965 194l11-11M964 288l9-2M1001 483l12 14M936 427l8 10M965 216l10-10M998 434l8 8M960 287l15-6M962 260l10-10M1004 485l9 10M991 426l15 7M992 425l10 11M1012 471l15 9M935 427l8 13M943 437l7 4"/>
<path stroke="#707070" d="M1009 466l16 9M891 144l2-18M958 151l3-20M1004 487l15 14M960 158l8-6M1004 487l18 7M869 224l1-12M886 238l6-14M864 235l1-14M873 241l0-12M871 241l5-15M1010 488l16 5"/>
<path stroke="#b0a0a0" d="M915 243l4-8M802 175l-4-11M958 251l14-6M962 172l9-6M912 218l4-7M871 263l5-10M960 206l10-15M904 210l7-16M882 199l2-10M963 185l8-11"/>
<path stroke="#d0d0b0" d="M882 327l11-8M890 353l9 4M945 379l13 5M876 300l3-10M915 260l7-6M952 376l16 5M953 273l13-8M908 369l9 5M916 367l10 7M932 369l11-2M953 283l10-3M904 354l8 2M879 293l6-13M891 319l11-8M929 256l15-9M917 379l10 6M948 285l15-5M883 285l3-13M881 322l6-3M925 373l11 2M944 434l7 10M919 249l6-14M963 375l13 2M884 334l7-1M949 277l7-6M952 349l11 0M888 308l5-8M877 303l8-6M921 377l14 1M938 269l9-13"/>
<path stroke="#e0d0b0" d="M892 322l6-2M948 330l7 0M927 376l7 3M903 338l10-2M882 301l5-4M895 319l9-7M948 304l13-4M949 340l16 2M897 293l10-7M896 309l3-6M945 318l13-1M950 321l9-3M891 278l9-11M891 355l8 1M943 358l12 5M945 347l15-4M953 344l7 1M926 364l8 6M938 372l11 6M948 371l8 1M902 341l12-7M940 297l11-3M950 345l8 1M953 299l13-4M936 264l9-14M891 277l4-6M957 351l11-1M924 273l12-8M903 345l8 0M898 290l6-11M898 315l13-5M923 260l10-11M896 292l11-5M944 302l11-10M939 369l12 5"/>
<path stroke="#e0d090" d="M921 318l7-3"/>
<path stroke="#b0b090" d="M952 293l10 0M947 321l13-4M918 263l7-12M951 308l15-5M955 321l9 1M947 333l14-3M932 279l6-4M945 328l7 0M951 325l8-3M946 340l9-2M892 273l7-13M953 323l10-4M952 313l14-2M898 303l8-7M940 297l10-11"/>
<path stroke="#c0b090" d="M932 289l8-5M926 315l13-3M908 318l12-4M941 358l9-2M904 314l11-8M947 353l11 2M898 336l10 0M906 295l7-4M912 350l12 6M909 278l5-4M894 322l7-7M894 305l7-6M897 310l10-6M893 303l8-12M907 288l7-7M912 274l7-9M877 337l10-6M894 290l6-5M931 280l11-7M940 359l10 2M909 281l5-5M920 349l15-2M889 296l7-7M950 342l9-1M903 303l8-8M908 320l10-4M914 319l9-4M920 320l13-2M916 272l7-7"/>
<path stroke="#e0e0b0" d="M937 277l15-5M898 337l8 3"/>
<path stroke="#a0a0a0" d="M870 213l4-7M865 233l1-9M916 144l0-12M878 227l8-11M877 245l6-10M848 223l0-7M878 240l4-8M885 210l5-15M875 206l0-13M887 235l5-13M858 266l4-10M888 221l3-8"/>
<path stroke="#908080" d="M975 470l19 5M962 352l13-2M807 164l-2-9M890 254l5-10M879 255l5-11M902 243l4-8M931 421l12 10M968 375l8 3"/>
<path stroke="#e0d0c0" d="M882 280l2-14M949 167l9-16M864 292l4-6M966 439l2 14M867 290l6-9M867 288l0-8M943 223l8-15M968 416l11 8M851 163l-2-12M971 443l14 11M985 441l8 6M870 179l-2-11M818 161l-6-12M902 199l2-19M939 389l7 2M979 437l9 6M945 176l13-13M851 284l4-10M865 197l1-10M837 162l2-19M945 228l16-9M939 177l4-12M1003 475l19 9M897 177l2-16M951 390l15 4M879 312l11-5M907 151l1-20M948 229l13-6M931 239l11-9M863 175l1-19M872 322l6-5M923 251l10-9M897 167l9-17M977 409l12 12M840 187l-2-18M943 232l11-13M902 370l12 6M957 227l8-11M843 152l2-9M822 204l-6-16M843 161l0-17M894 154l3-15M830 218l-4-10M950 170l2-17M955 210l3-8M922 391l9 3M827 170l-2-10M892 177l2-10M989 458l12 12M835 214l2-14M935 164l3-12M921 159l10-11M882 320l8-2M948 410l15 7M966 390l9 4M837 163l0-11M829 173l4-16M974 436l7 9M827 206l-2-15M867 193l-1-17M910 174l2-15M951 164l3-9M930 195l7-15M909 203l3-14M836 164l-2-12M873 164l8-13M949 234l7-4M871 178l2-14M824 187l4-13M855 185l-2-14M843 164l-1-14M820 168l-3-16M827 208l1-17M936 164l8-10M866 302l9-9M824 190l1-14M977 429l7 9M882 319l12-6M879 168l0-18M922 198l4-12M999 462l9 16M808 198l-1-9M956 239l9-9M823 157l-2-12M928 175l2-11"/>
<path stroke="#909080" d="M966 371l8 3M849 232l-6-11M994 429l11 7M895 217l5-14M886 245l4-12M961 248l14-10M901 239l1-7M959 324l15 4M811 161l-1-19M864 218l1-7M964 196l13-13M1008 481l11 4M867 217l2-7M1013 474l12 7M922 144l3-21M806 164l-2-10M967 204l13-10M881 254l1-8"/>
<path stroke="#e0c090" d="M930 329l12-1M923 310l11-6M916 300l8-5"/>
<path stroke="#808080" d="M884 223l0-16M964 243l10-14M859 247l2-10M964 228l13-10M870 232l1-16M892 228l6-11M899 243l6-9M872 224l5-15M866 249l0-10M896 232l2-8M874 255l6-10M962 256l5-6M891 233l2-7M963 204l4-18M872 231l4-16M883 226l4-17M857 232l1-10M884 238l2-13M797 173l-7-12M893 220l1-15M887 230l4-17M865 253l5-15M874 233l2-10M896 234l6-6"/>
<path stroke="#b0a090" d="M877 335l6 0M999 448l15 7M962 345l10 5M910 383l12 9M862 306l4-11M890 359l12 6M957 165l6-7M964 369l11 6M874 328l5-4M861 308l5-12M960 354l12 5M954 314l11-2M909 388l4 5M909 387l8 9M882 344l7 0M985 472l17 3M873 326l7-5M872 327l9-5M955 316l10-3M911 265l8-8M956 354l8 1M958 350l11-1M870 324l5-3M910 261l14-7"/>
<path stroke="#a09090" d="M876 212l7-15M874 208l2-14M897 255l2-7M894 248l7-10M963 367l11 4M806 164l3-14M847 221l0-12"/>
<path stroke="#c0b080" d="M916 333l13-5M922 321l9-1M917 315l12 3M910 303l12-7M924 302l6-2M911 318l11-2M932 318l13-3M931 305l7-3M926 309l6-3"/>
<path stroke="#b0a080" d="M922 311l7-3M907 323l11-5M926 350l10 4M908 305l9-8M908 286l6-9M867 324l6-5M931 294l12-3M905 298l11-1M922 295l7-8M912 308l11-9M926 291l9-4M924 302l12-8"/>
<path stroke="#606050" d="M964 303l8-9M965 255l11-6M961 460l13 11M955 453l9 2"/>
<path stroke="#c0c0a0" d="M934 370l11 2M890 313l12-7M894 354l10 0M898 358l9 4M906 360l9 4M904 257l10-12M912 255l6-8M905 265l6-10M888 286l6-6M903 254l3-10M964 369l15 1M956 364l16 0M948 284l15-7M957 297l9-1M888 309l8-7M893 328l11-2M943 280l13-7M942 285l10 0M954 293l9-2M920 248l8-13M937 379l7 3M955 345l15 1M950 358l14 3"/>
<path stroke="#c0c0c0" d="M851 229l0-14M874 218l0-7M868 256l3-10M871 254l5-8M871 218l7-11M913 221l3-9M861 216l0-10M901 225l2-14M901 239l7-16M899 242l2-10M874 215l-6-16M884 250l5-13"/>
<path stroke="#a09080" d="M857 307l1-12M959 317l8 0M958 322l9 0M972 465l8 9M856 305l2-12M893 368l11 5M889 361l10 2"/>
<path stroke="#a0a090" d="M960 259l12-7M983 469l5 7M880 260l2-8M890 261l7-14M909 247l4-6M917 238l11-8M822 155l-5-10M966 201l12-11M960 327l12 2M829 153l-3-10M881 206l2-14M853 219l5-16M961 288l9-3M897 262l6-4M910 245l5-9M899 209l0-8M915 244l11-13M969 458l14 9M881 211l0-16M875 207l5-11M902 256l6-15M960 284l15-5M908 246l6-9M902 259l9-14M957 445l12 14M907 212l4-12"/>
<path stroke="#908070" d="M960 328l7-2M978 473l13 8M921 409l7 4M962 331l8-3"/>
<path stroke="#d0c0c0" d="M910 209l5-17M868 216l2-7M866 268l9-11M856 265l1-11M902 197l6-11M936 151l3-20M809 162l-5-10M869 190l3-12M915 205l7-15M886 188l4-7M981 414l13 9M880 188l0-9"/>
<path stroke="#d0c090" d="M927 285l10-9M901 310l9-3M912 283l2-7M910 332l12 1M901 284l8-6M910 290l6-4M936 322l13-1M925 309l10 0M904 315l7-6M908 296l10-6M913 281l6-8M919 297l8-2M908 281l7-8M909 340l14 0M921 330l7-1M927 352l10 0M934 334l15-2M934 293l11-10M933 305l12 1M930 336l9-1M935 313l7-1"/>
<path stroke="#707060" d="M963 315l15 0M978 473l12 4M962 455l4 10M955 152l4-15M1005 483l12 10"/>
<path stroke="#706060" d="M950 451l7 10"/>
<path stroke="#e0d0d0" d="M924 218l7-9M924 216l-2-14"/>
<path stroke="#b09080" d="M875 337l7-4"/>
<path stroke="#a0a080" d="M958 311l14-7"/>
<path stroke="#605050" d="M963 280l6-5M965 285l16-7M964 314l16-2M972 468l14 11"/>
<path stroke="#f0e0c0" d="M943 371l10 4M930 387l11 3M944 368l8 3M907 357l12 5M940 262l5-9M942 266l13-8M884 328l10-3M886 301l5-6M895 345l9 0M941 266l13-10"/>
<path stroke="#b0b080" d="M932 352l13 0M938 348l13-4M936 354l8 5M901 283l7-4"/>
<path stroke="#d0d0a0" d="M906 267l7-10"/>
<path stroke="#505050" d="M992 482l6 13M964 277l14 1M1006 486l10 11"/>
<path stroke="#806060" d="M959 459l10 14"/>
<path stroke="#807060" d="M962 308l10-4M944 441l13 9"/>
<path stroke="#b09090" d="M929 421l13 6"/>
<path stroke="#c0c090" d="M911 270l6-8"/>
<path stroke="#90a0a0" d="M868 238l0-9"/>
<path stroke="#606060" d="M965 250l17-3"/>
</g>
<g filter="url(#b6)" fill="none" stroke-linecap="round" stroke-width="10" opacity=".32">
<path stroke="#403030" d="M265 209l-21-28M239 143l-33-36M439 130l-11-28M291 140l-19-38M552 100l-2-26M693 109l3-28M502 135l1-40M309 210l-18-30M519 137l-2-32M213 195l-32-32M331 205l-19-46M720 128l11-36M490 140l-9-38M702 159l10-25M295 108l-16-40M196 171l-31-36M287 238l-16-31M541 106l-1-34M364 156l-10-23M437 122l-9-40M299 194l-19-38M263 124l-14-42M269 199l-15-21M733 137l7-25M263 215l-16-32M440 167l-10-47M688 96l11-31M400 110l-3-34M376 166l-8-27M306 201l-25-43M403 146l-10-33M311 180l-16-37M506 133l-6-40M601 120l0-42M485 127l-2-40M657 114l5-28M323 196l-10-26M277 225l-16-26M312 210l-16-33M518 144l-1-36M163 155l-20-30M314 208l-18-34M397 129l-8-30M562 118l-1-28M245 184l-20-39M621 151l0-33M581 152l5-31M377 103l-14-48M392 99l-9-38M190 152l-12-28M291 149l-27-33M345 120l-16-31M505 102l-3-39M725 103l24-37M288 205l-23-43M234 185l-24-31M610 96l4-26M205 173l-15-27M160 160l-25-30M271 215l-25-40M306 107l-18-37M306 120l-12-40M539 128l4-36M574 109l-6-48M382 102l-23-43M452 135l-6-37M529 124l1-26M189 189l-17-26M706 135l6-24M300 227l-20-35M771 159l24-36M299 174l-13-25M513 95l-2-26M382 100l-7-36M315 162l-11-30M530 100l3-39M534 149l3-40M238 137l-23-40M168 189l-14-32M192 180l-26-34M339 115l-11-48M514 150l0-31M305 138l-14-30M337 159l-21-30M543 97l1-32M287 210l-12-31M670 141l11-32M317 215l-16-32M449 118l-1-29M278 214l-19-28M189 200l-27-26M735 106l7-24M264 204l-20-26"/>
<path stroke="#503030" d="M184 200l-26-33M289 118l-14-36"/>
<path stroke="#504040" d="M782 165l25-35M600 124l10-44M686 114l14-34M353 171l-23-39M292 108l-8-25M390 159l-17-42M502 111l-1-44M534 138l-2-46M439 159l-12-34M518 119l-2-30M471 133l-5-27M438 162l-13-37M686 147l8-45M599 145l5-36M589 146l11-47M175 166l-23-39M491 116l-6-26M285 107l-18-41M345 129l-17-38M354 132l-11-29M477 146l-9-42M442 158l-12-43M441 133l-4-34M317 143l-15-28M576 138l-9-36M466 149l-13-35M598 126l2-48M200 146l-25-32M139 195l-26-25M549 119l-2-38"/>
<path stroke="#402030" d="M749 155l9-42M283 139l-13-27M719 152l11-27"/>
<path stroke="#604040" d="M298 163l-11-29M198 192l-30-37M464 113l-5-43M302 155l-19-40M422 96l-6-38M266 222l-20-34M286 176l-16-29M264 201l-21-28M315 211l-23-44M243 114l-22-30M445 100l-3-28M193 172l-22-26M307 217l-18-29M270 161l-14-30M193 162l-25-37M306 168l-12-27M334 203l-16-45M291 132l-18-42M285 176l-16-42M269 146l-20-37M423 155l-5-41M241 195l-25-35M210 158l-24-42M225 126l-25-33M325 196l-14-37M294 231l-16-35"/>
<path stroke="#302030" d="M411 140l-5-45M537 113l1-41M352 131l-16-37M428 142l-13-44M764 133l6-25M497 136l-2-29M570 108l2-43M160 188l-21-39M622 125l-2-47M756 136l12-37M481 145l2-26M372 147l-8-25M491 132l-5-30M774 156l17-36M576 105l-2-37M160 186l-26-35M662 129l-1-33M380 154l-9-36M370 123l-20-33M439 149l-10-38M438 110l-3-29M339 134l-12-47"/>
<path stroke="#303030" d="M752 107l16-46M617 114l-2-34M744 102l9-30M754 110l5-36M760 138l9-43"/>
<path stroke="#604050" d="M719 114l3-44M379 175l-11-34M360 120l-16-35M175 193l-25-41M304 173l-18-32M197 193l-29-39M701 133l9-26M625 129l13-40M228 205l-18-34M448 103l-1-43M697 112l8-37M354 130l-21-37M208 196l-23-44M747 137l7-41M504 144l-7-47M681 101l14-41M583 99l3-28M301 225l-13-32M743 133l18-44M306 200l-17-35M470 122l-2-46M338 190l-7-27M721 107l4-26M644 139l6-39M667 146l4-28M384 160l-4-29M247 135l-14-21M739 157l14-33M374 153l-10-49M473 143l-3-33M429 158l-18-42M370 122l-9-33M500 99l-12-44M388 155l-15-26M209 204l-17-27M723 102l8-29M207 171l-26-37M711 114l12-39M392 108l-13-44M688 121l9-42M314 124l-10-30M191 186l-18-22M541 124l-7-41M379 119l-20-43M612 99l6-47M409 174l-13-24M292 197l-22-29M708 117l6-37M184 195l-16-22M308 116l-13-36M289 162l-18-38M709 100l13-48M623 107l2-26"/>
<path stroke="#302020" d="M154 161l-24-37M205 117l-15-21"/>
<path stroke="#907070" d="M143 200l-32-36M277 254l-15-25"/>
<path stroke="#705050" d="M341 209l-11-27M651 157l6-32M245 227l-14-37M281 115l-10-32M304 112l-12-37M235 220l-22-38"/>
<path stroke="#503040" d="M166 166l-16-25M159 175l-19-34"/>
<path stroke="#807070" d="M268 246l-18-31"/>
<path stroke="#605050" d="M705 98l10-40M409 96l-6-47M321 220l-13-29M371 96l-12-45M712 98l10-29"/>
<path stroke="#706060" d="M144 200l-25-39"/>
<path stroke="#504050" d="M523 144l1-37M791 164l13-25"/>
<path stroke="#706050" d="M319 101l-6-32M279 99l-12-30"/>
<path stroke="#403040" d="M239 101l-22-39"/>
<path stroke="#706070" d="M791 172l24-44"/>
<path stroke="#704050" d="M761 173l17-42"/>
</g>
<g filter="url(#b1)" fill="none" stroke="#c9ccd2" stroke-width="1.3" stroke-linecap="round" opacity=".5"><path d="M880 560C930 545 990 545 1040 525"/><path d="M885 575C940 580 1000 570 1055 535"/><path d="M880 590C940 610 1000 600 1030 560"/><path d="M870 605C930 640 990 640 1025 605"/><path d="M860 620C900 660 930 680 935 690"/><path d="M820 640C850 680 870 690 870 694"/><path d="M560 560C510 545 470 540 440 545"/><path d="M555 585C500 585 460 595 430 610"/><path d="M560 610C520 630 490 660 470 690"/><path d="M600 650C570 670 550 685 545 694"/><path d="M590 540C540 520 500 515 470 520"/></g>
<!-- eyes -->
<g filter="url(#b3)" fill="none" stroke-linecap="round">
<path d="M532 447C562 448 597 458 618 470" stroke="#1c191b" stroke-width="13"/>
<path d="M754 462C765 450 780 446 793 446" stroke="#231c1c" stroke-width="12"/>
</g>
<!-- plank -->
<rect x="0" y="696" width="1135" height="60" fill="url(#plankg)"/><rect x="0" y="696" width="1135" height="60" fill="url(#plankr)"/><rect x="0" y="704" width="1135" height="52" filter="url(#nz)" opacity=".55"/><rect x="0" y="704" width="1135" height="52" filter="url(#nz2)" opacity=".55"/>
<g filter="url(#b6)">
<rect x="-10" y="691" width="1155" height="6" fill="#120f0f" opacity=".8"/>
<rect x="800" y="700" width="360" height="9" fill="#78787a" opacity=".8"/>
</g>
</svg>
<!--PANDA-END-->
<div class="abs" id="selbox"></div>
<div class="abs hd" style="left:892px;top:348px"></div>
<div class="abs hd" style="left:1463px;top:348px"></div>
<div class="abs hd" style="left:2035px;top:348px"></div>
<div class="abs hd" style="left:892px;top:729px"></div>
<div class="abs hd" style="left:2035px;top:729px"></div>
<div class="abs hd" style="left:892px;top:1111px"></div>
<div class="abs hd" style="left:1463px;top:1111px"></div>
<div class="abs hd" style="left:2035px;top:1111px"></div>
<div class="abs" id="altbtn"><svg style="left:32px;top:10px" width="26" height="26" viewBox="0 0 26 26"><path d="M1.500 13h23M13 1.500v23" stroke="#fbfbfe" stroke-width="2.700" stroke-linecap="round" fill="none"/></svg><span>Alt text</span></div>
<div class="abs" id="delbtn"><svg style="left:11.8px;top:10.5px" width="32" height="36" viewBox="1993 1139 32 36"><g fill="none" stroke="#181f5b" stroke-width="2.600" stroke-linecap="round" stroke-linejoin="round"><path d="M1997.500 1148h23.200"/><path d="M2004.400 1148v-1.600a4.600 4.600 0 0 1 9.400 0v1.600"/><path d="M1999.800 1148.200v19a4.200 4.200 0 0 0 4.200 4.200h10a4.200 4.200 0 0 0 4.200-4.200v-19"/><path d="M2005.700 1156v10M2012.300 1156v10"/></g></svg></div>

<div class="abs" id="popup"></div>
<svg style="left:2436px;top:222px" width="44" height="22" viewBox="2436 222 44 22"><path d="M2440.500 242.500l17.500-17.500 17.500 17.500" fill="#fff" stroke="#b9b9bd" stroke-width="1.200"/><rect x="2441.200" y="241.600" width="33.600" height="2.400" fill="#fff"/></svg>
<svg style="left:2063px;top:267px" width="28" height="28" viewBox="0 0 28 28"><path d="M2.200 14h23.600M14 2.200v23.600" stroke="#15141a" stroke-width="2.800" stroke-linecap="round" fill="none"/></svg>
<div class="abs" id="poptxt">Add image</div>

<div class="abs" style="left:2528px;top:236px;width:34px;height:1092px;background:#f0f0f0"></div>
<div class="abs" style="left:2528px;top:280px;width:34px;height:937px;background:#cdcdcf"></div>
<svg style="left:2528px;top:236px" width="34" height="44" viewBox="0 0 34 44"><path d="M9.500 19.800l8-8 8 8v-4.300l-8-8-8 8z" fill="#55555a" transform="translate(0,1)"/></svg>

<div class="abs" id="edgeL"></div>
<div class="abs" id="edgeR"></div>
</body>
</html>
